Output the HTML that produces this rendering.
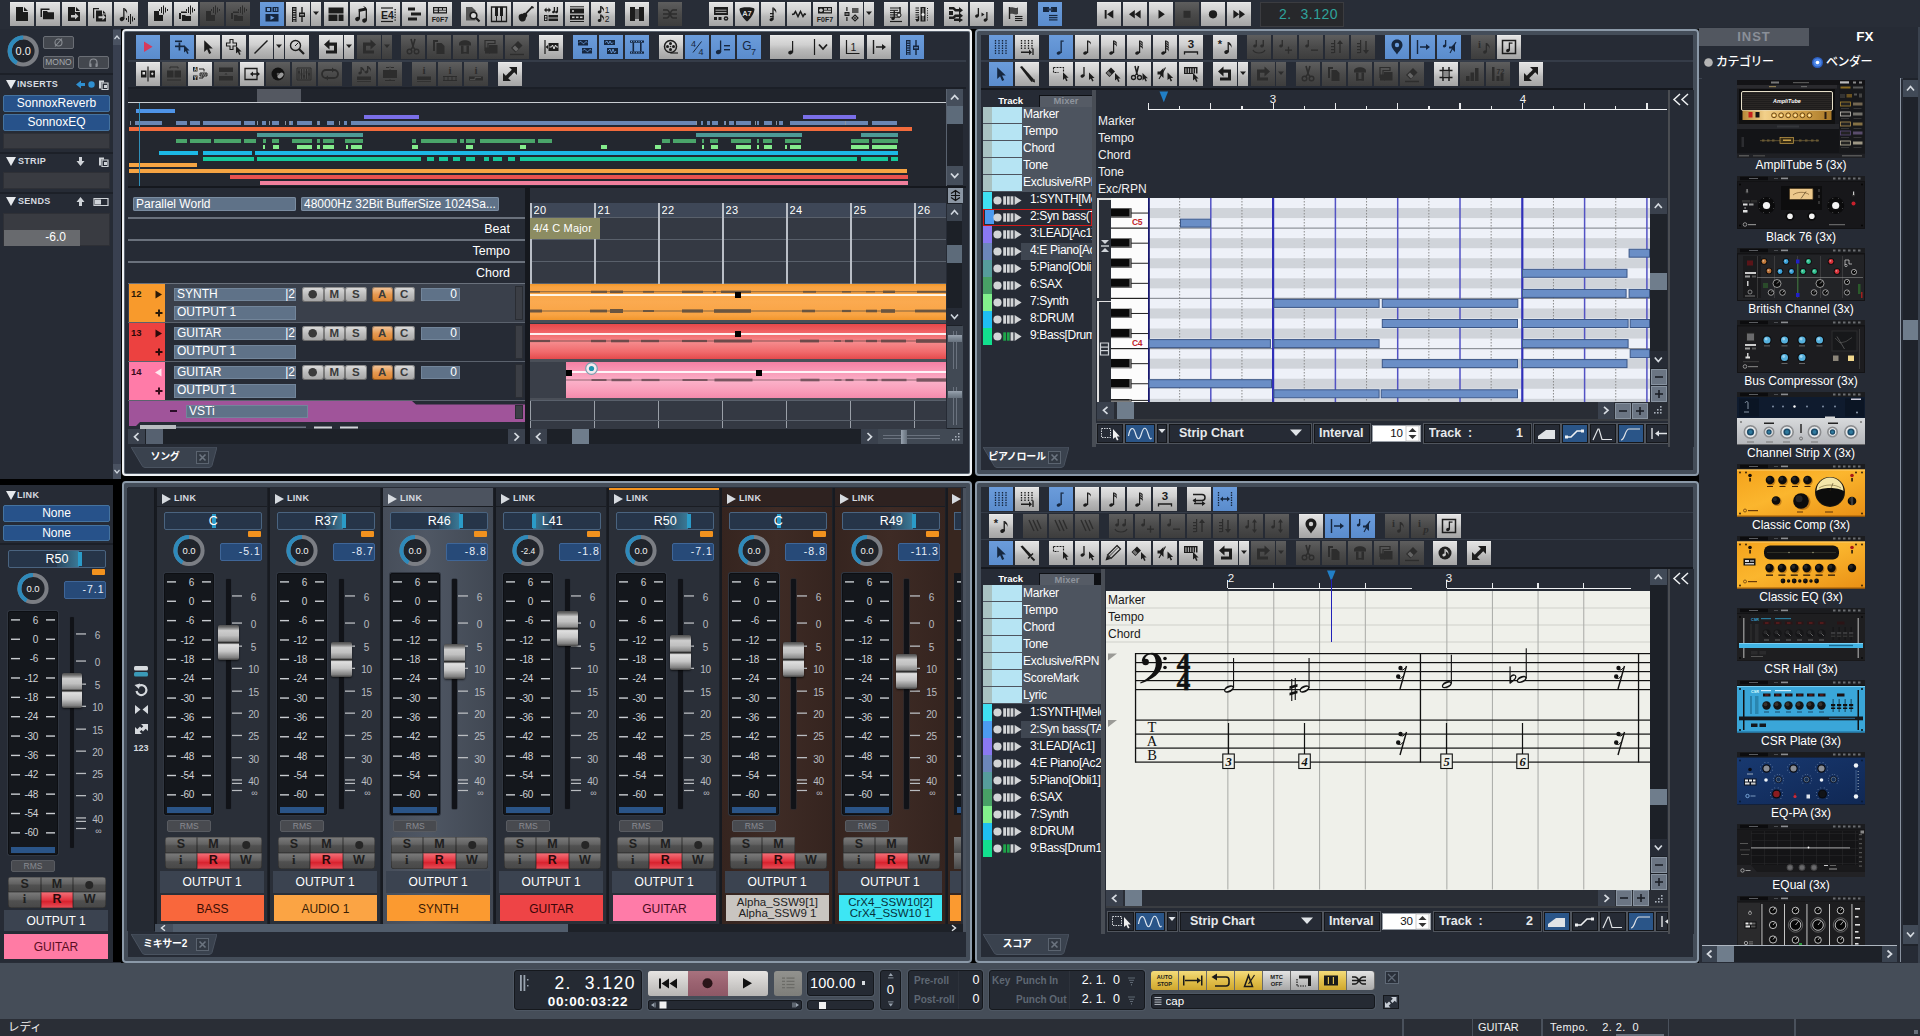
<!DOCTYPE html>
<html lang="ja"><head><meta charset="utf-8"><title>DAW</title><style>
html,body{margin:0;padding:0;background:#282d37;}
body{width:1920px;height:1036px;overflow:hidden;position:relative;font-family:"Liberation Sans","Noto Sans CJK JP",sans-serif;}
#r{position:absolute;left:0;top:0;width:1920px;height:1036px;overflow:hidden;background:#282d37;}
#r div,#r svg{position:absolute;box-sizing:border-box;}
#r svg svg{position:static}
.tb svg{left:0;top:0;}
.tb{overflow:hidden}
.bl{background:linear-gradient(#e4e4e4,#d0d0d0 40%,#bababa 60%,#a4a4a4);color:#1c1c1c;box-shadow:inset 0 1px 0 rgba(255,255,255,.25);}
.bb{background:linear-gradient(#6b9cdb,#5a8ccd);color:#16273f;}
.bd{background:linear-gradient(#5e5e5e,#4a4a4a 50%,#3d3d3d);color:#2d2d2d;}
text{font-family:"Liberation Sans","Noto Sans CJK JP",sans-serif;}
.jp{font-family:"Liberation Sans","Noto Sans CJK JP",sans-serif;}
</style></head><body><div id="r">
<div style="left:0px;top:0px;width:1920px;height:29px;background:#282d37;"></div>
<div class="tb bl" style="left:10px;top:2px;width:24px;height:24px"><svg width="24" height="24" viewBox="0 0 24 24"><path d="M6 5h7v5h5v9h-12z" fill="currentColor" stroke="none" stroke-width="1" /><path d="M14 5l4 4h-4z" fill="currentColor" stroke="none" stroke-width="1" /></svg></div>
<div class="tb bl" style="left:36px;top:2px;width:24px;height:24px"><svg width="24" height="24" viewBox="0 0 24 24"><path d="M4.5 6.5h9v1.5h-7.5v7h-1.5z" fill="currentColor" stroke="none" stroke-width="1" /><path d="M7 9h4l1 1.2h6v7h-11z" fill="currentColor" stroke="none" stroke-width="1" /></svg></div>
<div class="tb bl" style="left:62px;top:2px;width:24px;height:24px"><svg width="24" height="24" viewBox="0 0 24 24"><path d="M6 5h7v5h5v9h-12z" fill="currentColor" stroke="none" stroke-width="1" /><path d="M14 5l4 4h-4z" fill="currentColor" stroke="none" stroke-width="1" /><path d="M9 13h4v-2l3.5 3.2-3.5 3.2v-2h-4z" fill="#c8c8c8" stroke="none" stroke-width="1" /></svg></div>
<div class="tb bl" style="left:88px;top:2px;width:24px;height:24px"><svg width="24" height="24" viewBox="0 0 24 24"><path d="M5 6h6v1.2h-4.8v9h-1.2z" fill="currentColor" stroke="none" stroke-width="1" /><path d="M8 8.5h6v4h4v7h-10z" fill="currentColor" stroke="none" stroke-width="1" /><path d="M15 8.5l3 3h-3z" fill="currentColor" stroke="none" stroke-width="1" /><path d="M10.5 14.2h4v-2l3.2 3-3.2 3v-2h-4z" fill="#c8c8c8" stroke="none" stroke-width="1" /></svg></div>
<div class="tb bl" style="left:114px;top:2px;width:24px;height:24px"><svg width="24" height="24" viewBox="0 0 24 24"><ellipse cx="8" cy="17" rx="2.4" ry="2" fill="currentColor" transform="rotate(-20 8 17)"/><rect x="9.2" y="6" width="1.3" height="11" fill="currentColor" /><path d="M10.4 6.0 c2 1.5 3.5 3 2.5 6 c0 -2 -1 -3 -2.5 -3.5z" fill="currentColor" stroke="none" stroke-width="1" /><rect x="12" y="16" width="1" height="2" fill="currentColor" /><rect x="14" y="14" width="1" height="6" fill="currentColor" /><rect x="16" y="12" width="1" height="10" fill="currentColor" /><rect x="18" y="14.5" width="1" height="5" fill="currentColor" /><rect x="20" y="16" width="1" height="2" fill="currentColor" /></svg></div>
<div class="tb bl" style="left:148px;top:2px;width:24px;height:24px"><svg width="24" height="24" viewBox="0 0 24 24"><path d="M6 9h5v4h4v6h-9z" fill="currentColor" stroke="none" stroke-width="1" /><rect x="11" y="7" width="1" height="2" fill="currentColor" /><rect x="13" y="5" width="1" height="6" fill="currentColor" /><rect x="15" y="3.5" width="1" height="9" fill="currentColor" /><rect x="17" y="5.5" width="1" height="5" fill="currentColor" /><rect x="19" y="7" width="1" height="2" fill="currentColor" /></svg></div>
<div class="tb bl" style="left:174px;top:2px;width:24px;height:24px"><svg width="24" height="24" viewBox="0 0 24 24"><path d="M5 11h2v-1.5h6v1.5h-6v6h-2z" fill="currentColor" stroke="none" stroke-width="1" /><path d="M8 13h3l1 1h5v5h-9z" fill="currentColor" stroke="none" stroke-width="1" /><rect x="12" y="7" width="1" height="2" fill="currentColor" /><rect x="14" y="5" width="1" height="6" fill="currentColor" /><rect x="16" y="3.5" width="1" height="9" fill="currentColor" /><rect x="18" y="5.5" width="1" height="5" fill="currentColor" /><rect x="20" y="7" width="1" height="2" fill="currentColor" /></svg></div>
<div class="tb bd" style="left:200px;top:2px;width:24px;height:24px"><svg width="24" height="24" viewBox="0 0 24 24"><path d="M6 9h5v4h4v6h-9z" fill="currentColor" stroke="none" stroke-width="1" /><rect x="11" y="7" width="1" height="2" fill="currentColor" /><rect x="13" y="5" width="1" height="6" fill="currentColor" /><rect x="15" y="3.5" width="1" height="9" fill="currentColor" /><rect x="17" y="5.5" width="1" height="5" fill="currentColor" /><rect x="19" y="7" width="1" height="2" fill="currentColor" /></svg></div>
<div class="tb bd" style="left:226px;top:2px;width:24px;height:24px"><svg width="24" height="24" viewBox="0 0 24 24"><path d="M5 11h2v-1.5h6v1.5h-6v6h-2z" fill="currentColor" stroke="none" stroke-width="1" /><path d="M8 13h3l1 1h5v5h-9z" fill="currentColor" stroke="none" stroke-width="1" /><rect x="12" y="7" width="1" height="2" fill="currentColor" /><rect x="14" y="5" width="1" height="6" fill="currentColor" /><rect x="16" y="3.5" width="1" height="9" fill="currentColor" /><rect x="18" y="5.5" width="1" height="5" fill="currentColor" /><rect x="20" y="7" width="1" height="2" fill="currentColor" /></svg></div>
<div class="tb bb" style="left:260px;top:2px;width:24px;height:24px"><svg width="24" height="24" viewBox="0 0 24 24"><rect x="5.5" y="5" width="6" height="5" fill="currentColor" /><rect x="12.5" y="5" width="6" height="5" fill="currentColor" /><rect x="5.5" y="12" width="13" height="7.5" fill="currentColor" /><path d="M10.5 13.5l4 2.2-4 2.2z" fill="#6b9cdb" stroke="none" stroke-width="1" /><rect x="14.2" y="6" width="1" height="3" fill="#6b9cdb" /><rect x="16.2" y="6" width="1" height="3" fill="#6b9cdb" /><rect x="7" y="6" width="3" height="3" fill="#6b9cdb" /></svg></div>
<div class="tb bl" style="left:286px;top:2px;width:24px;height:24px"><svg width="24" height="24" viewBox="0 0 24 24"><rect x="6" y="5" width="4.5" height="15" fill="currentColor" /><rect x="7" y="6.5" width="2.5" height="1" fill="#c6c6c6" /><rect x="7" y="8.9" width="2.5" height="1" fill="#c6c6c6" /><rect x="7" y="11.3" width="2.5" height="1" fill="#c6c6c6" /><rect x="7" y="13.7" width="2.5" height="1" fill="#c6c6c6" /><rect x="7" y="16.1" width="2.5" height="1" fill="#c6c6c6" /><rect x="7" y="18.5" width="2.5" height="1" fill="#c6c6c6" /><rect x="15.3" y="5" width="1.4" height="15" fill="currentColor" /><rect x="13" y="10.5" width="6" height="4.5" fill="currentColor" /><rect x="14" y="12.3" width="4" height="1" fill="#c6c6c6" /></svg></div>
<div class="tb bl" style="left:324px;top:2px;width:24px;height:24px"><svg width="24" height="24" viewBox="0 0 24 24"><rect x="4.5" y="5.5" width="15" height="6" fill="currentColor" /><rect x="4.5" y="12.5" width="9" height="6.5" fill="currentColor" /><rect x="14.5" y="12.5" width="5" height="6.5" fill="currentColor" /></svg></div>
<div class="tb bl" style="left:350px;top:2px;width:24px;height:24px"><svg width="24" height="24" viewBox="0 0 24 24"><ellipse cx="7.5" cy="17" rx="2.4" ry="2" fill="currentColor" transform="rotate(-20 7.5 17)"/><rect x="8.7" y="7" width="1.3" height="10" fill="currentColor" /><ellipse cx="14.5" cy="18.5" rx="2.4" ry="2" fill="currentColor" transform="rotate(-20 14.5 18.5)"/><rect x="15.7" y="7" width="1.3" height="11.5" fill="currentColor" /><path d="M8.8 7l7.2-1.5v3l-7.2 1.5z" fill="currentColor" stroke="none" stroke-width="1" /><path d="M8.8 3.5l7.2 1.5v0.0z" fill="currentColor" stroke="none" stroke-width="1" /><path d="M13 4c3 0.5 4 2.5 4 4.5" fill="currentColor" stroke="none" stroke-width="1" /></svg></div>
<div class="tb bl" style="left:376px;top:2px;width:24px;height:24px"><svg width="24" height="24" viewBox="0 0 24 24"><text x="5" y="17" font-size="10.5" fill="currentColor" text-anchor="start" font-weight="bold" >E4</text><line x1="5" y1="6" x2="17" y2="6" stroke="currentColor" stroke-width="1.2" /><line x1="5" y1="19.5" x2="17" y2="19.5" stroke="currentColor" stroke-width="1.2" /><rect x="18.5" y="7" width="1.3" height="1.3" fill="currentColor" /><rect x="18.5" y="9.6" width="1.3" height="1.3" fill="currentColor" /><rect x="18.5" y="12.2" width="1.3" height="1.3" fill="currentColor" /><rect x="18.5" y="14.8" width="1.3" height="1.3" fill="currentColor" /><rect x="18.5" y="17.4" width="1.3" height="1.3" fill="currentColor" /></svg></div>
<div class="tb bl" style="left:402px;top:2px;width:24px;height:24px"><svg width="24" height="24" viewBox="0 0 24 24"><rect x="6" y="5.5" width="7" height="3" fill="currentColor" /><rect x="9" y="10.5" width="10" height="3" fill="currentColor" /><rect x="6" y="15.5" width="9" height="3" fill="currentColor" /></svg></div>
<div class="tb bl" style="left:428px;top:2px;width:24px;height:24px"><svg width="24" height="24" viewBox="0 0 24 24"><rect x="5" y="5" width="14" height="6.5" fill="currentColor" /><rect x="6.2" y="6.2" width="3.6" height="1.6" fill="#c6c6c6" /><rect x="6.2" y="8.6" width="3.6" height="1.6" fill="#c6c6c6" /><rect x="11" y="6.2" width="3" height="1.6" fill="#c6c6c6" /><rect x="15" y="6.2" width="3" height="1.6" fill="#c6c6c6" /><rect x="11" y="8.6" width="7" height="1.6" fill="#c6c6c6" /><text x="12" y="19.5" font-size="7" fill="currentColor" text-anchor="middle" font-weight="bold" >F0F7</text></svg></div>
<div class="tb bl" style="left:461px;top:2px;width:24px;height:24px"><svg width="24" height="24" viewBox="0 0 24 24"><path d="M5 5h6l3.5 3.5v10h-9.5z" fill="#555" stroke="none" stroke-width="1" /><circle cx="12.5" cy="13.5" r="3.3" fill="#d8d8d8" stroke="currentColor" stroke-width="1.6" /><line x1="15" y1="16" x2="18.5" y2="19.5" stroke="currentColor" stroke-width="2.2" /></svg></div>
<div class="tb bl" style="left:487px;top:2px;width:24px;height:24px"><svg width="24" height="24" viewBox="0 0 24 24"><path d="M4.5 5h15v14.5h-15z" fill="none" stroke="currentColor" stroke-width="1.3" /><line x1="9.5" y1="5" x2="9.5" y2="19.5" stroke="currentColor" stroke-width="1" /><line x1="14.5" y1="5" x2="14.5" y2="19.5" stroke="currentColor" stroke-width="1" /><rect x="8" y="5" width="3" height="9" fill="currentColor" /><rect x="13" y="5" width="3" height="9" fill="currentColor" /></svg></div>
<div class="tb bl" style="left:513px;top:2px;width:24px;height:24px"><svg width="24" height="24" viewBox="0 0 24 24"><path d="M19.5 4.5l-7.5 8" fill="none" stroke="currentColor" stroke-width="1.8" /><path d="M18 4l3 1-1 2z" fill="currentColor" stroke="none" stroke-width="1" /><path d="M6 13c1.5-1.5 3-0.5 4-1.5s2.5-1 3.5 0 1 2.5 0 3.5-0.5 2.5-1.5 3.5-3 1.5-4.5 0.5-2.5-4-1.5-6z" fill="currentColor" stroke="none" stroke-width="1" /></svg></div>
<div class="tb bl" style="left:539px;top:2px;width:24px;height:24px"><svg width="24" height="24" viewBox="0 0 24 24"><path d="M5 8l2.5-2.5v1.7h2v-1.7l2.500 2.5-2.5 2.5v-1.700h-2v1.700z" fill="currentColor" stroke="none" stroke-width="1" /><ellipse cx="14.5" cy="10" rx="1.44" ry="1.2" fill="currentColor" transform="rotate(-20 14.5 10)"/><rect x="14.74" y="5" width="1.3" height="5" fill="currentColor" /><ellipse cx="17.5" cy="10" rx="1.44" ry="1.2" fill="currentColor" transform="rotate(-20 17.5 10)"/><rect x="17.74" y="5" width="1.3" height="5" fill="currentColor" /><rect x="5" y="13" width="3.5" height="6" fill="currentColor" /><rect x="9.5" y="13" width="9.5" height="2.5" fill="currentColor" /><rect x="9.5" y="16.5" width="9.5" height="2.5" fill="currentColor" /><rect x="6" y="14" width="1.5" height="1.5" fill="#c6c6c6" /><rect x="6" y="16.5" width="1.5" height="1.5" fill="#c6c6c6" /></svg></div>
<div class="tb bl" style="left:565px;top:2px;width:24px;height:24px"><svg width="24" height="24" viewBox="0 0 24 24"><line x1="5" y1="4.8" x2="19" y2="4.8" stroke="currentColor" stroke-width="1" /><rect x="5" y="6.5" width="14" height="5" fill="currentColor" /><rect x="5" y="12.8" width="14" height="5" fill="currentColor" /><line x1="5" y1="19.5" x2="19" y2="19.5" stroke="currentColor" stroke-width="1" /><rect x="7" y="8.2" width="2" height="1.6" fill="#c6c6c6" /><rect x="7" y="14.5" width="2.5" height="1.6" fill="#c6c6c6" /><rect x="11" y="14.5" width="2.5" height="1.6" fill="#c6c6c6" /><rect x="15" y="14.5" width="2.5" height="1.6" fill="#c6c6c6" /></svg></div>
<div class="tb bl" style="left:591px;top:2px;width:24px;height:24px"><svg width="24" height="24" viewBox="0 0 24 24"><ellipse cx="8.5" cy="10" rx="1.8" ry="1.5" fill="currentColor" transform="rotate(-20 8.5 10)"/><rect x="9.1" y="4" width="1.3" height="6" fill="currentColor" /><path d="M10.3 4.0 c2 1.5 3.5 3 2.5 6 c0 -2 -1 -3 -2.5 -3.5z" fill="currentColor" stroke="none" stroke-width="1" /><ellipse cx="8.5" cy="18.5" rx="1.8" ry="1.5" fill="currentColor" transform="rotate(-20 8.5 18.5)"/><rect x="9.1" y="12.5" width="1.3" height="6" fill="currentColor" /><path d="M10.3 12.5 c2 1.5 3.5 3 2.5 6 c0 -2 -1 -3 -2.5 -3.5z" fill="currentColor" stroke="none" stroke-width="1" /><text x="16" y="11" font-size="8.5" fill="currentColor" text-anchor="middle" font-weight="normal" >1</text><text x="16" y="19.5" font-size="8.5" fill="currentColor" text-anchor="middle" font-weight="normal" >2</text></svg></div>
<div class="tb bl" style="left:625px;top:2px;width:24px;height:24px"><svg width="24" height="24" viewBox="0 0 24 24"><rect x="5" y="5" width="5" height="14" fill="currentColor" /><rect x="14" y="5" width="5" height="14" fill="currentColor" /><rect x="10" y="7" width="4" height="10" fill="#555" /></svg></div>
<div class="tb bd" style="left:658px;top:2px;width:24px;height:24px"><svg width="24" height="24" viewBox="0 0 24 24"><path d="M5 8h4c3 0 3 8 6 8h4M5 12h14M5 16h4c3 0 3-8 6-8h4" fill="none" stroke="currentColor" stroke-width="1.6" /></svg></div>
<div class="tb bl" style="left:709px;top:2px;width:24px;height:24px"><svg width="24" height="24" viewBox="0 0 24 24"><rect x="5" y="5" width="14" height="8" fill="currentColor" /><line x1="6.5" y1="8.2" x2="17.5" y2="8.2" stroke="#c6c6c6" stroke-width="0.8" /><line x1="6.5" y1="10.5" x2="17.5" y2="10.5" stroke="#c6c6c6" stroke-width="0.8" /><rect x="5" y="15" width="3" height="3" fill="currentColor" /><rect x="9.5" y="15" width="3" height="3" fill="currentColor" /><circle cx="17" cy="16.5" r="2.3" fill="currentColor" stroke="none" stroke-width="1" /><circle cx="17" cy="16.5" r="0.8" fill="#c6c6c6" stroke="none" stroke-width="1" /></svg></div>
<div class="tb bl" style="left:735px;top:2px;width:24px;height:24px"><svg width="24" height="24" viewBox="0 0 24 24"><path d="M4.5 7c0-2.500 15-2.500 15 0 0 4-4 10-7.5 12.500-3.500-2.500-7.500-8.500-7.500-12.500z" fill="currentColor" stroke="none" stroke-width="1" /><text x="12" y="13.5" font-size="7.5" fill="#d8d8d8" text-anchor="middle" font-weight="bold" >A7</text></svg></div>
<div class="tb bl" style="left:761px;top:2px;width:24px;height:24px"><svg width="24" height="24" viewBox="0 0 24 24"><ellipse cx="10.5" cy="17.5" rx="2.04" ry="1.7" fill="currentColor" transform="rotate(-20 10.5 17.5)"/><rect x="11.34" y="5.5" width="1.3" height="12" fill="currentColor" /><path d="M12.5 5.5 c2 1.5 3.5 3 2.5 6 c0 -2 -1 -3 -2.5 -3.5z" fill="currentColor" stroke="none" stroke-width="1" /><rect x="9" y="11" width="3.5" height="1.2" fill="currentColor" /><rect x="9" y="14" width="3.5" height="1.2" fill="currentColor" /></svg></div>
<div class="tb bl" style="left:787px;top:2px;width:24px;height:24px"><svg width="24" height="24" viewBox="0 0 24 24"><path d="M5 12.500l2-0.500 1.500-2.500 2.500 5 2.500-5 2.500 5 1.500-2.500 1.500 0.500" fill="none" stroke="currentColor" stroke-width="1.5" /></svg></div>
<div class="tb bl" style="left:813px;top:2px;width:24px;height:24px"><svg width="24" height="24" viewBox="0 0 24 24"><rect x="5" y="5" width="14" height="6.5" fill="currentColor" /><circle cx="8" cy="8.2" r="1.8" fill="#c6c6c6" stroke="none" stroke-width="1" /><rect x="11" y="6.2" width="3" height="1.6" fill="#c6c6c6" /><rect x="15" y="6.2" width="3" height="1.6" fill="#c6c6c6" /><rect x="11" y="8.6" width="7" height="1.6" fill="#c6c6c6" /><text x="12" y="19.5" font-size="7" fill="currentColor" text-anchor="middle" font-weight="bold" >F0F7</text></svg></div>
<div class="tb bl" style="left:839px;top:2px;width:24px;height:24px"><svg width="24" height="24" viewBox="0 0 24 24"><rect x="7.3" y="5" width="1.2" height="4" fill="currentColor" /><rect x="5.5" y="10" width="5" height="4" fill="currentColor" /><rect x="6.5" y="11.5" width="3" height="1" fill="#c6c6c6" /><rect x="7.3" y="15" width="1.2" height="4" fill="currentColor" /><rect x="13" y="6" width="6.5" height="5" fill="#555" /><path d="M16 13l3 3-3 3-3-3z" fill="none" stroke="currentColor" stroke-width="1.2" /><circle cx="16" cy="16" r="0.9" fill="currentColor" stroke="none" stroke-width="1" /></svg></div>
<div class="tb bl" style="left:884px;top:2px;width:24px;height:24px"><svg width="24" height="24" viewBox="0 0 24 24"><line x1="6" y1="6" x2="16" y2="6" stroke="currentColor" stroke-width="1" /><line x1="6" y1="8.3" x2="14" y2="8.3" stroke="currentColor" stroke-width="1" /><line x1="6" y1="10.6" x2="16" y2="10.6" stroke="currentColor" stroke-width="1" /><line x1="6" y1="12.9" x2="14" y2="12.9" stroke="currentColor" stroke-width="1" /><line x1="6" y1="15.2" x2="16" y2="15.2" stroke="currentColor" stroke-width="1" /><line x1="6" y1="19.5" x2="18" y2="19.5" stroke="currentColor" stroke-width="1.2" /><ellipse cx="9" cy="16.5" rx="1.8" ry="1.5" fill="currentColor" transform="rotate(-20 9 16.5)"/><rect x="9.6" y="8.5" width="1.3" height="8" fill="currentColor" /><path d="M16 5v10" fill="none" stroke="currentColor" stroke-width="1.5" /><circle cx="15" cy="13" r="2" fill="#ddd" stroke="currentColor" stroke-width="1" /></svg></div>
<div class="tb bl" style="left:910px;top:2px;width:24px;height:24px"><svg width="24" height="24" viewBox="0 0 24 24"><rect x="5.5" y="5.5" width="3.5" height="1" fill="currentColor" /><rect x="5.5" y="7.8" width="3.5" height="1" fill="currentColor" /><rect x="5.5" y="10.1" width="3.5" height="1" fill="currentColor" /><rect x="5.5" y="12.4" width="3.5" height="1" fill="currentColor" /><rect x="5.5" y="14.7" width="3.5" height="1" fill="currentColor" /><rect x="5.5" y="17" width="3.5" height="1" fill="currentColor" /><rect x="10.5" y="5" width="5" height="14.5" fill="currentColor" /><rect x="12.5" y="6" width="1" height="12.5" fill="#c6c6c6" /><circle cx="13" cy="12.5" r="1.5" fill="#eee" stroke="none" stroke-width="1" /><rect x="17" y="6" width="1" height="1" fill="currentColor" /><rect x="17" y="8.3" width="1" height="1" fill="currentColor" /><rect x="17" y="10.6" width="1" height="1" fill="currentColor" /><rect x="17" y="12.9" width="1" height="1" fill="currentColor" /><rect x="17" y="15.2" width="1" height="1" fill="currentColor" /><rect x="17" y="17.5" width="1" height="1" fill="currentColor" /><ellipse cx="7.5" cy="18.2" rx="1.56" ry="1.3" fill="currentColor" transform="rotate(-20 7.5 18.2)"/><rect x="7.86" y="14.2" width="1.3" height="4" fill="currentColor" /></svg></div>
<div class="tb bl" style="left:944px;top:2px;width:24px;height:24px"><svg width="24" height="24" viewBox="0 0 24 24"><path d="M5 5h5l2 2h3v-2l4 3.200-4 3.200v-2h-4l-2-2h-4z" fill="currentColor" stroke="none" stroke-width="1" /><path d="M5 14.500h4l2-2h4v-2l4 3.200-4 3.200v-2h-3l-2 2h-5z" fill="currentColor" stroke="none" stroke-width="1" /><rect x="5" y="9" width="4" height="4" fill="currentColor" /><path d="M10 16.500h5v-1l4 2.500-4 2.500v-1.500h-5z" fill="currentColor" stroke="none" stroke-width="1" /></svg></div>
<div class="tb bl" style="left:970px;top:2px;width:24px;height:24px"><svg width="24" height="24" viewBox="0 0 24 24"><ellipse cx="7" cy="14" rx="1.92" ry="1.6" fill="currentColor" transform="rotate(-20 7 14)"/><rect x="7.72" y="6" width="1.3" height="8" fill="currentColor" /><path d="M11.500 10.500l3 2-3 2z" fill="currentColor" stroke="none" stroke-width="1" /><ellipse cx="15.5" cy="18" rx="1.92" ry="1.6" fill="currentColor" transform="rotate(-20 15.5 18)"/><rect x="16.22" y="10" width="1.3" height="8" fill="currentColor" /></svg></div>
<div class="tb bl" style="left:1003px;top:2px;width:24px;height:24px"><svg width="24" height="24" viewBox="0 0 24 24"><line x1="6.5" y1="5" x2="6.5" y2="17" stroke="currentColor" stroke-width="1.4" /><path d="M7 5.500c3-1 4 1.500 8 0v6.500c-4 1.500-5-1-8 0z" fill="#444" stroke="none" stroke-width="1" /><line x1="12" y1="14.5" x2="19.5" y2="14.5" stroke="currentColor" stroke-width="1.1" /><line x1="12" y1="16.5" x2="19.5" y2="16.5" stroke="currentColor" stroke-width="1.1" /><line x1="12" y1="18.5" x2="19.5" y2="18.5" stroke="currentColor" stroke-width="1.1" /></svg></div>
<div class="tb bb" style="left:1038px;top:2px;width:24px;height:24px"><svg width="24" height="24" viewBox="0 0 24 24"><rect x="5" y="5" width="6" height="5" fill="currentColor" /><rect x="13" y="5" width="6" height="5" fill="currentColor" /><rect x="9.5" y="6.5" width="5" height="2" fill="#2c3f5c" /><line x1="11" y1="13.5" x2="19.5" y2="13.5" stroke="currentColor" stroke-width="1.2" /><line x1="11" y1="15.7" x2="19.5" y2="15.7" stroke="currentColor" stroke-width="1.2" /><line x1="11" y1="17.9" x2="19.5" y2="17.9" stroke="currentColor" stroke-width="1.2" /></svg></div>
<div class="tb bl" style="left:1097px;top:2px;width:24px;height:24px"><svg width="24" height="24" viewBox="0 0 24 24"><rect x="7.7" y="8" width="1.9" height="8.6" fill="currentColor" /><path d="M16.300 8v8.600l-6.300-4.300z" fill="currentColor" stroke="none" stroke-width="1" /></svg></div>
<div class="tb bl" style="left:1123px;top:2px;width:24px;height:24px"><svg width="24" height="24" viewBox="0 0 24 24"><path d="M11.800 8v8.600l-5.800-4.300z" fill="currentColor" stroke="none" stroke-width="1" /><path d="M17.600 8v8.600l-5.800-4.300z" fill="currentColor" stroke="none" stroke-width="1" /></svg></div>
<div class="tb bl" style="left:1149px;top:2px;width:24px;height:24px"><svg width="24" height="24" viewBox="0 0 24 24"><path d="M9.500 7.800l6.300 4.500-6.300 4.500z" fill="currentColor" stroke="none" stroke-width="1" /></svg></div>
<div class="tb bd" style="left:1175px;top:2px;width:24px;height:24px"><svg width="24" height="24" viewBox="0 0 24 24"><rect x="8.5" y="8.8" width="7" height="7" fill="currentColor" /></svg></div>
<div class="tb bl" style="left:1201px;top:2px;width:24px;height:24px"><svg width="24" height="24" viewBox="0 0 24 24"><circle cx="12" cy="12.3" r="4.1" fill="currentColor" stroke="none" stroke-width="1" /></svg></div>
<div class="tb bl" style="left:1227px;top:2px;width:24px;height:24px"><svg width="24" height="24" viewBox="0 0 24 24"><path d="M6.400 8v8.600l5.800-4.300z" fill="currentColor" stroke="none" stroke-width="1" /><path d="M12.200 8v8.600l5.800-4.300z" fill="currentColor" stroke="none" stroke-width="1" /></svg></div>
<div class="tb bl" style="left:311px;top:2px;width:10px;height:24px"><svg width="10" height="24" viewBox="0 0 10 24"><path d="M2 9.500h6l-3 3.500z" fill="currentColor" stroke="none" stroke-width="1" /></svg></div>
<div class="tb bl" style="left:864px;top:2px;width:10px;height:24px"><svg width="10" height="24" viewBox="0 0 10 24"><path d="M2 9.500h6l-3 3.500z" fill="currentColor" stroke="none" stroke-width="1" /></svg></div>
<div style="left:1260px;top:2px;width:84px;height:25px;background:#27282b;border:1px solid #3b3c40;"></div>
<div style="left:1262px;top:2px;width:76px;height:25px;line-height:25px;font-size:14px;color:#2fa39b;text-align:right;white-space:nowrap;overflow:hidden;letter-spacing:0.5px;">2.&nbsp; 3.120</div>
<div style="left:121px;top:29px;width:1580px;height:934px;background:#000;"></div>
<div style="left:0px;top:29px;width:113px;height:450px;background:#262b35;"></div>
<div style="left:0px;top:479px;width:113px;height:6px;background:#000;"></div>
<div style="left:0px;top:485px;width:113px;height:477px;background:#262b35;"></div>
<div style="left:113px;top:29px;width:8px;height:450px;background:#394050;"></div>
<div style="left:113px;top:30px;width:8px;height:15px;background:#4a5261;"></div>
<svg style="left:113px;top:30px;" width="8" height="15" viewBox="0 0 8 15"><path d="M1.500 9l2.500-3 2.500 3" fill="none" stroke="#cfd6de" stroke-width="1.2" /></svg>
<div style="left:113px;top:464px;width:8px;height:15px;background:#4a5261;"></div>
<svg style="left:113px;top:464px;" width="8" height="15" viewBox="0 0 8 15"><path d="M1.500 6l2.500 3 2.500-3" fill="none" stroke="#cfd6de" stroke-width="1.2" /></svg>
<div style="left:121px;top:29px;width:2px;height:933px;background:#000;"></div>
<div style="left:113px;top:479px;width:10px;height:483px;background:#000;"></div>
<svg style="left:2px;top:30px;" width="42" height="42" viewBox="0 0 42 42"><circle cx="21.2" cy="21" r="11.7" fill="#20242b" stroke="none" stroke-width="1" /><circle cx="21.2" cy="21" r="13.5" fill="none" stroke="#7b7e84" stroke-width="4.2" /><path d="M14.86 32.92 A13.5 13.5 0 0 1 21.20 7.50" fill="none" stroke="#2e8abb" stroke-width="4.2"/><text x="21.2" y="24.96" font-size="11" fill="#f2f2f2" text-anchor="middle" font-weight="normal" >0.0</text></svg>
<div style="left:43px;top:36px;width:31px;height:13px;background:#43474e;border:1px solid #6a6e75;border-radius:2px;"></div>
<svg style="left:43px;top:36px;" width="31" height="13" viewBox="0 0 31 13"><circle cx="15.5" cy="6.5" r="3.5" fill="none" stroke="#8a8e94" stroke-width="1.1" /><line x1="12" y1="10.5" x2="19" y2="2.5" stroke="#8a8e94" stroke-width="1.1" /></svg>
<div style="left:43px;top:56px;width:31px;height:13px;background:#43474e;border:1px solid #6a6e75;border-radius:2px;"></div>
<div style="left:43px;top:56px;width:31px;height:13px;line-height:13px;font-size:8.5px;color:#a3a7ad;text-align:center;white-space:nowrap;overflow:hidden;">MONO</div>
<div style="left:78px;top:56px;width:31px;height:13px;background:#43474e;border:1px solid #6a6e75;border-radius:2px;"></div>
<svg style="left:78px;top:56px;" width="31" height="13" viewBox="0 0 31 13"><path d="M12 10v-3.500a3.500 3.500 0 0 1 7 0v3.500" fill="none" stroke="#8a8e94" stroke-width="1.2" /><rect x="11.5" y="7.5" width="2" height="3.5" fill="#8a8e94" /><rect x="17.5" y="7.5" width="2" height="3.5" fill="#8a8e94" /></svg>
<div style="left:0px;top:73px;width:113px;height:2px;background:#1c2028;"></div>
<svg style="left:6px;top:80px;" width="10" height="9" viewBox="0 0 10 9"><path d="M0 0h10l-5 9z" fill="#e6e9ec" stroke="none" stroke-width="1" /></svg>
<div style="left:17px;top:78px;width:60px;height:13px;line-height:13px;font-size:9px;color:#d7dbe0;text-align:left;white-space:nowrap;overflow:hidden;font-weight:bold;letter-spacing:0.3px;">INSERTS</div>
<svg style="left:74px;top:78px;" width="40" height="13" viewBox="0 0 40 13"><path d="M2 6.500l5-4v2.500h4v3h-4v2.500z" fill="#2f8fd0" stroke="none" stroke-width="1" /><circle cx="17.5" cy="6.5" r="3.2" fill="#2f8fd0" stroke="none" stroke-width="1" /><path d="M25 2.500h5v2h-3v6h-2z" fill="#cfd3d8" stroke="none" stroke-width="1" /><path d="M28 5h6v6.500h-6z" fill="none" stroke="#cfd3d8" stroke-width="1.2" /><rect x="30" y="7" width="3" height="3" fill="#cfd3d8" /></svg>
<div style="left:3px;top:95px;width:107px;height:16.5px;background:#27528a;border:1px solid #45739f;border-radius:2px;"></div>
<div style="left:3px;top:95px;width:107px;height:16.5px;line-height:16.5px;font-size:12px;color:#fff;text-align:center;white-space:nowrap;overflow:hidden;">SonnoxReverb</div>
<div style="left:3px;top:114px;width:107px;height:16.5px;background:#27528a;border:1px solid #45739f;border-radius:2px;"></div>
<div style="left:3px;top:114px;width:107px;height:16.5px;line-height:16.5px;font-size:12px;color:#fff;text-align:center;white-space:nowrap;overflow:hidden;">SonnoxEQ</div>
<div style="left:3px;top:133px;width:107px;height:16px;background:#393b41;border:1px solid #2e3036;"></div>
<div style="left:0px;top:152px;width:113px;height:2px;background:#1c2028;"></div>
<svg style="left:6px;top:157px;" width="10" height="9" viewBox="0 0 10 9"><path d="M0 0h10l-5 9z" fill="#e6e9ec" stroke="none" stroke-width="1" /></svg>
<div style="left:18px;top:155px;width:60px;height:13px;line-height:13px;font-size:9px;color:#d7dbe0;text-align:left;white-space:nowrap;overflow:hidden;font-weight:bold;letter-spacing:0.3px;">STRIP</div>
<svg style="left:74px;top:155px;" width="40" height="13" viewBox="0 0 40 13"><path d="M6.500 11l-4-5h2.500v-4h3v4h2.500z" fill="#cfd3d8" stroke="none" stroke-width="1" /><path d="M25 2.500h5v2h-3v6h-2z" fill="#cfd3d8" stroke="none" stroke-width="1" /><path d="M28 5h6v6.500h-6z" fill="none" stroke="#cfd3d8" stroke-width="1.2" /><rect x="30" y="7" width="3" height="3" fill="#cfd3d8" /></svg>
<div style="left:3px;top:172px;width:107px;height:17px;background:#393b41;border:1px solid #2e3036;"></div>
<div style="left:0px;top:192px;width:113px;height:2px;background:#1c2028;"></div>
<svg style="left:6px;top:197px;" width="10" height="9" viewBox="0 0 10 9"><path d="M0 0h10l-5 9z" fill="#e6e9ec" stroke="none" stroke-width="1" /></svg>
<div style="left:18px;top:195px;width:60px;height:13px;line-height:13px;font-size:9px;color:#d7dbe0;text-align:left;white-space:nowrap;overflow:hidden;font-weight:bold;letter-spacing:0.3px;">SENDS</div>
<svg style="left:74px;top:195px;" width="40" height="13" viewBox="0 0 40 13"><path d="M6.500 2l4 5h-2.500v4h-3v-4h-2.500z" fill="#cfd3d8" stroke="none" stroke-width="1" /><path d="M20 3.500h14v7h-14z" fill="none" stroke="#cfd3d8" stroke-width="1.2" /><rect x="21" y="4.5" width="6" height="5" fill="#cfd3d8" /></svg>
<div style="left:3px;top:213px;width:107px;height:33px;background:#393b41;border:1px solid #2e3036;"></div>
<div style="left:4px;top:230px;width:76px;height:15.5px;background:#686a6e;"></div>
<div style="left:4px;top:230px;width:62px;height:15.5px;line-height:15.5px;font-size:12px;color:#fff;text-align:right;white-space:nowrap;overflow:hidden;">-6.0</div>
<svg style="left:6px;top:491px;" width="10" height="9" viewBox="0 0 10 9"><path d="M0 0h10l-5 9z" fill="#e6e9ec" stroke="none" stroke-width="1" /></svg>
<div style="left:17px;top:488.5px;width:60px;height:13px;line-height:13px;font-size:9px;color:#d7dbe0;text-align:left;white-space:nowrap;overflow:hidden;font-weight:bold;letter-spacing:0.3px;">LINK</div>
<div style="left:3px;top:505px;width:107px;height:16.5px;background:#27528a;border:1px solid #45739f;border-radius:2px;"></div>
<div style="left:3px;top:505px;width:107px;height:16.5px;line-height:16.5px;font-size:12px;color:#fff;text-align:center;white-space:nowrap;overflow:hidden;">None</div>
<div style="left:3px;top:524.5px;width:107px;height:16.5px;background:#27528a;border:1px solid #45739f;border-radius:2px;"></div>
<div style="left:3px;top:524.5px;width:107px;height:16.5px;line-height:16.5px;font-size:12px;color:#fff;text-align:center;white-space:nowrap;overflow:hidden;">None</div>
<div style="left:0px;top:543px;width:113px;height:1.5px;background:#1c2028;"></div>
<div style="left:8px;top:550px;width:98px;height:18px;background:#263549;border:1px solid #4a6480;border-radius:2px;"></div>
<div style="left:57px;top:551px;width:22px;height:16px;background:linear-gradient(90deg,#2a465e,#3a7a98);"></div>
<div style="left:77.5px;top:552px;width:4px;height:14px;background:#2b9bc8;"></div>
<div style="left:8px;top:550px;width:98px;height:18px;line-height:18px;font-size:12.5px;color:#fff;text-align:center;white-space:nowrap;overflow:hidden;">R50</div>
<div style="left:91.5px;top:568.8px;width:13px;height:6px;background:#f2921e;border-radius:1px;"></div>
<svg style="left:13px;top:570px;" width="40" height="40" viewBox="0 0 40 40"><circle cx="20" cy="18.5" r="11.9" fill="#20242b" stroke="none" stroke-width="1" /><circle cx="20" cy="18.5" r="13.6" fill="none" stroke="#7b7e84" stroke-width="4" /><path d="M13.62 30.51 A13.6 13.6 0 0 1 20.00 4.90" fill="none" stroke="#2e8abb" stroke-width="4"/><text x="20" y="21.92" font-size="9.5" fill="#f2f2f2" text-anchor="middle" font-weight="normal" >0.0</text></svg>
<div style="left:64px;top:581px;width:42px;height:17.5px;background:#274a78;border:1px solid #3f6698;border-radius:2px;"></div>
<div style="left:64px;top:581px;width:40.5px;height:17.5px;line-height:17.5px;font-size:10.5px;color:#e8eef8;text-align:right;white-space:nowrap;overflow:hidden;letter-spacing:1px;">-7.1</div>
<div style="left:8px;top:610.5px;width:50px;height:244px;background:#14171c;border:1px solid #0d0f13;border-radius:2px;box-shadow:0 0 0 1px #303640;"></div>
<svg style="left:8px;top:610.5px;" width="50" height="244" viewBox="0 0 50 244"><rect x="3" y="8.2" width="9" height="1.4" fill="#c9ccd0" /><rect x="38" y="8.2" width="9" height="1.4" fill="#c9ccd0" /><text x="30" y="12.5" font-size="10" fill="#cfd2d6" text-anchor="end" font-weight="normal" letter-spacing="-0.3">6</text><rect x="3" y="27.56" width="9" height="1.4" fill="#c9ccd0" /><rect x="38" y="27.56" width="9" height="1.4" fill="#c9ccd0" /><text x="30" y="31.86" font-size="10" fill="#cfd2d6" text-anchor="end" font-weight="normal" letter-spacing="-0.3">0</text><rect x="3" y="46.92" width="9" height="1.4" fill="#c9ccd0" /><rect x="38" y="46.92" width="9" height="1.4" fill="#c9ccd0" /><text x="30" y="51.22" font-size="10" fill="#cfd2d6" text-anchor="end" font-weight="normal" letter-spacing="-0.3">-6</text><rect x="3" y="66.28" width="9" height="1.4" fill="#c9ccd0" /><rect x="38" y="66.28" width="9" height="1.4" fill="#c9ccd0" /><text x="30" y="70.58" font-size="10" fill="#cfd2d6" text-anchor="end" font-weight="normal" letter-spacing="-0.3">-12</text><rect x="3" y="85.64" width="9" height="1.4" fill="#c9ccd0" /><rect x="38" y="85.64" width="9" height="1.4" fill="#c9ccd0" /><text x="30" y="89.94" font-size="10" fill="#cfd2d6" text-anchor="end" font-weight="normal" letter-spacing="-0.3">-18</text><rect x="3" y="105" width="9" height="1.4" fill="#c9ccd0" /><rect x="38" y="105" width="9" height="1.4" fill="#c9ccd0" /><text x="30" y="109.3" font-size="10" fill="#cfd2d6" text-anchor="end" font-weight="normal" letter-spacing="-0.3">-24</text><rect x="3" y="124.36" width="9" height="1.4" fill="#c9ccd0" /><rect x="38" y="124.36" width="9" height="1.4" fill="#c9ccd0" /><text x="30" y="128.66" font-size="10" fill="#cfd2d6" text-anchor="end" font-weight="normal" letter-spacing="-0.3">-30</text><rect x="3" y="143.72" width="9" height="1.4" fill="#c9ccd0" /><rect x="38" y="143.72" width="9" height="1.4" fill="#c9ccd0" /><text x="30" y="148.02" font-size="10" fill="#cfd2d6" text-anchor="end" font-weight="normal" letter-spacing="-0.3">-36</text><rect x="3" y="163.08" width="9" height="1.4" fill="#c9ccd0" /><rect x="38" y="163.08" width="9" height="1.4" fill="#c9ccd0" /><text x="30" y="167.38" font-size="10" fill="#cfd2d6" text-anchor="end" font-weight="normal" letter-spacing="-0.3">-42</text><rect x="3" y="182.44" width="9" height="1.4" fill="#c9ccd0" /><rect x="38" y="182.44" width="9" height="1.4" fill="#c9ccd0" /><text x="30" y="186.74" font-size="10" fill="#cfd2d6" text-anchor="end" font-weight="normal" letter-spacing="-0.3">-48</text><rect x="3" y="201.8" width="9" height="1.4" fill="#c9ccd0" /><rect x="38" y="201.8" width="9" height="1.4" fill="#c9ccd0" /><text x="30" y="206.1" font-size="10" fill="#cfd2d6" text-anchor="end" font-weight="normal" letter-spacing="-0.3">-54</text><rect x="3" y="221.16" width="9" height="1.4" fill="#c9ccd0" /><rect x="38" y="221.16" width="9" height="1.4" fill="#c9ccd0" /><text x="30" y="225.46" font-size="10" fill="#cfd2d6" text-anchor="end" font-weight="normal" letter-spacing="-0.3">-60</text></svg>
<div style="left:11px;top:846.5px;width:44px;height:6px;background:#2a5487;"></div>
<div style="left:69.7px;top:616.5px;width:4.6px;height:231.5px;background:#111318;border-radius:1px;box-shadow:0 0 0 0.500px #252a32;"></div>
<svg style="left:76px;top:610.5px;" width="36" height="232" viewBox="0 0 36 232"><rect x="0" y="22.3" width="10" height="1.3" fill="#b9bcc0" /><text x="21.5" y="27.8" font-size="10" fill="#b9bcc0" text-anchor="middle" font-weight="normal" letter-spacing="-0.3">6</text><rect x="0" y="49.4" width="10" height="1.3" fill="#b9bcc0" /><text x="21.5" y="54.9" font-size="10" fill="#b9bcc0" text-anchor="middle" font-weight="normal" letter-spacing="-0.3">0</text><rect x="0" y="72.5" width="10" height="1.3" fill="#b9bcc0" /><text x="21.5" y="78" font-size="10" fill="#b9bcc0" text-anchor="middle" font-weight="normal" letter-spacing="-0.3">5</text><rect x="0" y="94.7" width="10" height="1.3" fill="#b9bcc0" /><text x="21.5" y="100.2" font-size="10" fill="#b9bcc0" text-anchor="middle" font-weight="normal" letter-spacing="-0.3">10</text><rect x="0" y="117.5" width="10" height="1.3" fill="#b9bcc0" /><text x="21.5" y="123" font-size="10" fill="#b9bcc0" text-anchor="middle" font-weight="normal" letter-spacing="-0.3">15</text><rect x="0" y="139.5" width="10" height="1.3" fill="#b9bcc0" /><text x="21.5" y="145" font-size="10" fill="#b9bcc0" text-anchor="middle" font-weight="normal" letter-spacing="-0.3">20</text><rect x="0" y="161.8" width="10" height="1.3" fill="#b9bcc0" /><text x="21.5" y="167.3" font-size="10" fill="#b9bcc0" text-anchor="middle" font-weight="normal" letter-spacing="-0.3">25</text><rect x="0" y="184" width="10" height="1.3" fill="#b9bcc0" /><text x="21.5" y="189.5" font-size="10" fill="#b9bcc0" text-anchor="middle" font-weight="normal" letter-spacing="-0.3">30</text><rect x="0" y="206.3" width="10" height="1.3" fill="#b9bcc0" /><text x="21.5" y="211.8" font-size="10" fill="#b9bcc0" text-anchor="middle" font-weight="normal" letter-spacing="-0.3">40</text><rect x="0" y="209.8" width="10" height="1.2" fill="#b9bcc0" /><rect x="0" y="216.9" width="10" height="1.2" fill="#b9bcc0" /><text x="22.5" y="222.5" font-size="9" fill="#b9bcc0" text-anchor="middle" font-weight="normal" >∞</text></svg>
<div style="left:61.8px;top:673px;width:20.5px;height:35px;background:linear-gradient(#4e4e4e 0%,#6e6e6e 6%,#cdcdcd 16%,#c0c0c0 30%,#8a8a8a 46%,#2e2e2e 49%,#2e2e2e 51%,#e0e0e0 56%,#c6c6c6 75%,#808080 93%,#454545 100%);border-radius:2px;box-shadow:0 1px 2px rgba(0,0,0,.6);"></div>
<div style="left:11px;top:859.5px;width:44px;height:12px;background:#484a4f;border:1px solid #585b61;border-radius:2px;"></div>
<div style="left:11px;top:859.5px;width:44px;height:12px;line-height:12px;font-size:8.5px;color:#888b91;text-align:center;white-space:nowrap;overflow:hidden;">RMS</div>
<div style="left:8.3px;top:876.5px;width:32.5px;height:15.9px;background:linear-gradient(#7c7c7c,#626262 45%,#505050 55%,#474747);border-radius:3px 0 0 0;box-shadow:inset 0 0 0 0.600px rgba(20,20,20,.55);"></div>
<div style="left:8.3px;top:876.5px;width:32.5px;height:15.9px;line-height:15.9px;font-size:12.5px;color:#202020;text-align:center;white-space:nowrap;overflow:hidden;font-weight:bold;">S</div>
<div style="left:40.8px;top:876.5px;width:32.5px;height:15.9px;background:linear-gradient(#7c7c7c,#626262 45%,#505050 55%,#474747);border-radius:0;box-shadow:inset 0 0 0 0.600px rgba(20,20,20,.55);"></div>
<div style="left:40.8px;top:876.5px;width:32.5px;height:15.9px;line-height:15.9px;font-size:12.5px;color:#202020;text-align:center;white-space:nowrap;overflow:hidden;font-weight:bold;">M</div>
<div style="left:73.3px;top:876.5px;width:32.5px;height:15.9px;background:linear-gradient(#7c7c7c,#626262 45%,#505050 55%,#474747);border-radius:0 3px 0 0;box-shadow:inset 0 0 0 0.600px rgba(20,20,20,.55);"></div>
<svg style="left:73.3px;top:876.5px;" width="32.5" height="15.9" viewBox="0 0 32.5 15.9"><circle cx="16.25" cy="8" r="4" fill="#262626" stroke="none" stroke-width="1" /></svg>
<div style="left:8.3px;top:892.4px;width:32.5px;height:15.9px;background:linear-gradient(#7c7c7c,#626262 45%,#505050 55%,#474747);border-radius:0 0 0 3px;box-shadow:inset 0 0 0 0.600px rgba(20,20,20,.55);"></div>
<div style="left:8.3px;top:892.4px;width:32.5px;height:15.9px;line-height:15.9px;font-size:12.5px;color:#202020;text-align:center;white-space:nowrap;overflow:hidden;font-weight:bold;font-family:'Liberation Serif',serif;">i</div>
<div style="left:40.8px;top:892.4px;width:32.5px;height:15.9px;background:linear-gradient(#f4727a,#e23440 50%,#d8222e 60%,#e8505a);border-radius:0;box-shadow:inset 0 0 0 0.600px rgba(20,20,20,.55);"></div>
<div style="left:40.8px;top:892.4px;width:32.5px;height:15.9px;line-height:15.9px;font-size:12.5px;color:#2a0a0c;text-align:center;white-space:nowrap;overflow:hidden;font-weight:bold;">R</div>
<div style="left:73.3px;top:892.4px;width:32.5px;height:15.9px;background:linear-gradient(#7c7c7c,#626262 45%,#505050 55%,#474747);border-radius:0 0 3px 0;box-shadow:inset 0 0 0 0.600px rgba(20,20,20,.55);"></div>
<div style="left:73.3px;top:892.4px;width:32.5px;height:15.9px;line-height:15.9px;font-size:12.5px;color:#202020;text-align:center;white-space:nowrap;overflow:hidden;font-weight:bold;">W</div>
<div style="left:4px;top:910px;width:104px;height:21px;background:#3b4350;"></div>
<div style="left:4px;top:911.3px;width:104px;height:21px;line-height:21px;font-size:12px;color:#fff;text-align:center;white-space:nowrap;overflow:hidden;">OUTPUT 1</div>
<div style="left:4px;top:934px;width:104px;height:25px;background:#ff7ba4;"></div>
<div style="left:4px;top:935px;width:104px;height:25px;line-height:25px;font-size:12px;color:#5a0d22;text-align:center;white-space:nowrap;overflow:hidden;">GUITAR</div>
<div style="left:122px;top:29px;width:849.5px;height:447px;background:#262b35;border:2px solid #eef1f4;border-radius:4px;box-shadow:inset 0 0 0 1px #59626e;"></div>
<div style="left:128px;top:35px;width:838px;height:52px;background:#262b35;"></div>
<div style="left:128px;top:60px;width:838px;height:1.5px;background:#353c48;"></div>
<div style="left:128px;top:87px;width:838px;height:1.5px;background:#1b1f27;"></div>
<div class="tb bb" style="left:136px;top:35px;width:24px;height:24px"><svg width="24" height="24" viewBox="0 0 24 24"><path d="M8 6.500l8.500 5.300-8.500 5.300z" fill="#d83a5a" stroke="none" stroke-width="1" /></svg></div>
<div class="tb bb" style="left:170px;top:35px;width:24px;height:24px"><svg width="24" height="24" viewBox="0 0 24 24"><rect x="5" y="5.5" width="7" height="1.6" fill="currentColor" /><rect x="5" y="10.5" width="9" height="1.7" fill="currentColor" /><rect x="8.6" y="7.5" width="1.7" height="8" fill="currentColor" /><path d="M14.0 10.0 L14.0 17.6 L15.9 15.9 L17.2 18.9 L18.6 18.3 L17.2 15.4 L19.6 15.4Z" fill="currentColor" stroke="none" stroke-width="1" /></svg></div>
<div class="tb bl" style="left:196px;top:35px;width:24px;height:24px"><svg width="24" height="24" viewBox="0 0 24 24"><path d="M8.2 5.2 L8.2 16.9 L11.1 14.3 L13.1 18.9 L15.2 17.9 L13.1 13.5 L16.8 13.5Z" fill="currentColor" stroke="none" stroke-width="1" /></svg></div>
<div class="tb bl" style="left:222px;top:35px;width:24px;height:24px"><svg width="24" height="24" viewBox="0 0 24 24"><path d="M8 4.500h3v3.500h3.500v3h-3.500v3.500h-3v-3.500h-3.500v-3h3.500z" fill="none" stroke="currentColor" stroke-width="1.1" /><path d="M14.0 11.0 L14.0 18.6 L15.9 16.9 L17.2 19.9 L18.6 19.3 L17.2 16.4 L19.6 16.4Z" fill="currentColor" stroke="none" stroke-width="1" /></svg></div>
<div class="tb bl" style="left:249px;top:35px;width:24px;height:24px"><svg width="24" height="24" viewBox="0 0 24 24"><line x1="5.5" y1="18.5" x2="18.5" y2="5.5" stroke="currentColor" stroke-width="1.5" /></svg></div>
<div class="tb bl" style="left:285px;top:35px;width:24px;height:24px"><svg width="24" height="24" viewBox="0 0 24 24"><circle cx="10.5" cy="10.5" r="5" fill="none" stroke="currentColor" stroke-width="1.4" /><line x1="14" y1="14" x2="19" y2="19" stroke="currentColor" stroke-width="2.2" /><line x1="10" y1="11" x2="13" y2="8" stroke="currentColor" stroke-width="1" /></svg></div>
<div class="tb bl" style="left:319px;top:35px;width:24px;height:24px"><svg width="24" height="24" viewBox="0 0 24 24"><path d="M5 9.500L10.500 4.500V7.500H18V18.500H7V15.500H15V10.800H10.500V14.500Z" fill="currentColor" stroke="none" stroke-width="1" /></svg></div>
<div class="tb bd" style="left:357px;top:35px;width:24px;height:24px"><svg width="24" height="24" viewBox="0 0 24 24"><path d="M19 9.500L13.500 4.500V7.500H6V18.500H17V15.500H9V10.800H13.500V14.500Z" fill="currentColor" stroke="none" stroke-width="1" /></svg></div>
<div class="tb bd" style="left:401px;top:35px;width:24px;height:24px"><svg width="24" height="24" viewBox="0 0 24 24"><path d="M10 4l2.500 9M14 4l-2.500 9" fill="none" stroke="currentColor" stroke-width="1.6" /><circle cx="8.5" cy="16.5" r="2.3" fill="none" stroke="currentColor" stroke-width="1.4" /><circle cx="15.5" cy="16.5" r="2.3" fill="none" stroke="currentColor" stroke-width="1.4" /><path d="M12 12l-2.500 3M12 12l2.500 3" fill="none" stroke="currentColor" stroke-width="1.4" /></svg></div>
<div class="tb bd" style="left:427px;top:35px;width:24px;height:24px"><svg width="24" height="24" viewBox="0 0 24 24"><path d="M6 5h5v2h-3v9h-2z" fill="currentColor" stroke="none" stroke-width="1" /><path d="M9.500 8h5l3 3v8h-8z" fill="currentColor" stroke="none" stroke-width="1" /></svg></div>
<div class="tb bd" style="left:453px;top:35px;width:24px;height:24px"><svg width="24" height="24" viewBox="0 0 24 24"><path d="M6 9c0-5 12-5 12 0v1.500h-12z" fill="currentColor" stroke="none" stroke-width="1" /><rect x="8" y="10.5" width="2.5" height="8" fill="currentColor" /><rect x="13.5" y="10.5" width="2.5" height="8" fill="currentColor" /><rect x="8" y="17" width="8" height="1.5" fill="currentColor" /></svg></div>
<div class="tb bd" style="left:479px;top:35px;width:24px;height:24px"><svg width="24" height="24" viewBox="0 0 24 24"><path d="M6 5.500h10v3h-7v7h-3z" fill="none" stroke="currentColor" stroke-width="1.2" /><rect x="10" y="10" width="8.5" height="8.5" fill="currentColor" /><rect x="6" y="12.5" width="5" height="6" fill="currentColor" /></svg></div>
<div class="tb bd" style="left:505px;top:35px;width:24px;height:24px"><svg width="24" height="24" viewBox="0 0 24 24"><path d="M6 13l7-7 4.500 4.500-7 7z" fill="currentColor" stroke="none" stroke-width="1" /><path d="M7.500 13l2.500-2.500 3.500 3.500-2.500 2.500z" fill="#666" stroke="none" stroke-width="1" /><line x1="5" y1="19.5" x2="19" y2="19.5" stroke="currentColor" stroke-width="1.4" /></svg></div>
<div class="tb bl" style="left:539px;top:35px;width:24px;height:24px"><svg width="24" height="24" viewBox="0 0 24 24"><line x1="6" y1="5" x2="6" y2="19" stroke="currentColor" stroke-width="1.2" /><path d="M6.500 12l2.500-2v4z" fill="currentColor" stroke="none" stroke-width="1" /><rect x="9.5" y="8" width="10" height="8" fill="currentColor" /><path d="M10.500 12l2 0 1-2 1.500 4 1.500-4 1 2h1.500" fill="none" stroke="#ddd" stroke-width="1" /></svg></div>
<div class="tb bb" style="left:573px;top:35px;width:24px;height:24px"><svg width="24" height="24" viewBox="0 0 24 24"><rect x="5" y="5" width="10" height="5.5" fill="currentColor" /><rect x="9" y="13" width="10" height="5.5" fill="currentColor" /><path d="M6 7.500c1-1.500 2-1.500 3 0s2 1.500 3 0 1.500-1.500 2 0" fill="none" stroke="#6b9cdb" stroke-width="0.9" /><path d="M10 15.500c1-1.500 2-1.500 3 0s2 1.500 3 0 1.500-1.500 2 0" fill="none" stroke="#6b9cdb" stroke-width="0.9" /></svg></div>
<div class="tb bb" style="left:599px;top:35px;width:24px;height:24px"><svg width="24" height="24" viewBox="0 0 24 24"><rect x="5" y="5" width="11" height="5" fill="currentColor" /><rect x="8" y="13" width="11" height="6" fill="currentColor" /><path d="M6 7.500l2-1.500 1.500 3 1.500-3 1.500 3 1.500-1.500" fill="none" stroke="#6b9cdb" stroke-width="0.9" /><path d="M9 16l2-2 1.500 4 1.500-4 1.500 4 1.500-2" fill="none" stroke="#6b9cdb" stroke-width="0.9" /></svg></div>
<div class="tb bb" style="left:625px;top:35px;width:24px;height:24px"><svg width="24" height="24" viewBox="0 0 24 24"><rect x="5" y="5.5" width="14" height="2.2" fill="currentColor" /><rect x="5" y="16.5" width="14" height="2.2" fill="currentColor" /><rect x="7.5" y="7.5" width="1.6" height="9" fill="currentColor" /><rect x="15" y="7.5" width="1.6" height="9" fill="currentColor" /><rect x="6" y="6" width="1" height="1" fill="#6b9cdb" /><rect x="6" y="17.2" width="1" height="1" fill="#6b9cdb" /><rect x="8.5" y="6" width="1" height="1" fill="#6b9cdb" /><rect x="8.5" y="17.2" width="1" height="1" fill="#6b9cdb" /><rect x="11" y="6" width="1" height="1" fill="#6b9cdb" /><rect x="11" y="17.2" width="1" height="1" fill="#6b9cdb" /><rect x="13.5" y="6" width="1" height="1" fill="#6b9cdb" /><rect x="13.5" y="17.2" width="1" height="1" fill="#6b9cdb" /><rect x="16" y="6" width="1" height="1" fill="#6b9cdb" /><rect x="16" y="17.2" width="1" height="1" fill="#6b9cdb" /></svg></div>
<div class="tb bl" style="left:659px;top:35px;width:24px;height:24px"><svg width="24" height="24" viewBox="0 0 24 24"><circle cx="11.5" cy="11.5" r="6" fill="none" stroke="currentColor" stroke-width="1.5" /><circle cx="11.5" cy="8.5" r="1.5" fill="currentColor" stroke="none" stroke-width="1" /><circle cx="8.5" cy="11.5" r="1.5" fill="currentColor" stroke="none" stroke-width="1" /><circle cx="14.5" cy="11.5" r="1.5" fill="currentColor" stroke="none" stroke-width="1" /><circle cx="11.5" cy="14.5" r="1.5" fill="currentColor" stroke="none" stroke-width="1" /><circle cx="11.5" cy="11.5" r="0.8" fill="currentColor" stroke="none" stroke-width="1" /><line x1="11.5" y1="18" x2="19" y2="18" stroke="currentColor" stroke-width="1.2" /></svg></div>
<div class="tb bb" style="left:685px;top:35px;width:24px;height:24px"><svg width="24" height="24" viewBox="0 0 24 24"><text x="8.5" y="11.5" font-size="9" fill="currentColor" text-anchor="middle" font-weight="normal" >4</text><line x1="8" y1="17.5" x2="16.5" y2="6.5" stroke="currentColor" stroke-width="1" /><text x="16" y="19.5" font-size="9" fill="currentColor" text-anchor="middle" font-weight="normal" >4</text></svg></div>
<div class="tb bb" style="left:711px;top:35px;width:24px;height:24px"><svg width="24" height="24" viewBox="0 0 24 24"><ellipse cx="7.5" cy="17" rx="2.64" ry="2.2" fill="currentColor" transform="rotate(-20 7.5 17)"/><rect x="8.94" y="5.5" width="1.3" height="11.5" fill="currentColor" /><rect x="13" y="10" width="6" height="1.4" fill="currentColor" /><rect x="13" y="14" width="6" height="1.4" fill="currentColor" /></svg></div>
<div class="tb bb" style="left:737px;top:35px;width:24px;height:24px"><svg width="24" height="24" viewBox="0 0 24 24"><text x="10" y="14.5" font-size="12" fill="currentColor" text-anchor="middle" font-weight="normal" >G</text><text x="16.5" y="19.5" font-size="9" fill="currentColor" text-anchor="middle" font-weight="normal" >7</text></svg></div>
<div class="tb bl" style="left:840px;top:35px;width:24px;height:24px"><svg width="24" height="24" viewBox="0 0 24 24"><path d="M6.500 5v13.500h13" fill="none" stroke="currentColor" stroke-width="1.2" /><text x="13.5" y="16" font-size="10.5" fill="currentColor" text-anchor="middle" font-weight="normal" >1</text></svg></div>
<div class="tb bl" style="left:867px;top:35px;width:24px;height:24px"><svg width="24" height="24" viewBox="0 0 24 24"><line x1="6.5" y1="5" x2="6.5" y2="19" stroke="currentColor" stroke-width="1.4" /><path d="M9 11.300h6v-2.300l4 3-4 3v-2.300h-6z" fill="currentColor" stroke="none" stroke-width="1" /></svg></div>
<div class="tb bb" style="left:900px;top:35px;width:24px;height:24px"><svg width="24" height="24" viewBox="0 0 24 24"><rect x="6" y="5" width="4.5" height="15" fill="currentColor" /><rect x="7" y="6.5" width="2.5" height="1" fill="#6b9cdb" /><rect x="7" y="8.9" width="2.5" height="1" fill="#6b9cdb" /><rect x="7" y="11.3" width="2.5" height="1" fill="#6b9cdb" /><rect x="7" y="13.7" width="2.5" height="1" fill="#6b9cdb" /><rect x="7" y="16.1" width="2.5" height="1" fill="#6b9cdb" /><rect x="7" y="18.5" width="2.5" height="1" fill="#6b9cdb" /><rect x="15.3" y="5" width="1.4" height="15" fill="currentColor" /><rect x="13" y="10.5" width="6" height="4.5" fill="currentColor" /><rect x="14" y="12.3" width="4" height="1" fill="#6b9cdb" /></svg></div>
<div class="tb bl" style="left:274px;top:35px;width:10px;height:24px"><svg width="10" height="24" viewBox="0 0 10 24"><path d="M2 9.500h6l-3 3.500z" fill="currentColor" stroke="none" stroke-width="1" /></svg></div>
<div class="tb bl" style="left:344px;top:35px;width:10px;height:24px"><svg width="10" height="24" viewBox="0 0 10 24"><path d="M2 9.500h6l-3 3.500z" fill="currentColor" stroke="none" stroke-width="1" /></svg></div>
<div class="tb bd" style="left:382px;top:35px;width:10px;height:24px"><svg width="10" height="24" viewBox="0 0 10 24"><path d="M2 9.500h6l-3 3.500z" fill="currentColor" stroke="none" stroke-width="1" /></svg></div>
<div class="tb bl" style="left:770px;top:35px;width:62px;height:24px"><svg width="62" height="24" viewBox="0 0 62 24"><ellipse cx="20.5" cy="17.5" rx="2.4" ry="1.8" fill="currentColor" transform="rotate(-20 20.5 17.5)"/><rect x="22" y="6" width="1.2" height="11.5" fill="currentColor" /><line x1="44.5" y1="4" x2="44.5" y2="20" stroke="currentColor" stroke-width="1.2" /><path d="M49 9.500l4 4.500 4-4.500" fill="none" stroke="currentColor" stroke-width="1.8" /></svg></div>
<div class="tb bl" style="left:136px;top:62px;width:24px;height:24px"><svg width="24" height="24" viewBox="0 0 24 24"><line x1="12" y1="4.5" x2="12" y2="19.5" stroke="currentColor" stroke-width="1.2" /><rect x="5" y="8.5" width="5.5" height="7" fill="currentColor" /><rect x="13.5" y="8.5" width="5.5" height="7" fill="currentColor" /><rect x="6.5" y="10" width="2.5" height="2.5" fill="#ddd" /><rect x="15" y="11.3" width="2.5" height="1" fill="#ddd" /><rect x="15.8" y="10.5" width="1" height="2.6" fill="#ddd" /></svg></div>
<div class="tb bd" style="left:162px;top:62px;width:24px;height:24px"><svg width="24" height="24" viewBox="0 0 24 24"><path d="M8 6.500v-1.500h8v1.500" fill="none" stroke="currentColor" stroke-width="1" /><rect x="5" y="8.5" width="6.5" height="7" fill="currentColor" /><rect x="12.5" y="8.5" width="6.5" height="7" fill="currentColor" /><line x1="5" y1="18" x2="19" y2="18" stroke="currentColor" stroke-width="1" /></svg></div>
<div class="tb bl" style="left:188px;top:62px;width:24px;height:24px"><svg width="24" height="24" viewBox="0 0 24 24"><rect x="5" y="5" width="4.5" height="4.5" fill="currentColor" /><rect x="5" y="13.5" width="4.5" height="4.5" fill="currentColor" /><text x="7.25" y="9" font-size="4.5" fill="#ddd" text-anchor="middle" font-weight="bold" >A</text><text x="7.25" y="17.5" font-size="4.5" fill="#ddd" text-anchor="middle" font-weight="bold" >Y</text><path d="M11 7h5v2.500M11 16h4v-2" fill="none" stroke="currentColor" stroke-width="1" /><path d="M12 11h7v3h-7z" fill="none" stroke="currentColor" stroke-width="0.9" /><path d="M12.500 13.500l1-2 1 2 1-2 1 2 1-2 1 2" fill="none" stroke="currentColor" stroke-width="0.7" /></svg></div>
<div class="tb bd" style="left:214px;top:62px;width:24px;height:24px"><svg width="24" height="24" viewBox="0 0 24 24"><rect x="5" y="5.5" width="14" height="4.5" fill="currentColor" /><rect x="5" y="14" width="14" height="4.5" fill="currentColor" /><path d="M12 11l1.500 1.500h-3z" fill="currentColor" stroke="none" stroke-width="1" /></svg></div>
<div class="tb bl" style="left:240px;top:62px;width:24px;height:24px"><svg width="24" height="24" viewBox="0 0 24 24"><path d="M5 6.500h12v11h-12z" fill="none" stroke="currentColor" stroke-width="1.3" /><path d="M10 12l3-2.500v1.800h4v-1.800l3 2.500-3 2.500v-1.800h-4v1.800z" fill="currentColor" stroke="none" stroke-width="1" /></svg></div>
<div class="tb bd" style="left:266px;top:62px;width:24px;height:24px"><svg width="24" height="24" viewBox="0 0 24 24"><circle cx="12" cy="12" r="6.5" fill="#111" stroke="none" stroke-width="1" /><ellipse cx="14.5" cy="13.5" rx="3.5" ry="2.2" fill="#999" transform="rotate(-40 14.5 13.5)"/><circle cx="12" cy="12" r="1.3" fill="#555" stroke="none" stroke-width="1" /></svg></div>
<div class="tb bd" style="left:292px;top:62px;width:24px;height:24px"><svg width="24" height="24" viewBox="0 0 24 24"><path d="M5 6h14v12h-14z" fill="none" stroke="currentColor" stroke-width="1" /><line x1="7" y1="7" x2="7" y2="17" stroke="currentColor" stroke-width="1" /><rect x="6.2" y="9" width="1.6" height="2.5" fill="currentColor" /><line x1="9.5" y1="7" x2="9.5" y2="17" stroke="currentColor" stroke-width="1" /><rect x="8.7" y="11" width="1.6" height="2.5" fill="currentColor" /><line x1="12" y1="7" x2="12" y2="17" stroke="currentColor" stroke-width="1" /><rect x="11.2" y="13" width="1.6" height="2.5" fill="currentColor" /><line x1="14.5" y1="7" x2="14.5" y2="17" stroke="currentColor" stroke-width="1" /><rect x="13.7" y="9" width="1.6" height="2.5" fill="currentColor" /><line x1="17" y1="7" x2="17" y2="17" stroke="currentColor" stroke-width="1" /><rect x="16.2" y="11" width="1.6" height="2.5" fill="currentColor" /></svg></div>
<div class="tb bd" style="left:318px;top:62px;width:24px;height:24px"><svg width="24" height="24" viewBox="0 0 24 24"><path d="M8 8h8a3.500 3.500 0 0 1 0 8h-1M16 16h-8a3.500 3.500 0 0 1 0-8h1" fill="none" stroke="currentColor" stroke-width="1.8" /><path d="M14 5.500l3 2.500-3 2.500zM10 13.500l-3 2.500 3 2.500z" fill="currentColor" stroke="none" stroke-width="1" /></svg></div>
<div class="tb bd" style="left:352px;top:62px;width:24px;height:24px"><svg width="24" height="24" viewBox="0 0 24 24"><ellipse cx="8" cy="11" rx="1.68" ry="1.4" fill="currentColor" transform="rotate(-20 8 11)"/><rect x="8.48" y="5" width="1.3" height="6" fill="currentColor" /><path d="M9.7 5.0 c2 1.5 3.5 3 2.5 6 c0 -2 -1 -3 -2.5 -3.5z" fill="currentColor" stroke="none" stroke-width="1" /><ellipse cx="14.5" cy="10" rx="1.68" ry="1.4" fill="currentColor" transform="rotate(-20 14.5 10)"/><rect x="14.98" y="4" width="1.3" height="6" fill="currentColor" /><path d="M16.2 4.0 c2 1.5 3.5 3 2.5 6 c0 -2 -1 -3 -2.5 -3.5z" fill="currentColor" stroke="none" stroke-width="1" /><rect x="5" y="14.5" width="14" height="3.5" fill="currentColor" /><line x1="5" y1="19.5" x2="19" y2="19.5" stroke="currentColor" stroke-width="0.8" /></svg></div>
<div class="tb bd" style="left:378px;top:62px;width:24px;height:24px"><svg width="24" height="24" viewBox="0 0 24 24"><rect x="5" y="8" width="14" height="8" fill="currentColor" /><line x1="12" y1="4.5" x2="12" y2="19.5" stroke="currentColor" stroke-width="0.8" stroke-dasharray="1.5 1"/><path d="M8 5.500h3M13 5.500h3" fill="none" stroke="currentColor" stroke-width="1.2" /><rect x="7" y="18" width="10" height="1" fill="currentColor" /></svg></div>
<div class="tb bd" style="left:412px;top:62px;width:24px;height:24px"><svg width="24" height="24" viewBox="0 0 24 24"><text x="12" y="12" font-size="11" fill="currentColor" text-anchor="middle" font-weight="bold" style="font-family:'Liberation Serif',serif">i</text><rect x="5" y="14.5" width="14" height="3.5" fill="currentColor" /><line x1="5" y1="19.5" x2="19" y2="19.5" stroke="currentColor" stroke-width="0.8" /></svg></div>
<div class="tb bd" style="left:438px;top:62px;width:24px;height:24px"><svg width="24" height="24" viewBox="0 0 24 24"><text x="12" y="12" font-size="11" fill="currentColor" text-anchor="middle" font-weight="bold" style="font-family:'Liberation Serif',serif">i</text><line x1="5" y1="14.5" x2="19" y2="14.5" stroke="currentColor" stroke-width="1" /><line x1="5" y1="18.5" x2="19" y2="18.5" stroke="currentColor" stroke-width="1" /><line x1="6" y1="14.5" x2="6" y2="18.5" stroke="currentColor" stroke-width="1" /><line x1="10" y1="14.5" x2="10" y2="18.5" stroke="currentColor" stroke-width="1" /><line x1="14" y1="14.5" x2="14" y2="18.5" stroke="currentColor" stroke-width="1" /><line x1="18" y1="14.5" x2="18" y2="18.5" stroke="currentColor" stroke-width="1" /></svg></div>
<div class="tb bd" style="left:464px;top:62px;width:24px;height:24px"><svg width="24" height="24" viewBox="0 0 24 24"><text x="12" y="12" font-size="11" fill="currentColor" text-anchor="middle" font-weight="bold" style="font-family:'Liberation Serif',serif">i</text><rect x="5" y="14.5" width="14" height="4" fill="currentColor" /><path d="M6 17.500h5v-2h6" fill="none" stroke="#555" stroke-width="0.8" /></svg></div>
<div class="tb bl" style="left:498px;top:62px;width:24px;height:24px"><svg width="24" height="24" viewBox="0 0 24 24"><path d="M11 5h8v8l-2.800-2.800-3.200 3.200-2.400-2.400 3.200-3.200z" fill="currentColor" stroke="none" stroke-width="1" /><path d="M13 19h-8v-8l2.800 2.800 3.200-3.200 2.400 2.400-3.200 3.200z" fill="currentColor" stroke="none" stroke-width="1" /></svg></div>
<div style="left:128px;top:89px;width:820px;height:13px;background:#20242c;"></div>
<div style="left:257px;top:89px;width:44px;height:12.5px;background:#545861;"></div>
<div style="left:128px;top:101.5px;width:818px;height:1.6px;background:#c9cdd2;"></div>
<div style="left:128px;top:103px;width:818px;height:83px;background:#23272f;"></div>
<div style="left:946px;top:89px;width:1.2px;height:97px;background:#59626f;"></div>
<div style="left:947px;top:89px;width:15.5px;height:97px;background:#20242c;"></div>
<div style="left:947px;top:89px;width:15.5px;height:17px;background:#454e5b;"></div>
<svg style="left:947px;top:89px;" width="15.5" height="17" viewBox="0 0 15.5 17"><path d="M4 10.500l3.700-4 3.700 4" fill="none" stroke="#d5dbe2" stroke-width="1.8" /></svg>
<div style="left:947px;top:106px;width:15.5px;height:17.5px;background:#5d6b7a;"></div>
<div style="left:947px;top:166px;width:15.5px;height:19px;background:#454e5b;"></div>
<svg style="left:947px;top:166px;" width="15.5" height="19" viewBox="0 0 15.5 19"><path d="M4 7.500l3.700 4 3.700-4" fill="none" stroke="#d5dbe2" stroke-width="1.8" /></svg>
<div style="left:135.5px;top:109.3px;width:39.5px;height:4px;background:#4f94e8;"></div>
<div style="left:364px;top:115.3px;width:54.5px;height:4px;background:#7a6fe8;"></div>
<div style="left:803px;top:115.3px;width:53px;height:4px;background:#7a6fe8;"></div>
<div style="left:135px;top:121.3px;width:27px;height:4px;background:#6a86b3;"></div>
<div style="left:176px;top:121.3px;width:11px;height:4px;background:#6a86b3;"></div>
<div style="left:190px;top:121.3px;width:10px;height:4px;background:#6a86b3;"></div>
<div style="left:203px;top:121.3px;width:38px;height:4px;background:#6a86b3;"></div>
<div style="left:244px;top:121.3px;width:11px;height:4px;background:#6a86b3;"></div>
<div style="left:262px;top:121.3px;width:4px;height:4px;background:#6a86b3;"></div>
<div style="left:272px;top:121.3px;width:7px;height:4px;background:#6a86b3;"></div>
<div style="left:289px;top:121.3px;width:4px;height:4px;background:#6a86b3;"></div>
<div style="left:297px;top:121.3px;width:15px;height:4px;background:#6a86b3;"></div>
<div style="left:317px;top:121.3px;width:3px;height:4px;background:#6a86b3;"></div>
<div style="left:327px;top:121.3px;width:7px;height:4px;background:#6a86b3;"></div>
<div style="left:344px;top:121.3px;width:3px;height:4px;background:#6a86b3;"></div>
<div style="left:351px;top:121.3px;width:345px;height:4px;background:#6a86b3;"></div>
<div style="left:701px;top:121.3px;width:2px;height:4px;background:#6a86b3;"></div>
<div style="left:707px;top:121.3px;width:3px;height:4px;background:#6a86b3;"></div>
<div style="left:712px;top:121.3px;width:6px;height:4px;background:#6a86b3;"></div>
<div style="left:724px;top:121.3px;width:2px;height:4px;background:#6a86b3;"></div>
<div style="left:729px;top:121.3px;width:5px;height:4px;background:#6a86b3;"></div>
<div style="left:736px;top:121.3px;width:15px;height:4px;background:#6a86b3;"></div>
<div style="left:757px;top:121.3px;width:2px;height:4px;background:#6a86b3;"></div>
<div style="left:764px;top:121.3px;width:8px;height:4px;background:#6a86b3;"></div>
<div style="left:779px;top:121.3px;width:4px;height:4px;background:#6a86b3;"></div>
<div style="left:790px;top:121.3px;width:78px;height:4px;background:#6a86b3;"></div>
<div style="left:872px;top:121.3px;width:25px;height:4px;background:#6a86b3;"></div>
<div style="left:129px;top:127.3px;width:783px;height:4px;background:#f26b3c;"></div>
<div style="left:257px;top:133.3px;width:106px;height:4px;background:#4d9a96;"></div>
<div style="left:696px;top:133.3px;width:106px;height:4px;background:#4d9a96;"></div>
<div style="left:861px;top:133.3px;width:37px;height:4px;background:#4d9a96;"></div>
<div style="left:176px;top:139.3px;width:11px;height:4px;background:#4aa56a;"></div>
<div style="left:190px;top:139.3px;width:21px;height:4px;background:#4aa56a;"></div>
<div style="left:214px;top:139.3px;width:27px;height:4px;background:#4aa56a;"></div>
<div style="left:244px;top:139.3px;width:12px;height:4px;background:#4aa56a;"></div>
<div style="left:263px;top:139.3px;width:3px;height:4px;background:#4aa56a;"></div>
<div style="left:272px;top:139.3px;width:7px;height:4px;background:#4aa56a;"></div>
<div style="left:292px;top:139.3px;width:20px;height:4px;background:#4aa56a;"></div>
<div style="left:317px;top:139.3px;width:3px;height:4px;background:#4aa56a;"></div>
<div style="left:323px;top:139.3px;width:11px;height:4px;background:#4aa56a;"></div>
<div style="left:345px;top:139.3px;width:18px;height:4px;background:#4aa56a;"></div>
<div style="left:412px;top:139.3px;width:4px;height:4px;background:#4aa56a;"></div>
<div style="left:421px;top:139.3px;width:36px;height:4px;background:#4aa56a;"></div>
<div style="left:460px;top:139.3px;width:4px;height:4px;background:#4aa56a;"></div>
<div style="left:466px;top:139.3px;width:9px;height:4px;background:#4aa56a;"></div>
<div style="left:480px;top:139.3px;width:55px;height:4px;background:#4aa56a;"></div>
<div style="left:538px;top:139.3px;width:14px;height:4px;background:#4aa56a;"></div>
<div style="left:662px;top:139.3px;width:8px;height:4px;background:#4aa56a;"></div>
<div style="left:673px;top:139.3px;width:23px;height:4px;background:#4aa56a;"></div>
<div style="left:702px;top:139.3px;width:2px;height:4px;background:#4aa56a;"></div>
<div style="left:710px;top:139.3px;width:8px;height:4px;background:#4aa56a;"></div>
<div style="left:731px;top:139.3px;width:20px;height:4px;background:#4aa56a;"></div>
<div style="left:757px;top:139.3px;width:2px;height:4px;background:#4aa56a;"></div>
<div style="left:763px;top:139.3px;width:9px;height:4px;background:#4aa56a;"></div>
<div style="left:785px;top:139.3px;width:16px;height:4px;background:#4aa56a;"></div>
<div style="left:851px;top:139.3px;width:18px;height:4px;background:#4aa56a;"></div>
<div style="left:872px;top:139.3px;width:26px;height:4px;background:#4aa56a;"></div>
<div style="left:263px;top:145.3px;width:2px;height:4px;background:#84ec8c;"></div>
<div style="left:273px;top:145.3px;width:6px;height:4px;background:#84ec8c;"></div>
<div style="left:297px;top:145.3px;width:15px;height:4px;background:#84ec8c;"></div>
<div style="left:317px;top:145.3px;width:3px;height:4px;background:#84ec8c;"></div>
<div style="left:323px;top:145.3px;width:11px;height:4px;background:#84ec8c;"></div>
<div style="left:346px;top:145.3px;width:2px;height:4px;background:#84ec8c;"></div>
<div style="left:351px;top:145.3px;width:11px;height:4px;background:#84ec8c;"></div>
<div style="left:412px;top:145.3px;width:6px;height:4px;background:#84ec8c;"></div>
<div style="left:466px;top:145.3px;width:7px;height:4px;background:#84ec8c;"></div>
<div style="left:520px;top:145.3px;width:6px;height:4px;background:#84ec8c;"></div>
<div style="left:601px;top:145.3px;width:6px;height:4px;background:#84ec8c;"></div>
<div style="left:655px;top:145.3px;width:6px;height:4px;background:#84ec8c;"></div>
<div style="left:702px;top:145.3px;width:2px;height:4px;background:#84ec8c;"></div>
<div style="left:711px;top:145.3px;width:7px;height:4px;background:#84ec8c;"></div>
<div style="left:736px;top:145.3px;width:15px;height:4px;background:#84ec8c;"></div>
<div style="left:757px;top:145.3px;width:2px;height:4px;background:#84ec8c;"></div>
<div style="left:764px;top:145.3px;width:8px;height:4px;background:#84ec8c;"></div>
<div style="left:785px;top:145.3px;width:2px;height:4px;background:#84ec8c;"></div>
<div style="left:790px;top:145.3px;width:11px;height:4px;background:#84ec8c;"></div>
<div style="left:851px;top:145.3px;width:18px;height:4px;background:#84ec8c;"></div>
<div style="left:872px;top:145.3px;width:25px;height:4px;background:#84ec8c;"></div>
<div style="left:159px;top:151.3px;width:39px;height:4px;background:#1cb8e6;"></div>
<div style="left:203px;top:151.3px;width:49px;height:4px;background:#1cb8e6;"></div>
<div style="left:255px;top:151.3px;width:643px;height:4px;background:#1cb8e6;"></div>
<div style="left:203px;top:157.3px;width:51px;height:4px;background:#16c89a;"></div>
<div style="left:257px;top:157.3px;width:164px;height:4px;background:#16c89a;"></div>
<div style="left:427px;top:157.3px;width:7px;height:4px;background:#16c89a;"></div>
<div style="left:439px;top:157.3px;width:9px;height:4px;background:#16c89a;"></div>
<div style="left:453px;top:157.3px;width:7px;height:4px;background:#16c89a;"></div>
<div style="left:466px;top:157.3px;width:9px;height:4px;background:#16c89a;"></div>
<div style="left:484px;top:157.3px;width:5px;height:4px;background:#16c89a;"></div>
<div style="left:493px;top:157.3px;width:9px;height:4px;background:#16c89a;"></div>
<div style="left:508px;top:157.3px;width:7px;height:4px;background:#16c89a;"></div>
<div style="left:520px;top:157.3px;width:337px;height:4px;background:#16c89a;"></div>
<div style="left:861px;top:157.3px;width:27px;height:4px;background:#16c89a;"></div>
<div style="left:891px;top:157.3px;width:7px;height:4px;background:#16c89a;"></div>
<div style="left:129px;top:163.3px;width:68px;height:4px;background:#f6a443;"></div>
<div style="left:129px;top:169.3px;width:778px;height:4px;background:#f6a443;"></div>
<div style="left:230px;top:175.3px;width:678px;height:4px;background:#e8524f;"></div>
<div style="left:260px;top:181.3px;width:648px;height:4px;background:#f07f9c;"></div>
<div style="left:129.5px;top:121px;width:0.8px;height:4px;background:#8a93a0;"></div>
<div style="left:257px;top:121px;width:0.8px;height:4px;background:#8a93a0;"></div>
<div style="left:269px;top:121px;width:0.8px;height:4px;background:#8a93a0;"></div>
<div style="left:285px;top:121px;width:0.8px;height:4px;background:#8a93a0;"></div>
<div style="left:290px;top:121px;width:0.8px;height:4px;background:#8a93a0;"></div>
<div style="left:318px;top:121px;width:0.8px;height:4px;background:#8a93a0;"></div>
<div style="left:339px;top:121px;width:0.8px;height:4px;background:#8a93a0;"></div>
<div style="left:696px;top:121px;width:0.8px;height:4px;background:#8a93a0;"></div>
<div style="left:725px;top:121px;width:0.8px;height:4px;background:#8a93a0;"></div>
<div style="left:755px;top:121px;width:0.8px;height:4px;background:#8a93a0;"></div>
<div style="left:776px;top:121px;width:0.8px;height:4px;background:#8a93a0;"></div>
<div style="left:845px;top:121px;width:0.8px;height:4px;background:#8a93a0;"></div>
<div style="left:139px;top:103px;width:1px;height:83px;background:#2f8fb8;"></div>
<div style="left:128px;top:186px;width:838px;height:2px;background:#15181e;"></div>
<div style="left:128px;top:188px;width:397px;height:240px;background:#262b35;"></div>
<div style="left:133px;top:196.5px;width:163px;height:14px;background:#5f7288;border-radius:2px;box-shadow:inset 0 0 0 1px #7a8ca0;"></div>
<div style="left:136px;top:196.5px;width:158px;height:14px;line-height:14px;font-size:12px;color:#fff;text-align:left;white-space:nowrap;overflow:hidden;">Parallel World</div>
<div style="left:301px;top:196.5px;width:198px;height:14px;background:#5f7288;border-radius:2px;box-shadow:inset 0 0 0 1px #7a8ca0;"></div>
<div style="left:304px;top:196.5px;width:194px;height:14px;line-height:14px;font-size:12px;color:#fff;text-align:left;white-space:nowrap;overflow:hidden;">48000Hz 32Bit BufferSize 1024Sa...</div>
<div style="left:128px;top:217px;width:397px;height:1.5px;background:#6a717c;"></div>
<div style="left:400px;top:219px;width:110px;height:20px;line-height:20px;font-size:12.5px;color:#fff;text-align:right;white-space:nowrap;overflow:hidden;">Beat</div>
<div style="left:128px;top:239px;width:397px;height:1.5px;background:#6a717c;"></div>
<div style="left:400px;top:241px;width:110px;height:20px;line-height:20px;font-size:12.5px;color:#fff;text-align:right;white-space:nowrap;overflow:hidden;">Tempo</div>
<div style="left:128px;top:261px;width:397px;height:1.5px;background:#6a717c;"></div>
<div style="left:400px;top:263px;width:110px;height:20px;line-height:20px;font-size:12.5px;color:#fff;text-align:right;white-space:nowrap;overflow:hidden;">Chord</div>
<div style="left:128px;top:283px;width:397px;height:1.5px;background:#6a717c;"></div>
<div style="left:128px;top:283.5px;width:397px;height:38.5px;background:#3a404b;"></div>
<div style="left:128px;top:321.5px;width:397px;height:1.2px;background:#5b626d;"></div>
<div style="left:129px;top:283.5px;width:36px;height:38px;background:#f89a2c;"></div>
<div style="left:131px;top:286.5px;width:18px;height:14px;line-height:14px;font-size:9.5px;color:#2b1a08;text-align:left;white-space:nowrap;overflow:hidden;font-weight:bold;">12</div>
<svg style="left:155px;top:289.5px;" width="8" height="9" viewBox="0 0 8 9"><path d="M0.500 0.500v8l6.500-4z" fill="#2b1a08" stroke="none" stroke-width="1" /></svg>
<svg style="left:155px;top:308.5px;" width="8" height="8" viewBox="0 0 8 8"><path d="M3 0.500h2v2.500h2.500v2h-2.500v2.500h-2v-2.500h-2.500v-2h2.500z" fill="#2b1a08" stroke="none" stroke-width="1" /></svg>
<div style="left:174px;top:287.5px;width:122px;height:13.5px;background:#5f7288;box-shadow:inset 0 0 0 1px #72859a;"></div>
<div style="left:177px;top:287.5px;width:90px;height:13.5px;line-height:13.5px;font-size:12px;color:#fff;text-align:left;white-space:nowrap;overflow:hidden;">SYNTH</div>
<div style="left:270px;top:287.5px;width:25px;height:13.5px;line-height:13.5px;font-size:12px;color:#fff;text-align:right;white-space:nowrap;overflow:hidden;">|2</div>
<div style="left:174px;top:306px;width:122px;height:13.5px;background:#5f7288;box-shadow:inset 0 0 0 1px #72859a;"></div>
<div style="left:177px;top:306px;width:110px;height:13.5px;line-height:13.5px;font-size:12px;color:#fff;text-align:left;white-space:nowrap;overflow:hidden;">OUTPUT 1</div>
<div style="left:302px;top:287px;width:21.5px;height:14.5px;background:linear-gradient(#dedede,#bdbdbd 50%,#a3a3a3);border-radius:3px;box-shadow:inset 0 0 0 1px rgba(0,0,0,.35);"></div>
<svg style="left:302px;top:287px;" width="21.5" height="14.5" viewBox="0 0 21.5 14.5"><circle cx="10.7" cy="7.2" r="4.3" fill="#3a3a3a" stroke="none" stroke-width="1" /></svg>
<div style="left:323.5px;top:287px;width:21.5px;height:14.5px;background:linear-gradient(#dedede,#bdbdbd 50%,#a3a3a3);border-radius:3px;box-shadow:inset 0 0 0 1px rgba(0,0,0,.35);"></div>
<div style="left:323.5px;top:287px;width:21.5px;height:14.5px;line-height:14.5px;font-size:11.5px;color:#3a3a3a;text-align:center;white-space:nowrap;overflow:hidden;font-weight:bold;">M</div>
<div style="left:345px;top:287px;width:21.5px;height:14.5px;background:linear-gradient(#dedede,#bdbdbd 50%,#a3a3a3);border-radius:3px;box-shadow:inset 0 0 0 1px rgba(0,0,0,.35);"></div>
<div style="left:345px;top:287px;width:21.5px;height:14.5px;line-height:14.5px;font-size:11.5px;color:#3a3a3a;text-align:center;white-space:nowrap;overflow:hidden;font-weight:bold;">S</div>
<div style="left:371.5px;top:287px;width:21.5px;height:14.5px;background:linear-gradient(#f3c9a2,#e79a52 50%,#d8812f);border-radius:3px;box-shadow:inset 0 0 0 1px rgba(0,0,0,.35);"></div>
<div style="left:371.5px;top:287px;width:21.5px;height:14.5px;line-height:14.5px;font-size:11.5px;color:#3a3a3a;text-align:center;white-space:nowrap;overflow:hidden;font-weight:bold;">A</div>
<div style="left:393.5px;top:287px;width:21.5px;height:14.5px;background:linear-gradient(#dedede,#bdbdbd 50%,#a3a3a3);border-radius:3px;box-shadow:inset 0 0 0 1px rgba(0,0,0,.35);"></div>
<div style="left:393.5px;top:287px;width:21.5px;height:14.5px;line-height:14.5px;font-size:11.5px;color:#3a3a3a;text-align:center;white-space:nowrap;overflow:hidden;font-weight:bold;">C</div>
<div style="left:421px;top:287.5px;width:39px;height:13.5px;background:#5f7288;box-shadow:inset 0 0 0 1px #72859a;"></div>
<div style="left:421px;top:287.5px;width:36px;height:13.5px;line-height:13.5px;font-size:12px;color:#fff;text-align:right;white-space:nowrap;overflow:hidden;">0</div>
<div style="left:514.5px;top:285.5px;width:8.5px;height:34px;background:#3b3e45;border:1px solid #2a2d33;"></div>
<div style="left:128px;top:322.5px;width:397px;height:38.5px;background:#262b35;"></div>
<div style="left:128px;top:360.5px;width:397px;height:1.2px;background:#5b626d;"></div>
<div style="left:129px;top:322.5px;width:36px;height:38px;background:#ec4140;"></div>
<div style="left:131px;top:325.5px;width:18px;height:14px;line-height:14px;font-size:9.5px;color:#2c0909;text-align:left;white-space:nowrap;overflow:hidden;font-weight:bold;">13</div>
<svg style="left:155px;top:328.5px;" width="8" height="9" viewBox="0 0 8 9"><path d="M0.500 0.500v8l6.500-4z" fill="#2c0909" stroke="none" stroke-width="1" /></svg>
<svg style="left:155px;top:347.5px;" width="8" height="8" viewBox="0 0 8 8"><path d="M3 0.500h2v2.500h2.500v2h-2.500v2.500h-2v-2.500h-2.500v-2h2.500z" fill="#2c0909" stroke="none" stroke-width="1" /></svg>
<div style="left:174px;top:326.5px;width:122px;height:13.5px;background:#5f7288;box-shadow:inset 0 0 0 1px #72859a;"></div>
<div style="left:177px;top:326.5px;width:90px;height:13.5px;line-height:13.5px;font-size:12px;color:#fff;text-align:left;white-space:nowrap;overflow:hidden;">GUITAR</div>
<div style="left:270px;top:326.5px;width:25px;height:13.5px;line-height:13.5px;font-size:12px;color:#fff;text-align:right;white-space:nowrap;overflow:hidden;">|2</div>
<div style="left:174px;top:345px;width:122px;height:13.5px;background:#5f7288;box-shadow:inset 0 0 0 1px #72859a;"></div>
<div style="left:177px;top:345px;width:110px;height:13.5px;line-height:13.5px;font-size:12px;color:#fff;text-align:left;white-space:nowrap;overflow:hidden;">OUTPUT 1</div>
<div style="left:302px;top:326px;width:21.5px;height:14.5px;background:linear-gradient(#dedede,#bdbdbd 50%,#a3a3a3);border-radius:3px;box-shadow:inset 0 0 0 1px rgba(0,0,0,.35);"></div>
<svg style="left:302px;top:326px;" width="21.5" height="14.5" viewBox="0 0 21.5 14.5"><circle cx="10.7" cy="7.2" r="4.3" fill="#3a3a3a" stroke="none" stroke-width="1" /></svg>
<div style="left:323.5px;top:326px;width:21.5px;height:14.5px;background:linear-gradient(#dedede,#bdbdbd 50%,#a3a3a3);border-radius:3px;box-shadow:inset 0 0 0 1px rgba(0,0,0,.35);"></div>
<div style="left:323.5px;top:326px;width:21.5px;height:14.5px;line-height:14.5px;font-size:11.5px;color:#3a3a3a;text-align:center;white-space:nowrap;overflow:hidden;font-weight:bold;">M</div>
<div style="left:345px;top:326px;width:21.5px;height:14.5px;background:linear-gradient(#dedede,#bdbdbd 50%,#a3a3a3);border-radius:3px;box-shadow:inset 0 0 0 1px rgba(0,0,0,.35);"></div>
<div style="left:345px;top:326px;width:21.5px;height:14.5px;line-height:14.5px;font-size:11.5px;color:#3a3a3a;text-align:center;white-space:nowrap;overflow:hidden;font-weight:bold;">S</div>
<div style="left:371.5px;top:326px;width:21.5px;height:14.5px;background:linear-gradient(#f3c9a2,#e79a52 50%,#d8812f);border-radius:3px;box-shadow:inset 0 0 0 1px rgba(0,0,0,.35);"></div>
<div style="left:371.5px;top:326px;width:21.5px;height:14.5px;line-height:14.5px;font-size:11.5px;color:#3a3a3a;text-align:center;white-space:nowrap;overflow:hidden;font-weight:bold;">A</div>
<div style="left:393.5px;top:326px;width:21.5px;height:14.5px;background:linear-gradient(#dedede,#bdbdbd 50%,#a3a3a3);border-radius:3px;box-shadow:inset 0 0 0 1px rgba(0,0,0,.35);"></div>
<div style="left:393.5px;top:326px;width:21.5px;height:14.5px;line-height:14.5px;font-size:11.5px;color:#3a3a3a;text-align:center;white-space:nowrap;overflow:hidden;font-weight:bold;">C</div>
<div style="left:421px;top:326.5px;width:39px;height:13.5px;background:#5f7288;box-shadow:inset 0 0 0 1px #72859a;"></div>
<div style="left:421px;top:326.5px;width:36px;height:13.5px;line-height:13.5px;font-size:12px;color:#fff;text-align:right;white-space:nowrap;overflow:hidden;">0</div>
<div style="left:514.5px;top:324.5px;width:8.5px;height:34px;background:#3b3e45;border:1px solid #2a2d33;"></div>
<div style="left:128px;top:361.5px;width:397px;height:38.5px;background:#262b35;"></div>
<div style="left:128px;top:399.5px;width:397px;height:1.2px;background:#5b626d;"></div>
<div style="left:129px;top:361.5px;width:36px;height:38px;background:#ff7ba8;"></div>
<div style="left:131px;top:364.5px;width:18px;height:14px;line-height:14px;font-size:9.5px;color:#3a0c1c;text-align:left;white-space:nowrap;overflow:hidden;font-weight:bold;">14</div>
<svg style="left:154px;top:367.5px;" width="8" height="9" viewBox="0 0 8 9"><path d="M7.500 0.500v8l-6.500-4z" fill="#ffe6ee" stroke="none" stroke-width="1" /></svg>
<svg style="left:155px;top:386.5px;" width="8" height="8" viewBox="0 0 8 8"><path d="M3 0.500h2v2.500h2.500v2h-2.500v2.500h-2v-2.500h-2.500v-2h2.500z" fill="#3a0c1c" stroke="none" stroke-width="1" /></svg>
<div style="left:174px;top:365.5px;width:122px;height:13.5px;background:#5f7288;box-shadow:inset 0 0 0 1px #72859a;"></div>
<div style="left:177px;top:365.5px;width:90px;height:13.5px;line-height:13.5px;font-size:12px;color:#fff;text-align:left;white-space:nowrap;overflow:hidden;">GUITAR</div>
<div style="left:270px;top:365.5px;width:25px;height:13.5px;line-height:13.5px;font-size:12px;color:#fff;text-align:right;white-space:nowrap;overflow:hidden;">|2</div>
<div style="left:174px;top:384px;width:122px;height:13.5px;background:#5f7288;box-shadow:inset 0 0 0 1px #72859a;"></div>
<div style="left:177px;top:384px;width:110px;height:13.5px;line-height:13.5px;font-size:12px;color:#fff;text-align:left;white-space:nowrap;overflow:hidden;">OUTPUT 1</div>
<div style="left:302px;top:365px;width:21.5px;height:14.5px;background:linear-gradient(#dedede,#bdbdbd 50%,#a3a3a3);border-radius:3px;box-shadow:inset 0 0 0 1px rgba(0,0,0,.35);"></div>
<svg style="left:302px;top:365px;" width="21.5" height="14.5" viewBox="0 0 21.5 14.5"><circle cx="10.7" cy="7.2" r="4.3" fill="#3a3a3a" stroke="none" stroke-width="1" /></svg>
<div style="left:323.5px;top:365px;width:21.5px;height:14.5px;background:linear-gradient(#dedede,#bdbdbd 50%,#a3a3a3);border-radius:3px;box-shadow:inset 0 0 0 1px rgba(0,0,0,.35);"></div>
<div style="left:323.5px;top:365px;width:21.5px;height:14.5px;line-height:14.5px;font-size:11.5px;color:#3a3a3a;text-align:center;white-space:nowrap;overflow:hidden;font-weight:bold;">M</div>
<div style="left:345px;top:365px;width:21.5px;height:14.5px;background:linear-gradient(#dedede,#bdbdbd 50%,#a3a3a3);border-radius:3px;box-shadow:inset 0 0 0 1px rgba(0,0,0,.35);"></div>
<div style="left:345px;top:365px;width:21.5px;height:14.5px;line-height:14.5px;font-size:11.5px;color:#3a3a3a;text-align:center;white-space:nowrap;overflow:hidden;font-weight:bold;">S</div>
<div style="left:371.5px;top:365px;width:21.5px;height:14.5px;background:linear-gradient(#f3c9a2,#e79a52 50%,#d8812f);border-radius:3px;box-shadow:inset 0 0 0 1px rgba(0,0,0,.35);"></div>
<div style="left:371.5px;top:365px;width:21.5px;height:14.5px;line-height:14.5px;font-size:11.5px;color:#3a3a3a;text-align:center;white-space:nowrap;overflow:hidden;font-weight:bold;">A</div>
<div style="left:393.5px;top:365px;width:21.5px;height:14.5px;background:linear-gradient(#dedede,#bdbdbd 50%,#a3a3a3);border-radius:3px;box-shadow:inset 0 0 0 1px rgba(0,0,0,.35);"></div>
<div style="left:393.5px;top:365px;width:21.5px;height:14.5px;line-height:14.5px;font-size:11.5px;color:#3a3a3a;text-align:center;white-space:nowrap;overflow:hidden;font-weight:bold;">C</div>
<div style="left:421px;top:365.5px;width:39px;height:13.5px;background:#5f7288;box-shadow:inset 0 0 0 1px #72859a;"></div>
<div style="left:421px;top:365.5px;width:36px;height:13.5px;line-height:13.5px;font-size:12px;color:#fff;text-align:right;white-space:nowrap;overflow:hidden;">0</div>
<div style="left:514.5px;top:363.5px;width:8.5px;height:34px;background:#3b3e45;border:1px solid #2a2d33;"></div>
<div style="left:128px;top:400.5px;width:397px;height:20px;background:#262b35;"></div>
<svg style="left:128px;top:400.5px;" width="397" height="28" viewBox="0 0 397 28"><path d="M1 0h283l4 3.500h109v17.500h-385l-4 4h-7z" fill="#a0549a" stroke="none" stroke-width="1" /><path d="M12 21h385v3h-385z" fill="#262b35" stroke="none" stroke-width="1" /><rect x="12" y="24" width="36" height="4" fill="#b8bcc0" /><rect x="48" y="25.5" width="130" height="1.5" fill="#6a7280" /><rect x="186" y="25.5" width="18" height="2" fill="#d0d4d8" /><rect x="212" y="25.5" width="18" height="2" fill="#d0d4d8" /></svg>
<div style="left:170px;top:409.5px;width:7px;height:2px;background:#2a0d28;"></div>
<div style="left:186px;top:404.5px;width:122px;height:13.5px;background:#5f7288;box-shadow:inset 0 0 0 1px #72859a;"></div>
<div style="left:189px;top:404.5px;width:110px;height:13.5px;line-height:13.5px;font-size:12px;color:#fff;text-align:left;white-space:nowrap;overflow:hidden;">VSTi</div>
<div style="left:514.5px;top:405px;width:8.5px;height:14px;background:#3b3e45;border:1px solid #2a2d33;"></div>
<div style="left:128px;top:428.5px;width:397px;height:15.5px;background:#1d2128;"></div>
<div style="left:128px;top:428.5px;width:17px;height:15.5px;background:#3a414d;"></div>
<svg style="left:128px;top:428.5px;" width="17" height="15.5" viewBox="0 0 17 15.5"><path d="M10.500 4l-4 3.800 4 3.800" fill="none" stroke="#d5dae0" stroke-width="1.7" /></svg>
<div style="left:146px;top:428.5px;width:17px;height:15.5px;background:#566170;"></div>
<div style="left:508px;top:428.5px;width:17px;height:15.5px;background:#3a414d;"></div>
<svg style="left:508px;top:428.5px;" width="17" height="15.5" viewBox="0 0 17 15.5"><path d="M6.500 4l4 3.800-4 3.800" fill="none" stroke="#d5dae0" stroke-width="1.7" /></svg>
<div style="left:525px;top:188px;width:5px;height:256px;background:#15181e;"></div>
<div style="left:530px;top:188px;width:416px;height:15px;background:#2a2f39;"></div>
<div style="left:530px;top:203px;width:416px;height:14px;background:#3e4757;"></div>
<div style="left:530px;top:217px;width:416px;height:211.5px;background:#343943;"></div>
<div style="left:530px;top:217px;width:416px;height:1px;background:#59606b;"></div>
<div style="left:530px;top:239px;width:416px;height:1px;background:#59606b;"></div>
<div style="left:530px;top:261px;width:416px;height:1px;background:#59606b;"></div>
<div style="left:530px;top:283px;width:416px;height:1px;background:#59606b;"></div>
<div style="left:530px;top:203px;width:1.5px;height:81px;background:#b9bec6;"></div>
<div style="left:530px;top:400px;width:1.2px;height:28px;background:#9aa0a8;"></div>
<div style="left:533.5px;top:203px;width:30px;height:14px;line-height:14px;font-size:11px;color:#fff;text-align:left;white-space:nowrap;overflow:hidden;letter-spacing:0.5px;">20</div>
<div style="left:594px;top:203px;width:1.5px;height:81px;background:#b9bec6;"></div>
<div style="left:594px;top:400px;width:1.2px;height:28px;background:#9aa0a8;"></div>
<div style="left:597.5px;top:203px;width:30px;height:14px;line-height:14px;font-size:11px;color:#fff;text-align:left;white-space:nowrap;overflow:hidden;letter-spacing:0.5px;">21</div>
<div style="left:658px;top:203px;width:1.5px;height:81px;background:#b9bec6;"></div>
<div style="left:658px;top:400px;width:1.2px;height:28px;background:#9aa0a8;"></div>
<div style="left:661.5px;top:203px;width:30px;height:14px;line-height:14px;font-size:11px;color:#fff;text-align:left;white-space:nowrap;overflow:hidden;letter-spacing:0.5px;">22</div>
<div style="left:722px;top:203px;width:1.5px;height:81px;background:#b9bec6;"></div>
<div style="left:722px;top:400px;width:1.2px;height:28px;background:#9aa0a8;"></div>
<div style="left:725.5px;top:203px;width:30px;height:14px;line-height:14px;font-size:11px;color:#fff;text-align:left;white-space:nowrap;overflow:hidden;letter-spacing:0.5px;">23</div>
<div style="left:786px;top:203px;width:1.5px;height:81px;background:#b9bec6;"></div>
<div style="left:786px;top:400px;width:1.2px;height:28px;background:#9aa0a8;"></div>
<div style="left:789.5px;top:203px;width:30px;height:14px;line-height:14px;font-size:11px;color:#fff;text-align:left;white-space:nowrap;overflow:hidden;letter-spacing:0.5px;">24</div>
<div style="left:850px;top:203px;width:1.5px;height:81px;background:#b9bec6;"></div>
<div style="left:850px;top:400px;width:1.2px;height:28px;background:#9aa0a8;"></div>
<div style="left:853.5px;top:203px;width:30px;height:14px;line-height:14px;font-size:11px;color:#fff;text-align:left;white-space:nowrap;overflow:hidden;letter-spacing:0.5px;">25</div>
<div style="left:914px;top:203px;width:1.5px;height:81px;background:#b9bec6;"></div>
<div style="left:914px;top:400px;width:1.2px;height:28px;background:#9aa0a8;"></div>
<div style="left:917.5px;top:203px;width:30px;height:14px;line-height:14px;font-size:11px;color:#fff;text-align:left;white-space:nowrap;overflow:hidden;letter-spacing:0.5px;">26</div>
<div style="left:530px;top:400px;width:416px;height:1px;background:#59606b;"></div>
<div style="left:530px;top:419.5px;width:416px;height:1px;background:#59606b;"></div>
<div style="left:530px;top:218px;width:70px;height:21px;background:#8c8c62;"></div>
<div style="left:533px;top:218px;width:68px;height:20px;line-height:20px;font-size:11px;color:#fff;text-align:left;white-space:nowrap;overflow:hidden;letter-spacing:0.2px;">4/4 C Major</div>
<div style="left:530px;top:284px;width:416px;height:36.2px;background:linear-gradient(#f0962a 0%,#f8a240 8%,#fbaa50 50%,#f9a444 85%,#f1962c 100%);"></div>
<div style="left:530px;top:293.5px;width:416px;height:2.2px;background:#fff4e4;"></div>
<svg style="left:530px;top:284px;" width="416" height="37" viewBox="0 0 416 37"><rect x="0" y="7.4" width="416" height="0.8" fill="#6a5540" /><rect x="0" y="7" width="10" height="1.6" fill="#6a5540" /><rect x="61" y="6.7" width="16" height="2.2" fill="#6a5540" /><rect x="80" y="6.5" width="13" height="2.6" fill="#6a5540" /><rect x="113" y="6.9" width="11" height="1.8" fill="#6a5540" /><rect x="152" y="6.7" width="21" height="2.2" fill="#6a5540" /><rect x="183" y="7.05" width="3" height="1.5" fill="#6a5540" /><rect x="191" y="6.6" width="30" height="2.4" fill="#6a5540" /><rect x="273" y="6.9" width="13" height="1.8" fill="#6a5540" /><rect x="312" y="7" width="9" height="1.6" fill="#6a5540" /><rect x="336" y="7.2" width="9" height="1.2" fill="#6a5540" /><rect x="353" y="6.6" width="12" height="2.4" fill="#6a5540" /><rect x="387" y="6.8" width="29" height="2" fill="#6a5540" /><rect x="0" y="26.6" width="416" height="0.8" fill="#6a5540" /><rect x="0" y="25.5" width="12" height="3" fill="#6a5540" /><rect x="60" y="25.6" width="17" height="2.8" fill="#6a5540" /><rect x="80" y="25" width="13" height="4" fill="#6a5540" /><rect x="113" y="26" width="11" height="2" fill="#6a5540" /><rect x="152" y="25.4" width="21" height="3.2" fill="#6a5540" /><rect x="184" y="25.2" width="37" height="3.6" fill="#6a5540" /><rect x="272" y="25.7" width="13" height="2.6" fill="#6a5540" /><rect x="312" y="25.9" width="9" height="2.2" fill="#6a5540" /><rect x="336" y="25.7" width="11" height="2.6" fill="#6a5540" /><rect x="351" y="25.2" width="14" height="3.6" fill="#6a5540" /><rect x="385" y="25.6" width="31" height="2.8" fill="#6a5540" /></svg>
<div style="left:734.5px;top:291.5px;width:6px;height:6px;background:#000;"></div>
<div style="left:530px;top:320.2px;width:416px;height:3.3px;background:#4a4f58;"></div>
<div style="left:530px;top:323.5px;width:416px;height:35px;background:linear-gradient(#e9484a 0%,#f05f62 20%,#f68a8c 52%,#f06a6c 80%,#e44a4c 100%);"></div>
<div style="left:530px;top:332.5px;width:416px;height:2.2px;background:#fff0f0;"></div>
<svg style="left:530px;top:323px;" width="416" height="37" viewBox="0 0 416 37"><rect x="0" y="17.6" width="416" height="0.8" fill="#6d4a4a" /><rect x="0" y="16.9" width="20" height="2.2" fill="#6d4a4a" /><rect x="61" y="16.8" width="15" height="2.4" fill="#6d4a4a" /><rect x="81" y="16.7" width="18" height="2.6" fill="#6d4a4a" /><rect x="111" y="16.8" width="18" height="2.4" fill="#6d4a4a" /><rect x="152" y="16.9" width="25" height="2.2" fill="#6d4a4a" /><rect x="184" y="16.5" width="38" height="3" fill="#6d4a4a" /><rect x="270" y="16.6" width="19" height="2.8" fill="#6d4a4a" /><rect x="304" y="17.25" width="7" height="1.5" fill="#6d4a4a" /><rect x="315" y="16.8" width="8" height="2.4" fill="#6d4a4a" /><rect x="336" y="16.8" width="11" height="2.4" fill="#6d4a4a" /><rect x="351" y="16.6" width="25" height="2.8" fill="#6d4a4a" /><rect x="386" y="16.2" width="30" height="3.6" fill="#6d4a4a" /></svg>
<div style="left:734.5px;top:330.5px;width:6px;height:6px;background:#000;"></div>
<div style="left:530px;top:358.5px;width:416px;height:3.5px;background:#4a4f58;"></div>
<div style="left:530px;top:362px;width:36px;height:38px;background:#3a3f49;"></div>
<div style="left:565.5px;top:362px;width:380.5px;height:36.5px;background:linear-gradient(#f57fa4 0%,#f891b1 18%,#fbb0c8 52%,#f99bb8 80%,#f488aa 100%);"></div>
<div style="left:565.5px;top:371px;width:380.5px;height:2.2px;background:#fff4f8;"></div>
<svg style="left:565.5px;top:362px;" width="380.5" height="37" viewBox="0 0 380.5 37"><rect x="0" y="17.6" width="380.5" height="0.8" fill="#7a5560" /><rect x="25.5" y="17" width="15" height="2" fill="#7a5560" /><rect x="45.5" y="16.8" width="20" height="2.4" fill="#7a5560" /><rect x="75.5" y="16.9" width="18" height="2.2" fill="#7a5560" /><rect x="116.5" y="17" width="25" height="2" fill="#7a5560" /><rect x="148.5" y="16.6" width="38" height="2.8" fill="#7a5560" /><rect x="234.5" y="16.7" width="19" height="2.6" fill="#7a5560" /><rect x="268.5" y="17.25" width="7" height="1.5" fill="#7a5560" /><rect x="279.5" y="16.9" width="8" height="2.2" fill="#7a5560" /><rect x="300.5" y="16.9" width="11" height="2.2" fill="#7a5560" /><rect x="315.5" y="16.8" width="25" height="2.4" fill="#7a5560" /><rect x="350.5" y="16.3" width="30" height="3.4" fill="#7a5560" /></svg>
<div style="left:565.5px;top:369.5px;width:6px;height:6px;background:#000;"></div>
<div style="left:755.5px;top:369.5px;width:6px;height:6px;background:#000;"></div>
<svg style="left:584px;top:361px;" width="16" height="16" viewBox="0 0 16 16"><circle cx="7.5" cy="7.5" r="5.8" fill="#f6e8ee" stroke="#7aa0b0" stroke-width="1.2" /><circle cx="7.5" cy="7.5" r="2.6" fill="#1f93ad" stroke="none" stroke-width="1" /></svg>
<div style="left:530px;top:398.2px;width:416px;height:2.3px;background:#4a4f58;"></div>
<div style="left:947px;top:188px;width:15px;height:256px;background:#1c2027;"></div>
<div style="left:948px;top:188px;width:15px;height:15px;background:#8b96a3;"></div>
<svg style="left:948px;top:188px;" width="15" height="15" viewBox="0 0 15 15"><path d="M7.500 2v11M3 5.500l4.500-3 4.500 3M3 9.500l4.500 3 4.500-3M3 7.500h9" fill="none" stroke="#111" stroke-width="1.2" /></svg>
<div style="left:947px;top:204px;width:15px;height:17px;background:#3a424e;"></div>
<svg style="left:947px;top:204px;" width="15" height="17" viewBox="0 0 15 17"><path d="M4 10.500l3.500-4 3.500 4" fill="none" stroke="#cfd6de" stroke-width="1.6" /></svg>
<div style="left:947px;top:245px;width:15px;height:18px;background:#5d6b7a;"></div>
<div style="left:947px;top:308px;width:15px;height:17px;background:#262b35;"></div>
<svg style="left:947px;top:308px;" width="15" height="17" viewBox="0 0 15 17"><path d="M4 6.500l3.500 4 3.500-4" fill="none" stroke="#cfd6de" stroke-width="1.6" /></svg>
<div style="left:947px;top:326px;width:15.5px;height:102px;background:#414954;"></div>
<div style="left:953px;top:331px;width:1px;height:38px;background:#6a727e;"></div>
<div style="left:956px;top:331px;width:1px;height:38px;background:#6a727e;"></div>
<div style="left:947.5px;top:335px;width:14.5px;height:6.5px;background:linear-gradient(#9aa4b0,#7d8894 50%,#68727e);"></div>
<div style="left:953px;top:387px;width:1px;height:38px;background:#6a727e;"></div>
<div style="left:956px;top:387px;width:1px;height:38px;background:#6a727e;"></div>
<div style="left:947.5px;top:391px;width:14.5px;height:6.5px;background:linear-gradient(#9aa4b0,#7d8894 50%,#68727e);"></div>
<div style="left:530px;top:428.5px;width:416px;height:15.5px;background:#1d2128;"></div>
<div style="left:530px;top:428.5px;width:17px;height:15.5px;background:#3a414d;"></div>
<svg style="left:530px;top:428.5px;" width="17" height="15.5" viewBox="0 0 17 15.5"><path d="M10.500 4l-4 3.800 4 3.800" fill="none" stroke="#d5dae0" stroke-width="1.7" /></svg>
<div style="left:572px;top:428.5px;width:17px;height:15.5px;background:#6f7d8c;"></div>
<div style="left:861px;top:428.5px;width:17px;height:15.5px;background:#3a414d;"></div>
<svg style="left:861px;top:428.5px;" width="17" height="15.5" viewBox="0 0 17 15.5"><path d="M6.500 4l4 3.800-4 3.800" fill="none" stroke="#d5dae0" stroke-width="1.7" /></svg>
<div style="left:878px;top:428.5px;width:84.5px;height:15.5px;background:#414954;"></div>
<div style="left:883px;top:434.5px;width:57px;height:1px;background:#6a727e;"></div>
<div style="left:883px;top:437.5px;width:57px;height:1px;background:#6a727e;"></div>
<div style="left:900.5px;top:429.5px;width:6.5px;height:14px;background:linear-gradient(90deg,#9aa4b0,#7d8894 50%,#68727e);"></div>
<svg style="left:951px;top:432px;" width="10" height="10" viewBox="0 0 10 10"><rect x="7" y="1" width="1.5" height="1.5" fill="#aab2bc" /><rect x="4" y="4" width="1.5" height="1.5" fill="#aab2bc" /><rect x="7" y="4" width="1.5" height="1.5" fill="#aab2bc" /><rect x="1" y="7" width="1.5" height="1.5" fill="#aab2bc" /><rect x="4" y="7" width="1.5" height="1.5" fill="#aab2bc" /><rect x="7" y="7" width="1.5" height="1.5" fill="#aab2bc" /></svg>
<div style="left:131px;top:447px;width:86px;height:21.5px;"><svg width="86" height="21.5" viewBox="0 0 86 21.5" style="left:0;top:0"><path d="M0 0h86 l-5 18.5 q-1 2 -3 2 h-64 q-2 0 -3 -2z" fill="#3a424e" stroke="#4a5360" stroke-width="1"/></svg></div>
<div class="jp" style="left:134px;top:447.5px;width:62px;height:18.5px;line-height:18.5px;font-size:10px;color:#fff;text-align:center;white-space:nowrap;overflow:hidden;font-weight:bold;letter-spacing:-0.3px;overflow:visible;">ソング</div>
<div style="left:196px;top:451px;width:13px;height:13px;background:#323943;border:1px solid #5b6470;"></div>
<svg style="left:196px;top:451px;" width="13" height="13" viewBox="0 0 13 13"><path d="M3.500 3.500l6 6M9.500 3.500l-6 6" fill="none" stroke="#6c7580" stroke-width="1.6" /></svg>
<div style="left:975px;top:29px;width:724px;height:447px;background:#262b35;border:2px solid #8b99a8;border-radius:4px;box-shadow:inset 0 0 0 4px #444d59;"></div>
<div style="left:981px;top:60px;width:712px;height:1.5px;background:#353c48;"></div>
<div class="tb bb" style="left:989px;top:35px;width:24px;height:24px"><svg width="24" height="24" viewBox="0 0 24 24"><line x1="6.5" y1="5" x2="6.5" y2="19" stroke="currentColor" stroke-width="1.3" stroke-dasharray="1.5 1"/><line x1="10" y1="5" x2="10" y2="19" stroke="currentColor" stroke-width="1.3" stroke-dasharray="1.5 1"/><line x1="13.5" y1="5" x2="13.5" y2="19" stroke="currentColor" stroke-width="1.3" stroke-dasharray="1.5 1"/><line x1="17" y1="5" x2="17" y2="19" stroke="currentColor" stroke-width="1.3" stroke-dasharray="1.5 1"/></svg></div>
<div class="tb bl" style="left:1015px;top:35px;width:24px;height:24px"><svg width="24" height="24" viewBox="0 0 24 24"><line x1="6.5" y1="5" x2="6.5" y2="14" stroke="currentColor" stroke-width="1.3" stroke-dasharray="1.5 1"/><line x1="10" y1="5" x2="10" y2="14" stroke="currentColor" stroke-width="1.3" stroke-dasharray="1.5 1"/><line x1="13.5" y1="5" x2="13.5" y2="14" stroke="currentColor" stroke-width="1.3" stroke-dasharray="1.5 1"/><line x1="17" y1="5" x2="17" y2="14" stroke="currentColor" stroke-width="1.3" stroke-dasharray="1.5 1"/><path d="M6 16.500h8v-2l3 2.800-3 2.800v-2h-8z" fill="currentColor" stroke="none" stroke-width="1" /><line x1="18" y1="13.5" x2="18" y2="20" stroke="currentColor" stroke-width="1.3" /></svg></div>
<div class="tb bb" style="left:1049px;top:35px;width:24px;height:24px"><svg width="24" height="24" viewBox="0 0 24 24"><rect x="11.5" y="5.5" width="1.3" height="12.5" fill="currentColor" /><ellipse cx="9.8" cy="18" rx="2.2" ry="1.6" fill="currentColor" transform="rotate(-20 9.8 18)"/><rect x="12.5" y="5.5" width="2.2" height="1.2" fill="currentColor" /></svg></div>
<div class="tb bl" style="left:1075px;top:35px;width:24px;height:24px"><svg width="24" height="24" viewBox="0 0 24 24"><rect x="12" y="5.5" width="1.2" height="12.5" fill="currentColor" /><ellipse cx="10.3" cy="18" rx="2.2" ry="1.6" fill="currentColor" transform="rotate(-20 10.3 18)"/><path d="M13.200 5.5c2.200 0.800 3.200 2 2.400 4.300 0-1.500-1-2.200-2.400-2.500z" fill="currentColor" stroke="none" stroke-width="1" /></svg></div>
<div class="tb bl" style="left:1101px;top:35px;width:24px;height:24px"><svg width="24" height="24" viewBox="0 0 24 24"><rect x="12" y="5.5" width="1.2" height="12.5" fill="currentColor" /><ellipse cx="10.3" cy="18" rx="2.2" ry="1.6" fill="currentColor" transform="rotate(-20 10.3 18)"/><path d="M13.200 5.5c2.200 0.800 3.200 2 2.400 4.300 0-1.500-1-2.200-2.400-2.500z" fill="currentColor" stroke="none" stroke-width="1" /><path d="M13.200 7.8c2.200 0.800 3.200 2 2.400 4.300 0-1.500-1-2.200-2.400-2.500z" fill="currentColor" stroke="none" stroke-width="1" /></svg></div>
<div class="tb bl" style="left:1127px;top:35px;width:24px;height:24px"><svg width="24" height="24" viewBox="0 0 24 24"><rect x="12" y="5.5" width="1.2" height="12.5" fill="currentColor" /><ellipse cx="10.3" cy="18" rx="2.2" ry="1.6" fill="currentColor" transform="rotate(-20 10.3 18)"/><path d="M13.200 5.5c2.200 0.800 3.200 2 2.400 4.300 0-1.500-1-2.200-2.400-2.500z" fill="currentColor" stroke="none" stroke-width="1" /><path d="M13.200 7.8c2.200 0.800 3.200 2 2.400 4.300 0-1.500-1-2.200-2.400-2.500z" fill="currentColor" stroke="none" stroke-width="1" /><path d="M13.200 10.1c2.200 0.800 3.200 2 2.400 4.300 0-1.500-1-2.200-2.400-2.500z" fill="currentColor" stroke="none" stroke-width="1" /></svg></div>
<div class="tb bl" style="left:1153px;top:35px;width:24px;height:24px"><svg width="24" height="24" viewBox="0 0 24 24"><rect x="12" y="5.5" width="1.2" height="12.5" fill="currentColor" /><ellipse cx="10.3" cy="18" rx="2.2" ry="1.6" fill="currentColor" transform="rotate(-20 10.3 18)"/><path d="M13.200 5.5c2.200 0.800 3.200 2 2.400 4.300 0-1.500-1-2.200-2.400-2.500z" fill="currentColor" stroke="none" stroke-width="1" /><path d="M13.200 7.8c2.200 0.800 3.200 2 2.400 4.300 0-1.500-1-2.200-2.400-2.500z" fill="currentColor" stroke="none" stroke-width="1" /><path d="M13.200 10.1c2.200 0.800 3.200 2 2.400 4.300 0-1.500-1-2.200-2.400-2.500z" fill="currentColor" stroke="none" stroke-width="1" /><path d="M13.200 12.4c2.200 0.800 3.200 2 2.400 4.300 0-1.500-1-2.200-2.400-2.500z" fill="currentColor" stroke="none" stroke-width="1" /></svg></div>
<div class="tb bl" style="left:1179px;top:35px;width:24px;height:24px"><svg width="24" height="24" viewBox="0 0 24 24"><text x="12" y="13" font-size="11.5" fill="currentColor" text-anchor="middle" font-weight="bold" >3</text><path d="M5.500 19.500v-2.500h13v2.500" fill="none" stroke="currentColor" stroke-width="1.3" /></svg></div>
<div class="tb bl" style="left:1213px;top:35px;width:24px;height:24px"><svg width="24" height="24" viewBox="0 0 24 24"><text x="7" y="13" font-size="11" fill="currentColor" text-anchor="middle" font-weight="bold" >*</text><ellipse cx="13.5" cy="17" rx="2.28" ry="1.9" fill="currentColor" transform="rotate(-20 13.5 17)"/><rect x="14.58" y="7" width="1.3" height="10" fill="currentColor" /><path d="M15.8 7.0 c2 1.5 3.5 3 2.5 6 c0 -2 -1 -3 -2.5 -3.5z" fill="currentColor" stroke="none" stroke-width="1" /></svg></div>
<div class="tb bd" style="left:1247px;top:35px;width:24px;height:24px"><svg width="24" height="24" viewBox="0 0 24 24"><ellipse cx="8" cy="11" rx="1.8" ry="1.5" fill="currentColor" transform="rotate(-20 8 11)"/><rect x="8.6" y="5" width="1.3" height="6" fill="currentColor" /><ellipse cx="15" cy="11" rx="1.8" ry="1.5" fill="currentColor" transform="rotate(-20 15 11)"/><rect x="15.6" y="5" width="1.3" height="6" fill="currentColor" /><path d="M6 15c2 4 10 4 12 0" fill="none" stroke="currentColor" stroke-width="1.2" /></svg></div>
<div class="tb bd" style="left:1273px;top:35px;width:24px;height:24px"><svg width="24" height="24" viewBox="0 0 24 24"><ellipse cx="8" cy="11" rx="1.8" ry="1.5" fill="currentColor" transform="rotate(-20 8 11)"/><rect x="8.6" y="5" width="1.3" height="6" fill="currentColor" /><rect x="12" y="14.5" width="7" height="1.3" fill="currentColor" /><rect x="14.85" y="11.7" width="1.3" height="7" fill="currentColor" /></svg></div>
<div class="tb bd" style="left:1299px;top:35px;width:24px;height:24px"><svg width="24" height="24" viewBox="0 0 24 24"><ellipse cx="8" cy="11" rx="1.8" ry="1.5" fill="currentColor" transform="rotate(-20 8 11)"/><rect x="8.6" y="5" width="1.3" height="6" fill="currentColor" /><rect x="12" y="14.5" width="7" height="1.3" fill="currentColor" /></svg></div>
<div class="tb bd" style="left:1325px;top:35px;width:24px;height:24px"><svg width="24" height="24" viewBox="0 0 24 24"><rect x="6" y="8" width="3" height="1.2" fill="currentColor" /><rect x="6" y="11" width="3" height="1.2" fill="currentColor" /><rect x="6" y="14" width="3" height="1.2" fill="currentColor" /><rect x="6" y="17" width="3" height="1.2" fill="currentColor" /><rect x="9" y="5" width="1.2" height="13" fill="currentColor" /><path d="M15 5l3 4h-2.300v9h-1.400v-9h-2.300z" fill="currentColor" stroke="none" stroke-width="1" /></svg></div>
<div class="tb bd" style="left:1351px;top:35px;width:24px;height:24px"><svg width="24" height="24" viewBox="0 0 24 24"><rect x="6" y="8" width="3" height="1.2" fill="currentColor" /><rect x="6" y="11" width="3" height="1.2" fill="currentColor" /><rect x="6" y="14" width="3" height="1.2" fill="currentColor" /><rect x="6" y="17" width="3" height="1.2" fill="currentColor" /><rect x="9" y="5" width="1.2" height="13" fill="currentColor" /><path d="M15 19l3-4h-2.300v-9h-1.400v9h-2.300z" fill="currentColor" stroke="none" stroke-width="1" /></svg></div>
<div class="tb bb" style="left:1385px;top:35px;width:24px;height:24px"><svg width="24" height="24" viewBox="0 0 24 24"><path d="M12 4.500c-3.500 0-5.500 2.500-5.500 5.500 0 3.500 3.500 6 5.500 9.500 2-3.500 5.500-6 5.500-9.500 0-3-2-5.500-5.500-5.500z" fill="currentColor" stroke="none" stroke-width="1" /><circle cx="12" cy="10" r="2.2" fill="#6b9cdb" stroke="none" stroke-width="1" /></svg></div>
<div class="tb bb" style="left:1411px;top:35px;width:24px;height:24px"><svg width="24" height="24" viewBox="0 0 24 24"><line x1="6.5" y1="5" x2="6.5" y2="19" stroke="currentColor" stroke-width="1.4" /><path d="M9 11.300h6v-2.300l4 3-4 3v-2.300h-6z" fill="currentColor" stroke="none" stroke-width="1" /></svg></div>
<div class="tb bb" style="left:1437px;top:35px;width:24px;height:24px"><svg width="24" height="24" viewBox="0 0 24 24"><ellipse cx="7.5" cy="11" rx="1.68" ry="1.4" fill="currentColor" transform="rotate(-20 7.5 11)"/><rect x="7.98" y="5" width="1.3" height="6" fill="currentColor" /><path d="M12 11.500h2.500l3.500-3.500v9l-3.500-3.500h-2.500z" fill="currentColor" stroke="none" stroke-width="1" /><line x1="19" y1="7" x2="13" y2="18" stroke="currentColor" stroke-width="1.1" /></svg></div>
<div class="tb bd" style="left:1471px;top:35px;width:24px;height:24px"><svg width="24" height="24" viewBox="0 0 24 24"><text x="8.5" y="13" font-size="10.5" fill="currentColor" text-anchor="middle" font-weight="bold" style="font-family:'Liberation Serif',serif">i</text><ellipse cx="14" cy="17" rx="1.92" ry="1.6" fill="currentColor" transform="rotate(-20 14 17)"/><rect x="14.72" y="8" width="1.3" height="9" fill="currentColor" /><path d="M15.9 8.0 c2 1.5 3.5 3 2.5 6 c0 -2 -1 -3 -2.5 -3.5z" fill="currentColor" stroke="none" stroke-width="1" /></svg></div>
<div class="tb bl" style="left:1497px;top:35px;width:24px;height:24px"><svg width="24" height="24" viewBox="0 0 24 24"><path d="M5.500 5.500h13v13h-13z" fill="none" stroke="currentColor" stroke-width="1.5" /><ellipse cx="11" cy="15.5" rx="1.92" ry="1.6" fill="currentColor" transform="rotate(-20 11 15.5)"/><rect x="11.72" y="7.5" width="1.3" height="8" fill="currentColor" /><rect x="12.5" y="7.5" width="3" height="1.2" fill="currentColor" /></svg></div>
<div class="tb bb" style="left:989px;top:62px;width:24px;height:24px"><svg width="24" height="24" viewBox="0 0 24 24"><path d="M8.2 5.2 L8.2 16.9 L11.1 14.3 L13.1 18.9 L15.2 17.9 L13.1 13.5 L16.8 13.5Z" fill="currentColor" stroke="none" stroke-width="1" /></svg></div>
<div class="tb bl" style="left:1015px;top:62px;width:24px;height:24px"><svg width="24" height="24" viewBox="0 0 24 24"><path d="M5 5l2-1 12 13.500-2.500 2.500z" fill="currentColor" stroke="none" stroke-width="1" /><path d="M17 19.500l2.500-2.500 0.500 3.500z" fill="currentColor" stroke="none" stroke-width="1" /></svg></div>
<div class="tb bl" style="left:1049px;top:62px;width:24px;height:24px"><svg width="24" height="24" viewBox="0 0 24 24"><path d="M4.500 5.500h10v4" fill="none" stroke="currentColor" stroke-width="1.1" stroke-dasharray="2 1"/><path d="M4.500 5.500v5h5" fill="none" stroke="currentColor" stroke-width="1.1" stroke-dasharray="2 1"/><path d="M14.0 10.3 L14.0 17.9 L15.9 16.2 L17.2 19.2 L18.6 18.6 L17.2 15.7 L19.6 15.7Z" fill="currentColor" stroke="none" stroke-width="1" /></svg></div>
<div class="tb bl" style="left:1075px;top:62px;width:24px;height:24px"><svg width="24" height="24" viewBox="0 0 24 24"><ellipse cx="7.5" cy="14" rx="2.04" ry="1.7" fill="currentColor" transform="rotate(-20 7.5 14)"/><rect x="8.34" y="5" width="1.3" height="9" fill="currentColor" /><path d="M14.0 10.5 L14.0 18.1 L15.9 16.4 L17.2 19.4 L18.6 18.8 L17.2 15.9 L19.6 15.9Z" fill="currentColor" stroke="none" stroke-width="1" /></svg></div>
<div class="tb bl" style="left:1101px;top:62px;width:24px;height:24px"><svg width="24" height="24" viewBox="0 0 24 24"><path d="M4.500 11l5.500-5.500 4 4-5.500 5.500z" fill="currentColor" stroke="none" stroke-width="1" /><path d="M5.500 11l2-2 3 3-2 2z" fill="#777" stroke="none" stroke-width="1" /><path d="M14.0 11.0 L14.0 18.6 L15.9 16.9 L17.2 19.9 L18.6 19.3 L17.2 16.4 L19.6 16.4Z" fill="currentColor" stroke="none" stroke-width="1" /></svg></div>
<div class="tb bl" style="left:1127px;top:62px;width:24px;height:24px"><svg width="24" height="24" viewBox="0 0 24 24"><path d="M8 4l2 8M11.500 4l-2 8" fill="none" stroke="currentColor" stroke-width="1.5" /><circle cx="6.5" cy="15.5" r="2" fill="none" stroke="currentColor" stroke-width="1.3" /><circle cx="12.5" cy="15.5" r="2" fill="none" stroke="currentColor" stroke-width="1.3" /><path d="M9.700 11.500l-2 2.500M9.700 11.500l2 2.500" fill="none" stroke="currentColor" stroke-width="1.2" /><path d="M15.5 11.0 L15.5 18.4 L17.3 16.7 L18.6 19.6 L19.9 19.0 L18.6 16.2 L20.9 16.2Z" fill="currentColor" stroke="none" stroke-width="1" /></svg></div>
<div class="tb bl" style="left:1153px;top:62px;width:24px;height:24px"><svg width="24" height="24" viewBox="0 0 24 24"><path d="M4.500 9.500h2.500l3.500-3.500v10l-3.500-3.500h-2.500z" fill="currentColor" stroke="none" stroke-width="1" /><line x1="12.5" y1="5.5" x2="6" y2="17" stroke="currentColor" stroke-width="1.1" /><path d="M14.5 10.5 L14.5 18.1 L16.4 16.4 L17.7 19.4 L19.1 18.8 L17.7 15.9 L20.1 15.9Z" fill="currentColor" stroke="none" stroke-width="1" /></svg></div>
<div class="tb bl" style="left:1179px;top:62px;width:24px;height:24px"><svg width="24" height="24" viewBox="0 0 24 24"><rect x="5" y="5" width="12" height="1.3" fill="currentColor" /><rect x="5" y="5" width="1.5" height="6.5" fill="currentColor" /><rect x="7.4" y="5" width="1.5" height="6.5" fill="currentColor" /><rect x="9.8" y="5" width="1.5" height="6.5" fill="currentColor" /><rect x="12.2" y="5" width="1.5" height="6.5" fill="currentColor" /><rect x="14.6" y="5" width="1.5" height="6.5" fill="currentColor" /><rect x="17" y="5" width="1.5" height="6.5" fill="currentColor" /><path d="M5 11.500h9" fill="none" stroke="currentColor" stroke-width="1" /><path d="M14.0 11.0 L14.0 18.6 L15.9 16.9 L17.2 19.9 L18.6 19.3 L17.2 16.4 L19.6 16.4Z" fill="currentColor" stroke="none" stroke-width="1" /></svg></div>
<div class="tb bl" style="left:1213px;top:62px;width:24px;height:24px"><svg width="24" height="24" viewBox="0 0 24 24"><path d="M5 9.500L10.500 4.500V7.500H18V18.500H7V15.500H15V10.800H10.500V14.500Z" fill="currentColor" stroke="none" stroke-width="1" /></svg></div>
<div class="tb bd" style="left:1251px;top:62px;width:24px;height:24px"><svg width="24" height="24" viewBox="0 0 24 24"><path d="M19 9.500L13.500 4.500V7.500H6V18.500H17V15.500H9V10.800H13.500V14.500Z" fill="currentColor" stroke="none" stroke-width="1" /></svg></div>
<div class="tb bd" style="left:1296px;top:62px;width:24px;height:24px"><svg width="24" height="24" viewBox="0 0 24 24"><path d="M10 4l2.500 9M14 4l-2.500 9" fill="none" stroke="currentColor" stroke-width="1.6" /><circle cx="8.5" cy="16.5" r="2.3" fill="none" stroke="currentColor" stroke-width="1.4" /><circle cx="15.5" cy="16.5" r="2.3" fill="none" stroke="currentColor" stroke-width="1.4" /><path d="M12 12l-2.500 3M12 12l2.500 3" fill="none" stroke="currentColor" stroke-width="1.4" /></svg></div>
<div class="tb bd" style="left:1322px;top:62px;width:24px;height:24px"><svg width="24" height="24" viewBox="0 0 24 24"><path d="M6 5h5v2h-3v9h-2z" fill="currentColor" stroke="none" stroke-width="1" /><path d="M9.500 8h5l3 3v8h-8z" fill="currentColor" stroke="none" stroke-width="1" /></svg></div>
<div class="tb bd" style="left:1348px;top:62px;width:24px;height:24px"><svg width="24" height="24" viewBox="0 0 24 24"><path d="M6 9c0-5 12-5 12 0v1.500h-12z" fill="currentColor" stroke="none" stroke-width="1" /><rect x="8" y="10.5" width="2.5" height="8" fill="currentColor" /><rect x="13.5" y="10.5" width="2.5" height="8" fill="currentColor" /><rect x="8" y="17" width="8" height="1.5" fill="currentColor" /></svg></div>
<div class="tb bd" style="left:1374px;top:62px;width:24px;height:24px"><svg width="24" height="24" viewBox="0 0 24 24"><path d="M6 5.500h10v3h-7v7h-3z" fill="none" stroke="currentColor" stroke-width="1.2" /><rect x="10" y="10" width="8.5" height="8.5" fill="currentColor" /><rect x="6" y="12.5" width="5" height="6" fill="currentColor" /></svg></div>
<div class="tb bd" style="left:1400px;top:62px;width:24px;height:24px"><svg width="24" height="24" viewBox="0 0 24 24"><path d="M6 13l7-7 4.500 4.500-7 7z" fill="currentColor" stroke="none" stroke-width="1" /><path d="M7.500 13l2.500-2.500 3.500 3.500-2.500 2.500z" fill="#666" stroke="none" stroke-width="1" /><line x1="5" y1="19.5" x2="19" y2="19.5" stroke="currentColor" stroke-width="1.4" /></svg></div>
<div class="tb bl" style="left:1434px;top:62px;width:24px;height:24px"><svg width="24" height="24" viewBox="0 0 24 24"><path d="M9 5v14M15 5v14M5.500 8.500h13M5.500 15.500h13" fill="none" stroke="currentColor" stroke-width="1.5" /><rect x="9.5" y="9" width="5" height="6" fill="#888" /></svg></div>
<div class="tb bd" style="left:1460px;top:62px;width:24px;height:24px"><svg width="24" height="24" viewBox="0 0 24 24"><rect x="6" y="14" width="3.5" height="5" fill="currentColor" /><rect x="10.5" y="10.5" width="3.5" height="8.5" fill="currentColor" /><rect x="15" y="6" width="3.5" height="13" fill="currentColor" /></svg></div>
<div class="tb bd" style="left:1486px;top:62px;width:24px;height:24px"><svg width="24" height="24" viewBox="0 0 24 24"><rect x="6" y="5" width="2.5" height="14" fill="currentColor" /><text x="14.5" y="12" font-size="7" fill="currentColor" text-anchor="middle" font-weight="bold" >72</text><rect x="10.5" y="14" width="3" height="5" fill="currentColor" /><rect x="14.5" y="12" width="3" height="7" fill="currentColor" /></svg></div>
<div class="tb bl" style="left:1519px;top:62px;width:24px;height:24px"><svg width="24" height="24" viewBox="0 0 24 24"><path d="M11 5h8v8l-2.800-2.800-3.200 3.200-2.400-2.400 3.200-3.200z" fill="currentColor" stroke="none" stroke-width="1" /><path d="M13 19h-8v-8l2.800 2.800 3.200-3.200 2.400 2.400-3.200 3.200z" fill="currentColor" stroke="none" stroke-width="1" /></svg></div>
<div class="tb bl" style="left:1238px;top:62px;width:10px;height:24px"><svg width="10" height="24" viewBox="0 0 10 24"><path d="M2 9.500h6l-3 3.500z" fill="currentColor" stroke="none" stroke-width="1" /></svg></div>
<div class="tb bd" style="left:1276px;top:62px;width:10px;height:24px"><svg width="10" height="24" viewBox="0 0 10 24"><path d="M2 9.500h6l-3 3.500z" fill="currentColor" stroke="none" stroke-width="1" /></svg></div>
<div style="left:981px;top:88px;width:712px;height:2px;background:#15181e;"></div>
<div style="left:983px;top:94.5px;width:109px;height:352.5px;background:#262b35;"></div>
<div style="left:983px;top:94.5px;width:109px;height:12px;background:#0e1014;"></div>
<div style="left:983px;top:94.5px;width:55.5px;height:12px;background:#262b35;"></div>
<div style="left:983px;top:94.5px;width:55.5px;height:12px;line-height:12px;font-size:9.5px;color:#fff;text-align:center;white-space:nowrap;overflow:hidden;font-weight:bold;">Track</div>
<div style="left:1040px;top:95.5px;width:52px;height:11px;background:#555b65;"></div>
<div style="left:1040px;top:95px;width:52px;height:12px;line-height:12px;font-size:9.5px;color:#8d939c;text-align:center;white-space:nowrap;overflow:hidden;font-weight:bold;">Mixer</div>
<div style="left:983px;top:106.5px;width:109px;height:17px;background:#4d545f;"></div>
<div style="left:983px;top:106.5px;width:9px;height:16.3px;background:#a9c2c2;"></div>
<div style="left:992px;top:106.5px;width:30px;height:16.3px;background:#b6e4f3;"></div>
<div style="left:1023px;top:106px;width:69px;height:17px;line-height:17px;font-size:12px;color:#fff;text-align:left;white-space:nowrap;overflow:hidden;letter-spacing:-0.250px;">Marker</div>
<div style="left:983px;top:123.5px;width:109px;height:17px;background:#4d545f;"></div>
<div style="left:983px;top:123.5px;width:9px;height:16.3px;background:#a9c2c2;"></div>
<div style="left:992px;top:123.5px;width:30px;height:16.3px;background:#b6e4f3;"></div>
<div style="left:1023px;top:123px;width:69px;height:17px;line-height:17px;font-size:12px;color:#fff;text-align:left;white-space:nowrap;overflow:hidden;letter-spacing:-0.250px;">Tempo</div>
<div style="left:983px;top:140.5px;width:109px;height:17px;background:#4d545f;"></div>
<div style="left:983px;top:140.5px;width:9px;height:16.3px;background:#a9c2c2;"></div>
<div style="left:992px;top:140.5px;width:30px;height:16.3px;background:#b6e4f3;"></div>
<div style="left:1023px;top:140px;width:69px;height:17px;line-height:17px;font-size:12px;color:#fff;text-align:left;white-space:nowrap;overflow:hidden;letter-spacing:-0.250px;">Chord</div>
<div style="left:983px;top:157.5px;width:109px;height:17px;background:#4d545f;"></div>
<div style="left:983px;top:157.5px;width:9px;height:16.3px;background:#a9c2c2;"></div>
<div style="left:992px;top:157.5px;width:30px;height:16.3px;background:#b6e4f3;"></div>
<div style="left:1023px;top:157px;width:69px;height:17px;line-height:17px;font-size:12px;color:#fff;text-align:left;white-space:nowrap;overflow:hidden;letter-spacing:-0.250px;">Tone</div>
<div style="left:983px;top:174.5px;width:109px;height:17px;background:#4d545f;"></div>
<div style="left:983px;top:174.5px;width:9px;height:16.3px;background:#a9c2c2;"></div>
<div style="left:992px;top:174.5px;width:30px;height:16.3px;background:#b6e4f3;"></div>
<div style="left:1023px;top:174px;width:69px;height:17px;line-height:17px;font-size:12px;color:#fff;text-align:left;white-space:nowrap;overflow:hidden;letter-spacing:-0.250px;">Exclusive/RPN</div>
<div style="left:983px;top:191.5px;width:9px;height:17px;background:#3fe0f2;"></div>
<svg style="left:983px;top:191.5px;" width="42" height="17" viewBox="0 0 42 17"><circle cx="14.5" cy="8.5" r="4.1" fill="#d2d4d6" stroke="none" stroke-width="1" /><rect x="20.2" y="4.3" width="2.8" height="8.4" fill="#d2d4d6" /><rect x="23.9" y="4.3" width="2.8" height="8.4" fill="#d2d4d6" /><rect x="27.6" y="4.3" width="2.8" height="8.4" fill="#d2d4d6" /><path d="M31.600 4v9l7-4.500z" fill="#d2d4d6" stroke="none" stroke-width="1" /></svg>
<div style="left:1030px;top:191px;width:62px;height:17px;line-height:17px;font-size:12px;color:#fff;text-align:left;white-space:nowrap;overflow:hidden;letter-spacing:-0.350px;">1:SYNTH[Melo</div>
<div style="left:983px;top:208.5px;width:109px;height:17px;background:#262b35;border:1.500px solid #d01818;"></div>
<div style="left:984.5px;top:210px;width:9px;height:14px;background:#4c9af0;"></div>
<svg style="left:983px;top:208.5px;" width="42" height="17" viewBox="0 0 42 17"><circle cx="14.5" cy="8.5" r="4.1" fill="#d2d4d6" stroke="none" stroke-width="1" /><rect x="20.2" y="4.3" width="2.8" height="8.4" fill="#d2d4d6" /><rect x="23.9" y="4.3" width="2.8" height="8.4" fill="#d2d4d6" /><rect x="27.6" y="4.3" width="2.8" height="8.4" fill="#d2d4d6" /><path d="M31.600 4v9l7-4.500z" fill="#d2d4d6" stroke="none" stroke-width="1" /></svg>
<div style="left:1030px;top:208px;width:62px;height:17px;line-height:17px;font-size:12px;color:#fff;text-align:left;white-space:nowrap;overflow:hidden;letter-spacing:-0.350px;">2:Syn bass(TAB</div>
<div style="left:983px;top:225.5px;width:9px;height:17px;background:#8a78f2;"></div>
<svg style="left:983px;top:225.5px;" width="42" height="17" viewBox="0 0 42 17"><circle cx="14.5" cy="8.5" r="4.1" fill="#d2d4d6" stroke="none" stroke-width="1" /><rect x="20.2" y="4.3" width="2.8" height="8.4" fill="#d2d4d6" /><rect x="23.9" y="4.3" width="2.8" height="8.4" fill="#d2d4d6" /><rect x="27.6" y="4.3" width="2.8" height="8.4" fill="#d2d4d6" /><path d="M31.600 4v9l7-4.500z" fill="#d2d4d6" stroke="none" stroke-width="1" /></svg>
<div style="left:1030px;top:225px;width:62px;height:17px;line-height:17px;font-size:12px;color:#fff;text-align:left;white-space:nowrap;overflow:hidden;letter-spacing:-0.350px;">3:LEAD[Ac1]</div>
<div style="left:1021px;top:242.5px;width:71px;height:17px;background:#3f4651;"></div>
<div style="left:983px;top:242.5px;width:9px;height:17px;background:#6c86ba;"></div>
<svg style="left:983px;top:242.5px;" width="42" height="17" viewBox="0 0 42 17"><circle cx="14.5" cy="8.5" r="4.1" fill="#d2d4d6" stroke="none" stroke-width="1" /><rect x="20.2" y="4.3" width="2.8" height="8.4" fill="#d2d4d6" /><rect x="23.9" y="4.3" width="2.8" height="8.4" fill="#d2d4d6" /><rect x="27.6" y="4.3" width="2.8" height="8.4" fill="#d2d4d6" /><path d="M31.600 4v9l7-4.500z" fill="#d2d4d6" stroke="none" stroke-width="1" /></svg>
<div style="left:1030px;top:242px;width:62px;height:17px;line-height:17px;font-size:12px;color:#fff;text-align:left;white-space:nowrap;overflow:hidden;letter-spacing:-0.350px;">4:E Piano[Ac2]</div>
<div style="left:983px;top:259.5px;width:9px;height:17px;background:#569c9c;"></div>
<svg style="left:983px;top:259.5px;" width="42" height="17" viewBox="0 0 42 17"><circle cx="14.5" cy="8.5" r="4.1" fill="#d2d4d6" stroke="none" stroke-width="1" /><rect x="20.2" y="4.3" width="2.8" height="8.4" fill="#d2d4d6" /><rect x="23.9" y="4.3" width="2.8" height="8.4" fill="#d2d4d6" /><rect x="27.6" y="4.3" width="2.8" height="8.4" fill="#d2d4d6" /><path d="M31.600 4v9l7-4.500z" fill="#d2d4d6" stroke="none" stroke-width="1" /></svg>
<div style="left:1030px;top:259px;width:62px;height:17px;line-height:17px;font-size:12px;color:#fff;text-align:left;white-space:nowrap;overflow:hidden;letter-spacing:-0.350px;">5:Piano[Obli1]</div>
<div style="left:983px;top:276.5px;width:9px;height:17px;background:#48a066;"></div>
<svg style="left:983px;top:276.5px;" width="42" height="17" viewBox="0 0 42 17"><circle cx="14.5" cy="8.5" r="4.1" fill="#d2d4d6" stroke="none" stroke-width="1" /><rect x="20.2" y="4.3" width="2.8" height="8.4" fill="#d2d4d6" /><rect x="23.9" y="4.3" width="2.8" height="8.4" fill="#d2d4d6" /><rect x="27.6" y="4.3" width="2.8" height="8.4" fill="#d2d4d6" /><path d="M31.600 4v9l7-4.500z" fill="#d2d4d6" stroke="none" stroke-width="1" /></svg>
<div style="left:1030px;top:276px;width:62px;height:17px;line-height:17px;font-size:12px;color:#fff;text-align:left;white-space:nowrap;overflow:hidden;letter-spacing:-0.350px;">6:SAX</div>
<div style="left:983px;top:293.5px;width:9px;height:17px;background:#82f08c;"></div>
<svg style="left:983px;top:293.5px;" width="42" height="17" viewBox="0 0 42 17"><circle cx="14.5" cy="8.5" r="4.1" fill="#d2d4d6" stroke="none" stroke-width="1" /><rect x="20.2" y="4.3" width="2.8" height="8.4" fill="#d2d4d6" /><rect x="23.9" y="4.3" width="2.8" height="8.4" fill="#d2d4d6" /><rect x="27.6" y="4.3" width="2.8" height="8.4" fill="#d2d4d6" /><path d="M31.600 4v9l7-4.500z" fill="#d2d4d6" stroke="none" stroke-width="1" /></svg>
<div style="left:1030px;top:293px;width:62px;height:17px;line-height:17px;font-size:12px;color:#fff;text-align:left;white-space:nowrap;overflow:hidden;letter-spacing:-0.350px;">7:Synth</div>
<div style="left:983px;top:310.5px;width:9px;height:17px;background:#1ebef2;"></div>
<svg style="left:983px;top:310.5px;" width="42" height="17" viewBox="0 0 42 17"><circle cx="14.5" cy="8.5" r="4.1" fill="#d2d4d6" stroke="none" stroke-width="1" /><rect x="20.2" y="4.3" width="2.8" height="8.4" fill="#d2d4d6" /><rect x="23.9" y="4.3" width="2.8" height="8.4" fill="#d2d4d6" /><rect x="27.6" y="4.3" width="2.8" height="8.4" fill="#d2d4d6" /><path d="M31.600 4v9l7-4.500z" fill="#d2d4d6" stroke="none" stroke-width="1" /></svg>
<div style="left:1030px;top:310px;width:62px;height:17px;line-height:17px;font-size:12px;color:#fff;text-align:left;white-space:nowrap;overflow:hidden;letter-spacing:-0.350px;">8:DRUM</div>
<div style="left:983px;top:327.5px;width:9px;height:17px;background:#12e08e;"></div>
<svg style="left:983px;top:327.5px;" width="42" height="17" viewBox="0 0 42 17"><circle cx="14.5" cy="8.5" r="4.1" fill="#d2d4d6" stroke="none" stroke-width="1" /><rect x="20.2" y="4.3" width="2.8" height="8.4" fill="#1fa44a" /><rect x="23.9" y="4.3" width="2.8" height="8.4" fill="#1fa44a" /><rect x="27.6" y="4.3" width="2.8" height="8.4" fill="#d2d4d6" /><path d="M31.600 4v9l7-4.500z" fill="#d2d4d6" stroke="none" stroke-width="1" /></svg>
<div style="left:1030px;top:327px;width:62px;height:17px;line-height:17px;font-size:12px;color:#fff;text-align:left;white-space:nowrap;overflow:hidden;letter-spacing:-0.350px;">9:Bass[Drum1]</div>
<div style="left:1092px;top:90px;width:4px;height:357px;background:#484d55;"></div>
<div style="left:1097px;top:90px;width:571px;height:108px;background:#262b35;"></div>
<div style="left:1148px;top:108.5px;width:519px;height:1.6px;background:#f0f2f4;"></div>
<div style="left:1147.9px;top:103px;width:1.3px;height:6px;background:#e8eaec;"></div>
<div style="left:1179.05px;top:105.5px;width:1.3px;height:3.5px;background:#e8eaec;"></div>
<div style="left:1210.2px;top:103px;width:1.3px;height:6px;background:#e8eaec;"></div>
<div style="left:1241.35px;top:105.5px;width:1.3px;height:3.5px;background:#e8eaec;"></div>
<div style="left:1272.5px;top:103px;width:1.3px;height:6px;background:#e8eaec;"></div>
<div style="left:1303.65px;top:105.5px;width:1.3px;height:3.5px;background:#e8eaec;"></div>
<div style="left:1334.8px;top:103px;width:1.3px;height:6px;background:#e8eaec;"></div>
<div style="left:1365.95px;top:105.5px;width:1.3px;height:3.5px;background:#e8eaec;"></div>
<div style="left:1397.1px;top:103px;width:1.3px;height:6px;background:#e8eaec;"></div>
<div style="left:1428.25px;top:105.5px;width:1.3px;height:3.5px;background:#e8eaec;"></div>
<div style="left:1459.4px;top:103px;width:1.3px;height:6px;background:#e8eaec;"></div>
<div style="left:1490.55px;top:105.5px;width:1.3px;height:3.5px;background:#e8eaec;"></div>
<div style="left:1521.7px;top:103px;width:1.3px;height:6px;background:#e8eaec;"></div>
<div style="left:1552.85px;top:105.5px;width:1.3px;height:3.5px;background:#e8eaec;"></div>
<div style="left:1584px;top:103px;width:1.3px;height:6px;background:#e8eaec;"></div>
<div style="left:1615.15px;top:105.5px;width:1.3px;height:3.5px;background:#e8eaec;"></div>
<div style="left:1646.3px;top:103px;width:1.3px;height:6px;background:#e8eaec;"></div>
<div style="left:1264px;top:92px;width:18px;height:14px;line-height:14px;font-size:11.5px;color:#f2f2f2;text-align:center;white-space:nowrap;overflow:hidden;">3</div>
<div style="left:1514px;top:92px;width:18px;height:14px;line-height:14px;font-size:11.5px;color:#f2f2f2;text-align:center;white-space:nowrap;overflow:hidden;">4</div>
<svg style="left:1158px;top:90.5px;" width="12" height="12" viewBox="0 0 12 12"><path d="M1.500 0.500h8.600l-4.300 10.800z" fill="#217fc6" stroke="none" stroke-width="1" /></svg>
<div style="left:1098px;top:113px;width:80px;height:17px;line-height:17px;font-size:12px;color:#f0f0f0;text-align:left;white-space:nowrap;overflow:hidden;">Marker</div>
<div style="left:1098px;top:130px;width:80px;height:17px;line-height:17px;font-size:12px;color:#f0f0f0;text-align:left;white-space:nowrap;overflow:hidden;">Tempo</div>
<div style="left:1098px;top:147px;width:80px;height:17px;line-height:17px;font-size:12px;color:#f0f0f0;text-align:left;white-space:nowrap;overflow:hidden;">Chord</div>
<div style="left:1098px;top:164px;width:80px;height:17px;line-height:17px;font-size:12px;color:#f0f0f0;text-align:left;white-space:nowrap;overflow:hidden;">Tone</div>
<div style="left:1098px;top:181px;width:80px;height:17px;line-height:17px;font-size:12px;color:#f0f0f0;text-align:left;white-space:nowrap;overflow:hidden;">Exc/RPN</div>
<div style="left:1097px;top:198px;width:14px;height:204px;background:#2a2f38;"></div>
<div style="left:1097px;top:198px;width:1.5px;height:100px;background:#e0e0e0;"></div>
<div style="left:1097px;top:198px;width:14px;height:1.5px;background:#e0e0e0;"></div>
<div style="left:1097px;top:300.5px;width:1.5px;height:101px;background:#e0e0e0;"></div>
<div style="left:1097px;top:300.5px;width:14px;height:1.5px;background:#e0e0e0;"></div>
<div style="left:1111px;top:198px;width:37px;height:204px;background:#fcfcfc;"></div>
<svg style="left:1099px;top:238px;" width="12" height="16" viewBox="0 0 12 16"><path d="M2 2h8l-4 4zM2 14h8l-4-4z" fill="#cfd3d8" stroke="none" stroke-width="1" /><rect x="2" y="7.3" width="8" height="1.4" fill="#cfd3d8" /></svg>
<svg style="left:1099px;top:342px;" width="12" height="14" viewBox="0 0 12 14"><path d="M1.500 1h8v12h-8z" fill="none" stroke="#cfd3d8" stroke-width="1.2" /><rect x="2" y="4.5" width="7" height="1.2" fill="#cfd3d8" /><rect x="2" y="8" width="7" height="1.2" fill="#cfd3d8" /></svg>
<div style="left:1148px;top:198px;width:502px;height:204px;background:#eef1f8;"></div>
<svg style="left:1111px;top:198px;" width="37" height="204" viewBox="0 0 37 204"><rect x="0" y="10.34" width="20.5" height="9.24" fill="#0a0a0a" /><rect x="18.3" y="10.34" width="2.2" height="9.24" fill="#6a6a6a" /><rect x="0" y="18.38" width="20.5" height="1.2" fill="#777" /><rect x="20" y="14.56" width="17" height="1" fill="#222" /><rect x="0" y="29.52" width="37" height="1.2" fill="#222" /><rect x="0" y="40.46" width="20.5" height="9.24" fill="#0a0a0a" /><rect x="18.3" y="40.46" width="2.2" height="9.24" fill="#6a6a6a" /><rect x="0" y="48.5" width="20.5" height="1.2" fill="#777" /><rect x="20" y="44.68" width="17" height="1" fill="#222" /><rect x="0" y="60.54" width="20.5" height="9.24" fill="#0a0a0a" /><rect x="18.3" y="60.54" width="2.2" height="9.24" fill="#6a6a6a" /><rect x="0" y="68.58" width="20.5" height="1.2" fill="#777" /><rect x="20" y="64.76" width="17" height="1" fill="#222" /><rect x="0" y="80.62" width="20.5" height="9.24" fill="#0a0a0a" /><rect x="18.3" y="80.62" width="2.2" height="9.24" fill="#6a6a6a" /><rect x="0" y="88.66" width="20.5" height="1.2" fill="#777" /><rect x="20" y="84.84" width="17" height="1" fill="#222" /><rect x="0" y="99.8" width="37" height="1.2" fill="#222" /><rect x="0" y="110.74" width="20.5" height="9.24" fill="#0a0a0a" /><rect x="18.3" y="110.74" width="2.2" height="9.24" fill="#6a6a6a" /><rect x="0" y="118.78" width="20.5" height="1.2" fill="#777" /><rect x="20" y="114.96" width="17" height="1" fill="#222" /><rect x="0" y="130.82" width="20.5" height="9.24" fill="#0a0a0a" /><rect x="18.3" y="130.82" width="2.2" height="9.24" fill="#6a6a6a" /><rect x="0" y="138.86" width="20.5" height="1.2" fill="#777" /><rect x="20" y="135.04" width="17" height="1" fill="#222" /><rect x="0" y="150" width="37" height="1.2" fill="#222" /><rect x="0" y="160.94" width="20.5" height="9.24" fill="#0a0a0a" /><rect x="18.3" y="160.94" width="2.2" height="9.24" fill="#6a6a6a" /><rect x="0" y="168.98" width="20.5" height="1.2" fill="#777" /><rect x="20" y="165.16" width="17" height="1" fill="#222" /><rect x="0" y="181.02" width="20.5" height="9.24" fill="#0a0a0a" /><rect x="18.3" y="181.02" width="2.2" height="9.24" fill="#6a6a6a" /><rect x="0" y="189.06" width="20.5" height="1.2" fill="#777" /><rect x="20" y="185.24" width="17" height="1" fill="#222" /><rect x="0" y="201.1" width="20.5" height="2.4" fill="#0a0a0a" /><rect x="18.3" y="201.1" width="2.2" height="2.4" fill="#6a6a6a" /><rect x="0" y="202.3" width="20.5" height="1.2" fill="#777" /><rect x="20" y="201.9" width="17" height="1" fill="#222" /></svg>
<svg style="left:1148px;top:198px;" width="502" height="204" viewBox="0 0 502 204"><rect x="0" y="10.04" width="502" height="10.04" fill="#d0d4da" /><rect x="0" y="29.52" width="502" height="1.2" fill="#8e9299" /><rect x="0" y="40.16" width="502" height="10.04" fill="#d0d4da" /><rect x="0" y="60.24" width="502" height="10.04" fill="#d0d4da" /><rect x="0" y="80.32" width="502" height="10.04" fill="#d0d4da" /><rect x="0" y="99.8" width="502" height="1.2" fill="#8e9299" /><rect x="0" y="110.44" width="502" height="10.04" fill="#d0d4da" /><rect x="0" y="130.52" width="502" height="10.04" fill="#d0d4da" /><rect x="0" y="150" width="502" height="1.2" fill="#8e9299" /><rect x="0" y="160.64" width="502" height="10.04" fill="#d0d4da" /><rect x="0" y="180.72" width="502" height="10.04" fill="#d0d4da" /><rect x="0" y="200.8" width="502" height="3.2" fill="#d0d4da" /><rect x="-0.8" y="0" width="2.6" height="204" fill="#18186e" /><line x1="31.65" y1="0" x2="31.65" y2="204" stroke="#8a8a8a" stroke-width="1" stroke-dasharray="1.500 1.500"/><rect x="62.05" y="0" width="1.5" height="204" fill="#5252c4" /><line x1="93.95" y1="0" x2="93.95" y2="204" stroke="#8a8a8a" stroke-width="1" stroke-dasharray="1.500 1.500"/><rect x="124" y="0" width="2.2" height="204" fill="#3030b8" /><line x1="156.25" y1="0" x2="156.25" y2="204" stroke="#8a8a8a" stroke-width="1" stroke-dasharray="1.500 1.500"/><rect x="186.65" y="0" width="1.5" height="204" fill="#5252c4" /><line x1="218.55" y1="0" x2="218.55" y2="204" stroke="#8a8a8a" stroke-width="1" stroke-dasharray="1.500 1.500"/><rect x="248.95" y="0" width="1.5" height="204" fill="#5252c4" /><line x1="280.85" y1="0" x2="280.85" y2="204" stroke="#8a8a8a" stroke-width="1" stroke-dasharray="1.500 1.500"/><rect x="311.25" y="0" width="1.5" height="204" fill="#5252c4" /><line x1="343.15" y1="0" x2="343.15" y2="204" stroke="#8a8a8a" stroke-width="1" stroke-dasharray="1.500 1.500"/><rect x="373.2" y="0" width="2.2" height="204" fill="#3030b8" /><line x1="405.45" y1="0" x2="405.45" y2="204" stroke="#8a8a8a" stroke-width="1" stroke-dasharray="1.500 1.500"/><rect x="435.85" y="0" width="1.5" height="204" fill="#5252c4" /><line x1="467.75" y1="0" x2="467.75" y2="204" stroke="#8a8a8a" stroke-width="1" stroke-dasharray="1.500 1.500"/><rect x="498.15" y="0" width="1.5" height="204" fill="#5252c4" /><rect x="32.5" y="21.1" width="30.0" height="8.0" fill="#6a8ec6" stroke="#3b5686" stroke-width="1"/><rect x="481.1" y="51.2" width="20.4" height="8.0" fill="#6a8ec6" stroke="#3b5686" stroke-width="1"/><rect x="374.5" y="71.3" width="104.5" height="8.0" fill="#6a8ec6" stroke="#3b5686" stroke-width="1"/><rect x="374.5" y="91.4" width="103.6" height="8.0" fill="#6a8ec6" stroke="#3b5686" stroke-width="1"/><rect x="481.1" y="91.4" width="20.4" height="8.0" fill="#6a8ec6" stroke="#3b5686" stroke-width="1"/><rect x="125.9" y="101.4" width="105.2" height="8.0" fill="#6a8ec6" stroke="#3b5686" stroke-width="1"/><rect x="234.3" y="101.4" width="135.5" height="8.0" fill="#6a8ec6" stroke="#3b5686" stroke-width="1"/><rect x="234.3" y="121.5" width="135.2" height="8.0" fill="#6a8ec6" stroke="#3b5686" stroke-width="1"/><rect x="374.5" y="121.5" width="105.6" height="8.0" fill="#6a8ec6" stroke="#3b5686" stroke-width="1"/><rect x="482.2" y="121.5" width="19.3" height="8.0" fill="#6a8ec6" stroke="#3b5686" stroke-width="1"/><rect x="1.0" y="141.6" width="121.4" height="8.0" fill="#6a8ec6" stroke="#3b5686" stroke-width="1"/><rect x="125.9" y="141.6" width="105.2" height="8.0" fill="#6a8ec6" stroke="#3b5686" stroke-width="1"/><rect x="374.5" y="141.6" width="105.6" height="8.0" fill="#6a8ec6" stroke="#3b5686" stroke-width="1"/><rect x="482.2" y="151.6" width="19.3" height="8.0" fill="#6a8ec6" stroke="#3b5686" stroke-width="1"/><rect x="234.3" y="161.6" width="135.2" height="8.0" fill="#6a8ec6" stroke="#3b5686" stroke-width="1"/><rect x="374.5" y="161.6" width="104.5" height="8.0" fill="#6a8ec6" stroke="#3b5686" stroke-width="1"/><rect x="1.0" y="181.7" width="122.5" height="8.0" fill="#6a8ec6" stroke="#3b5686" stroke-width="1"/><rect x="125.9" y="191.8" width="105.2" height="8.0" fill="#6a8ec6" stroke="#3b5686" stroke-width="1"/><rect x="233.2" y="191.8" width="136.3" height="8.0" fill="#6a8ec6" stroke="#3b5686" stroke-width="1"/></svg>
<div style="left:1132px;top:217px;width:16px;height:11px;line-height:11px;font-size:8.5px;color:#c0242c;text-align:left;white-space:nowrap;overflow:hidden;font-weight:bold;letter-spacing:-0.3px;">C5</div>
<div style="left:1132px;top:337.5px;width:16px;height:11px;line-height:11px;font-size:8.5px;color:#c0242c;text-align:left;white-space:nowrap;overflow:hidden;font-weight:bold;letter-spacing:-0.3px;">C4</div>
<div style="left:1650px;top:198px;width:16.5px;height:171px;background:#1f232a;"></div>
<div style="left:1650px;top:198px;width:16.5px;height:16px;background:#3a414d;"></div>
<svg style="left:1650px;top:198px;" width="16.5" height="16" viewBox="0 0 16.5 16"><path d="M4.8 10.0l3.500-4 3.500 4" fill="none" stroke="#d5dae0" stroke-width="1.7" /></svg>
<div style="left:1650px;top:272.5px;width:16.5px;height:17px;background:#6f7d8c;"></div>
<div style="left:1650px;top:351px;width:16.5px;height:17px;background:#262b35;"></div>
<svg style="left:1650px;top:351px;" width="16.5" height="17" viewBox="0 0 16.5 17"><path d="M4.8 6.5l3.500 4 3.500-4" fill="none" stroke="#d5dae0" stroke-width="1.7" /></svg>
<div style="left:1650.5px;top:369px;width:16px;height:16px;background:#6b7583;border:1px solid #8893a0;"></div>
<svg style="left:1650.5px;top:369px;" width="16" height="16" viewBox="0 0 16 16"><rect x="4" y="7.2" width="8" height="1.6" fill="#1c2027" /></svg>
<div style="left:1650.5px;top:386px;width:16px;height:16px;background:#6b7583;border:1px solid #8893a0;"></div>
<svg style="left:1650.5px;top:386px;" width="16" height="16" viewBox="0 0 16 16"><rect x="4" y="7.2" width="8" height="1.6" fill="#1c2027" /><rect x="7.2" y="4" width="1.6" height="8" fill="#1c2027" /></svg>
<div style="left:1097px;top:402px;width:571px;height:16.5px;background:#292d35;"></div>
<div style="left:1097px;top:402px;width:17px;height:16.5px;background:#3a414d;"></div>
<svg style="left:1097px;top:402px;" width="17" height="16.5" viewBox="0 0 17 16.5"><path d="M10.5 4.8l-4 3.500 4 3.500" fill="none" stroke="#d5dae0" stroke-width="1.7" /></svg>
<div style="left:1117px;top:402px;width:17px;height:16.5px;background:#6f7d8c;"></div>
<div style="left:1598px;top:402px;width:16px;height:16.5px;background:#3a414d;"></div>
<svg style="left:1598px;top:402px;" width="16" height="16.5" viewBox="0 0 16 16.5"><path d="M6.0 4.8l4 3.500-4 3.500" fill="none" stroke="#d5dae0" stroke-width="1.7" /></svg>
<div style="left:1615px;top:402.5px;width:16px;height:16px;background:#6b7583;border:1px solid #8893a0;"></div>
<svg style="left:1615px;top:402.5px;" width="16" height="16" viewBox="0 0 16 16"><rect x="4" y="7.2" width="8" height="1.6" fill="#1c2027" /></svg>
<div style="left:1632px;top:402.5px;width:16px;height:16px;background:#6b7583;border:1px solid #8893a0;"></div>
<svg style="left:1632px;top:402.5px;" width="16" height="16" viewBox="0 0 16 16"><rect x="4" y="7.2" width="8" height="1.6" fill="#1c2027" /><rect x="7.2" y="4" width="1.6" height="8" fill="#1c2027" /></svg>
<svg style="left:1652px;top:404px;" width="12" height="12" viewBox="0 0 12 12"><rect x="8" y="2" width="1.6" height="1.6" fill="#aab2bc" /><rect x="5" y="5" width="1.6" height="1.6" fill="#aab2bc" /><rect x="8" y="5" width="1.6" height="1.6" fill="#aab2bc" /><rect x="2" y="8" width="1.6" height="1.6" fill="#aab2bc" /><rect x="5" y="8" width="1.6" height="1.6" fill="#aab2bc" /><rect x="8" y="8" width="1.6" height="1.6" fill="#aab2bc" /></svg>
<div style="left:1097px;top:418.5px;width:571px;height:2px;background:#3a3d42;"></div>
<div style="left:1097px;top:423.8px;width:26px;height:19px;background:#262b35;border:1px solid #15171b;box-shadow:0 0 0 1px #50555d;"></div>
<svg style="left:1097px;top:423.8px;" width="26" height="19" viewBox="0 0 26 19"><path d="M4.500 4.500h9v9h-9z" fill="none" stroke="#d0d4d8" stroke-width="1" stroke-dasharray="1.500 1"/><path d="M16 5v10l2.300-2 1.700 3.500 1.500-0.700-1.700-3.300h3z" fill="#f0f0f0" stroke="none" stroke-width="1" /></svg>
<div style="left:1125px;top:423.8px;width:30px;height:19px;background:#2a5588;border:1px solid #15171b;box-shadow:0 0 0 1px #50555d;"></div>
<svg style="left:1125px;top:423.8px;" width="30" height="19" viewBox="0 0 30 19"><path d="M3.500 12C5 2.500 8.500 2.500 10.500 9.500S14.500 16.500 16.500 9.500S21 2.500 23 9.500S25.500 15 26.500 14" fill="none" stroke="#dfe7f0" stroke-width="1.2" /></svg>
<div style="left:1157px;top:423.8px;width:10px;height:19px;background:#262b35;border:1px solid #15171b;box-shadow:0 0 0 1px #50555d;"></div>
<svg style="left:1157px;top:423.8px;" width="10" height="19" viewBox="0 0 10 19"><path d="M1.500 5h7l-3.500 4z" fill="#e0e4e8" stroke="none" stroke-width="1" /></svg>
<div style="left:1169px;top:423.8px;width:142px;height:19px;background:#262b35;border:1px solid #15171b;box-shadow:0 0 0 1px #50555d;"></div>
<div style="left:1179px;top:423.8px;width:112px;height:19px;line-height:19px;font-size:12.5px;color:#e6e9ec;text-align:left;white-space:nowrap;overflow:hidden;font-weight:bold;">Strip Chart</div>
<svg style="left:1287px;top:423.8px;" width="20" height="19" viewBox="0 0 20 19"><path d="M3 5.500h12l-6 6.500z" fill="#e0e4e8" stroke="none" stroke-width="1" /></svg>
<div style="left:1314px;top:423.8px;width:56px;height:19px;background:#262b35;border:1px solid #15171b;box-shadow:0 0 0 1px #50555d;"></div>
<div style="left:1319px;top:423.8px;width:60px;height:19px;line-height:19px;font-size:12.5px;color:#e6e9ec;text-align:left;white-space:nowrap;overflow:hidden;font-weight:bold;">Interval</div>
<div style="left:1372px;top:424.8px;width:49px;height:17px;background:#fff;border:1px solid #9aa0a8;"></div>
<div style="left:1372px;top:424.8px;width:31px;height:17px;line-height:17px;font-size:11.5px;color:#111;text-align:right;white-space:nowrap;overflow:hidden;">10</div>
<svg style="left:1405px;top:424.8px;" width="15" height="17" viewBox="0 0 15 17"><path d="M3.500 7l4-4 4 4zM3.500 10l4 4 4-4z" fill="#333" stroke="none" stroke-width="1" /><path d="M1 1h13v15h-13z" fill="none" stroke="#bbb" stroke-width="0.8" /></svg>
<div style="left:1423.5px;top:423.8px;width:107.5px;height:19px;background:#262b35;border:1px solid #15171b;box-shadow:0 0 0 1px #50555d;"></div>
<div style="left:1428.5px;top:423.8px;width:60px;height:19px;line-height:19px;font-size:12.5px;color:#e6e9ec;text-align:left;white-space:nowrap;overflow:hidden;font-weight:bold;">Track&nbsp; :</div>
<div style="left:1423.5px;top:423.8px;width:99.5px;height:19px;line-height:19px;font-size:12.5px;color:#e6e9ec;text-align:right;white-space:nowrap;overflow:hidden;font-weight:bold;">1</div>
<div style="left:1533.5px;top:423.8px;width:26px;height:19px;background:#262b35;border:1px solid #15171b;box-shadow:0 0 0 1px #50555d;"></div>
<svg style="left:1533.5px;top:423.8px;" width="26" height="19" viewBox="0 0 26 19"><path d="M4 15v-3l8-6h9v9z" fill="#e0e3e6" stroke="none" stroke-width="1" /></svg>
<div style="left:1561.5px;top:423.8px;width:26px;height:19px;background:#2a5588;border:1px solid #15171b;box-shadow:0 0 0 1px #50555d;"></div>
<svg style="left:1561.5px;top:423.8px;" width="26" height="19" viewBox="0 0 26 19"><path d="M4 13h5l6-6h6" fill="none" stroke="#f0f2f4" stroke-width="1.6" /><rect x="3" y="11.5" width="3" height="3" fill="#f0f2f4" /><rect x="19" y="5.5" width="3" height="3" fill="#f0f2f4" /></svg>
<div style="left:1589.5px;top:423.8px;width:26px;height:19px;background:#262b35;border:1px solid #15171b;box-shadow:0 0 0 1px #50555d;"></div>
<svg style="left:1589.5px;top:423.8px;" width="26" height="19" viewBox="0 0 26 19"><path d="M3 16l5-11h1l3 10.500h10" fill="none" stroke="#e0e3e6" stroke-width="1.2" /></svg>
<div style="left:1617.5px;top:423.8px;width:26px;height:19px;background:#2a5588;border:1px solid #15171b;box-shadow:0 0 0 1px #50555d;"></div>
<svg style="left:1617.5px;top:423.8px;" width="26" height="19" viewBox="0 0 26 19"><path d="M3 16c4 0 4-11 8-11h11" fill="none" stroke="#e0e3e6" stroke-width="1.2" /></svg>
<div style="left:1645.5px;top:423.8px;width:22.5px;height:19px;background:#262b35;border:1px solid #15171b;box-shadow:0 0 0 1px #50555d;"></div>
<svg style="left:1645.5px;top:423.8px;" width="22.5" height="19" viewBox="0 0 22.5 19"><path d="M6 4v11" fill="none" stroke="#e0e3e6" stroke-width="1.4" /><path d="M9 9.500l4-3v2.200h8v1.600h-8v2.200z" fill="#e0e3e6" stroke="none" stroke-width="1" /></svg>
<div style="left:1668px;top:90px;width:2px;height:357px;background:#4a4d52;"></div>
<div style="left:1670px;top:90px;width:24px;height:357px;background:#262b35;"></div>
<svg style="left:1672px;top:92px;" width="20" height="16" viewBox="0 0 20 16"><path d="M8 2l-6 5.500 6 5.500M16 2l-6 5.500 6 5.500" fill="none" stroke="#eef0f2" stroke-width="1.5" /></svg>
<div style="left:983px;top:447px;width:86px;height:21.5px;"><svg width="86" height="21.5" viewBox="0 0 86 21.5" style="left:0;top:0"><path d="M0 0h86 l-5 18.5 q-1 2 -3 2 h-64 q-2 0 -3 -2z" fill="#3a424e" stroke="#4a5360" stroke-width="1"/></svg></div>
<div class="jp" style="left:986px;top:447.5px;width:62px;height:18.5px;line-height:18.5px;font-size:10px;color:#fff;text-align:center;white-space:nowrap;overflow:hidden;font-weight:bold;letter-spacing:-0.3px;overflow:visible;">ピアノロール</div>
<div style="left:1048px;top:451px;width:13px;height:13px;background:#323943;border:1px solid #5b6470;"></div>
<svg style="left:1048px;top:451px;" width="13" height="13" viewBox="0 0 13 13"><path d="M3.500 3.500l6 6M9.500 3.500l-6 6" fill="none" stroke="#6c7580" stroke-width="1.6" /></svg>
<div style="left:1699px;top:27px;width:221px;height:936px;background:#262b35;"></div>
<div style="left:1699px;top:28px;width:110px;height:18px;background:#525760;"></div>
<div style="left:1699px;top:28px;width:110px;height:18px;line-height:18px;font-size:13px;color:#8a8f98;text-align:center;white-space:nowrap;overflow:hidden;font-weight:bold;letter-spacing:1px;">INST</div>
<div style="left:1845px;top:27px;width:40px;height:20px;line-height:20px;font-size:13.5px;color:#fff;text-align:center;white-space:nowrap;overflow:hidden;font-weight:bold;">FX</div>
<svg style="left:1702px;top:56px;" width="14" height="14" viewBox="0 0 14 14"><circle cx="6.5" cy="6.5" r="4.3" fill="#b5b5b5" stroke="none" stroke-width="1" /></svg>
<div class="jp" style="left:1716px;top:54px;width:80px;height:17px;line-height:17px;font-size:12px;color:#fff;text-align:left;white-space:nowrap;overflow:hidden;font-weight:500;letter-spacing:-0.5px;">カテゴリー</div>
<svg style="left:1810px;top:55px;" width="16" height="16" viewBox="0 0 16 16"><circle cx="7.5" cy="7.5" r="5.5" fill="#2d5fc0" stroke="none" stroke-width="1" /><circle cx="7.5" cy="7.5" r="4" fill="#4c86e6" stroke="none" stroke-width="1" /><circle cx="7.5" cy="7.5" r="1.8" fill="#fff" stroke="none" stroke-width="1" /></svg>
<div class="jp" style="left:1826px;top:54px;width:70px;height:17px;line-height:17px;font-size:12px;color:#fff;text-align:left;white-space:nowrap;overflow:hidden;font-weight:500;letter-spacing:-0.5px;">ベンダー</div>
<div style="left:1699px;top:77.5px;width:221px;height:1.5px;background:#3b424e;"></div>
<div style="left:1702px;top:78px;width:197.5px;height:868px;background:#262b35;"></div>
<div style="left:1899.5px;top:78px;width:1.5px;height:884px;background:#8a93a0;"></div>
<svg width="0" height="0" style="left:0;top:0"><defs><linearGradient id="gold" x1="0" x2="1" y1="0" y2="0"><stop offset="0" stop-color="#b88838"/><stop offset="0.250" stop-color="#f2d08a"/><stop offset="0.600" stop-color="#d8a850"/><stop offset="1" stop-color="#a87828"/></linearGradient><linearGradient id="silver" x1="0" x2="0" y1="0" y2="1"><stop offset="0" stop-color="#d8dadc"/><stop offset="0.500" stop-color="#c6c8cb"/><stop offset="1" stop-color="#b4b6ba"/></linearGradient><linearGradient id="orange" x1="0" x2="1" y1="0" y2="1"><stop offset="0" stop-color="#f4a31c"/><stop offset="0.450" stop-color="#fbb62e"/><stop offset="1" stop-color="#e98f14"/></linearGradient><linearGradient id="navy" x1="0" x2="1" y1="0" y2="1"><stop offset="0" stop-color="#183970"/><stop offset="0.500" stop-color="#143062"/><stop offset="1" stop-color="#102854"/></linearGradient></defs></svg>
<svg style="left:1737px;top:80px;" width="128" height="78" viewBox="0 0 128 78"><rect x="0" y="0" width="128" height="78" fill="#1a1b1f" /><rect x="0" y="0" width="128" height="5" fill="#131316" /><rect x="34" y="1.5" width="8" height="2" fill="#777" /><rect x="56" y="2" width="16" height="1.2" fill="#555" /><rect x="103" y="1.3" width="9" height="2.2" fill="#bbb" /><rect x="116" y="1.5" width="3" height="2" fill="#888" /><rect x="122" y="1.5" width="3" height="2" fill="#888" /><rect x="0" y="5" width="100" height="3.5" fill="#2a2a2e" /><rect x="32" y="6" width="7" height="1.2" fill="#8a7a50" /><rect x="64" y="6" width="6" height="1.2" fill="#666" /><rect x="2" y="9" width="96" height="35" fill="#0c0c0d" /><rect x="4.500" y="11.500" width="91" height="19" fill="#2a2725" stroke="#e6dfc8" stroke-width="1" rx="1.500"/><rect x="5.5" y="13" width="89" height="0.7" fill="#1c1a19" /><rect x="5.5" y="15" width="89" height="0.7" fill="#1c1a19" /><rect x="5.5" y="17" width="89" height="0.7" fill="#1c1a19" /><rect x="5.5" y="19" width="89" height="0.7" fill="#1c1a19" /><rect x="5.5" y="21" width="89" height="0.7" fill="#1c1a19" /><rect x="5.5" y="23" width="89" height="0.7" fill="#1c1a19" /><rect x="5.5" y="25" width="89" height="0.7" fill="#1c1a19" /><rect x="5.5" y="27" width="89" height="0.7" fill="#1c1a19" /><rect x="5.5" y="29" width="89" height="0.7" fill="#1c1a19" /><text x="50" y="23" font-size="5.4" fill="#ffffff" text-anchor="middle" font-weight="bold" font-style="italic">AmpliTube</text><rect x="5.500" y="30.500" width="89" height="9.500" fill="url(#gold)"/><rect x="11.5" y="32" width="4" height="5.5" fill="#c8201c" /><rect x="18.5" y="32" width="4" height="5.5" fill="#141414" /><circle cx="37" cy="35.3" r="2.4" fill="#f2c060" stroke="#5a3a10" stroke-width="0.9" /><circle cx="37" cy="35.3" r="0.9" fill="#fff0c0" stroke="none" stroke-width="1" /><circle cx="44.1" cy="35.3" r="2.4" fill="#f2c060" stroke="#5a3a10" stroke-width="0.9" /><circle cx="44.1" cy="35.3" r="0.9" fill="#fff0c0" stroke="none" stroke-width="1" /><circle cx="51.2" cy="35.3" r="2.4" fill="#f2c060" stroke="#5a3a10" stroke-width="0.9" /><circle cx="51.2" cy="35.3" r="0.9" fill="#fff0c0" stroke="none" stroke-width="1" /><circle cx="58.3" cy="35.3" r="2.4" fill="#f2c060" stroke="#5a3a10" stroke-width="0.9" /><circle cx="58.3" cy="35.3" r="0.9" fill="#fff0c0" stroke="none" stroke-width="1" /><circle cx="65.4" cy="35.3" r="2.4" fill="#f2c060" stroke="#5a3a10" stroke-width="0.9" /><circle cx="65.4" cy="35.3" r="0.9" fill="#fff0c0" stroke="none" stroke-width="1" /><circle cx="72.5" cy="35.3" r="2.4" fill="#f2c060" stroke="#5a3a10" stroke-width="0.9" /><circle cx="72.5" cy="35.3" r="0.9" fill="#fff0c0" stroke="none" stroke-width="1" /><rect x="87.5" y="32" width="2" height="7" fill="#2a1c10" /><rect x="2" y="40" width="96" height="4" fill="#111" /><rect x="0" y="44" width="102" height="5" fill="#25262a" /><rect x="40" y="45.5" width="22" height="2" fill="#35363a" /><rect x="0" y="49" width="102" height="24.5" fill="#131417" /><rect x="4.5" y="57" width="2.5" height="10" fill="#2c2d31" /><rect x="23" y="60.5" width="59" height="0.6" fill="#8a7440" /><rect x="43" y="57.500" width="13.500" height="6" fill="#3a2e14" stroke="#c9a24c" stroke-width="0.700"/><rect x="46" y="59.5" width="8" height="1.5" fill="#c9a24c" /><rect x="25" y="59.5" width="2.5" height="2" fill="#6a5a34" /><rect x="30" y="59.5" width="2.5" height="2" fill="#6a5a34" /><rect x="35" y="59.5" width="2.5" height="2" fill="#6a5a34" /><rect x="62" y="59.5" width="2.5" height="2" fill="#6a5a34" /><rect x="68" y="59.5" width="2.5" height="2" fill="#6a5a34" /><rect x="74" y="59.5" width="2.5" height="2" fill="#6a5a34" /><rect x="79" y="59.5" width="2.5" height="2" fill="#6a5a34" /><rect x="0" y="73.5" width="128" height="4.5" fill="#1f2024" /><rect x="2" y="75" width="10" height="1.5" fill="#555" /><rect x="16" y="75" width="12" height="1.5" fill="#444" /><rect x="105" y="75" width="20" height="1.5" fill="#555" /><rect x="102" y="5" width="26" height="68.5" fill="#17181b" /><rect x="103.5" y="6.5" width="10" height="2" fill="#8a6a20" /><rect x="116" y="6.5" width="10" height="2" fill="#555" /><rect x="103" y="14" width="5" height="4" fill="#333" /><rect x="109.5" y="14" width="5.5" height="3.5" fill="#6a5220" /><rect x="117" y="13.5" width="3" height="2" fill="#555" /><rect x="122" y="13.5" width="3" height="4" fill="#444" /><rect x="103.500" y="22" width="10" height="4" fill="#222" stroke="#a88430" stroke-width="0.800"/><rect x="116" y="22.5" width="9.500" height="3" fill="#8a7a60" opacity="0.800"/><rect x="104" y="28" width="8" height="0.7" fill="#444" /><rect x="116.5" y="28" width="8" height="0.7" fill="#444" /><rect x="103.500" y="32" width="10" height="4" fill="#222" stroke="#c8c4bc" stroke-width="0.800"/><rect x="116" y="32.5" width="9.500" height="3" fill="#8a8880" opacity="0.800"/><rect x="104" y="38" width="8" height="0.7" fill="#444" /><rect x="116.5" y="38" width="8" height="0.7" fill="#444" /><rect x="103.500" y="42" width="10" height="4" fill="#222" stroke="#b09050" stroke-width="0.800"/><rect x="116" y="42.5" width="9.500" height="3" fill="#a08850" opacity="0.800"/><rect x="104" y="48" width="8" height="0.7" fill="#444" /><rect x="116.5" y="48" width="8" height="0.7" fill="#444" /><rect x="103.500" y="51" width="10" height="4" fill="#222" stroke="#5a4a78" stroke-width="0.800"/><rect x="116" y="51.5" width="9.500" height="3" fill="#6a5a80" opacity="0.800"/><rect x="104" y="57" width="8" height="0.7" fill="#444" /><rect x="116.5" y="57" width="8" height="0.7" fill="#444" /><rect x="103.500" y="61" width="10" height="4" fill="#222" stroke="#c0b8a0" stroke-width="0.800"/><rect x="116" y="61.5" width="9.500" height="3" fill="#c0b8a0" opacity="0.800"/><rect x="104" y="67" width="8" height="0.7" fill="#444" /><rect x="116.5" y="67" width="8" height="0.7" fill="#444" /></svg>
<div style="left:1702px;top:157px;width:198px;height:17px;line-height:17px;font-size:12px;color:#fff;text-align:center;white-space:nowrap;overflow:hidden;letter-spacing:0px;">AmpliTube 5 (3x)</div>
<svg style="left:1737px;top:176px;" width="128" height="53" viewBox="0 0 128 53"><rect x="0" y="0" width="128" height="53" fill="#121214" /><rect x="0" y="0" width="128" height="5" fill="#1b1c1f" /><rect x="3" y="0.8" width="28" height="3.4" fill="#0c0c0e" /><rect x="12" y="2" width="9" height="1" fill="#5a5c60" /><rect x="37" y="2" width="4" height="1" fill="#4a4c50" /><rect x="44" y="1.6" width="7" height="1.6" fill="#8a8c90" /><rect x="96" y="1.5" width="2.5" height="2" fill="#6a6c70" /><rect x="101" y="1.5" width="2.5" height="2" fill="#6a6c70" /><rect x="106" y="1.5" width="2.5" height="2" fill="#6a6c70" /><rect x="111" y="1.5" width="2.5" height="2" fill="#6a6c70" /><rect x="116" y="1.5" width="2.5" height="2" fill="#6a6c70" /><rect x="121" y="1.5" width="2.5" height="2" fill="#6a6c70" /><rect x="1" y="6" width="126" height="46" fill="#17171a" /><circle cx="3" cy="8.5" r="1" fill="#050505" stroke="none" stroke-width="1" /><circle cx="125" cy="8.5" r="1" fill="#050505" stroke="none" stroke-width="1" /><circle cx="3" cy="49.5" r="1" fill="#050505" stroke="none" stroke-width="1" /><circle cx="125" cy="49.5" r="1" fill="#050505" stroke="none" stroke-width="1" /><circle cx="29.5" cy="29.5" r="8.5" fill="#0b0b0c" stroke="none" stroke-width="1" /><circle cx="29.5" cy="29.5" r="3.6" fill="#f4f4f4" stroke="none" stroke-width="1" /><circle cx="36.41" cy="32.42" r="0.45" fill="#8a8a8a" stroke="none" stroke-width="1" /><circle cx="32.32" cy="36.45" r="0.45" fill="#8a8a8a" stroke="none" stroke-width="1" /><circle cx="26.58" cy="36.41" r="0.45" fill="#8a8a8a" stroke="none" stroke-width="1" /><circle cx="22.55" cy="32.33" r="0.45" fill="#8a8a8a" stroke="none" stroke-width="1" /><circle cx="22.59" cy="26.59" r="0.45" fill="#8a8a8a" stroke="none" stroke-width="1" /><circle cx="26.67" cy="22.56" r="0.45" fill="#8a8a8a" stroke="none" stroke-width="1" /><circle cx="32.4" cy="22.59" r="0.45" fill="#8a8a8a" stroke="none" stroke-width="1" /><circle cx="36.44" cy="26.66" r="0.45" fill="#8a8a8a" stroke="none" stroke-width="1" /><circle cx="98.7" cy="29.5" r="8.5" fill="#0b0b0c" stroke="none" stroke-width="1" /><circle cx="98.7" cy="29.5" r="3.6" fill="#f4f4f4" stroke="none" stroke-width="1" /><circle cx="105.61" cy="32.42" r="0.45" fill="#8a8a8a" stroke="none" stroke-width="1" /><circle cx="101.52" cy="36.45" r="0.45" fill="#8a8a8a" stroke="none" stroke-width="1" /><circle cx="95.78" cy="36.41" r="0.45" fill="#8a8a8a" stroke="none" stroke-width="1" /><circle cx="91.75" cy="32.33" r="0.45" fill="#8a8a8a" stroke="none" stroke-width="1" /><circle cx="91.79" cy="26.59" r="0.45" fill="#8a8a8a" stroke="none" stroke-width="1" /><circle cx="95.87" cy="22.56" r="0.45" fill="#8a8a8a" stroke="none" stroke-width="1" /><circle cx="101.6" cy="22.59" r="0.45" fill="#8a8a8a" stroke="none" stroke-width="1" /><circle cx="105.64" cy="26.66" r="0.45" fill="#8a8a8a" stroke="none" stroke-width="1" /><circle cx="53" cy="40.3" r="4.5" fill="#0b0b0c" stroke="none" stroke-width="1" /><circle cx="53" cy="40.3" r="2.8" fill="#f4f4f4" stroke="none" stroke-width="1" /><circle cx="74.8" cy="40.3" r="4.5" fill="#0b0b0c" stroke="none" stroke-width="1" /><circle cx="74.8" cy="40.3" r="2.8" fill="#f4f4f4" stroke="none" stroke-width="1" /><rect x="44" y="10" width="41" height="24" fill="#0d0d0e" /><rect x="52.500" y="12.500" width="23.500" height="11" fill="#ecc88c" stroke="#4a3a20" stroke-width="0.800" rx="1"/><path d="M56 19c4-3.500 12-3.500 16-0.500" fill="none" stroke="#6a4a20" stroke-width="0.6" /><line x1="64" y1="22.5" x2="69" y2="15.5" stroke="#3a2a10" stroke-width="0.6" /><rect x="81" y="13" width="2" height="3" fill="#333" /><rect x="81" y="19" width="2" height="3" fill="#333" /><rect x="81" y="25" width="2" height="3" fill="#333" /><circle cx="10" cy="16" r="1.8" fill="#2a2a2c" stroke="none" stroke-width="1" /><rect x="9.5" y="13" width="1.2" height="3.5" fill="#999" /><rect x="5" y="24" width="8" height="2.5" fill="#333" /><rect x="14" y="24" width="6" height="2.5" fill="#2a2a2a" /><rect x="6" y="27.5" width="4.5" height="2" fill="#ddd" /><rect x="12" y="27.5" width="4.5" height="2" fill="#999" /><rect x="6" y="34" width="4.5" height="2.5" fill="#ddd" /><rect x="7.5" y="31" width="1.2" height="2" fill="#888" /><circle cx="116.5" cy="27.6" r="2" fill="#c8202c" stroke="none" stroke-width="1" /><circle cx="116.5" cy="19" r="1.5" fill="#333" stroke="none" stroke-width="1" /><rect x="116" y="15.5" width="1.2" height="3.5" fill="#ccc" /><circle cx="8" cy="48.5" r="1.8" fill="none" stroke="#bbb" stroke-width="0.7" /><rect x="11" y="48" width="8" height="1.2" fill="#888" /><rect x="92" y="48.2" width="16" height="1" fill="#777" /></svg>
<div style="left:1702px;top:228.5px;width:198px;height:17px;line-height:17px;font-size:12px;color:#fff;text-align:center;white-space:nowrap;overflow:hidden;letter-spacing:0px;">Black 76 (3x)</div>
<svg style="left:1737px;top:248px;" width="128" height="53" viewBox="0 0 128 53"><rect x="0" y="0" width="128" height="53" fill="#131315" /><rect x="0" y="0" width="128" height="5" fill="#1b1c1f" /><rect x="3" y="0.8" width="28" height="3.4" fill="#0c0c0e" /><rect x="12" y="2" width="9" height="1" fill="#5a5c60" /><rect x="37" y="2" width="4" height="1" fill="#4a4c50" /><rect x="44" y="1.6" width="7" height="1.6" fill="#8a8c90" /><rect x="96" y="1.5" width="2.5" height="2" fill="#6a6c70" /><rect x="101" y="1.5" width="2.5" height="2" fill="#6a6c70" /><rect x="106" y="1.5" width="2.5" height="2" fill="#6a6c70" /><rect x="111" y="1.5" width="2.5" height="2" fill="#6a6c70" /><rect x="116" y="1.5" width="2.5" height="2" fill="#6a6c70" /><rect x="121" y="1.5" width="2.5" height="2" fill="#6a6c70" /><rect x="1" y="6.5" width="126" height="45.5" fill="#222326" /><rect x="6" y="8" width="18" height="42" fill="#1a1a1c" /><rect x="10" y="12.5" width="6" height="5" fill="#5a1418" /><rect x="8" y="24" width="11" height="2" fill="#ccc" /><rect x="8" y="27.5" width="5" height="2" fill="#999" /><rect x="15" y="27.5" width="4" height="2" fill="#555" /><rect x="10" y="33" width="1.5" height="5" fill="#ccc" /><circle cx="13" cy="44" r="2" fill="none" stroke="#aaa" stroke-width="0.7" /><rect x="8" y="47.5" width="10" height="1" fill="#777" /><rect x="20.5" y="8" width="0.5" height="42" fill="#555" /><rect x="37" y="8" width="0.5" height="42" fill="#555" /><rect x="60" y="8" width="0.5" height="42" fill="#555" /><rect x="83" y="8" width="0.5" height="42" fill="#555" /><rect x="105" y="8" width="0.5" height="42" fill="#555" /><rect x="20" y="29" width="106" height="0.6" fill="#8a8a8a" /><circle cx="27" cy="13.5" r="3.3" fill="#0c0c0c" stroke="none" stroke-width="1" /><circle cx="27" cy="13.5" r="2.4" fill="#c07838" stroke="none" stroke-width="1" /><circle cx="26.4" cy="12.8" r="0.9" fill="#fff" stroke="none" stroke-width="1" opacity="0.450"/><circle cx="32" cy="23" r="3.3" fill="#0c0c0c" stroke="none" stroke-width="1" /><circle cx="32" cy="23" r="2.4" fill="#b87038" stroke="none" stroke-width="1" /><circle cx="31.4" cy="22.3" r="0.9" fill="#fff" stroke="none" stroke-width="1" opacity="0.450"/><circle cx="49" cy="13.5" r="3.3" fill="#0c0c0c" stroke="none" stroke-width="1" /><circle cx="49" cy="13.5" r="2.4" fill="#3aa0d8" stroke="none" stroke-width="1" /><circle cx="48.4" cy="12.8" r="0.9" fill="#fff" stroke="none" stroke-width="1" opacity="0.450"/><circle cx="43" cy="23.5" r="3.3" fill="#0c0c0c" stroke="none" stroke-width="1" /><circle cx="43" cy="23.5" r="2.4" fill="#3aa0d8" stroke="none" stroke-width="1" /><circle cx="42.4" cy="22.8" r="0.9" fill="#fff" stroke="none" stroke-width="1" opacity="0.450"/><circle cx="54.5" cy="23.5" r="3.3" fill="#0c0c0c" stroke="none" stroke-width="1" /><circle cx="54.5" cy="23.5" r="2.4" fill="#3aa0d8" stroke="none" stroke-width="1" /><circle cx="53.9" cy="22.8" r="0.9" fill="#fff" stroke="none" stroke-width="1" opacity="0.450"/><circle cx="71.5" cy="13.5" r="3.3" fill="#0c0c0c" stroke="none" stroke-width="1" /><circle cx="71.5" cy="13.5" r="2.4" fill="#2fc090" stroke="none" stroke-width="1" /><circle cx="70.9" cy="12.8" r="0.9" fill="#fff" stroke="none" stroke-width="1" opacity="0.450"/><circle cx="66" cy="23.5" r="3.3" fill="#0c0c0c" stroke="none" stroke-width="1" /><circle cx="66" cy="23.5" r="2.4" fill="#2fc090" stroke="none" stroke-width="1" /><circle cx="65.4" cy="22.8" r="0.9" fill="#fff" stroke="none" stroke-width="1" opacity="0.450"/><circle cx="77.5" cy="23.5" r="3.3" fill="#0c0c0c" stroke="none" stroke-width="1" /><circle cx="77.5" cy="23.5" r="2.4" fill="#2fc090" stroke="none" stroke-width="1" /><circle cx="76.9" cy="22.8" r="0.9" fill="#fff" stroke="none" stroke-width="1" opacity="0.450"/><circle cx="94" cy="13.5" r="3.3" fill="#0c0c0c" stroke="none" stroke-width="1" /><circle cx="94" cy="13.5" r="2.4" fill="#d83038" stroke="none" stroke-width="1" /><circle cx="93.4" cy="12.8" r="0.9" fill="#fff" stroke="none" stroke-width="1" opacity="0.450"/><circle cx="100" cy="23.5" r="3.3" fill="#0c0c0c" stroke="none" stroke-width="1" /><circle cx="100" cy="23.5" r="2.4" fill="#d83038" stroke="none" stroke-width="1" /><circle cx="99.4" cy="22.8" r="0.9" fill="#fff" stroke="none" stroke-width="1" opacity="0.450"/><rect x="59" y="11.5" width="3.5" height="4" fill="#2020c8" /><rect x="59" y="45" width="3.5" height="4" fill="#2020c8" /><rect x="60.5" y="16" width="0.8" height="29" fill="#3a8a3a" /><circle cx="40" cy="35.5" r="4" fill="#0a0a0a" stroke="#cfcfcf" stroke-width="0.7" /><line x1="40" y1="35.5" x2="42.4" y2="33.1" stroke="#eee" stroke-width="0.6" /><circle cx="83" cy="35.5" r="4" fill="#0a0a0a" stroke="#cfcfcf" stroke-width="0.7" /><line x1="83" y1="35.5" x2="85.4" y2="33.1" stroke="#eee" stroke-width="0.6" /><circle cx="34" cy="44.5" r="2.8" fill="#0a0a0a" stroke="#cfcfcf" stroke-width="0.7" /><line x1="34" y1="44.5" x2="35.68" y2="42.82" stroke="#eee" stroke-width="0.6" /><circle cx="45.5" cy="44.5" r="2.8" fill="#0a0a0a" stroke="#cfcfcf" stroke-width="0.7" /><line x1="45.5" y1="44.5" x2="47.18" y2="42.82" stroke="#eee" stroke-width="0.6" /><circle cx="77" cy="44.5" r="2.8" fill="#0a0a0a" stroke="#cfcfcf" stroke-width="0.7" /><line x1="77" y1="44.5" x2="78.68" y2="42.82" stroke="#eee" stroke-width="0.6" /><circle cx="88.5" cy="44.5" r="2.8" fill="#0a0a0a" stroke="#cfcfcf" stroke-width="0.7" /><line x1="88.5" y1="44.5" x2="90.18" y2="42.82" stroke="#eee" stroke-width="0.6" /><circle cx="110" cy="34" r="2.6" fill="#0a0a0a" stroke="#cfcfcf" stroke-width="0.7" /><line x1="110" y1="34" x2="111.56" y2="32.44" stroke="#eee" stroke-width="0.6" /><circle cx="110" cy="44.5" r="2.6" fill="#0a0a0a" stroke="#cfcfcf" stroke-width="0.7" /><line x1="110" y1="44.5" x2="111.56" y2="42.94" stroke="#eee" stroke-width="0.6" /><circle cx="117" cy="24" r="2.6" fill="#0a0a0a" stroke="#cfcfcf" stroke-width="0.7" /><line x1="117" y1="24" x2="118.56" y2="22.44" stroke="#eee" stroke-width="0.6" /><rect x="26" y="35" width="5" height="5" fill="#2a4a2a" /><rect x="121" y="36" width="2.5" height="10" fill="#2a5a2a" /><rect x="124" y="44" width="1.5" height="6" fill="#a02020" /><path d="M108 17v-5h4v4h3" fill="none" stroke="#ddd" stroke-width="0.7" /><circle cx="109" cy="17.5" r="1.2" fill="none" stroke="#ddd" stroke-width="0.6" /></svg>
<div style="left:1702px;top:300.5px;width:198px;height:17px;line-height:17px;font-size:12px;color:#fff;text-align:center;white-space:nowrap;overflow:hidden;letter-spacing:0px;">British Channel (3x)</div>
<svg style="left:1737px;top:320px;" width="128" height="53" viewBox="0 0 128 53"><rect x="0" y="0" width="128" height="53" fill="#131315" /><rect x="0" y="0" width="128" height="5" fill="#1b1c1f" /><rect x="3" y="0.8" width="28" height="3.4" fill="#0c0c0e" /><rect x="12" y="2" width="9" height="1" fill="#5a5c60" /><rect x="37" y="2" width="4" height="1" fill="#4a4c50" /><rect x="44" y="1.6" width="7" height="1.6" fill="#8a8c90" /><rect x="96" y="1.5" width="2.5" height="2" fill="#6a6c70" /><rect x="101" y="1.5" width="2.5" height="2" fill="#6a6c70" /><rect x="106" y="1.5" width="2.5" height="2" fill="#6a6c70" /><rect x="111" y="1.5" width="2.5" height="2" fill="#6a6c70" /><rect x="116" y="1.5" width="2.5" height="2" fill="#6a6c70" /><rect x="121" y="1.5" width="2.5" height="2" fill="#6a6c70" /><rect x="1" y="6.5" width="126" height="45.5" fill="#1c1c1f" /><rect x="9.500" y="13" width="8" height="8" fill="#6a6a6c" stroke="#222" stroke-width="1"/><rect x="8" y="24" width="11" height="2" fill="#ccc" /><rect x="8" y="27.5" width="5" height="2" fill="#999" /><rect x="15" y="27.5" width="4" height="2" fill="#555" /><rect x="10" y="33" width="1.5" height="4" fill="#ccc" /><rect x="8.5" y="36.5" width="4.5" height="2" fill="#ddd" /><circle cx="30" cy="20" r="4.6" fill="#0a0a0b" stroke="none" stroke-width="1" /><circle cx="30" cy="20" r="3.5" fill="#56b0dc" stroke="none" stroke-width="1" /><circle cx="29.2" cy="19" r="1.4" fill="#c8ecff" stroke="none" stroke-width="1" opacity="0.600"/><rect x="27" y="25.5" width="6" height="0.8" fill="#777" /><circle cx="47.5" cy="20" r="4.6" fill="#0a0a0b" stroke="none" stroke-width="1" /><circle cx="47.5" cy="20" r="3.5" fill="#56b0dc" stroke="none" stroke-width="1" /><circle cx="46.7" cy="19" r="1.4" fill="#c8ecff" stroke="none" stroke-width="1" opacity="0.600"/><rect x="44.5" y="25.5" width="6" height="0.8" fill="#777" /><circle cx="65" cy="20" r="4.6" fill="#0a0a0b" stroke="none" stroke-width="1" /><circle cx="65" cy="20" r="3.5" fill="#56b0dc" stroke="none" stroke-width="1" /><circle cx="64.2" cy="19" r="1.4" fill="#c8ecff" stroke="none" stroke-width="1" opacity="0.600"/><rect x="62" y="25.5" width="6" height="0.8" fill="#777" /><circle cx="82.5" cy="20" r="4.6" fill="#0a0a0b" stroke="none" stroke-width="1" /><circle cx="82.5" cy="20" r="3.5" fill="#56b0dc" stroke="none" stroke-width="1" /><circle cx="81.7" cy="19" r="1.4" fill="#c8ecff" stroke="none" stroke-width="1" opacity="0.600"/><rect x="79.5" y="25.5" width="6" height="0.8" fill="#777" /><circle cx="47.5" cy="37.5" r="4.6" fill="#0a0a0b" stroke="none" stroke-width="1" /><circle cx="47.5" cy="37.5" r="3.5" fill="#56b0dc" stroke="none" stroke-width="1" /><circle cx="46.7" cy="36.5" r="1.4" fill="#c8ecff" stroke="none" stroke-width="1" opacity="0.600"/><rect x="44.5" y="43" width="6" height="0.8" fill="#777" /><circle cx="65" cy="37.5" r="4.6" fill="#0a0a0b" stroke="none" stroke-width="1" /><circle cx="65" cy="37.5" r="3.5" fill="#56b0dc" stroke="none" stroke-width="1" /><circle cx="64.2" cy="36.5" r="1.4" fill="#c8ecff" stroke="none" stroke-width="1" opacity="0.600"/><rect x="62" y="43" width="6" height="0.8" fill="#777" /><rect x="95" y="11" width="25" height="20" fill="#17181a" stroke="#2c2c2e" stroke-width="1"/><path d="M98 18l5 5 6-1.500 6-4" fill="none" stroke="#555" stroke-width="0.7" /><line x1="107.5" y1="29" x2="100" y2="16.5" stroke="#777" stroke-width="0.6" /><rect x="96" y="35.5" width="5.5" height="5.5" fill="#8a8478" /><rect x="111" y="35.5" width="6" height="5.5" fill="#f2d88c" /><circle cx="8" cy="46.5" r="1.8" fill="none" stroke="#bbb" stroke-width="0.7" /><rect x="11" y="46" width="10" height="1.2" fill="#777" /><rect x="6" y="41.5" width="16" height="0.6" fill="#555" /><rect x="122" y="9" width="0.7" height="40" fill="#444" /></svg>
<div style="left:1702px;top:372.5px;width:198px;height:17px;line-height:17px;font-size:12px;color:#fff;text-align:center;white-space:nowrap;overflow:hidden;letter-spacing:0px;">Bus Compressor (3x)</div>
<svg style="left:1737px;top:392px;" width="128" height="53" viewBox="0 0 128 53"><rect x="0" y="0" width="128" height="53" fill="#131315" /><rect x="0" y="0" width="128" height="5" fill="#1b1c1f" /><rect x="3" y="0.8" width="28" height="3.4" fill="#0c0c0e" /><rect x="12" y="2" width="9" height="1" fill="#5a5c60" /><rect x="37" y="2" width="4" height="1" fill="#4a4c50" /><rect x="44" y="1.6" width="7" height="1.6" fill="#8a8c90" /><rect x="96" y="1.5" width="2.5" height="2" fill="#6a6c70" /><rect x="101" y="1.5" width="2.5" height="2" fill="#6a6c70" /><rect x="106" y="1.5" width="2.5" height="2" fill="#6a6c70" /><rect x="111" y="1.5" width="2.5" height="2" fill="#6a6c70" /><rect x="116" y="1.5" width="2.5" height="2" fill="#6a6c70" /><rect x="121" y="1.5" width="2.5" height="2" fill="#6a6c70" /><rect x="0" y="5" width="128" height="21" fill="#0f1b2e" /><rect x="2" y="6.5" width="20" height="18" fill="#0b1524" /><rect x="108" y="6.5" width="19" height="18" fill="#0b1524" /><path d="M8 11c1-2 3-2 3 0v6M7 20h5" fill="none" stroke="#a8b8c8" stroke-width="0.8" /><circle cx="36" cy="14.5" r="0.9" fill="#8a9ab0" stroke="none" stroke-width="1" /><circle cx="46" cy="14.5" r="0.9" fill="#8a9ab0" stroke="none" stroke-width="1" /><circle cx="57.5" cy="14.5" r="1.2" fill="#fff" stroke="none" stroke-width="1" /><circle cx="70" cy="14.5" r="0.9" fill="#8a9ab0" stroke="none" stroke-width="1" /><circle cx="86" cy="14.5" r="0.9" fill="#8a9ab0" stroke="none" stroke-width="1" /><circle cx="98" cy="14.5" r="0.9" fill="#8a9ab0" stroke="none" stroke-width="1" /><rect x="114" y="6.5" width="10" height="1.5" fill="#ccd" /><circle cx="120" cy="20.5" r="0.9" fill="#9ab" stroke="none" stroke-width="1" /><rect x="0" y="26" width="128" height="26.500" fill="url(#silver)"/><rect x="88" y="24.5" width="10" height="1.5" fill="#d8d8d8" /><circle cx="13.5" cy="40" r="7" fill="#8e9094" stroke="none" stroke-width="1" /><circle cx="13.5" cy="40" r="5.8" fill="#e6e8ea" stroke="#777" stroke-width="0.6" /><circle cx="13.5" cy="40" r="3.6" fill="#1b4a68" stroke="none" stroke-width="1" /><circle cx="13.5" cy="40" r="2.03" fill="#2f7a9e" stroke="none" stroke-width="1" /><circle cx="50" cy="40" r="7" fill="#8e9094" stroke="none" stroke-width="1" /><circle cx="50" cy="40" r="5.8" fill="#e6e8ea" stroke="#777" stroke-width="0.6" /><circle cx="50" cy="40" r="3.6" fill="#1b4a68" stroke="none" stroke-width="1" /><circle cx="50" cy="40" r="2.03" fill="#2f7a9e" stroke="none" stroke-width="1" /><circle cx="77.5" cy="40" r="7" fill="#8e9094" stroke="none" stroke-width="1" /><circle cx="77.5" cy="40" r="5.8" fill="#e6e8ea" stroke="#777" stroke-width="0.6" /><circle cx="77.5" cy="40" r="3.6" fill="#1b4a68" stroke="none" stroke-width="1" /><circle cx="77.5" cy="40" r="2.03" fill="#2f7a9e" stroke="none" stroke-width="1" /><circle cx="114" cy="40" r="7" fill="#8e9094" stroke="none" stroke-width="1" /><circle cx="114" cy="40" r="5.8" fill="#e6e8ea" stroke="#777" stroke-width="0.6" /><circle cx="114" cy="40" r="3.6" fill="#1b4a68" stroke="none" stroke-width="1" /><circle cx="114" cy="40" r="2.03" fill="#2f7a9e" stroke="none" stroke-width="1" /><circle cx="32" cy="40" r="5.5" fill="#8e9094" stroke="none" stroke-width="1" /><circle cx="32" cy="40" r="4.3" fill="#e6e8ea" stroke="#777" stroke-width="0.6" /><circle cx="32" cy="40" r="2.67" fill="#1b4a68" stroke="none" stroke-width="1" /><circle cx="32" cy="40" r="1.5" fill="#2f7a9e" stroke="none" stroke-width="1" /><circle cx="95.5" cy="40" r="5.5" fill="#8e9094" stroke="none" stroke-width="1" /><circle cx="95.5" cy="40" r="4.3" fill="#e6e8ea" stroke="#777" stroke-width="0.6" /><circle cx="95.5" cy="40" r="2.67" fill="#1b4a68" stroke="none" stroke-width="1" /><circle cx="95.5" cy="40" r="1.5" fill="#2f7a9e" stroke="none" stroke-width="1" /><rect x="27" y="30.5" width="10" height="1.5" fill="#222" /><rect x="91" y="30.5" width="10" height="1.5" fill="#222" /><rect x="63.3" y="32" width="1.4" height="9" fill="#1a1a1a" /><circle cx="64" cy="46.5" r="1.5" fill="none" stroke="#444" stroke-width="0.6" /><rect x="10" y="49.5" width="7" height="1" fill="#777" /><rect x="29" y="49.5" width="7" height="1" fill="#777" /><rect x="46" y="49.5" width="7" height="1" fill="#777" /><rect x="74" y="49.5" width="7" height="1" fill="#777" /><circle cx="4" cy="30" r="1" fill="#777" stroke="none" stroke-width="1" /><circle cx="124" cy="30" r="1" fill="#777" stroke="none" stroke-width="1" /></svg>
<div style="left:1702px;top:444.5px;width:198px;height:17px;line-height:17px;font-size:12px;color:#fff;text-align:center;white-space:nowrap;overflow:hidden;letter-spacing:0px;">Channel Strip X (3x)</div>
<svg style="left:1737px;top:464px;" width="128" height="53" viewBox="0 0 128 53"><rect x="0" y="0" width="128" height="53" fill="#131315" /><rect x="0" y="0" width="128" height="5" fill="#1b1c1f" /><rect x="3" y="0.8" width="28" height="3.4" fill="#0c0c0e" /><rect x="12" y="2" width="9" height="1" fill="#5a5c60" /><rect x="37" y="2" width="4" height="1" fill="#4a4c50" /><rect x="44" y="1.6" width="7" height="1.6" fill="#8a8c90" /><rect x="96" y="1.5" width="2.5" height="2" fill="#6a6c70" /><rect x="101" y="1.5" width="2.5" height="2" fill="#6a6c70" /><rect x="106" y="1.5" width="2.5" height="2" fill="#6a6c70" /><rect x="111" y="1.5" width="2.5" height="2" fill="#6a6c70" /><rect x="116" y="1.5" width="2.5" height="2" fill="#6a6c70" /><rect x="121" y="1.5" width="2.5" height="2" fill="#6a6c70" /><rect x="0" y="5.500" width="128" height="47" fill="url(#orange)"/><rect x="0" y="5.5" width="128" height="1" fill="#ffd070" /><rect x="0" y="51.5" width="128" height="1" fill="#a05a08" /><circle cx="3" cy="8.5" r="0.9" fill="#2a1a08" stroke="none" stroke-width="1" /><circle cx="125" cy="8.5" r="0.9" fill="#2a1a08" stroke="none" stroke-width="1" /><circle cx="3" cy="49.5" r="0.9" fill="#2a1a08" stroke="none" stroke-width="1" /><circle cx="125" cy="49.5" r="0.9" fill="#2a1a08" stroke="none" stroke-width="1" /><circle cx="9" cy="8.5" r="0.9" fill="#2a1a08" stroke="none" stroke-width="1" /><circle cx="119" cy="8.5" r="0.9" fill="#2a1a08" stroke="none" stroke-width="1" /><circle cx="13" cy="11.5" r="1.8" fill="#1a1008" stroke="none" stroke-width="1" /><rect x="12.3" y="14" width="1.5" height="3.5" fill="#1a1008" /><circle cx="115" cy="11.5" r="1.8" fill="#a81818" stroke="none" stroke-width="1" /><rect x="114.3" y="14" width="1.5" height="3.5" fill="#1a1008" /><circle cx="33.8" cy="17" r="4.6" fill="#8a4a08" stroke="none" stroke-width="1" opacity="0.500"/><circle cx="33" cy="16" r="4.3" fill="#0c0c0c" stroke="none" stroke-width="1" /><circle cx="31.93" cy="14.71" r="1.94" fill="#3a3a3a" stroke="none" stroke-width="1" opacity="0.55"/><rect x="30" y="22" width="6" height="1" fill="#3a2008" /><circle cx="46.3" cy="17" r="4.6" fill="#8a4a08" stroke="none" stroke-width="1" opacity="0.500"/><circle cx="45.5" cy="16" r="4.3" fill="#0c0c0c" stroke="none" stroke-width="1" /><circle cx="44.42" cy="14.71" r="1.94" fill="#3a3a3a" stroke="none" stroke-width="1" opacity="0.55"/><rect x="42.5" y="22" width="6" height="1" fill="#3a2008" /><circle cx="58.8" cy="17" r="4.6" fill="#8a4a08" stroke="none" stroke-width="1" opacity="0.500"/><circle cx="58" cy="16" r="4.3" fill="#0c0c0c" stroke="none" stroke-width="1" /><circle cx="56.92" cy="14.71" r="1.94" fill="#3a3a3a" stroke="none" stroke-width="1" opacity="0.55"/><rect x="55" y="22" width="6" height="1" fill="#3a2008" /><circle cx="71.3" cy="17" r="4.6" fill="#8a4a08" stroke="none" stroke-width="1" opacity="0.500"/><circle cx="70.5" cy="16" r="4.3" fill="#0c0c0c" stroke="none" stroke-width="1" /><circle cx="69.42" cy="14.71" r="1.94" fill="#3a3a3a" stroke="none" stroke-width="1" opacity="0.55"/><rect x="67.5" y="22" width="6" height="1" fill="#3a2008" /><circle cx="40" cy="37.5" r="4.6" fill="#8a4a08" stroke="none" stroke-width="1" opacity="0.500"/><circle cx="39" cy="36.5" r="4.3" fill="#0c0c0c" stroke="none" stroke-width="1" /><circle cx="37.92" cy="35.21" r="1.94" fill="#3a3a3a" stroke="none" stroke-width="1" opacity="0.55"/><circle cx="65.5" cy="38" r="8" fill="#8a4a08" stroke="none" stroke-width="1" opacity="0.500"/><circle cx="64" cy="37" r="7.8" fill="#0c0c0c" stroke="none" stroke-width="1" /><circle cx="62.05" cy="34.66" r="3.51" fill="#3a3a3a" stroke="none" stroke-width="1" opacity="0.55"/><circle cx="115" cy="37" r="4.3" fill="#0c0c0c" stroke="none" stroke-width="1" /><circle cx="113.92" cy="35.71" r="1.94" fill="#3a3a3a" stroke="none" stroke-width="1" opacity="0.55"/><rect x="113.8" y="33" width="2.4" height="8" fill="#3a3a3a" /><circle cx="93" cy="28" r="15" fill="#1a1610" stroke="none" stroke-width="1" /><circle cx="93" cy="28" r="13.8" fill="#0c0c0c" stroke="none" stroke-width="1" /><path d="M79.500 27a13.500 13.500 0 0 1 27 0c-5-4-22-4-27 0z" fill="#f4e6a8" stroke="none" stroke-width="1" /><path d="M82 24c6-4 16-4 22 0" fill="none" stroke="#5a4a20" stroke-width="0.5" /><line x1="93" y1="27" x2="96" y2="19" stroke="#3a2a10" stroke-width="0.5" /><circle cx="8" cy="46.5" r="1.5" fill="none" stroke="#5a3008" stroke-width="0.7" /><rect x="11" y="46" width="10" height="1.2" fill="#6a3a08" /><rect x="60" y="47.5" width="6" height="1" fill="#5a3008" /><rect x="88" y="47.5" width="8" height="1" fill="#5a3008" /></svg>
<div style="left:1702px;top:516.5px;width:198px;height:17px;line-height:17px;font-size:12px;color:#fff;text-align:center;white-space:nowrap;overflow:hidden;letter-spacing:0px;">Classic Comp (3x)</div>
<svg style="left:1737px;top:536px;" width="128" height="53" viewBox="0 0 128 53"><rect x="0" y="0" width="128" height="53" fill="#131315" /><rect x="0" y="0" width="128" height="5" fill="#1b1c1f" /><rect x="3" y="0.8" width="28" height="3.4" fill="#0c0c0e" /><rect x="12" y="2" width="9" height="1" fill="#5a5c60" /><rect x="37" y="2" width="4" height="1" fill="#4a4c50" /><rect x="44" y="1.6" width="7" height="1.6" fill="#8a8c90" /><rect x="96" y="1.5" width="2.5" height="2" fill="#6a6c70" /><rect x="101" y="1.5" width="2.5" height="2" fill="#6a6c70" /><rect x="106" y="1.5" width="2.5" height="2" fill="#6a6c70" /><rect x="111" y="1.5" width="2.5" height="2" fill="#6a6c70" /><rect x="116" y="1.5" width="2.5" height="2" fill="#6a6c70" /><rect x="121" y="1.5" width="2.5" height="2" fill="#6a6c70" /><rect x="0" y="5.500" width="128" height="47" fill="url(#orange)"/><rect x="0" y="5.5" width="128" height="1" fill="#ffd070" /><rect x="0" y="51.5" width="128" height="1" fill="#a05a08" /><circle cx="3" cy="8.5" r="0.9" fill="#2a1a08" stroke="none" stroke-width="1" /><circle cx="125" cy="8.5" r="0.9" fill="#2a1a08" stroke="none" stroke-width="1" /><circle cx="3" cy="49.5" r="0.9" fill="#2a1a08" stroke="none" stroke-width="1" /><circle cx="125" cy="49.5" r="0.9" fill="#2a1a08" stroke="none" stroke-width="1" /><circle cx="9" cy="8.5" r="0.9" fill="#2a1a08" stroke="none" stroke-width="1" /><circle cx="119" cy="8.5" r="0.9" fill="#2a1a08" stroke="none" stroke-width="1" /><circle cx="13" cy="11.5" r="1.8" fill="#1a1008" stroke="none" stroke-width="1" /><rect x="12.3" y="14" width="1.5" height="3.5" fill="#1a1008" /><circle cx="115" cy="11.5" r="1.8" fill="#a81818" stroke="none" stroke-width="1" /><rect x="114.3" y="14" width="1.5" height="3.5" fill="#1a1008" /><rect x="27" y="9.500" width="75" height="14" rx="6" fill="#121212"/><rect x="30" y="16.5" width="69" height="0.5" fill="#4a4a3a" /><circle cx="52" cy="16.5" r="0.7" fill="#aa8" stroke="none" stroke-width="1" /><circle cx="76" cy="16.5" r="0.7" fill="#aa8" stroke="none" stroke-width="1" /><rect x="6.5" y="22.5" width="12" height="7" fill="#141414" /><rect x="8" y="24" width="4" height="2" fill="#ddd" /><rect x="13" y="24" width="4" height="2" fill="#888" /><rect x="8" y="27" width="9" height="1.5" fill="#ccc" /><circle cx="33.3" cy="33" r="4.5" fill="#8a4a08" stroke="none" stroke-width="1" opacity="0.500"/><circle cx="32.5" cy="32" r="4.2" fill="#0c0c0c" stroke="none" stroke-width="1" /><circle cx="31.45" cy="30.74" r="1.89" fill="#3a3a3a" stroke="none" stroke-width="1" opacity="0.55"/><rect x="29" y="38.5" width="7" height="1.3" fill="#2a1808" /><circle cx="45.7" cy="33" r="4.5" fill="#8a4a08" stroke="none" stroke-width="1" opacity="0.500"/><circle cx="44.9" cy="32" r="4.2" fill="#0c0c0c" stroke="none" stroke-width="1" /><circle cx="43.85" cy="30.74" r="1.89" fill="#3a3a3a" stroke="none" stroke-width="1" opacity="0.55"/><rect x="41.4" y="38.5" width="7" height="1.3" fill="#2a1808" /><circle cx="58.1" cy="33" r="4.5" fill="#8a4a08" stroke="none" stroke-width="1" opacity="0.500"/><circle cx="57.3" cy="32" r="4.2" fill="#0c0c0c" stroke="none" stroke-width="1" /><circle cx="56.25" cy="30.74" r="1.89" fill="#3a3a3a" stroke="none" stroke-width="1" opacity="0.55"/><rect x="53.8" y="38.5" width="7" height="1.3" fill="#2a1808" /><circle cx="70.5" cy="33" r="4.5" fill="#8a4a08" stroke="none" stroke-width="1" opacity="0.500"/><circle cx="69.7" cy="32" r="4.2" fill="#0c0c0c" stroke="none" stroke-width="1" /><circle cx="68.65" cy="30.74" r="1.89" fill="#3a3a3a" stroke="none" stroke-width="1" opacity="0.55"/><rect x="66.2" y="38.5" width="7" height="1.3" fill="#2a1808" /><circle cx="82.9" cy="33" r="4.5" fill="#8a4a08" stroke="none" stroke-width="1" opacity="0.500"/><circle cx="82.1" cy="32" r="4.2" fill="#0c0c0c" stroke="none" stroke-width="1" /><circle cx="81.05" cy="30.74" r="1.89" fill="#3a3a3a" stroke="none" stroke-width="1" opacity="0.55"/><rect x="78.6" y="38.5" width="7" height="1.3" fill="#2a1808" /><circle cx="95.3" cy="33" r="4.5" fill="#8a4a08" stroke="none" stroke-width="1" opacity="0.500"/><circle cx="94.5" cy="32" r="4.2" fill="#0c0c0c" stroke="none" stroke-width="1" /><circle cx="93.45" cy="30.74" r="1.89" fill="#3a3a3a" stroke="none" stroke-width="1" opacity="0.55"/><rect x="91" y="38.5" width="7" height="1.3" fill="#2a1808" /><circle cx="115" cy="32" r="4.2" fill="#0c0c0c" stroke="none" stroke-width="1" /><circle cx="113.95" cy="30.74" r="1.89" fill="#3a3a3a" stroke="none" stroke-width="1" opacity="0.55"/><circle cx="46" cy="45" r="2.4" fill="#0c0c0c" stroke="none" stroke-width="1" /><circle cx="45.4" cy="44.28" r="1.08" fill="#3a3a3a" stroke="none" stroke-width="1" opacity="0.55"/><circle cx="51.6" cy="45" r="1.7" fill="#0c0c0c" stroke="none" stroke-width="1" /><circle cx="51.18" cy="44.49" r="0.77" fill="#3a3a3a" stroke="none" stroke-width="1" opacity="0.55"/><circle cx="57.2" cy="45" r="2.4" fill="#0c0c0c" stroke="none" stroke-width="1" /><circle cx="56.6" cy="44.28" r="1.08" fill="#3a3a3a" stroke="none" stroke-width="1" opacity="0.55"/><circle cx="62.8" cy="45" r="1.7" fill="#0c0c0c" stroke="none" stroke-width="1" /><circle cx="62.38" cy="44.49" r="0.77" fill="#3a3a3a" stroke="none" stroke-width="1" opacity="0.55"/><circle cx="68.4" cy="45" r="2.4" fill="#0c0c0c" stroke="none" stroke-width="1" /><circle cx="67.8" cy="44.28" r="1.08" fill="#3a3a3a" stroke="none" stroke-width="1" opacity="0.55"/><circle cx="74" cy="45" r="1.7" fill="#0c0c0c" stroke="none" stroke-width="1" /><circle cx="73.58" cy="44.49" r="0.77" fill="#3a3a3a" stroke="none" stroke-width="1" opacity="0.55"/><circle cx="79.6" cy="45" r="2.4" fill="#0c0c0c" stroke="none" stroke-width="1" /><circle cx="79" cy="44.28" r="1.08" fill="#3a3a3a" stroke="none" stroke-width="1" opacity="0.55"/><circle cx="8" cy="45.5" r="1.5" fill="none" stroke="#5a3008" stroke-width="0.7" /><rect x="11" y="45" width="9" height="1.2" fill="#6a3a08" /></svg>
<div style="left:1702px;top:588.5px;width:198px;height:17px;line-height:17px;font-size:12px;color:#fff;text-align:center;white-space:nowrap;overflow:hidden;letter-spacing:0px;">Classic EQ (3x)</div>
<svg style="left:1737px;top:608px;" width="128" height="53" viewBox="0 0 128 53"><rect x="0" y="0" width="128" height="53" fill="#131315" /><rect x="0" y="0" width="128" height="5" fill="#1b1c1f" /><rect x="3" y="0.8" width="28" height="3.4" fill="#0c0c0e" /><rect x="12" y="2" width="9" height="1" fill="#5a5c60" /><rect x="37" y="2" width="4" height="1" fill="#4a4c50" /><rect x="44" y="1.6" width="7" height="1.6" fill="#8a8c90" /><rect x="96" y="1.5" width="2.5" height="2" fill="#6a6c70" /><rect x="101" y="1.5" width="2.5" height="2" fill="#6a6c70" /><rect x="106" y="1.5" width="2.5" height="2" fill="#6a6c70" /><rect x="111" y="1.5" width="2.5" height="2" fill="#6a6c70" /><rect x="116" y="1.5" width="2.5" height="2" fill="#6a6c70" /><rect x="121" y="1.5" width="2.5" height="2" fill="#6a6c70" /><rect x="0" y="6" width="128" height="46.5" fill="#1e1e20" /><rect x="6" y="10" width="1.5" height="40" fill="#888" /><rect x="120.5" y="10" width="1.5" height="40" fill="#888" /><circle cx="3" cy="9" r="1" fill="#0a0a0a" stroke="none" stroke-width="1" /><circle cx="125" cy="9" r="1" fill="#0a0a0a" stroke="none" stroke-width="1" /><circle cx="3" cy="50" r="1" fill="#0a0a0a" stroke="none" stroke-width="1" /><circle cx="125" cy="50" r="1" fill="#0a0a0a" stroke="none" stroke-width="1" /><text x="14" y="12.5" font-size="3.8" fill="#3aa6d8" text-anchor="start" font-weight="bold" >CSR</text><rect x="24" y="10" width="10" height="1.2" fill="#2a7a9a" /><rect x="38" y="10" width="16" height="1.2" fill="#2a7a9a" /><rect x="26" y="13.5" width="7.5" height="3" fill="#2a1416" /><rect x="28" y="14.5" width="3.5" height="1" fill="#7a2020" /><rect x="37" y="13.5" width="7.5" height="3" fill="#2a1416" /><rect x="39" y="14.5" width="3.5" height="1" fill="#7a2020" /><rect x="48" y="13.5" width="7.5" height="3" fill="#2a1416" /><rect x="50" y="14.5" width="3.5" height="1" fill="#7a2020" /><rect x="59" y="13.5" width="7.5" height="3" fill="#2a1416" /><rect x="61" y="14.5" width="3.5" height="1" fill="#7a2020" /><rect x="70" y="13.5" width="7.5" height="3" fill="#2a1416" /><rect x="72" y="14.5" width="3.5" height="1" fill="#7a2020" /><rect x="81" y="13.5" width="7.5" height="3" fill="#2a1416" /><rect x="83" y="14.5" width="3.5" height="1" fill="#7a2020" /><rect x="100" y="13.5" width="7.5" height="3" fill="#2a1416" /><rect x="13.5" y="16" width="1" height="18" fill="#333" /><rect x="18" y="16" width="3.5" height="18" fill="#2a2a2c" /><circle cx="29.5" cy="25.5" r="4.2" fill="#161618" stroke="none" stroke-width="1" /><circle cx="28.45" cy="24.24" r="1.89" fill="#3a3a3c" stroke="none" stroke-width="1" opacity="0.55"/><line x1="29.5" y1="25.5" x2="32" y2="28" stroke="#999" stroke-width="0.6" /><rect x="27" y="31.5" width="5" height="1" fill="#666" /><circle cx="40.5" cy="25.5" r="4.2" fill="#161618" stroke="none" stroke-width="1" /><circle cx="39.45" cy="24.24" r="1.89" fill="#3a3a3c" stroke="none" stroke-width="1" opacity="0.55"/><line x1="40.5" y1="25.5" x2="43" y2="28" stroke="#999" stroke-width="0.6" /><rect x="38" y="31.5" width="5" height="1" fill="#666" /><circle cx="51.5" cy="25.5" r="4.2" fill="#161618" stroke="none" stroke-width="1" /><circle cx="50.45" cy="24.24" r="1.89" fill="#3a3a3c" stroke="none" stroke-width="1" opacity="0.55"/><line x1="51.5" y1="25.5" x2="54" y2="28" stroke="#999" stroke-width="0.6" /><rect x="49" y="31.5" width="5" height="1" fill="#666" /><circle cx="62.5" cy="25.5" r="4.2" fill="#161618" stroke="none" stroke-width="1" /><circle cx="61.45" cy="24.24" r="1.89" fill="#3a3a3c" stroke="none" stroke-width="1" opacity="0.55"/><line x1="62.5" y1="25.5" x2="65" y2="28" stroke="#999" stroke-width="0.6" /><rect x="60" y="31.5" width="5" height="1" fill="#666" /><circle cx="73.5" cy="25.5" r="4.2" fill="#161618" stroke="none" stroke-width="1" /><circle cx="72.45" cy="24.24" r="1.89" fill="#3a3a3c" stroke="none" stroke-width="1" opacity="0.55"/><line x1="73.5" y1="25.5" x2="76" y2="28" stroke="#999" stroke-width="0.6" /><rect x="71" y="31.5" width="5" height="1" fill="#666" /><circle cx="84.5" cy="25.5" r="4.2" fill="#161618" stroke="none" stroke-width="1" /><circle cx="83.45" cy="24.24" r="1.89" fill="#3a3a3c" stroke="none" stroke-width="1" opacity="0.55"/><line x1="84.5" y1="25.5" x2="87" y2="28" stroke="#999" stroke-width="0.6" /><rect x="82" y="31.5" width="5" height="1" fill="#666" /><rect x="95.7" y="19" width="0.8" height="13" fill="#111" /><rect x="94" y="24" width="4.2" height="2.2" fill="#3a3a3c" /><rect x="94" y="27.5" width="4.2" height="1.5" fill="#333" /><rect x="101.7" y="19" width="0.8" height="13" fill="#111" /><rect x="100" y="24" width="4.2" height="2.2" fill="#3a3a3c" /><rect x="100" y="27.5" width="4.2" height="1.5" fill="#333" /><rect x="107.7" y="19" width="0.8" height="13" fill="#111" /><rect x="106" y="24" width="4.2" height="2.2" fill="#3a3a3c" /><rect x="106" y="27.5" width="4.2" height="1.5" fill="#333" /><rect x="113.7" y="19" width="0.8" height="13" fill="#111" /><rect x="112" y="24" width="4.2" height="2.2" fill="#3a3a3c" /><rect x="112" y="27.5" width="4.2" height="1.5" fill="#333" /><rect x="2" y="35" width="124" height="5" fill="#42b4e4" /><rect x="2" y="35" width="124" height="0.8" fill="#8ad8f8" /><rect x="92" y="36.8" width="24" height="1.4" fill="#1a6a92" /><rect x="14" y="43" width="6.5" height="3.5" fill="#2a2a2c" /><rect x="22.5" y="43" width="6.5" height="3.5" fill="#2a2a2c" /><rect x="14" y="48" width="12" height="1" fill="#555" /></svg>
<div style="left:1702px;top:660.5px;width:198px;height:17px;line-height:17px;font-size:12px;color:#fff;text-align:center;white-space:nowrap;overflow:hidden;letter-spacing:0px;">CSR Hall (3x)</div>
<svg style="left:1737px;top:680px;" width="128" height="53" viewBox="0 0 128 53"><rect x="0" y="0" width="128" height="53" fill="#131315" /><rect x="0" y="0" width="128" height="5" fill="#1b1c1f" /><rect x="3" y="0.8" width="28" height="3.4" fill="#0c0c0e" /><rect x="12" y="2" width="9" height="1" fill="#5a5c60" /><rect x="37" y="2" width="4" height="1" fill="#4a4c50" /><rect x="44" y="1.6" width="7" height="1.6" fill="#8a8c90" /><rect x="96" y="1.5" width="2.5" height="2" fill="#6a6c70" /><rect x="101" y="1.5" width="2.5" height="2" fill="#6a6c70" /><rect x="106" y="1.5" width="2.5" height="2" fill="#6a6c70" /><rect x="111" y="1.5" width="2.5" height="2" fill="#6a6c70" /><rect x="116" y="1.5" width="2.5" height="2" fill="#6a6c70" /><rect x="121" y="1.5" width="2.5" height="2" fill="#6a6c70" /><rect x="0" y="6" width="128" height="46.5" fill="#3aa6d8" /><rect x="0" y="6" width="128" height="1" fill="#7acef0" /><rect x="0" y="51" width="128" height="1.5" fill="#2a86b8" /><rect x="6" y="10" width="1.5" height="40" fill="#111" /><rect x="120.5" y="10" width="1.5" height="40" fill="#111" /><circle cx="3" cy="9" r="1" fill="#0a0a0a" stroke="none" stroke-width="1" /><circle cx="125" cy="9" r="1" fill="#0a0a0a" stroke="none" stroke-width="1" /><circle cx="3" cy="50" r="1" fill="#0a0a0a" stroke="none" stroke-width="1" /><circle cx="125" cy="50" r="1" fill="#0a0a0a" stroke="none" stroke-width="1" /><text x="14" y="12.5" font-size="3.8" fill="#dff" text-anchor="start" font-weight="bold" >CSR</text><rect x="24" y="10" width="10" height="1.2" fill="#cef" /><rect x="38" y="10" width="16" height="1.2" fill="#cef" /><rect x="26" y="13.5" width="7.5" height="3" fill="#1a1012" /><rect x="28" y="14.5" width="3.5" height="1" fill="#7a2020" /><rect x="37" y="13.5" width="7.5" height="3" fill="#1a1012" /><rect x="39" y="14.5" width="3.5" height="1" fill="#7a2020" /><rect x="48" y="13.5" width="7.5" height="3" fill="#1a1012" /><rect x="50" y="14.5" width="3.5" height="1" fill="#7a2020" /><rect x="59" y="13.5" width="7.5" height="3" fill="#1a1012" /><rect x="61" y="14.5" width="3.5" height="1" fill="#7a2020" /><rect x="70" y="13.5" width="7.5" height="3" fill="#1a1012" /><rect x="72" y="14.5" width="3.5" height="1" fill="#7a2020" /><rect x="81" y="13.5" width="7.5" height="3" fill="#1a1012" /><rect x="83" y="14.5" width="3.5" height="1" fill="#7a2020" /><rect x="100" y="13.5" width="7.5" height="3" fill="#1a1012" /><rect x="13.5" y="16" width="1" height="18" fill="#1a5a7a" /><rect x="18" y="16" width="3.5" height="18" fill="#2a86b0" /><circle cx="29.5" cy="25.5" r="4.2" fill="#141414" stroke="none" stroke-width="1" /><circle cx="28.45" cy="24.24" r="1.89" fill="#5a4a40" stroke="none" stroke-width="1" opacity="0.55"/><rect x="27" y="31.5" width="5" height="1" fill="#1a4a6a" /><circle cx="40.5" cy="25.5" r="4.2" fill="#141414" stroke="none" stroke-width="1" /><circle cx="39.45" cy="24.24" r="1.89" fill="#5a4a40" stroke="none" stroke-width="1" opacity="0.55"/><rect x="38" y="31.5" width="5" height="1" fill="#1a4a6a" /><circle cx="51.5" cy="25.5" r="4.2" fill="#141414" stroke="none" stroke-width="1" /><circle cx="50.45" cy="24.24" r="1.89" fill="#5a4a40" stroke="none" stroke-width="1" opacity="0.55"/><rect x="49" y="31.5" width="5" height="1" fill="#1a4a6a" /><circle cx="62.5" cy="25.5" r="4.2" fill="#141414" stroke="none" stroke-width="1" /><circle cx="61.45" cy="24.24" r="1.89" fill="#5a4a40" stroke="none" stroke-width="1" opacity="0.55"/><rect x="60" y="31.5" width="5" height="1" fill="#1a4a6a" /><circle cx="73.5" cy="25.5" r="4.2" fill="#141414" stroke="none" stroke-width="1" /><circle cx="72.45" cy="24.24" r="1.89" fill="#5a4a40" stroke="none" stroke-width="1" opacity="0.55"/><rect x="71" y="31.5" width="5" height="1" fill="#1a4a6a" /><circle cx="84.5" cy="25.5" r="4.2" fill="#141414" stroke="none" stroke-width="1" /><circle cx="83.45" cy="24.24" r="1.89" fill="#5a4a40" stroke="none" stroke-width="1" opacity="0.55"/><rect x="82" y="31.5" width="5" height="1" fill="#1a4a6a" /><rect x="95.7" y="19" width="0.8" height="13" fill="#0a2a3a" /><rect x="94" y="24" width="4.2" height="2.2" fill="#111" /><rect x="94" y="27.5" width="4.2" height="1.5" fill="#111" /><rect x="101.7" y="19" width="0.8" height="13" fill="#0a2a3a" /><rect x="100" y="24" width="4.2" height="2.2" fill="#111" /><rect x="100" y="27.5" width="4.2" height="1.5" fill="#111" /><rect x="107.7" y="19" width="0.8" height="13" fill="#0a2a3a" /><rect x="106" y="24" width="4.2" height="2.2" fill="#111" /><rect x="106" y="27.5" width="4.2" height="1.5" fill="#111" /><rect x="113.7" y="19" width="0.8" height="13" fill="#0a2a3a" /><rect x="112" y="24" width="4.2" height="2.2" fill="#111" /><rect x="112" y="27.5" width="4.2" height="1.5" fill="#111" /><rect x="2" y="36.5" width="124" height="3.8" fill="#15181c" /><rect x="92" y="37.8" width="26" height="1.2" fill="#2a5a7a" /><rect x="14" y="43.5" width="6.5" height="3.5" fill="#15181c" /><rect x="22.5" y="43.5" width="6.5" height="3.5" fill="#15181c" /></svg>
<div style="left:1702px;top:732.5px;width:198px;height:17px;line-height:17px;font-size:12px;color:#fff;text-align:center;white-space:nowrap;overflow:hidden;letter-spacing:0px;">CSR Plate (3x)</div>
<svg style="left:1737px;top:752px;" width="128" height="53" viewBox="0 0 128 53"><rect x="0" y="0" width="128" height="53" fill="#131315" /><rect x="0" y="0" width="128" height="5" fill="#1b1c1f" /><rect x="3" y="0.8" width="28" height="3.4" fill="#0c0c0e" /><rect x="12" y="2" width="9" height="1" fill="#5a5c60" /><rect x="37" y="2" width="4" height="1" fill="#4a4c50" /><rect x="44" y="1.6" width="7" height="1.6" fill="#8a8c90" /><rect x="96" y="1.5" width="2.5" height="2" fill="#6a6c70" /><rect x="101" y="1.5" width="2.5" height="2" fill="#6a6c70" /><rect x="106" y="1.5" width="2.5" height="2" fill="#6a6c70" /><rect x="111" y="1.5" width="2.5" height="2" fill="#6a6c70" /><rect x="116" y="1.5" width="2.5" height="2" fill="#6a6c70" /><rect x="121" y="1.5" width="2.5" height="2" fill="#6a6c70" /><rect x="0" y="5.500" width="128" height="47" fill="url(#navy)"/><circle cx="3" cy="8.5" r="0.9" fill="#081830" stroke="none" stroke-width="1" /><circle cx="125" cy="8.5" r="0.9" fill="#081830" stroke="none" stroke-width="1" /><circle cx="3" cy="49.5" r="0.9" fill="#081830" stroke="none" stroke-width="1" /><circle cx="125" cy="49.5" r="0.9" fill="#081830" stroke="none" stroke-width="1" /><circle cx="13" cy="17.5" r="1.8" fill="#0a0a10" stroke="none" stroke-width="1" /><rect x="10" y="21.5" width="6" height="1" fill="#9ab" /><rect x="7" y="26.5" width="12.5" height="7" fill="#0c1424" /><rect x="8" y="27.5" width="3" height="2" fill="#eee" /><rect x="12" y="27.5" width="3" height="2" fill="#eee" /><rect x="16" y="27.5" width="2.5" height="2" fill="#eee" /><rect x="8" y="30.5" width="4.5" height="2" fill="#ddd" /><rect x="14" y="30.5" width="4.5" height="2" fill="#ccc" /><circle cx="25.26" cy="20.74" r="0.35" fill="#cfe0f0" stroke="none" stroke-width="1" /><circle cx="23.7" cy="18.05" r="0.35" fill="#cfe0f0" stroke="none" stroke-width="1" /><circle cx="23.7" cy="14.95" r="0.35" fill="#cfe0f0" stroke="none" stroke-width="1" /><circle cx="25.26" cy="12.26" r="0.35" fill="#cfe0f0" stroke="none" stroke-width="1" /><circle cx="27.95" cy="10.7" r="0.35" fill="#cfe0f0" stroke="none" stroke-width="1" /><circle cx="31.05" cy="10.7" r="0.35" fill="#cfe0f0" stroke="none" stroke-width="1" /><circle cx="33.74" cy="12.26" r="0.35" fill="#cfe0f0" stroke="none" stroke-width="1" /><circle cx="35.3" cy="14.95" r="0.35" fill="#cfe0f0" stroke="none" stroke-width="1" /><circle cx="35.3" cy="18.05" r="0.35" fill="#cfe0f0" stroke="none" stroke-width="1" /><circle cx="33.74" cy="20.74" r="0.35" fill="#cfe0f0" stroke="none" stroke-width="1" /><circle cx="29.5" cy="16.5" r="4.2" fill="#0a0c12" stroke="none" stroke-width="1" /><circle cx="29.5" cy="16.5" r="3.02" fill="#8a8e96" stroke="none" stroke-width="1" /><circle cx="52.26" cy="20.74" r="0.35" fill="#cfe0f0" stroke="none" stroke-width="1" /><circle cx="50.7" cy="18.05" r="0.35" fill="#cfe0f0" stroke="none" stroke-width="1" /><circle cx="50.7" cy="14.95" r="0.35" fill="#cfe0f0" stroke="none" stroke-width="1" /><circle cx="52.26" cy="12.26" r="0.35" fill="#cfe0f0" stroke="none" stroke-width="1" /><circle cx="54.95" cy="10.7" r="0.35" fill="#cfe0f0" stroke="none" stroke-width="1" /><circle cx="58.05" cy="10.7" r="0.35" fill="#cfe0f0" stroke="none" stroke-width="1" /><circle cx="60.74" cy="12.26" r="0.35" fill="#cfe0f0" stroke="none" stroke-width="1" /><circle cx="62.3" cy="14.95" r="0.35" fill="#cfe0f0" stroke="none" stroke-width="1" /><circle cx="62.3" cy="18.05" r="0.35" fill="#cfe0f0" stroke="none" stroke-width="1" /><circle cx="60.74" cy="20.74" r="0.35" fill="#cfe0f0" stroke="none" stroke-width="1" /><circle cx="56.5" cy="16.5" r="4.2" fill="#0a0c12" stroke="none" stroke-width="1" /><circle cx="56.5" cy="16.5" r="3.02" fill="#8a8e96" stroke="none" stroke-width="1" /><circle cx="80.26" cy="20.74" r="0.35" fill="#cfe0f0" stroke="none" stroke-width="1" /><circle cx="78.7" cy="18.05" r="0.35" fill="#cfe0f0" stroke="none" stroke-width="1" /><circle cx="78.7" cy="14.95" r="0.35" fill="#cfe0f0" stroke="none" stroke-width="1" /><circle cx="80.26" cy="12.26" r="0.35" fill="#cfe0f0" stroke="none" stroke-width="1" /><circle cx="82.95" cy="10.7" r="0.35" fill="#cfe0f0" stroke="none" stroke-width="1" /><circle cx="86.05" cy="10.7" r="0.35" fill="#cfe0f0" stroke="none" stroke-width="1" /><circle cx="88.74" cy="12.26" r="0.35" fill="#cfe0f0" stroke="none" stroke-width="1" /><circle cx="90.3" cy="14.95" r="0.35" fill="#cfe0f0" stroke="none" stroke-width="1" /><circle cx="90.3" cy="18.05" r="0.35" fill="#cfe0f0" stroke="none" stroke-width="1" /><circle cx="88.74" cy="20.74" r="0.35" fill="#cfe0f0" stroke="none" stroke-width="1" /><circle cx="84.5" cy="16.5" r="4.2" fill="#0a0c12" stroke="none" stroke-width="1" /><circle cx="84.5" cy="16.5" r="3.02" fill="#8a8e96" stroke="none" stroke-width="1" /><circle cx="37.89" cy="31.11" r="0.35" fill="#cfe0f0" stroke="none" stroke-width="1" /><circle cx="36.57" cy="28.82" r="0.35" fill="#cfe0f0" stroke="none" stroke-width="1" /><circle cx="36.57" cy="26.18" r="0.35" fill="#cfe0f0" stroke="none" stroke-width="1" /><circle cx="37.89" cy="23.89" r="0.35" fill="#cfe0f0" stroke="none" stroke-width="1" /><circle cx="40.18" cy="22.57" r="0.35" fill="#cfe0f0" stroke="none" stroke-width="1" /><circle cx="42.82" cy="22.57" r="0.35" fill="#cfe0f0" stroke="none" stroke-width="1" /><circle cx="45.11" cy="23.89" r="0.35" fill="#cfe0f0" stroke="none" stroke-width="1" /><circle cx="46.43" cy="26.18" r="0.35" fill="#cfe0f0" stroke="none" stroke-width="1" /><circle cx="46.43" cy="28.82" r="0.35" fill="#cfe0f0" stroke="none" stroke-width="1" /><circle cx="45.11" cy="31.11" r="0.35" fill="#cfe0f0" stroke="none" stroke-width="1" /><circle cx="41.5" cy="27.5" r="3.3" fill="#0a0c12" stroke="none" stroke-width="1" /><circle cx="41.5" cy="27.5" r="2.38" fill="#14305a" stroke="none" stroke-width="1" /><circle cx="41.5" cy="27.5" r="2.4" fill="none" stroke="#9ab" stroke-width="0.5" /><circle cx="65.89" cy="31.11" r="0.35" fill="#cfe0f0" stroke="none" stroke-width="1" /><circle cx="64.57" cy="28.82" r="0.35" fill="#cfe0f0" stroke="none" stroke-width="1" /><circle cx="64.57" cy="26.18" r="0.35" fill="#cfe0f0" stroke="none" stroke-width="1" /><circle cx="65.89" cy="23.89" r="0.35" fill="#cfe0f0" stroke="none" stroke-width="1" /><circle cx="68.18" cy="22.57" r="0.35" fill="#cfe0f0" stroke="none" stroke-width="1" /><circle cx="70.82" cy="22.57" r="0.35" fill="#cfe0f0" stroke="none" stroke-width="1" /><circle cx="73.11" cy="23.89" r="0.35" fill="#cfe0f0" stroke="none" stroke-width="1" /><circle cx="74.43" cy="26.18" r="0.35" fill="#cfe0f0" stroke="none" stroke-width="1" /><circle cx="74.43" cy="28.82" r="0.35" fill="#cfe0f0" stroke="none" stroke-width="1" /><circle cx="73.11" cy="31.11" r="0.35" fill="#cfe0f0" stroke="none" stroke-width="1" /><circle cx="69.5" cy="27.5" r="3.3" fill="#0a0c12" stroke="none" stroke-width="1" /><circle cx="69.5" cy="27.5" r="2.38" fill="#14305a" stroke="none" stroke-width="1" /><circle cx="69.5" cy="27.5" r="2.4" fill="none" stroke="#9ab" stroke-width="0.5" /><circle cx="92.89" cy="31.11" r="0.35" fill="#cfe0f0" stroke="none" stroke-width="1" /><circle cx="91.57" cy="28.82" r="0.35" fill="#cfe0f0" stroke="none" stroke-width="1" /><circle cx="91.57" cy="26.18" r="0.35" fill="#cfe0f0" stroke="none" stroke-width="1" /><circle cx="92.89" cy="23.89" r="0.35" fill="#cfe0f0" stroke="none" stroke-width="1" /><circle cx="95.18" cy="22.57" r="0.35" fill="#cfe0f0" stroke="none" stroke-width="1" /><circle cx="97.82" cy="22.57" r="0.35" fill="#cfe0f0" stroke="none" stroke-width="1" /><circle cx="100.11" cy="23.89" r="0.35" fill="#cfe0f0" stroke="none" stroke-width="1" /><circle cx="101.43" cy="26.18" r="0.35" fill="#cfe0f0" stroke="none" stroke-width="1" /><circle cx="101.43" cy="28.82" r="0.35" fill="#cfe0f0" stroke="none" stroke-width="1" /><circle cx="100.11" cy="31.11" r="0.35" fill="#cfe0f0" stroke="none" stroke-width="1" /><circle cx="96.5" cy="27.5" r="3.3" fill="#0a0c12" stroke="none" stroke-width="1" /><circle cx="96.5" cy="27.5" r="2.38" fill="#14305a" stroke="none" stroke-width="1" /><circle cx="96.5" cy="27.5" r="2.4" fill="none" stroke="#9ab" stroke-width="0.5" /><circle cx="35.05" cy="46.45" r="0.35" fill="#cfe0f0" stroke="none" stroke-width="1" /><circle cx="33.41" cy="43.63" r="0.35" fill="#cfe0f0" stroke="none" stroke-width="1" /><circle cx="33.41" cy="40.37" r="0.35" fill="#cfe0f0" stroke="none" stroke-width="1" /><circle cx="35.05" cy="37.55" r="0.35" fill="#cfe0f0" stroke="none" stroke-width="1" /><circle cx="37.87" cy="35.91" r="0.35" fill="#cfe0f0" stroke="none" stroke-width="1" /><circle cx="41.13" cy="35.91" r="0.35" fill="#cfe0f0" stroke="none" stroke-width="1" /><circle cx="43.95" cy="37.55" r="0.35" fill="#cfe0f0" stroke="none" stroke-width="1" /><circle cx="45.59" cy="40.37" r="0.35" fill="#cfe0f0" stroke="none" stroke-width="1" /><circle cx="45.59" cy="43.63" r="0.35" fill="#cfe0f0" stroke="none" stroke-width="1" /><circle cx="43.95" cy="46.45" r="0.35" fill="#cfe0f0" stroke="none" stroke-width="1" /><circle cx="39.5" cy="42" r="4.5" fill="#0a0c12" stroke="none" stroke-width="1" /><circle cx="39.5" cy="42" r="3.24" fill="#8a1c20" stroke="none" stroke-width="1" /><circle cx="81.05" cy="46.45" r="0.35" fill="#cfe0f0" stroke="none" stroke-width="1" /><circle cx="79.41" cy="43.63" r="0.35" fill="#cfe0f0" stroke="none" stroke-width="1" /><circle cx="79.41" cy="40.37" r="0.35" fill="#cfe0f0" stroke="none" stroke-width="1" /><circle cx="81.05" cy="37.55" r="0.35" fill="#cfe0f0" stroke="none" stroke-width="1" /><circle cx="83.87" cy="35.91" r="0.35" fill="#cfe0f0" stroke="none" stroke-width="1" /><circle cx="87.13" cy="35.91" r="0.35" fill="#cfe0f0" stroke="none" stroke-width="1" /><circle cx="89.95" cy="37.55" r="0.35" fill="#cfe0f0" stroke="none" stroke-width="1" /><circle cx="91.59" cy="40.37" r="0.35" fill="#cfe0f0" stroke="none" stroke-width="1" /><circle cx="91.59" cy="43.63" r="0.35" fill="#cfe0f0" stroke="none" stroke-width="1" /><circle cx="89.95" cy="46.45" r="0.35" fill="#cfe0f0" stroke="none" stroke-width="1" /><circle cx="85.5" cy="42" r="4.5" fill="#0a0c12" stroke="none" stroke-width="1" /><circle cx="85.5" cy="42" r="3.24" fill="#121418" stroke="none" stroke-width="1" /><circle cx="29" cy="28" r="1.8" fill="#f0f4f8" stroke="none" stroke-width="1" /><circle cx="84.5" cy="28" r="1.8" fill="#f0f4f8" stroke="none" stroke-width="1" /><circle cx="58" cy="44.5" r="1.6" fill="#d02a3a" stroke="none" stroke-width="1" /><rect x="57" y="41" width="2" height="2" fill="#5a1a2a" /><rect x="69.5" y="42.5" width="3.5" height="4" fill="#dfe6ee" /><circle cx="119" cy="13.5" r="2.2" fill="#f0f4f8" stroke="none" stroke-width="1" /><circle cx="119" cy="44.5" r="2.2" fill="#f0f4f8" stroke="none" stroke-width="1" /><rect x="118.6" y="18" width="0.8" height="22" fill="#4a6a9a" /><rect x="120.5" y="19" width="1.5" height="0.7" fill="#9ab" /><rect x="120.5" y="22" width="1.5" height="0.7" fill="#9ab" /><rect x="120.5" y="25" width="1.5" height="0.7" fill="#9ab" /><rect x="120.5" y="28" width="1.5" height="0.7" fill="#9ab" /><rect x="120.5" y="31" width="1.5" height="0.7" fill="#9ab" /><rect x="120.5" y="34" width="1.5" height="0.7" fill="#9ab" /><rect x="120.5" y="37" width="1.5" height="0.7" fill="#9ab" /><circle cx="10.5" cy="44" r="1.7" fill="none" stroke="#9cf" stroke-width="0.7" /><rect x="13.5" y="43.5" width="5" height="1" fill="#7a9ac0" /></svg>
<div style="left:1702px;top:804.5px;width:198px;height:17px;line-height:17px;font-size:12px;color:#fff;text-align:center;white-space:nowrap;overflow:hidden;letter-spacing:0px;">EQ-PA (3x)</div>
<svg style="left:1737px;top:824px;" width="128" height="53" viewBox="0 0 128 53"><rect x="0" y="0" width="128" height="53" fill="#131315" /><rect x="0" y="0" width="128" height="5" fill="#1b1c1f" /><rect x="3" y="0.8" width="28" height="3.4" fill="#0c0c0e" /><rect x="12" y="2" width="9" height="1" fill="#5a5c60" /><rect x="37" y="2" width="4" height="1" fill="#4a4c50" /><rect x="44" y="1.6" width="7" height="1.6" fill="#8a8c90" /><rect x="96" y="1.5" width="2.5" height="2" fill="#6a6c70" /><rect x="101" y="1.5" width="2.5" height="2" fill="#6a6c70" /><rect x="106" y="1.5" width="2.5" height="2" fill="#6a6c70" /><rect x="111" y="1.5" width="2.5" height="2" fill="#6a6c70" /><rect x="116" y="1.5" width="2.5" height="2" fill="#6a6c70" /><rect x="121" y="1.5" width="2.5" height="2" fill="#6a6c70" /><rect x="0" y="5.5" width="128" height="47" fill="#19191b" /><rect x="14" y="7" width="107" height="34" fill="#141416" /><rect x="14" y="7" width="0.5" height="34" fill="#2a2a2c" /><rect x="27" y="7" width="0.5" height="34" fill="#2a2a2c" /><rect x="40" y="7" width="0.5" height="34" fill="#2a2a2c" /><rect x="53" y="7" width="0.5" height="34" fill="#2a2a2c" /><rect x="66" y="7" width="0.5" height="34" fill="#2a2a2c" /><rect x="79" y="7" width="0.5" height="34" fill="#2a2a2c" /><rect x="92" y="7" width="0.5" height="34" fill="#2a2a2c" /><rect x="105" y="7" width="0.5" height="34" fill="#2a2a2c" /><rect x="118" y="7" width="0.5" height="34" fill="#2a2a2c" /><rect x="14" y="9" width="107" height="0.5" fill="#2a2a2c" /><rect x="14" y="16.5" width="107" height="0.5" fill="#2a2a2c" /><rect x="14" y="24" width="107" height="0.5" fill="#2a2a2c" /><rect x="14" y="31.5" width="107" height="0.5" fill="#2a2a2c" /><rect x="14" y="39" width="107" height="0.5" fill="#2a2a2c" /><rect x="14" y="23.5" width="99" height="0.8" fill="#c8c8c8" /><circle cx="71.5" cy="23.5" r="0.9" fill="#fff" stroke="none" stroke-width="1" /><rect x="3" y="19" width="8" height="0.8" fill="#666" /><rect x="3" y="25.5" width="10" height="0.8" fill="#555" /><rect x="4" y="30" width="8" height="0.8" fill="#555" /><path d="M0 41h14l6 7h108v5h-128z" fill="#222225" stroke="none" stroke-width="1" /><circle cx="53" cy="43.5" r="3.3" fill="#4a4a4c" stroke="none" stroke-width="1" /><circle cx="53" cy="43.5" r="2.2" fill="#6a6a6c" stroke="none" stroke-width="1" /><circle cx="65" cy="43.5" r="3.3" fill="#4a4a4c" stroke="none" stroke-width="1" /><circle cx="65" cy="43.5" r="2.2" fill="#6a6a6c" stroke="none" stroke-width="1" /><circle cx="77" cy="43.5" r="3.3" fill="#4a4a4c" stroke="none" stroke-width="1" /><circle cx="77" cy="43.5" r="2.2" fill="#6a6a6c" stroke="none" stroke-width="1" /><rect x="87" y="41" width="4" height="1" fill="#ccc" /><rect x="92" y="44.5" width="8" height="1" fill="#999" /><rect x="93" y="41" width="6" height="0.8" fill="#777" /><circle cx="5.5" cy="46.5" r="1.7" fill="none" stroke="#ccc" stroke-width="0.7" /><rect x="8.5" y="46" width="5" height="1" fill="#999" /><rect x="122" y="10" width="3" height="1.2" fill="#555" /><rect x="122" y="14.5" width="3" height="1.2" fill="#555" /><rect x="122" y="19" width="3" height="1.2" fill="#555" /><rect x="122" y="23.5" width="3" height="1.2" fill="#555" /><rect x="122" y="28" width="3" height="1.2" fill="#555" /><rect x="122" y="32.5" width="3" height="1.2" fill="#555" /><rect x="122" y="37" width="3" height="1.2" fill="#555" /><rect x="122" y="41.5" width="3" height="1.2" fill="#555" /><rect x="123.5" y="6.5" width="3.5" height="3" fill="#888" /></svg>
<div style="left:1702px;top:876.5px;width:198px;height:17px;line-height:17px;font-size:12px;color:#fff;text-align:center;white-space:nowrap;overflow:hidden;letter-spacing:0px;">EQual (3x)</div>
<svg style="left:1737px;top:896px;" width="128" height="50" viewBox="0 0 128 50"><rect x="0" y="0" width="128" height="50" fill="#131315" /><rect x="0" y="0" width="128" height="5" fill="#1b1c1f" /><rect x="3" y="0.8" width="28" height="3.4" fill="#0c0c0e" /><rect x="12" y="2" width="9" height="1" fill="#5a5c60" /><rect x="37" y="2" width="4" height="1" fill="#4a4c50" /><rect x="44" y="1.6" width="7" height="1.6" fill="#8a8c90" /><rect x="96" y="1.5" width="2.5" height="2" fill="#6a6c70" /><rect x="101" y="1.5" width="2.5" height="2" fill="#6a6c70" /><rect x="106" y="1.5" width="2.5" height="2" fill="#6a6c70" /><rect x="111" y="1.5" width="2.5" height="2" fill="#6a6c70" /><rect x="116" y="1.5" width="2.5" height="2" fill="#6a6c70" /><rect x="121" y="1.5" width="2.5" height="2" fill="#6a6c70" /><rect x="0" y="5.5" width="128" height="44.5" fill="#1d1d1f" /><rect x="1" y="7" width="22" height="43" fill="#2a2a2c" /><circle cx="13" cy="17" r="1.6" fill="none" stroke="#bbb" stroke-width="0.6" /><rect x="12.6" y="14.5" width="0.8" height="2" fill="#bbb" /><rect x="7.5" y="25.5" width="12" height="7" fill="#0c0c0e" /><rect x="8.5" y="26.5" width="3" height="2" fill="#eee" /><rect x="12.5" y="26.5" width="3" height="2" fill="#bbb" /><rect x="16" y="26.5" width="2.5" height="2" fill="#666" /><rect x="8.5" y="29.5" width="4.5" height="2" fill="#ddd" /><rect x="14" y="29.5" width="4.5" height="2" fill="#555" /><circle cx="9" cy="47" r="1.7" fill="none" stroke="#ccc" stroke-width="0.7" /><rect x="12" y="45.5" width="4" height="0.8" fill="#888" /><rect x="12" y="47.5" width="4" height="0.8" fill="#888" /><rect x="24.5" y="8" width="0.9" height="42" fill="#d8d8d8" /><rect x="47" y="8" width="0.9" height="42" fill="#d8d8d8" /><rect x="69.5" y="8" width="0.9" height="42" fill="#d8d8d8" /><rect x="92" y="8" width="0.9" height="42" fill="#d8d8d8" /><rect x="114.5" y="8" width="0.9" height="42" fill="#d8d8d8" /><circle cx="36" cy="14.5" r="3.6" fill="#070707" stroke="#e8e8e8" stroke-width="0.8" /><line x1="36" y1="14.5" x2="37.98" y2="11.98" stroke="#f0f0f0" stroke-width="0.7" /><circle cx="36" cy="29" r="3.6" fill="#070707" stroke="#e8e8e8" stroke-width="0.8" /><line x1="36" y1="29" x2="37.98" y2="26.48" stroke="#f0f0f0" stroke-width="0.7" /><circle cx="36" cy="43.5" r="3.6" fill="#070707" stroke="#e8e8e8" stroke-width="0.8" /><line x1="36" y1="43.5" x2="37.98" y2="40.98" stroke="#f0f0f0" stroke-width="0.7" /><circle cx="58.5" cy="14.5" r="3.3" fill="#070707" stroke="#e8e8e8" stroke-width="0.8" /><line x1="58.5" y1="14.5" x2="60.31" y2="12.19" stroke="#f0f0f0" stroke-width="0.7" /><circle cx="58.5" cy="44" r="3.3" fill="#070707" stroke="#e8e8e8" stroke-width="0.8" /><line x1="58.5" y1="44" x2="60.31" y2="41.69" stroke="#f0f0f0" stroke-width="0.7" /><circle cx="58.5" cy="29" r="7.2" fill="none" stroke="#8a8a8a" stroke-width="0.6" /><circle cx="58.5" cy="29" r="5.3" fill="#070707" stroke="#e8e8e8" stroke-width="0.8" /><line x1="58.5" y1="29" x2="61.41" y2="25.29" stroke="#f0f0f0" stroke-width="0.7" /><circle cx="81" cy="14.5" r="3.3" fill="#070707" stroke="#e8e8e8" stroke-width="0.8" /><line x1="81" y1="14.5" x2="82.81" y2="12.19" stroke="#f0f0f0" stroke-width="0.7" /><circle cx="81" cy="44" r="3.3" fill="#070707" stroke="#e8e8e8" stroke-width="0.8" /><line x1="81" y1="44" x2="82.81" y2="41.69" stroke="#f0f0f0" stroke-width="0.7" /><circle cx="81" cy="29" r="7.2" fill="none" stroke="#8a8a8a" stroke-width="0.6" /><circle cx="81" cy="29" r="5.3" fill="#070707" stroke="#e8e8e8" stroke-width="0.8" /><line x1="81" y1="29" x2="83.92" y2="25.29" stroke="#f0f0f0" stroke-width="0.7" /><circle cx="103.5" cy="14.5" r="3.3" fill="#070707" stroke="#e8e8e8" stroke-width="0.8" /><line x1="103.5" y1="14.5" x2="105.31" y2="12.19" stroke="#f0f0f0" stroke-width="0.7" /><circle cx="103.5" cy="44" r="3.3" fill="#070707" stroke="#e8e8e8" stroke-width="0.8" /><line x1="103.5" y1="44" x2="105.31" y2="41.69" stroke="#f0f0f0" stroke-width="0.7" /><circle cx="103.5" cy="29" r="7.2" fill="none" stroke="#8a8a8a" stroke-width="0.6" /><circle cx="103.5" cy="29" r="5.3" fill="#070707" stroke="#e8e8e8" stroke-width="0.8" /><line x1="103.5" y1="29" x2="106.42" y2="25.29" stroke="#f0f0f0" stroke-width="0.7" /><rect x="118" y="12" width="5" height="1.6" fill="#e0e0e0" /><rect x="118" y="20" width="3.5" height="1.6" fill="#e0e0e0" /><rect x="118" y="28" width="5" height="1.6" fill="#e0e0e0" /><rect x="118" y="35" width="3.5" height="1.6" fill="#e0e0e0" /><rect x="118" y="41" width="5" height="1.6" fill="#e0e0e0" /><rect x="118" y="47" width="3.5" height="1.6" fill="#e0e0e0" /><rect x="62" y="47" width="3" height="3" fill="#2a9a3a" /></svg>
<div style="left:1702px;top:945px;width:195px;height:1.2px;background:#aeb6c0;"></div>
<div style="left:1702px;top:946px;width:195px;height:16px;background:#1d2128;"></div>
<div style="left:1702px;top:946px;width:15px;height:16px;background:#3a4350;"></div>
<svg style="left:1702px;top:946px;" width="15" height="16" viewBox="0 0 15 16"><path d="M9.5 4.5l-4 3.500 4 3.500" fill="none" stroke="#d5dae0" stroke-width="1.7" /></svg>
<div style="left:1717px;top:946px;width:17px;height:16px;background:#6f7d8c;"></div>
<div style="left:1882px;top:946px;width:15px;height:16px;background:#3a4350;"></div>
<svg style="left:1882px;top:946px;" width="15" height="16" viewBox="0 0 15 16"><path d="M5.5 4.5l4 3.500-4 3.500" fill="none" stroke="#d5dae0" stroke-width="1.7" /></svg>
<div style="left:1903px;top:78px;width:17px;height:868px;background:#2c323c;"></div>
<div style="left:1903px;top:78px;width:15px;height:868px;background:#1f232b;"></div>
<div style="left:1903px;top:80px;width:15px;height:17px;background:#414a57;"></div>
<svg style="left:1903px;top:80px;" width="15" height="17" viewBox="0 0 15 17"><path d="M4.0 10.5l3.500-4 3.500 4" fill="none" stroke="#d5dae0" stroke-width="1.7" /></svg>
<div style="left:1903px;top:320px;width:15px;height:20px;background:#6f7d8c;"></div>
<div style="left:1903px;top:925px;width:15px;height:19px;background:#414a57;"></div>
<svg style="left:1903px;top:925px;" width="15" height="19" viewBox="0 0 15 19"><path d="M4.0 7.5l3.500 4 3.500-4" fill="none" stroke="#d5dae0" stroke-width="1.7" /></svg>
<div style="left:1918px;top:27px;width:2px;height:936px;background:#3a424e;"></div>
<div style="left:122px;top:480.5px;width:849.5px;height:482.5px;background:#262b35;border:2px solid #8b99a8;border-radius:4px;box-shadow:inset 0 0 0 4px #444d59;"></div>
<div style="left:127px;top:488px;width:28px;height:443px;background:#252a33;"></div>
<div style="left:153.5px;top:488px;width:1.5px;height:443px;background:#15181e;"></div>
<svg style="left:131px;top:664px;" width="20" height="90" viewBox="0 0 20 90"><rect x="3" y="2" width="14" height="4.5" fill="#d6dade" rx="1.500"/><rect x="3" y="8" width="14" height="4.5" fill="#3a9ab8" rx="1.500"/><path d="M5.500 27a5 5 0 1 0 2-5" fill="none" stroke="#d6dade" stroke-width="2.2" /><path d="M3.500 21l5.500-1.500-1 5.500z" fill="#d6dade" stroke="none" stroke-width="1" /><path d="M4 41l5.500 4.500-5.500 4.500zM17 41l-5.500 4.500 5.500 4.500z" fill="#d6dade" stroke="none" stroke-width="1" /><path d="M10 60h7v7l-2.300-2.300-2.700 2.700-2.400-2.400 2.700-2.700zM11 70h-7v-7l2.300 2.300 2.700-2.700 2.400 2.400-2.700 2.700z" fill="#d6dade" stroke="none" stroke-width="1" /></svg>
<div style="left:127px;top:742px;width:28px;height:12px;line-height:12px;font-size:9px;color:#d6dade;text-align:center;white-space:nowrap;overflow:hidden;font-weight:bold;">123</div>
<div style="left:155px;top:488px;width:113px;height:436px;background:#2a2f38;"></div>
<div style="left:155px;top:488px;width:1.5px;height:436px;background:#171a20;"></div>
<div style="left:267px;top:488px;width:1px;height:436px;background:#1c2027;"></div>
<div style="left:156.5px;top:488px;width:110.5px;height:18px;background:#272c35;"></div>
<div style="left:156.5px;top:505.5px;width:110.5px;height:1px;background:#1a1d23;"></div>
<svg style="left:162px;top:493.5px;" width="9" height="10" viewBox="0 0 9 10"><path d="M0 0v10l9-5z" fill="#d7dbe0" stroke="none" stroke-width="1" /></svg>
<div style="left:174px;top:492px;width:50px;height:13px;line-height:13px;font-size:9px;color:#d7dbe0;text-align:left;white-space:nowrap;overflow:hidden;font-weight:bold;letter-spacing:0.3px;">LINK</div>
<div style="left:164.3px;top:512px;width:98px;height:18px;background:#263549;border:1px solid #4a6480;border-radius:2px;"></div>
<div style="left:211.8px;top:514px;width:4px;height:14px;background:#2b9bc8;"></div>
<div style="left:164.3px;top:512px;width:98px;height:18px;line-height:18px;font-size:12.5px;color:#fff;text-align:center;white-space:nowrap;overflow:hidden;">C</div>
<div style="left:247.8px;top:530.8px;width:13px;height:6px;background:#f2921e;border-radius:1px;"></div>
<svg style="left:169.3px;top:532px;" width="40" height="40" viewBox="0 0 40 40"><circle cx="20" cy="18.5" r="11.9" fill="#20242b" stroke="none" stroke-width="1" /><circle cx="20" cy="18.5" r="13.6" fill="none" stroke="#7b7e84" stroke-width="4" /><path d="M13.62 30.51 A13.6 13.6 0 0 1 20.00 4.90" fill="none" stroke="#2e8abb" stroke-width="4"/><text x="20" y="21.92" font-size="9.5" fill="#f2f2f2" text-anchor="middle" font-weight="normal" >0.0</text></svg>
<div style="left:220.3px;top:543px;width:42px;height:17.5px;background:#274a78;border:1px solid #3f6698;border-radius:2px;"></div>
<div style="left:220.3px;top:543px;width:40.5px;height:17.5px;line-height:17.5px;font-size:10.5px;color:#e8eef8;text-align:right;white-space:nowrap;overflow:hidden;letter-spacing:1px;">-5.1</div>
<div style="left:164.3px;top:572.5px;width:50px;height:242.5px;background:#14171c;border:1px solid #0d0f13;border-radius:2px;box-shadow:0 0 0 1px #303640;"></div>
<svg style="left:164.3px;top:572.5px;" width="50" height="242.5" viewBox="0 0 50 242.5"><rect x="3" y="8.2" width="9" height="1.4" fill="#c9ccd0" /><rect x="38" y="8.2" width="9" height="1.4" fill="#c9ccd0" /><text x="30" y="12.5" font-size="10" fill="#cfd2d6" text-anchor="end" font-weight="normal" letter-spacing="-0.3">6</text><rect x="3" y="27.56" width="9" height="1.4" fill="#c9ccd0" /><rect x="38" y="27.56" width="9" height="1.4" fill="#c9ccd0" /><text x="30" y="31.86" font-size="10" fill="#cfd2d6" text-anchor="end" font-weight="normal" letter-spacing="-0.3">0</text><rect x="3" y="46.92" width="9" height="1.4" fill="#c9ccd0" /><rect x="38" y="46.92" width="9" height="1.4" fill="#c9ccd0" /><text x="30" y="51.22" font-size="10" fill="#cfd2d6" text-anchor="end" font-weight="normal" letter-spacing="-0.3">-6</text><rect x="3" y="66.28" width="9" height="1.4" fill="#c9ccd0" /><rect x="38" y="66.28" width="9" height="1.4" fill="#c9ccd0" /><text x="30" y="70.58" font-size="10" fill="#cfd2d6" text-anchor="end" font-weight="normal" letter-spacing="-0.3">-12</text><rect x="3" y="85.64" width="9" height="1.4" fill="#c9ccd0" /><rect x="38" y="85.64" width="9" height="1.4" fill="#c9ccd0" /><text x="30" y="89.94" font-size="10" fill="#cfd2d6" text-anchor="end" font-weight="normal" letter-spacing="-0.3">-18</text><rect x="3" y="105" width="9" height="1.4" fill="#c9ccd0" /><rect x="38" y="105" width="9" height="1.4" fill="#c9ccd0" /><text x="30" y="109.3" font-size="10" fill="#cfd2d6" text-anchor="end" font-weight="normal" letter-spacing="-0.3">-24</text><rect x="3" y="124.36" width="9" height="1.4" fill="#c9ccd0" /><rect x="38" y="124.36" width="9" height="1.4" fill="#c9ccd0" /><text x="30" y="128.66" font-size="10" fill="#cfd2d6" text-anchor="end" font-weight="normal" letter-spacing="-0.3">-30</text><rect x="3" y="143.72" width="9" height="1.4" fill="#c9ccd0" /><rect x="38" y="143.72" width="9" height="1.4" fill="#c9ccd0" /><text x="30" y="148.02" font-size="10" fill="#cfd2d6" text-anchor="end" font-weight="normal" letter-spacing="-0.3">-36</text><rect x="3" y="163.08" width="9" height="1.4" fill="#c9ccd0" /><rect x="38" y="163.08" width="9" height="1.4" fill="#c9ccd0" /><text x="30" y="167.38" font-size="10" fill="#cfd2d6" text-anchor="end" font-weight="normal" letter-spacing="-0.3">-42</text><rect x="3" y="182.44" width="9" height="1.4" fill="#c9ccd0" /><rect x="38" y="182.44" width="9" height="1.4" fill="#c9ccd0" /><text x="30" y="186.74" font-size="10" fill="#cfd2d6" text-anchor="end" font-weight="normal" letter-spacing="-0.3">-48</text><rect x="3" y="201.8" width="9" height="1.4" fill="#c9ccd0" /><rect x="38" y="201.8" width="9" height="1.4" fill="#c9ccd0" /><text x="30" y="206.1" font-size="10" fill="#cfd2d6" text-anchor="end" font-weight="normal" letter-spacing="-0.3">-54</text><rect x="3" y="221.16" width="9" height="1.4" fill="#c9ccd0" /><rect x="38" y="221.16" width="9" height="1.4" fill="#c9ccd0" /><text x="30" y="225.46" font-size="10" fill="#cfd2d6" text-anchor="end" font-weight="normal" letter-spacing="-0.3">-60</text></svg>
<div style="left:167.3px;top:807px;width:44px;height:6px;background:#2a5487;"></div>
<div style="left:226px;top:578.5px;width:4.6px;height:230px;background:#111318;border-radius:1px;box-shadow:0 0 0 0.500px #252a32;"></div>
<svg style="left:232.3px;top:572.5px;" width="36" height="232" viewBox="0 0 36 232"><rect x="0" y="22.3" width="10" height="1.3" fill="#b9bcc0" /><text x="21.5" y="27.8" font-size="10" fill="#b9bcc0" text-anchor="middle" font-weight="normal" letter-spacing="-0.3">6</text><rect x="0" y="49.4" width="10" height="1.3" fill="#b9bcc0" /><text x="21.5" y="54.9" font-size="10" fill="#b9bcc0" text-anchor="middle" font-weight="normal" letter-spacing="-0.3">0</text><rect x="0" y="72.5" width="10" height="1.3" fill="#b9bcc0" /><text x="21.5" y="78" font-size="10" fill="#b9bcc0" text-anchor="middle" font-weight="normal" letter-spacing="-0.3">5</text><rect x="0" y="94.7" width="10" height="1.3" fill="#b9bcc0" /><text x="21.5" y="100.2" font-size="10" fill="#b9bcc0" text-anchor="middle" font-weight="normal" letter-spacing="-0.3">10</text><rect x="0" y="117.5" width="10" height="1.3" fill="#b9bcc0" /><text x="21.5" y="123" font-size="10" fill="#b9bcc0" text-anchor="middle" font-weight="normal" letter-spacing="-0.3">15</text><rect x="0" y="139.5" width="10" height="1.3" fill="#b9bcc0" /><text x="21.5" y="145" font-size="10" fill="#b9bcc0" text-anchor="middle" font-weight="normal" letter-spacing="-0.3">20</text><rect x="0" y="161.8" width="10" height="1.3" fill="#b9bcc0" /><text x="21.5" y="167.3" font-size="10" fill="#b9bcc0" text-anchor="middle" font-weight="normal" letter-spacing="-0.3">25</text><rect x="0" y="184" width="10" height="1.3" fill="#b9bcc0" /><text x="21.5" y="189.5" font-size="10" fill="#b9bcc0" text-anchor="middle" font-weight="normal" letter-spacing="-0.3">30</text><rect x="0" y="206.3" width="10" height="1.3" fill="#b9bcc0" /><text x="21.5" y="211.8" font-size="10" fill="#b9bcc0" text-anchor="middle" font-weight="normal" letter-spacing="-0.3">40</text><rect x="0" y="209.8" width="10" height="1.2" fill="#b9bcc0" /><rect x="0" y="216.9" width="10" height="1.2" fill="#b9bcc0" /><text x="22.5" y="222.5" font-size="9" fill="#b9bcc0" text-anchor="middle" font-weight="normal" >∞</text></svg>
<div style="left:218.1px;top:625px;width:20.5px;height:35px;background:linear-gradient(#4e4e4e 0%,#6e6e6e 6%,#cdcdcd 16%,#c0c0c0 30%,#8a8a8a 46%,#2e2e2e 49%,#2e2e2e 51%,#e0e0e0 56%,#c6c6c6 75%,#808080 93%,#454545 100%);border-radius:2px;box-shadow:0 1px 2px rgba(0,0,0,.6);"></div>
<div style="left:167.3px;top:820px;width:44px;height:12px;background:#484a4f;border:1px solid #585b61;border-radius:2px;"></div>
<div style="left:167.3px;top:820px;width:44px;height:12px;line-height:12px;font-size:8.5px;color:#888b91;text-align:center;white-space:nowrap;overflow:hidden;">RMS</div>
<div style="left:164.6px;top:837px;width:32.5px;height:15.9px;background:linear-gradient(#7c7c7c,#626262 45%,#505050 55%,#474747);border-radius:3px 0 0 0;box-shadow:inset 0 0 0 0.600px rgba(20,20,20,.55);"></div>
<div style="left:164.6px;top:837px;width:32.5px;height:15.9px;line-height:15.9px;font-size:12.5px;color:#202020;text-align:center;white-space:nowrap;overflow:hidden;font-weight:bold;">S</div>
<div style="left:197.1px;top:837px;width:32.5px;height:15.9px;background:linear-gradient(#7c7c7c,#626262 45%,#505050 55%,#474747);border-radius:0;box-shadow:inset 0 0 0 0.600px rgba(20,20,20,.55);"></div>
<div style="left:197.1px;top:837px;width:32.5px;height:15.9px;line-height:15.9px;font-size:12.5px;color:#202020;text-align:center;white-space:nowrap;overflow:hidden;font-weight:bold;">M</div>
<div style="left:229.6px;top:837px;width:32.5px;height:15.9px;background:linear-gradient(#7c7c7c,#626262 45%,#505050 55%,#474747);border-radius:0 3px 0 0;box-shadow:inset 0 0 0 0.600px rgba(20,20,20,.55);"></div>
<svg style="left:229.6px;top:837px;" width="32.5" height="15.9" viewBox="0 0 32.5 15.9"><circle cx="16.25" cy="8" r="4" fill="#262626" stroke="none" stroke-width="1" /></svg>
<div style="left:164.6px;top:852.9px;width:32.5px;height:15.9px;background:linear-gradient(#7c7c7c,#626262 45%,#505050 55%,#474747);border-radius:0 0 0 3px;box-shadow:inset 0 0 0 0.600px rgba(20,20,20,.55);"></div>
<div style="left:164.6px;top:852.9px;width:32.5px;height:15.9px;line-height:15.9px;font-size:12.5px;color:#202020;text-align:center;white-space:nowrap;overflow:hidden;font-weight:bold;font-family:'Liberation Serif',serif;">i</div>
<div style="left:197.1px;top:852.9px;width:32.5px;height:15.9px;background:linear-gradient(#f4727a,#e23440 50%,#d8222e 60%,#e8505a);border-radius:0;box-shadow:inset 0 0 0 0.600px rgba(20,20,20,.55);"></div>
<div style="left:197.1px;top:852.9px;width:32.5px;height:15.9px;line-height:15.9px;font-size:12.5px;color:#2a0a0c;text-align:center;white-space:nowrap;overflow:hidden;font-weight:bold;">R</div>
<div style="left:229.6px;top:852.9px;width:32.5px;height:15.9px;background:linear-gradient(#7c7c7c,#626262 45%,#505050 55%,#474747);border-radius:0 0 3px 0;box-shadow:inset 0 0 0 0.600px rgba(20,20,20,.55);"></div>
<div style="left:229.6px;top:852.9px;width:32.5px;height:15.9px;line-height:15.9px;font-size:12.5px;color:#202020;text-align:center;white-space:nowrap;overflow:hidden;font-weight:bold;">W</div>
<div style="left:160.3px;top:871px;width:103.7px;height:21.5px;background:#3b4350;"></div>
<div style="left:160.3px;top:872.3px;width:103.7px;height:21.5px;line-height:21.5px;font-size:12px;color:#fff;text-align:center;white-space:nowrap;overflow:hidden;">OUTPUT 1</div>
<div style="left:160.8px;top:895px;width:103.2px;height:25.5px;background:#f9673c;"></div>
<div style="left:160.8px;top:896.8px;width:103.2px;height:25.5px;line-height:25.5px;font-size:12px;color:#3a0e04;text-align:center;white-space:nowrap;overflow:hidden;">BASS</div>
<div style="left:268px;top:488px;width:113px;height:436px;background:#2a2f38;"></div>
<div style="left:268px;top:488px;width:1.5px;height:436px;background:#171a20;"></div>
<div style="left:380px;top:488px;width:1px;height:436px;background:#1c2027;"></div>
<div style="left:269.5px;top:488px;width:110.5px;height:18px;background:#272c35;"></div>
<div style="left:269.5px;top:505.5px;width:110.5px;height:1px;background:#1a1d23;"></div>
<svg style="left:275px;top:493.5px;" width="9" height="10" viewBox="0 0 9 10"><path d="M0 0v10l9-5z" fill="#d7dbe0" stroke="none" stroke-width="1" /></svg>
<div style="left:287px;top:492px;width:50px;height:13px;line-height:13px;font-size:9px;color:#d7dbe0;text-align:left;white-space:nowrap;overflow:hidden;font-weight:bold;letter-spacing:0.3px;">LINK</div>
<div style="left:277.3px;top:512px;width:98px;height:18px;background:#263549;border:1px solid #4a6480;border-radius:2px;"></div>
<div style="left:326.3px;top:513px;width:17px;height:16px;background:linear-gradient(90deg,#2a465e,#3a7a98);"></div>
<div style="left:341.8px;top:514px;width:4px;height:14px;background:#2b9bc8;"></div>
<div style="left:277.3px;top:512px;width:98px;height:18px;line-height:18px;font-size:12.5px;color:#fff;text-align:center;white-space:nowrap;overflow:hidden;">R37</div>
<div style="left:360.8px;top:530.8px;width:13px;height:6px;background:#f2921e;border-radius:1px;"></div>
<svg style="left:282.3px;top:532px;" width="40" height="40" viewBox="0 0 40 40"><circle cx="20" cy="18.5" r="11.9" fill="#20242b" stroke="none" stroke-width="1" /><circle cx="20" cy="18.5" r="13.6" fill="none" stroke="#7b7e84" stroke-width="4" /><path d="M13.62 30.51 A13.6 13.6 0 0 1 20.00 4.90" fill="none" stroke="#2e8abb" stroke-width="4"/><text x="20" y="21.92" font-size="9.5" fill="#f2f2f2" text-anchor="middle" font-weight="normal" >0.0</text></svg>
<div style="left:333.3px;top:543px;width:42px;height:17.5px;background:#274a78;border:1px solid #3f6698;border-radius:2px;"></div>
<div style="left:333.3px;top:543px;width:40.5px;height:17.5px;line-height:17.5px;font-size:10.5px;color:#e8eef8;text-align:right;white-space:nowrap;overflow:hidden;letter-spacing:1px;">-8.7</div>
<div style="left:277.3px;top:572.5px;width:50px;height:242.5px;background:#14171c;border:1px solid #0d0f13;border-radius:2px;box-shadow:0 0 0 1px #303640;"></div>
<svg style="left:277.3px;top:572.5px;" width="50" height="242.5" viewBox="0 0 50 242.5"><rect x="3" y="8.2" width="9" height="1.4" fill="#c9ccd0" /><rect x="38" y="8.2" width="9" height="1.4" fill="#c9ccd0" /><text x="30" y="12.5" font-size="10" fill="#cfd2d6" text-anchor="end" font-weight="normal" letter-spacing="-0.3">6</text><rect x="3" y="27.56" width="9" height="1.4" fill="#c9ccd0" /><rect x="38" y="27.56" width="9" height="1.4" fill="#c9ccd0" /><text x="30" y="31.86" font-size="10" fill="#cfd2d6" text-anchor="end" font-weight="normal" letter-spacing="-0.3">0</text><rect x="3" y="46.92" width="9" height="1.4" fill="#c9ccd0" /><rect x="38" y="46.92" width="9" height="1.4" fill="#c9ccd0" /><text x="30" y="51.22" font-size="10" fill="#cfd2d6" text-anchor="end" font-weight="normal" letter-spacing="-0.3">-6</text><rect x="3" y="66.28" width="9" height="1.4" fill="#c9ccd0" /><rect x="38" y="66.28" width="9" height="1.4" fill="#c9ccd0" /><text x="30" y="70.58" font-size="10" fill="#cfd2d6" text-anchor="end" font-weight="normal" letter-spacing="-0.3">-12</text><rect x="3" y="85.64" width="9" height="1.4" fill="#c9ccd0" /><rect x="38" y="85.64" width="9" height="1.4" fill="#c9ccd0" /><text x="30" y="89.94" font-size="10" fill="#cfd2d6" text-anchor="end" font-weight="normal" letter-spacing="-0.3">-18</text><rect x="3" y="105" width="9" height="1.4" fill="#c9ccd0" /><rect x="38" y="105" width="9" height="1.4" fill="#c9ccd0" /><text x="30" y="109.3" font-size="10" fill="#cfd2d6" text-anchor="end" font-weight="normal" letter-spacing="-0.3">-24</text><rect x="3" y="124.36" width="9" height="1.4" fill="#c9ccd0" /><rect x="38" y="124.36" width="9" height="1.4" fill="#c9ccd0" /><text x="30" y="128.66" font-size="10" fill="#cfd2d6" text-anchor="end" font-weight="normal" letter-spacing="-0.3">-30</text><rect x="3" y="143.72" width="9" height="1.4" fill="#c9ccd0" /><rect x="38" y="143.72" width="9" height="1.4" fill="#c9ccd0" /><text x="30" y="148.02" font-size="10" fill="#cfd2d6" text-anchor="end" font-weight="normal" letter-spacing="-0.3">-36</text><rect x="3" y="163.08" width="9" height="1.4" fill="#c9ccd0" /><rect x="38" y="163.08" width="9" height="1.4" fill="#c9ccd0" /><text x="30" y="167.38" font-size="10" fill="#cfd2d6" text-anchor="end" font-weight="normal" letter-spacing="-0.3">-42</text><rect x="3" y="182.44" width="9" height="1.4" fill="#c9ccd0" /><rect x="38" y="182.44" width="9" height="1.4" fill="#c9ccd0" /><text x="30" y="186.74" font-size="10" fill="#cfd2d6" text-anchor="end" font-weight="normal" letter-spacing="-0.3">-48</text><rect x="3" y="201.8" width="9" height="1.4" fill="#c9ccd0" /><rect x="38" y="201.8" width="9" height="1.4" fill="#c9ccd0" /><text x="30" y="206.1" font-size="10" fill="#cfd2d6" text-anchor="end" font-weight="normal" letter-spacing="-0.3">-54</text><rect x="3" y="221.16" width="9" height="1.4" fill="#c9ccd0" /><rect x="38" y="221.16" width="9" height="1.4" fill="#c9ccd0" /><text x="30" y="225.46" font-size="10" fill="#cfd2d6" text-anchor="end" font-weight="normal" letter-spacing="-0.3">-60</text></svg>
<div style="left:280.3px;top:807px;width:44px;height:6px;background:#2a5487;"></div>
<div style="left:339px;top:578.5px;width:4.6px;height:230px;background:#111318;border-radius:1px;box-shadow:0 0 0 0.500px #252a32;"></div>
<svg style="left:345.3px;top:572.5px;" width="36" height="232" viewBox="0 0 36 232"><rect x="0" y="22.3" width="10" height="1.3" fill="#b9bcc0" /><text x="21.5" y="27.8" font-size="10" fill="#b9bcc0" text-anchor="middle" font-weight="normal" letter-spacing="-0.3">6</text><rect x="0" y="49.4" width="10" height="1.3" fill="#b9bcc0" /><text x="21.5" y="54.9" font-size="10" fill="#b9bcc0" text-anchor="middle" font-weight="normal" letter-spacing="-0.3">0</text><rect x="0" y="72.5" width="10" height="1.3" fill="#b9bcc0" /><text x="21.5" y="78" font-size="10" fill="#b9bcc0" text-anchor="middle" font-weight="normal" letter-spacing="-0.3">5</text><rect x="0" y="94.7" width="10" height="1.3" fill="#b9bcc0" /><text x="21.5" y="100.2" font-size="10" fill="#b9bcc0" text-anchor="middle" font-weight="normal" letter-spacing="-0.3">10</text><rect x="0" y="117.5" width="10" height="1.3" fill="#b9bcc0" /><text x="21.5" y="123" font-size="10" fill="#b9bcc0" text-anchor="middle" font-weight="normal" letter-spacing="-0.3">15</text><rect x="0" y="139.5" width="10" height="1.3" fill="#b9bcc0" /><text x="21.5" y="145" font-size="10" fill="#b9bcc0" text-anchor="middle" font-weight="normal" letter-spacing="-0.3">20</text><rect x="0" y="161.8" width="10" height="1.3" fill="#b9bcc0" /><text x="21.5" y="167.3" font-size="10" fill="#b9bcc0" text-anchor="middle" font-weight="normal" letter-spacing="-0.3">25</text><rect x="0" y="184" width="10" height="1.3" fill="#b9bcc0" /><text x="21.5" y="189.5" font-size="10" fill="#b9bcc0" text-anchor="middle" font-weight="normal" letter-spacing="-0.3">30</text><rect x="0" y="206.3" width="10" height="1.3" fill="#b9bcc0" /><text x="21.5" y="211.8" font-size="10" fill="#b9bcc0" text-anchor="middle" font-weight="normal" letter-spacing="-0.3">40</text><rect x="0" y="209.8" width="10" height="1.2" fill="#b9bcc0" /><rect x="0" y="216.9" width="10" height="1.2" fill="#b9bcc0" /><text x="22.5" y="222.5" font-size="9" fill="#b9bcc0" text-anchor="middle" font-weight="normal" >∞</text></svg>
<div style="left:331.1px;top:642px;width:20.5px;height:35px;background:linear-gradient(#4e4e4e 0%,#6e6e6e 6%,#cdcdcd 16%,#c0c0c0 30%,#8a8a8a 46%,#2e2e2e 49%,#2e2e2e 51%,#e0e0e0 56%,#c6c6c6 75%,#808080 93%,#454545 100%);border-radius:2px;box-shadow:0 1px 2px rgba(0,0,0,.6);"></div>
<div style="left:280.3px;top:820px;width:44px;height:12px;background:#484a4f;border:1px solid #585b61;border-radius:2px;"></div>
<div style="left:280.3px;top:820px;width:44px;height:12px;line-height:12px;font-size:8.5px;color:#888b91;text-align:center;white-space:nowrap;overflow:hidden;">RMS</div>
<div style="left:277.6px;top:837px;width:32.5px;height:15.9px;background:linear-gradient(#7c7c7c,#626262 45%,#505050 55%,#474747);border-radius:3px 0 0 0;box-shadow:inset 0 0 0 0.600px rgba(20,20,20,.55);"></div>
<div style="left:277.6px;top:837px;width:32.5px;height:15.9px;line-height:15.9px;font-size:12.5px;color:#202020;text-align:center;white-space:nowrap;overflow:hidden;font-weight:bold;">S</div>
<div style="left:310.1px;top:837px;width:32.5px;height:15.9px;background:linear-gradient(#7c7c7c,#626262 45%,#505050 55%,#474747);border-radius:0;box-shadow:inset 0 0 0 0.600px rgba(20,20,20,.55);"></div>
<div style="left:310.1px;top:837px;width:32.5px;height:15.9px;line-height:15.9px;font-size:12.5px;color:#202020;text-align:center;white-space:nowrap;overflow:hidden;font-weight:bold;">M</div>
<div style="left:342.6px;top:837px;width:32.5px;height:15.9px;background:linear-gradient(#7c7c7c,#626262 45%,#505050 55%,#474747);border-radius:0 3px 0 0;box-shadow:inset 0 0 0 0.600px rgba(20,20,20,.55);"></div>
<svg style="left:342.6px;top:837px;" width="32.5" height="15.9" viewBox="0 0 32.5 15.9"><circle cx="16.25" cy="8" r="4" fill="#262626" stroke="none" stroke-width="1" /></svg>
<div style="left:277.6px;top:852.9px;width:32.5px;height:15.9px;background:linear-gradient(#7c7c7c,#626262 45%,#505050 55%,#474747);border-radius:0 0 0 3px;box-shadow:inset 0 0 0 0.600px rgba(20,20,20,.55);"></div>
<div style="left:277.6px;top:852.9px;width:32.5px;height:15.9px;line-height:15.9px;font-size:12.5px;color:#202020;text-align:center;white-space:nowrap;overflow:hidden;font-weight:bold;font-family:'Liberation Serif',serif;">i</div>
<div style="left:310.1px;top:852.9px;width:32.5px;height:15.9px;background:linear-gradient(#f4727a,#e23440 50%,#d8222e 60%,#e8505a);border-radius:0;box-shadow:inset 0 0 0 0.600px rgba(20,20,20,.55);"></div>
<div style="left:310.1px;top:852.9px;width:32.5px;height:15.9px;line-height:15.9px;font-size:12.5px;color:#2a0a0c;text-align:center;white-space:nowrap;overflow:hidden;font-weight:bold;">R</div>
<div style="left:342.6px;top:852.9px;width:32.5px;height:15.9px;background:linear-gradient(#7c7c7c,#626262 45%,#505050 55%,#474747);border-radius:0 0 3px 0;box-shadow:inset 0 0 0 0.600px rgba(20,20,20,.55);"></div>
<div style="left:342.6px;top:852.9px;width:32.5px;height:15.9px;line-height:15.9px;font-size:12.5px;color:#202020;text-align:center;white-space:nowrap;overflow:hidden;font-weight:bold;">W</div>
<div style="left:273.3px;top:871px;width:103.7px;height:21.5px;background:#3b4350;"></div>
<div style="left:273.3px;top:872.3px;width:103.7px;height:21.5px;line-height:21.5px;font-size:12px;color:#fff;text-align:center;white-space:nowrap;overflow:hidden;">OUTPUT 1</div>
<div style="left:273.8px;top:895px;width:103.2px;height:25.5px;background:#fba444;"></div>
<div style="left:273.8px;top:896.8px;width:103.2px;height:25.5px;line-height:25.5px;font-size:12px;color:#3a1e04;text-align:center;white-space:nowrap;overflow:hidden;">AUDIO 1</div>
<div style="left:381px;top:488px;width:113px;height:436px;background:linear-gradient(90deg,#464d59,#4f5764 40%,#404752);"></div>
<div style="left:381px;top:488px;width:1.5px;height:436px;background:#171a20;"></div>
<div style="left:493px;top:488px;width:1px;height:436px;background:#1c2027;"></div>
<div style="left:382.5px;top:488px;width:110.5px;height:18px;background:#4c535f;"></div>
<div style="left:382.5px;top:505.5px;width:110.5px;height:1px;background:#1a1d23;"></div>
<svg style="left:388px;top:493.5px;" width="9" height="10" viewBox="0 0 9 10"><path d="M0 0v10l9-5z" fill="#d7dbe0" stroke="none" stroke-width="1" /></svg>
<div style="left:400px;top:492px;width:50px;height:13px;line-height:13px;font-size:9px;color:#d7dbe0;text-align:left;white-space:nowrap;overflow:hidden;font-weight:bold;letter-spacing:0.3px;">LINK</div>
<div style="left:390.3px;top:512px;width:98px;height:18px;background:#263549;border:1px solid #4a6480;border-radius:2px;"></div>
<div style="left:439.3px;top:513px;width:21px;height:16px;background:linear-gradient(90deg,#2a465e,#3a7a98);"></div>
<div style="left:458.8px;top:514px;width:4px;height:14px;background:#2b9bc8;"></div>
<div style="left:390.3px;top:512px;width:98px;height:18px;line-height:18px;font-size:12.5px;color:#fff;text-align:center;white-space:nowrap;overflow:hidden;">R46</div>
<div style="left:473.8px;top:530.8px;width:13px;height:6px;background:#f2921e;border-radius:1px;"></div>
<svg style="left:395.3px;top:532px;" width="40" height="40" viewBox="0 0 40 40"><circle cx="20" cy="18.5" r="11.9" fill="#20242b" stroke="none" stroke-width="1" /><circle cx="20" cy="18.5" r="13.6" fill="none" stroke="#7b7e84" stroke-width="4" /><path d="M13.62 30.51 A13.6 13.6 0 0 1 20.00 4.90" fill="none" stroke="#2e8abb" stroke-width="4"/><text x="20" y="21.92" font-size="9.5" fill="#f2f2f2" text-anchor="middle" font-weight="normal" >0.0</text></svg>
<div style="left:446.3px;top:543px;width:42px;height:17.5px;background:#274a78;border:1px solid #3f6698;border-radius:2px;"></div>
<div style="left:446.3px;top:543px;width:40.5px;height:17.5px;line-height:17.5px;font-size:10.5px;color:#e8eef8;text-align:right;white-space:nowrap;overflow:hidden;letter-spacing:1px;">-8.8</div>
<div style="left:390.3px;top:572.5px;width:50px;height:242.5px;background:#14171c;border:1px solid #0d0f13;border-radius:2px;box-shadow:0 0 0 1px #303640;"></div>
<svg style="left:390.3px;top:572.5px;" width="50" height="242.5" viewBox="0 0 50 242.5"><rect x="3" y="8.2" width="9" height="1.4" fill="#c9ccd0" /><rect x="38" y="8.2" width="9" height="1.4" fill="#c9ccd0" /><text x="30" y="12.5" font-size="10" fill="#cfd2d6" text-anchor="end" font-weight="normal" letter-spacing="-0.3">6</text><rect x="3" y="27.56" width="9" height="1.4" fill="#c9ccd0" /><rect x="38" y="27.56" width="9" height="1.4" fill="#c9ccd0" /><text x="30" y="31.86" font-size="10" fill="#cfd2d6" text-anchor="end" font-weight="normal" letter-spacing="-0.3">0</text><rect x="3" y="46.92" width="9" height="1.4" fill="#c9ccd0" /><rect x="38" y="46.92" width="9" height="1.4" fill="#c9ccd0" /><text x="30" y="51.22" font-size="10" fill="#cfd2d6" text-anchor="end" font-weight="normal" letter-spacing="-0.3">-6</text><rect x="3" y="66.28" width="9" height="1.4" fill="#c9ccd0" /><rect x="38" y="66.28" width="9" height="1.4" fill="#c9ccd0" /><text x="30" y="70.58" font-size="10" fill="#cfd2d6" text-anchor="end" font-weight="normal" letter-spacing="-0.3">-12</text><rect x="3" y="85.64" width="9" height="1.4" fill="#c9ccd0" /><rect x="38" y="85.64" width="9" height="1.4" fill="#c9ccd0" /><text x="30" y="89.94" font-size="10" fill="#cfd2d6" text-anchor="end" font-weight="normal" letter-spacing="-0.3">-18</text><rect x="3" y="105" width="9" height="1.4" fill="#c9ccd0" /><rect x="38" y="105" width="9" height="1.4" fill="#c9ccd0" /><text x="30" y="109.3" font-size="10" fill="#cfd2d6" text-anchor="end" font-weight="normal" letter-spacing="-0.3">-24</text><rect x="3" y="124.36" width="9" height="1.4" fill="#c9ccd0" /><rect x="38" y="124.36" width="9" height="1.4" fill="#c9ccd0" /><text x="30" y="128.66" font-size="10" fill="#cfd2d6" text-anchor="end" font-weight="normal" letter-spacing="-0.3">-30</text><rect x="3" y="143.72" width="9" height="1.4" fill="#c9ccd0" /><rect x="38" y="143.72" width="9" height="1.4" fill="#c9ccd0" /><text x="30" y="148.02" font-size="10" fill="#cfd2d6" text-anchor="end" font-weight="normal" letter-spacing="-0.3">-36</text><rect x="3" y="163.08" width="9" height="1.4" fill="#c9ccd0" /><rect x="38" y="163.08" width="9" height="1.4" fill="#c9ccd0" /><text x="30" y="167.38" font-size="10" fill="#cfd2d6" text-anchor="end" font-weight="normal" letter-spacing="-0.3">-42</text><rect x="3" y="182.44" width="9" height="1.4" fill="#c9ccd0" /><rect x="38" y="182.44" width="9" height="1.4" fill="#c9ccd0" /><text x="30" y="186.74" font-size="10" fill="#cfd2d6" text-anchor="end" font-weight="normal" letter-spacing="-0.3">-48</text><rect x="3" y="201.8" width="9" height="1.4" fill="#c9ccd0" /><rect x="38" y="201.8" width="9" height="1.4" fill="#c9ccd0" /><text x="30" y="206.1" font-size="10" fill="#cfd2d6" text-anchor="end" font-weight="normal" letter-spacing="-0.3">-54</text><rect x="3" y="221.16" width="9" height="1.4" fill="#c9ccd0" /><rect x="38" y="221.16" width="9" height="1.4" fill="#c9ccd0" /><text x="30" y="225.46" font-size="10" fill="#cfd2d6" text-anchor="end" font-weight="normal" letter-spacing="-0.3">-60</text></svg>
<div style="left:393.3px;top:807px;width:44px;height:6px;background:#2a5487;"></div>
<div style="left:452px;top:578.5px;width:4.6px;height:230px;background:#111318;border-radius:1px;box-shadow:0 0 0 0.500px #252a32;"></div>
<svg style="left:458.3px;top:572.5px;" width="36" height="232" viewBox="0 0 36 232"><rect x="0" y="22.3" width="10" height="1.3" fill="#b9bcc0" /><text x="21.5" y="27.8" font-size="10" fill="#b9bcc0" text-anchor="middle" font-weight="normal" letter-spacing="-0.3">6</text><rect x="0" y="49.4" width="10" height="1.3" fill="#b9bcc0" /><text x="21.5" y="54.9" font-size="10" fill="#b9bcc0" text-anchor="middle" font-weight="normal" letter-spacing="-0.3">0</text><rect x="0" y="72.5" width="10" height="1.3" fill="#b9bcc0" /><text x="21.5" y="78" font-size="10" fill="#b9bcc0" text-anchor="middle" font-weight="normal" letter-spacing="-0.3">5</text><rect x="0" y="94.7" width="10" height="1.3" fill="#b9bcc0" /><text x="21.5" y="100.2" font-size="10" fill="#b9bcc0" text-anchor="middle" font-weight="normal" letter-spacing="-0.3">10</text><rect x="0" y="117.5" width="10" height="1.3" fill="#b9bcc0" /><text x="21.5" y="123" font-size="10" fill="#b9bcc0" text-anchor="middle" font-weight="normal" letter-spacing="-0.3">15</text><rect x="0" y="139.5" width="10" height="1.3" fill="#b9bcc0" /><text x="21.5" y="145" font-size="10" fill="#b9bcc0" text-anchor="middle" font-weight="normal" letter-spacing="-0.3">20</text><rect x="0" y="161.8" width="10" height="1.3" fill="#b9bcc0" /><text x="21.5" y="167.3" font-size="10" fill="#b9bcc0" text-anchor="middle" font-weight="normal" letter-spacing="-0.3">25</text><rect x="0" y="184" width="10" height="1.3" fill="#b9bcc0" /><text x="21.5" y="189.5" font-size="10" fill="#b9bcc0" text-anchor="middle" font-weight="normal" letter-spacing="-0.3">30</text><rect x="0" y="206.3" width="10" height="1.3" fill="#b9bcc0" /><text x="21.5" y="211.8" font-size="10" fill="#b9bcc0" text-anchor="middle" font-weight="normal" letter-spacing="-0.3">40</text><rect x="0" y="209.8" width="10" height="1.2" fill="#b9bcc0" /><rect x="0" y="216.9" width="10" height="1.2" fill="#b9bcc0" /><text x="22.5" y="222.5" font-size="9" fill="#b9bcc0" text-anchor="middle" font-weight="normal" >∞</text></svg>
<div style="left:444.1px;top:644px;width:20.5px;height:35px;background:linear-gradient(#4e4e4e 0%,#6e6e6e 6%,#cdcdcd 16%,#c0c0c0 30%,#8a8a8a 46%,#2e2e2e 49%,#2e2e2e 51%,#e0e0e0 56%,#c6c6c6 75%,#808080 93%,#454545 100%);border-radius:2px;box-shadow:0 1px 2px rgba(0,0,0,.6);"></div>
<div style="left:393.3px;top:820px;width:44px;height:12px;background:#484a4f;border:1px solid #585b61;border-radius:2px;"></div>
<div style="left:393.3px;top:820px;width:44px;height:12px;line-height:12px;font-size:8.5px;color:#888b91;text-align:center;white-space:nowrap;overflow:hidden;">RMS</div>
<div style="left:390.6px;top:837px;width:32.5px;height:15.9px;background:linear-gradient(#7c7c7c,#626262 45%,#505050 55%,#474747);border-radius:3px 0 0 0;box-shadow:inset 0 0 0 0.600px rgba(20,20,20,.55);"></div>
<div style="left:390.6px;top:837px;width:32.5px;height:15.9px;line-height:15.9px;font-size:12.5px;color:#202020;text-align:center;white-space:nowrap;overflow:hidden;font-weight:bold;">S</div>
<div style="left:423.1px;top:837px;width:32.5px;height:15.9px;background:linear-gradient(#7c7c7c,#626262 45%,#505050 55%,#474747);border-radius:0;box-shadow:inset 0 0 0 0.600px rgba(20,20,20,.55);"></div>
<div style="left:423.1px;top:837px;width:32.5px;height:15.9px;line-height:15.9px;font-size:12.5px;color:#202020;text-align:center;white-space:nowrap;overflow:hidden;font-weight:bold;">M</div>
<div style="left:455.6px;top:837px;width:32.5px;height:15.9px;background:linear-gradient(#7c7c7c,#626262 45%,#505050 55%,#474747);border-radius:0 3px 0 0;box-shadow:inset 0 0 0 0.600px rgba(20,20,20,.55);"></div>
<svg style="left:455.6px;top:837px;" width="32.5" height="15.9" viewBox="0 0 32.5 15.9"><circle cx="16.25" cy="8" r="4" fill="#262626" stroke="none" stroke-width="1" /></svg>
<div style="left:390.6px;top:852.9px;width:32.5px;height:15.9px;background:linear-gradient(#7c7c7c,#626262 45%,#505050 55%,#474747);border-radius:0 0 0 3px;box-shadow:inset 0 0 0 0.600px rgba(20,20,20,.55);"></div>
<div style="left:390.6px;top:852.9px;width:32.5px;height:15.9px;line-height:15.9px;font-size:12.5px;color:#202020;text-align:center;white-space:nowrap;overflow:hidden;font-weight:bold;font-family:'Liberation Serif',serif;">i</div>
<div style="left:423.1px;top:852.9px;width:32.5px;height:15.9px;background:linear-gradient(#f4727a,#e23440 50%,#d8222e 60%,#e8505a);border-radius:0;box-shadow:inset 0 0 0 0.600px rgba(20,20,20,.55);"></div>
<div style="left:423.1px;top:852.9px;width:32.5px;height:15.9px;line-height:15.9px;font-size:12.5px;color:#2a0a0c;text-align:center;white-space:nowrap;overflow:hidden;font-weight:bold;">R</div>
<div style="left:455.6px;top:852.9px;width:32.5px;height:15.9px;background:linear-gradient(#7c7c7c,#626262 45%,#505050 55%,#474747);border-radius:0 0 3px 0;box-shadow:inset 0 0 0 0.600px rgba(20,20,20,.55);"></div>
<div style="left:455.6px;top:852.9px;width:32.5px;height:15.9px;line-height:15.9px;font-size:12.5px;color:#202020;text-align:center;white-space:nowrap;overflow:hidden;font-weight:bold;">W</div>
<div style="left:386.3px;top:871px;width:103.7px;height:21.5px;background:#3b4350;"></div>
<div style="left:386.3px;top:872.3px;width:103.7px;height:21.5px;line-height:21.5px;font-size:12px;color:#fff;text-align:center;white-space:nowrap;overflow:hidden;">OUTPUT 1</div>
<div style="left:386.8px;top:895px;width:103.2px;height:25.5px;background:#fb9a30;"></div>
<div style="left:386.8px;top:896.8px;width:103.2px;height:25.5px;line-height:25.5px;font-size:12px;color:#3a1a04;text-align:center;white-space:nowrap;overflow:hidden;">SYNTH</div>
<div style="left:494px;top:488px;width:113px;height:436px;background:#2a2f38;"></div>
<div style="left:494px;top:488px;width:1.5px;height:436px;background:#171a20;"></div>
<div style="left:606px;top:488px;width:1px;height:436px;background:#1c2027;"></div>
<div style="left:495.5px;top:488px;width:110.5px;height:18px;background:#272c35;"></div>
<div style="left:495.5px;top:505.5px;width:110.5px;height:1px;background:#1a1d23;"></div>
<svg style="left:501px;top:493.5px;" width="9" height="10" viewBox="0 0 9 10"><path d="M0 0v10l9-5z" fill="#d7dbe0" stroke="none" stroke-width="1" /></svg>
<div style="left:513px;top:492px;width:50px;height:13px;line-height:13px;font-size:9px;color:#d7dbe0;text-align:left;white-space:nowrap;overflow:hidden;font-weight:bold;letter-spacing:0.3px;">LINK</div>
<div style="left:503.3px;top:512px;width:98px;height:18px;background:#263549;border:1px solid #4a6480;border-radius:2px;"></div>
<div style="left:533.3px;top:513px;width:19px;height:16px;background:linear-gradient(270deg,#2a465e,#3a7a98);"></div>
<div style="left:531.8px;top:514px;width:4px;height:14px;background:#2b9bc8;"></div>
<div style="left:503.3px;top:512px;width:98px;height:18px;line-height:18px;font-size:12.5px;color:#fff;text-align:center;white-space:nowrap;overflow:hidden;">L41</div>
<div style="left:586.8px;top:530.8px;width:13px;height:6px;background:#f2921e;border-radius:1px;"></div>
<svg style="left:508.3px;top:532px;" width="40" height="40" viewBox="0 0 40 40"><circle cx="20" cy="18.5" r="11.9" fill="#20242b" stroke="none" stroke-width="1" /><circle cx="20" cy="18.5" r="13.6" fill="none" stroke="#7b7e84" stroke-width="4" /><path d="M13.62 30.51 A13.6 13.6 0 0 1 20.00 4.90" fill="none" stroke="#2e8abb" stroke-width="4"/><text x="20" y="21.56" font-size="8.5" fill="#f2f2f2" text-anchor="middle" font-weight="normal" >-2.4</text></svg>
<div style="left:559.3px;top:543px;width:42px;height:17.5px;background:#274a78;border:1px solid #3f6698;border-radius:2px;"></div>
<div style="left:559.3px;top:543px;width:40.5px;height:17.5px;line-height:17.5px;font-size:10.5px;color:#e8eef8;text-align:right;white-space:nowrap;overflow:hidden;letter-spacing:1px;">-1.8</div>
<div style="left:503.3px;top:572.5px;width:50px;height:242.5px;background:#14171c;border:1px solid #0d0f13;border-radius:2px;box-shadow:0 0 0 1px #303640;"></div>
<svg style="left:503.3px;top:572.5px;" width="50" height="242.5" viewBox="0 0 50 242.5"><rect x="3" y="8.2" width="9" height="1.4" fill="#c9ccd0" /><rect x="38" y="8.2" width="9" height="1.4" fill="#c9ccd0" /><text x="30" y="12.5" font-size="10" fill="#cfd2d6" text-anchor="end" font-weight="normal" letter-spacing="-0.3">6</text><rect x="3" y="27.56" width="9" height="1.4" fill="#c9ccd0" /><rect x="38" y="27.56" width="9" height="1.4" fill="#c9ccd0" /><text x="30" y="31.86" font-size="10" fill="#cfd2d6" text-anchor="end" font-weight="normal" letter-spacing="-0.3">0</text><rect x="3" y="46.92" width="9" height="1.4" fill="#c9ccd0" /><rect x="38" y="46.92" width="9" height="1.4" fill="#c9ccd0" /><text x="30" y="51.22" font-size="10" fill="#cfd2d6" text-anchor="end" font-weight="normal" letter-spacing="-0.3">-6</text><rect x="3" y="66.28" width="9" height="1.4" fill="#c9ccd0" /><rect x="38" y="66.28" width="9" height="1.4" fill="#c9ccd0" /><text x="30" y="70.58" font-size="10" fill="#cfd2d6" text-anchor="end" font-weight="normal" letter-spacing="-0.3">-12</text><rect x="3" y="85.64" width="9" height="1.4" fill="#c9ccd0" /><rect x="38" y="85.64" width="9" height="1.4" fill="#c9ccd0" /><text x="30" y="89.94" font-size="10" fill="#cfd2d6" text-anchor="end" font-weight="normal" letter-spacing="-0.3">-18</text><rect x="3" y="105" width="9" height="1.4" fill="#c9ccd0" /><rect x="38" y="105" width="9" height="1.4" fill="#c9ccd0" /><text x="30" y="109.3" font-size="10" fill="#cfd2d6" text-anchor="end" font-weight="normal" letter-spacing="-0.3">-24</text><rect x="3" y="124.36" width="9" height="1.4" fill="#c9ccd0" /><rect x="38" y="124.36" width="9" height="1.4" fill="#c9ccd0" /><text x="30" y="128.66" font-size="10" fill="#cfd2d6" text-anchor="end" font-weight="normal" letter-spacing="-0.3">-30</text><rect x="3" y="143.72" width="9" height="1.4" fill="#c9ccd0" /><rect x="38" y="143.72" width="9" height="1.4" fill="#c9ccd0" /><text x="30" y="148.02" font-size="10" fill="#cfd2d6" text-anchor="end" font-weight="normal" letter-spacing="-0.3">-36</text><rect x="3" y="163.08" width="9" height="1.4" fill="#c9ccd0" /><rect x="38" y="163.08" width="9" height="1.4" fill="#c9ccd0" /><text x="30" y="167.38" font-size="10" fill="#cfd2d6" text-anchor="end" font-weight="normal" letter-spacing="-0.3">-42</text><rect x="3" y="182.44" width="9" height="1.4" fill="#c9ccd0" /><rect x="38" y="182.44" width="9" height="1.4" fill="#c9ccd0" /><text x="30" y="186.74" font-size="10" fill="#cfd2d6" text-anchor="end" font-weight="normal" letter-spacing="-0.3">-48</text><rect x="3" y="201.8" width="9" height="1.4" fill="#c9ccd0" /><rect x="38" y="201.8" width="9" height="1.4" fill="#c9ccd0" /><text x="30" y="206.1" font-size="10" fill="#cfd2d6" text-anchor="end" font-weight="normal" letter-spacing="-0.3">-54</text><rect x="3" y="221.16" width="9" height="1.4" fill="#c9ccd0" /><rect x="38" y="221.16" width="9" height="1.4" fill="#c9ccd0" /><text x="30" y="225.46" font-size="10" fill="#cfd2d6" text-anchor="end" font-weight="normal" letter-spacing="-0.3">-60</text></svg>
<div style="left:506.3px;top:807px;width:44px;height:6px;background:#2a5487;"></div>
<div style="left:565px;top:578.5px;width:4.6px;height:230px;background:#111318;border-radius:1px;box-shadow:0 0 0 0.500px #252a32;"></div>
<svg style="left:571.3px;top:572.5px;" width="36" height="232" viewBox="0 0 36 232"><rect x="0" y="22.3" width="10" height="1.3" fill="#b9bcc0" /><text x="21.5" y="27.8" font-size="10" fill="#b9bcc0" text-anchor="middle" font-weight="normal" letter-spacing="-0.3">6</text><rect x="0" y="49.4" width="10" height="1.3" fill="#b9bcc0" /><text x="21.5" y="54.9" font-size="10" fill="#b9bcc0" text-anchor="middle" font-weight="normal" letter-spacing="-0.3">0</text><rect x="0" y="72.5" width="10" height="1.3" fill="#b9bcc0" /><text x="21.5" y="78" font-size="10" fill="#b9bcc0" text-anchor="middle" font-weight="normal" letter-spacing="-0.3">5</text><rect x="0" y="94.7" width="10" height="1.3" fill="#b9bcc0" /><text x="21.5" y="100.2" font-size="10" fill="#b9bcc0" text-anchor="middle" font-weight="normal" letter-spacing="-0.3">10</text><rect x="0" y="117.5" width="10" height="1.3" fill="#b9bcc0" /><text x="21.5" y="123" font-size="10" fill="#b9bcc0" text-anchor="middle" font-weight="normal" letter-spacing="-0.3">15</text><rect x="0" y="139.5" width="10" height="1.3" fill="#b9bcc0" /><text x="21.5" y="145" font-size="10" fill="#b9bcc0" text-anchor="middle" font-weight="normal" letter-spacing="-0.3">20</text><rect x="0" y="161.8" width="10" height="1.3" fill="#b9bcc0" /><text x="21.5" y="167.3" font-size="10" fill="#b9bcc0" text-anchor="middle" font-weight="normal" letter-spacing="-0.3">25</text><rect x="0" y="184" width="10" height="1.3" fill="#b9bcc0" /><text x="21.5" y="189.5" font-size="10" fill="#b9bcc0" text-anchor="middle" font-weight="normal" letter-spacing="-0.3">30</text><rect x="0" y="206.3" width="10" height="1.3" fill="#b9bcc0" /><text x="21.5" y="211.8" font-size="10" fill="#b9bcc0" text-anchor="middle" font-weight="normal" letter-spacing="-0.3">40</text><rect x="0" y="209.8" width="10" height="1.2" fill="#b9bcc0" /><rect x="0" y="216.9" width="10" height="1.2" fill="#b9bcc0" /><text x="22.5" y="222.5" font-size="9" fill="#b9bcc0" text-anchor="middle" font-weight="normal" >∞</text></svg>
<div style="left:557.1px;top:611px;width:20.5px;height:35px;background:linear-gradient(#4e4e4e 0%,#6e6e6e 6%,#cdcdcd 16%,#c0c0c0 30%,#8a8a8a 46%,#2e2e2e 49%,#2e2e2e 51%,#e0e0e0 56%,#c6c6c6 75%,#808080 93%,#454545 100%);border-radius:2px;box-shadow:0 1px 2px rgba(0,0,0,.6);"></div>
<div style="left:506.3px;top:820px;width:44px;height:12px;background:#484a4f;border:1px solid #585b61;border-radius:2px;"></div>
<div style="left:506.3px;top:820px;width:44px;height:12px;line-height:12px;font-size:8.5px;color:#888b91;text-align:center;white-space:nowrap;overflow:hidden;">RMS</div>
<div style="left:503.6px;top:837px;width:32.5px;height:15.9px;background:linear-gradient(#7c7c7c,#626262 45%,#505050 55%,#474747);border-radius:3px 0 0 0;box-shadow:inset 0 0 0 0.600px rgba(20,20,20,.55);"></div>
<div style="left:503.6px;top:837px;width:32.5px;height:15.9px;line-height:15.9px;font-size:12.5px;color:#202020;text-align:center;white-space:nowrap;overflow:hidden;font-weight:bold;">S</div>
<div style="left:536.1px;top:837px;width:32.5px;height:15.9px;background:linear-gradient(#7c7c7c,#626262 45%,#505050 55%,#474747);border-radius:0;box-shadow:inset 0 0 0 0.600px rgba(20,20,20,.55);"></div>
<div style="left:536.1px;top:837px;width:32.5px;height:15.9px;line-height:15.9px;font-size:12.5px;color:#202020;text-align:center;white-space:nowrap;overflow:hidden;font-weight:bold;">M</div>
<div style="left:568.6px;top:837px;width:32.5px;height:15.9px;background:linear-gradient(#7c7c7c,#626262 45%,#505050 55%,#474747);border-radius:0 3px 0 0;box-shadow:inset 0 0 0 0.600px rgba(20,20,20,.55);"></div>
<svg style="left:568.6px;top:837px;" width="32.5" height="15.9" viewBox="0 0 32.5 15.9"><circle cx="16.25" cy="8" r="4" fill="#262626" stroke="none" stroke-width="1" /></svg>
<div style="left:503.6px;top:852.9px;width:32.5px;height:15.9px;background:linear-gradient(#7c7c7c,#626262 45%,#505050 55%,#474747);border-radius:0 0 0 3px;box-shadow:inset 0 0 0 0.600px rgba(20,20,20,.55);"></div>
<div style="left:503.6px;top:852.9px;width:32.5px;height:15.9px;line-height:15.9px;font-size:12.5px;color:#202020;text-align:center;white-space:nowrap;overflow:hidden;font-weight:bold;font-family:'Liberation Serif',serif;">i</div>
<div style="left:536.1px;top:852.9px;width:32.5px;height:15.9px;background:linear-gradient(#f4727a,#e23440 50%,#d8222e 60%,#e8505a);border-radius:0;box-shadow:inset 0 0 0 0.600px rgba(20,20,20,.55);"></div>
<div style="left:536.1px;top:852.9px;width:32.5px;height:15.9px;line-height:15.9px;font-size:12.5px;color:#2a0a0c;text-align:center;white-space:nowrap;overflow:hidden;font-weight:bold;">R</div>
<div style="left:568.6px;top:852.9px;width:32.5px;height:15.9px;background:linear-gradient(#7c7c7c,#626262 45%,#505050 55%,#474747);border-radius:0 0 3px 0;box-shadow:inset 0 0 0 0.600px rgba(20,20,20,.55);"></div>
<div style="left:568.6px;top:852.9px;width:32.5px;height:15.9px;line-height:15.9px;font-size:12.5px;color:#202020;text-align:center;white-space:nowrap;overflow:hidden;font-weight:bold;">W</div>
<div style="left:499.3px;top:871px;width:103.7px;height:21.5px;background:#3b4350;"></div>
<div style="left:499.3px;top:872.3px;width:103.7px;height:21.5px;line-height:21.5px;font-size:12px;color:#fff;text-align:center;white-space:nowrap;overflow:hidden;">OUTPUT 1</div>
<div style="left:499.8px;top:895px;width:103.2px;height:25.5px;background:#ee4446;"></div>
<div style="left:499.8px;top:896.8px;width:103.2px;height:25.5px;line-height:25.5px;font-size:12px;color:#3a0608;text-align:center;white-space:nowrap;overflow:hidden;">GUITAR</div>
<div style="left:607px;top:488px;width:113px;height:436px;background:#2a2f38;"></div>
<div style="left:607px;top:488px;width:1.5px;height:436px;background:#171a20;"></div>
<div style="left:719px;top:488px;width:1px;height:436px;background:#1c2027;"></div>
<div style="left:608.5px;top:488px;width:110.5px;height:18px;background:#272c35;"></div>
<div style="left:608.5px;top:487.8px;width:110.5px;height:2px;background:#f2921e;"></div>
<div style="left:608.5px;top:505.5px;width:110.5px;height:1px;background:#1a1d23;"></div>
<svg style="left:614px;top:493.5px;" width="9" height="10" viewBox="0 0 9 10"><path d="M0 0v10l9-5z" fill="#d7dbe0" stroke="none" stroke-width="1" /></svg>
<div style="left:626px;top:492px;width:50px;height:13px;line-height:13px;font-size:9px;color:#d7dbe0;text-align:left;white-space:nowrap;overflow:hidden;font-weight:bold;letter-spacing:0.3px;">LINK</div>
<div style="left:616.3px;top:512px;width:98px;height:18px;background:#263549;border:1px solid #4a6480;border-radius:2px;"></div>
<div style="left:665.3px;top:513px;width:23px;height:16px;background:linear-gradient(90deg,#2a465e,#3a7a98);"></div>
<div style="left:686.8px;top:514px;width:4px;height:14px;background:#2b9bc8;"></div>
<div style="left:616.3px;top:512px;width:98px;height:18px;line-height:18px;font-size:12.5px;color:#fff;text-align:center;white-space:nowrap;overflow:hidden;">R50</div>
<div style="left:699.8px;top:530.8px;width:13px;height:6px;background:#f2921e;border-radius:1px;"></div>
<svg style="left:621.3px;top:532px;" width="40" height="40" viewBox="0 0 40 40"><circle cx="20" cy="18.5" r="11.9" fill="#20242b" stroke="none" stroke-width="1" /><circle cx="20" cy="18.5" r="13.6" fill="none" stroke="#7b7e84" stroke-width="4" /><path d="M13.62 30.51 A13.6 13.6 0 0 1 20.00 4.90" fill="none" stroke="#2e8abb" stroke-width="4"/><text x="20" y="21.92" font-size="9.5" fill="#f2f2f2" text-anchor="middle" font-weight="normal" >0.0</text></svg>
<div style="left:672.3px;top:543px;width:42px;height:17.5px;background:#274a78;border:1px solid #3f6698;border-radius:2px;"></div>
<div style="left:672.3px;top:543px;width:40.5px;height:17.5px;line-height:17.5px;font-size:10.5px;color:#e8eef8;text-align:right;white-space:nowrap;overflow:hidden;letter-spacing:1px;">-7.1</div>
<div style="left:616.3px;top:572.5px;width:50px;height:242.5px;background:#14171c;border:1px solid #0d0f13;border-radius:2px;box-shadow:0 0 0 1px #303640;"></div>
<svg style="left:616.3px;top:572.5px;" width="50" height="242.5" viewBox="0 0 50 242.5"><rect x="3" y="8.2" width="9" height="1.4" fill="#c9ccd0" /><rect x="38" y="8.2" width="9" height="1.4" fill="#c9ccd0" /><text x="30" y="12.5" font-size="10" fill="#cfd2d6" text-anchor="end" font-weight="normal" letter-spacing="-0.3">6</text><rect x="3" y="27.56" width="9" height="1.4" fill="#c9ccd0" /><rect x="38" y="27.56" width="9" height="1.4" fill="#c9ccd0" /><text x="30" y="31.86" font-size="10" fill="#cfd2d6" text-anchor="end" font-weight="normal" letter-spacing="-0.3">0</text><rect x="3" y="46.92" width="9" height="1.4" fill="#c9ccd0" /><rect x="38" y="46.92" width="9" height="1.4" fill="#c9ccd0" /><text x="30" y="51.22" font-size="10" fill="#cfd2d6" text-anchor="end" font-weight="normal" letter-spacing="-0.3">-6</text><rect x="3" y="66.28" width="9" height="1.4" fill="#c9ccd0" /><rect x="38" y="66.28" width="9" height="1.4" fill="#c9ccd0" /><text x="30" y="70.58" font-size="10" fill="#cfd2d6" text-anchor="end" font-weight="normal" letter-spacing="-0.3">-12</text><rect x="3" y="85.64" width="9" height="1.4" fill="#c9ccd0" /><rect x="38" y="85.64" width="9" height="1.4" fill="#c9ccd0" /><text x="30" y="89.94" font-size="10" fill="#cfd2d6" text-anchor="end" font-weight="normal" letter-spacing="-0.3">-18</text><rect x="3" y="105" width="9" height="1.4" fill="#c9ccd0" /><rect x="38" y="105" width="9" height="1.4" fill="#c9ccd0" /><text x="30" y="109.3" font-size="10" fill="#cfd2d6" text-anchor="end" font-weight="normal" letter-spacing="-0.3">-24</text><rect x="3" y="124.36" width="9" height="1.4" fill="#c9ccd0" /><rect x="38" y="124.36" width="9" height="1.4" fill="#c9ccd0" /><text x="30" y="128.66" font-size="10" fill="#cfd2d6" text-anchor="end" font-weight="normal" letter-spacing="-0.3">-30</text><rect x="3" y="143.72" width="9" height="1.4" fill="#c9ccd0" /><rect x="38" y="143.72" width="9" height="1.4" fill="#c9ccd0" /><text x="30" y="148.02" font-size="10" fill="#cfd2d6" text-anchor="end" font-weight="normal" letter-spacing="-0.3">-36</text><rect x="3" y="163.08" width="9" height="1.4" fill="#c9ccd0" /><rect x="38" y="163.08" width="9" height="1.4" fill="#c9ccd0" /><text x="30" y="167.38" font-size="10" fill="#cfd2d6" text-anchor="end" font-weight="normal" letter-spacing="-0.3">-42</text><rect x="3" y="182.44" width="9" height="1.4" fill="#c9ccd0" /><rect x="38" y="182.44" width="9" height="1.4" fill="#c9ccd0" /><text x="30" y="186.74" font-size="10" fill="#cfd2d6" text-anchor="end" font-weight="normal" letter-spacing="-0.3">-48</text><rect x="3" y="201.8" width="9" height="1.4" fill="#c9ccd0" /><rect x="38" y="201.8" width="9" height="1.4" fill="#c9ccd0" /><text x="30" y="206.1" font-size="10" fill="#cfd2d6" text-anchor="end" font-weight="normal" letter-spacing="-0.3">-54</text><rect x="3" y="221.16" width="9" height="1.4" fill="#c9ccd0" /><rect x="38" y="221.16" width="9" height="1.4" fill="#c9ccd0" /><text x="30" y="225.46" font-size="10" fill="#cfd2d6" text-anchor="end" font-weight="normal" letter-spacing="-0.3">-60</text></svg>
<div style="left:619.3px;top:807px;width:44px;height:6px;background:#2a5487;"></div>
<div style="left:678px;top:578.5px;width:4.6px;height:230px;background:#111318;border-radius:1px;box-shadow:0 0 0 0.500px #252a32;"></div>
<svg style="left:684.3px;top:572.5px;" width="36" height="232" viewBox="0 0 36 232"><rect x="0" y="22.3" width="10" height="1.3" fill="#b9bcc0" /><text x="21.5" y="27.8" font-size="10" fill="#b9bcc0" text-anchor="middle" font-weight="normal" letter-spacing="-0.3">6</text><rect x="0" y="49.4" width="10" height="1.3" fill="#b9bcc0" /><text x="21.5" y="54.9" font-size="10" fill="#b9bcc0" text-anchor="middle" font-weight="normal" letter-spacing="-0.3">0</text><rect x="0" y="72.5" width="10" height="1.3" fill="#b9bcc0" /><text x="21.5" y="78" font-size="10" fill="#b9bcc0" text-anchor="middle" font-weight="normal" letter-spacing="-0.3">5</text><rect x="0" y="94.7" width="10" height="1.3" fill="#b9bcc0" /><text x="21.5" y="100.2" font-size="10" fill="#b9bcc0" text-anchor="middle" font-weight="normal" letter-spacing="-0.3">10</text><rect x="0" y="117.5" width="10" height="1.3" fill="#b9bcc0" /><text x="21.5" y="123" font-size="10" fill="#b9bcc0" text-anchor="middle" font-weight="normal" letter-spacing="-0.3">15</text><rect x="0" y="139.5" width="10" height="1.3" fill="#b9bcc0" /><text x="21.5" y="145" font-size="10" fill="#b9bcc0" text-anchor="middle" font-weight="normal" letter-spacing="-0.3">20</text><rect x="0" y="161.8" width="10" height="1.3" fill="#b9bcc0" /><text x="21.5" y="167.3" font-size="10" fill="#b9bcc0" text-anchor="middle" font-weight="normal" letter-spacing="-0.3">25</text><rect x="0" y="184" width="10" height="1.3" fill="#b9bcc0" /><text x="21.5" y="189.5" font-size="10" fill="#b9bcc0" text-anchor="middle" font-weight="normal" letter-spacing="-0.3">30</text><rect x="0" y="206.3" width="10" height="1.3" fill="#b9bcc0" /><text x="21.5" y="211.8" font-size="10" fill="#b9bcc0" text-anchor="middle" font-weight="normal" letter-spacing="-0.3">40</text><rect x="0" y="209.8" width="10" height="1.2" fill="#b9bcc0" /><rect x="0" y="216.9" width="10" height="1.2" fill="#b9bcc0" /><text x="22.5" y="222.5" font-size="9" fill="#b9bcc0" text-anchor="middle" font-weight="normal" >∞</text></svg>
<div style="left:670.1px;top:635px;width:20.5px;height:35px;background:linear-gradient(#4e4e4e 0%,#6e6e6e 6%,#cdcdcd 16%,#c0c0c0 30%,#8a8a8a 46%,#2e2e2e 49%,#2e2e2e 51%,#e0e0e0 56%,#c6c6c6 75%,#808080 93%,#454545 100%);border-radius:2px;box-shadow:0 1px 2px rgba(0,0,0,.6);"></div>
<div style="left:619.3px;top:820px;width:44px;height:12px;background:#484a4f;border:1px solid #585b61;border-radius:2px;"></div>
<div style="left:619.3px;top:820px;width:44px;height:12px;line-height:12px;font-size:8.5px;color:#888b91;text-align:center;white-space:nowrap;overflow:hidden;">RMS</div>
<div style="left:616.6px;top:837px;width:32.5px;height:15.9px;background:linear-gradient(#7c7c7c,#626262 45%,#505050 55%,#474747);border-radius:3px 0 0 0;box-shadow:inset 0 0 0 0.600px rgba(20,20,20,.55);"></div>
<div style="left:616.6px;top:837px;width:32.5px;height:15.9px;line-height:15.9px;font-size:12.5px;color:#202020;text-align:center;white-space:nowrap;overflow:hidden;font-weight:bold;">S</div>
<div style="left:649.1px;top:837px;width:32.5px;height:15.9px;background:linear-gradient(#7c7c7c,#626262 45%,#505050 55%,#474747);border-radius:0;box-shadow:inset 0 0 0 0.600px rgba(20,20,20,.55);"></div>
<div style="left:649.1px;top:837px;width:32.5px;height:15.9px;line-height:15.9px;font-size:12.5px;color:#202020;text-align:center;white-space:nowrap;overflow:hidden;font-weight:bold;">M</div>
<div style="left:681.6px;top:837px;width:32.5px;height:15.9px;background:linear-gradient(#7c7c7c,#626262 45%,#505050 55%,#474747);border-radius:0 3px 0 0;box-shadow:inset 0 0 0 0.600px rgba(20,20,20,.55);"></div>
<svg style="left:681.6px;top:837px;" width="32.5" height="15.9" viewBox="0 0 32.5 15.9"><circle cx="16.25" cy="8" r="4" fill="#262626" stroke="none" stroke-width="1" /></svg>
<div style="left:616.6px;top:852.9px;width:32.5px;height:15.9px;background:linear-gradient(#7c7c7c,#626262 45%,#505050 55%,#474747);border-radius:0 0 0 3px;box-shadow:inset 0 0 0 0.600px rgba(20,20,20,.55);"></div>
<div style="left:616.6px;top:852.9px;width:32.5px;height:15.9px;line-height:15.9px;font-size:12.5px;color:#202020;text-align:center;white-space:nowrap;overflow:hidden;font-weight:bold;font-family:'Liberation Serif',serif;">i</div>
<div style="left:649.1px;top:852.9px;width:32.5px;height:15.9px;background:linear-gradient(#f4727a,#e23440 50%,#d8222e 60%,#e8505a);border-radius:0;box-shadow:inset 0 0 0 0.600px rgba(20,20,20,.55);"></div>
<div style="left:649.1px;top:852.9px;width:32.5px;height:15.9px;line-height:15.9px;font-size:12.5px;color:#2a0a0c;text-align:center;white-space:nowrap;overflow:hidden;font-weight:bold;">R</div>
<div style="left:681.6px;top:852.9px;width:32.5px;height:15.9px;background:linear-gradient(#7c7c7c,#626262 45%,#505050 55%,#474747);border-radius:0 0 3px 0;box-shadow:inset 0 0 0 0.600px rgba(20,20,20,.55);"></div>
<div style="left:681.6px;top:852.9px;width:32.5px;height:15.9px;line-height:15.9px;font-size:12.5px;color:#202020;text-align:center;white-space:nowrap;overflow:hidden;font-weight:bold;">W</div>
<div style="left:612.3px;top:871px;width:103.7px;height:21.5px;background:#3b4350;"></div>
<div style="left:612.3px;top:872.3px;width:103.7px;height:21.5px;line-height:21.5px;font-size:12px;color:#fff;text-align:center;white-space:nowrap;overflow:hidden;">OUTPUT 1</div>
<div style="left:612.8px;top:895px;width:103.2px;height:25.5px;background:#ff7ba8;"></div>
<div style="left:612.8px;top:896.8px;width:103.2px;height:25.5px;line-height:25.5px;font-size:12px;color:#4a0a20;text-align:center;white-space:nowrap;overflow:hidden;">GUITAR</div>
<div style="left:720px;top:488px;width:113px;height:436px;background:linear-gradient(90deg,#35241f,#3e2b25 50%,#35241f);"></div>
<div style="left:720px;top:488px;width:1.5px;height:436px;background:#171a20;"></div>
<div style="left:832px;top:488px;width:1px;height:436px;background:#1c2027;"></div>
<div style="left:721.5px;top:488px;width:110.5px;height:18px;background:#2e2220;"></div>
<div style="left:721.5px;top:505.5px;width:110.5px;height:1px;background:#1a1d23;"></div>
<svg style="left:727px;top:493.5px;" width="9" height="10" viewBox="0 0 9 10"><path d="M0 0v10l9-5z" fill="#d7dbe0" stroke="none" stroke-width="1" /></svg>
<div style="left:739px;top:492px;width:50px;height:13px;line-height:13px;font-size:9px;color:#d7dbe0;text-align:left;white-space:nowrap;overflow:hidden;font-weight:bold;letter-spacing:0.3px;">LINK</div>
<div style="left:729.3px;top:512px;width:98px;height:18px;background:#263549;border:1px solid #4a6480;border-radius:2px;"></div>
<div style="left:776.8px;top:514px;width:4px;height:14px;background:#2b9bc8;"></div>
<div style="left:729.3px;top:512px;width:98px;height:18px;line-height:18px;font-size:12.5px;color:#fff;text-align:center;white-space:nowrap;overflow:hidden;">C</div>
<div style="left:812.8px;top:530.8px;width:13px;height:6px;background:#f2921e;border-radius:1px;"></div>
<svg style="left:734.3px;top:532px;" width="40" height="40" viewBox="0 0 40 40"><circle cx="20" cy="18.5" r="11.9" fill="#20242b" stroke="none" stroke-width="1" /><circle cx="20" cy="18.5" r="13.6" fill="none" stroke="#7b7e84" stroke-width="4" /><path d="M13.62 30.51 A13.6 13.6 0 0 1 20.00 4.90" fill="none" stroke="#2e8abb" stroke-width="4"/><text x="20" y="21.92" font-size="9.5" fill="#f2f2f2" text-anchor="middle" font-weight="normal" >0.0</text></svg>
<div style="left:785.3px;top:543px;width:42px;height:17.5px;background:#274a78;border:1px solid #3f6698;border-radius:2px;"></div>
<div style="left:785.3px;top:543px;width:40.5px;height:17.5px;line-height:17.5px;font-size:10.5px;color:#e8eef8;text-align:right;white-space:nowrap;overflow:hidden;letter-spacing:1px;">-8.8</div>
<div style="left:729.3px;top:572.5px;width:50px;height:242.5px;background:#14171c;border:1px solid #0d0f13;border-radius:2px;box-shadow:0 0 0 1px #303640;"></div>
<svg style="left:729.3px;top:572.5px;" width="50" height="242.5" viewBox="0 0 50 242.5"><rect x="3" y="8.2" width="9" height="1.4" fill="#c9ccd0" /><rect x="38" y="8.2" width="9" height="1.4" fill="#c9ccd0" /><text x="30" y="12.5" font-size="10" fill="#cfd2d6" text-anchor="end" font-weight="normal" letter-spacing="-0.3">6</text><rect x="3" y="27.56" width="9" height="1.4" fill="#c9ccd0" /><rect x="38" y="27.56" width="9" height="1.4" fill="#c9ccd0" /><text x="30" y="31.86" font-size="10" fill="#cfd2d6" text-anchor="end" font-weight="normal" letter-spacing="-0.3">0</text><rect x="3" y="46.92" width="9" height="1.4" fill="#c9ccd0" /><rect x="38" y="46.92" width="9" height="1.4" fill="#c9ccd0" /><text x="30" y="51.22" font-size="10" fill="#cfd2d6" text-anchor="end" font-weight="normal" letter-spacing="-0.3">-6</text><rect x="3" y="66.28" width="9" height="1.4" fill="#c9ccd0" /><rect x="38" y="66.28" width="9" height="1.4" fill="#c9ccd0" /><text x="30" y="70.58" font-size="10" fill="#cfd2d6" text-anchor="end" font-weight="normal" letter-spacing="-0.3">-12</text><rect x="3" y="85.64" width="9" height="1.4" fill="#c9ccd0" /><rect x="38" y="85.64" width="9" height="1.4" fill="#c9ccd0" /><text x="30" y="89.94" font-size="10" fill="#cfd2d6" text-anchor="end" font-weight="normal" letter-spacing="-0.3">-18</text><rect x="3" y="105" width="9" height="1.4" fill="#c9ccd0" /><rect x="38" y="105" width="9" height="1.4" fill="#c9ccd0" /><text x="30" y="109.3" font-size="10" fill="#cfd2d6" text-anchor="end" font-weight="normal" letter-spacing="-0.3">-24</text><rect x="3" y="124.36" width="9" height="1.4" fill="#c9ccd0" /><rect x="38" y="124.36" width="9" height="1.4" fill="#c9ccd0" /><text x="30" y="128.66" font-size="10" fill="#cfd2d6" text-anchor="end" font-weight="normal" letter-spacing="-0.3">-30</text><rect x="3" y="143.72" width="9" height="1.4" fill="#c9ccd0" /><rect x="38" y="143.72" width="9" height="1.4" fill="#c9ccd0" /><text x="30" y="148.02" font-size="10" fill="#cfd2d6" text-anchor="end" font-weight="normal" letter-spacing="-0.3">-36</text><rect x="3" y="163.08" width="9" height="1.4" fill="#c9ccd0" /><rect x="38" y="163.08" width="9" height="1.4" fill="#c9ccd0" /><text x="30" y="167.38" font-size="10" fill="#cfd2d6" text-anchor="end" font-weight="normal" letter-spacing="-0.3">-42</text><rect x="3" y="182.44" width="9" height="1.4" fill="#c9ccd0" /><rect x="38" y="182.44" width="9" height="1.4" fill="#c9ccd0" /><text x="30" y="186.74" font-size="10" fill="#cfd2d6" text-anchor="end" font-weight="normal" letter-spacing="-0.3">-48</text><rect x="3" y="201.8" width="9" height="1.4" fill="#c9ccd0" /><rect x="38" y="201.8" width="9" height="1.4" fill="#c9ccd0" /><text x="30" y="206.1" font-size="10" fill="#cfd2d6" text-anchor="end" font-weight="normal" letter-spacing="-0.3">-54</text><rect x="3" y="221.16" width="9" height="1.4" fill="#c9ccd0" /><rect x="38" y="221.16" width="9" height="1.4" fill="#c9ccd0" /><text x="30" y="225.46" font-size="10" fill="#cfd2d6" text-anchor="end" font-weight="normal" letter-spacing="-0.3">-60</text></svg>
<div style="left:732.3px;top:807px;width:44px;height:6px;background:#2a5487;"></div>
<div style="left:791px;top:578.5px;width:4.6px;height:230px;background:#111318;border-radius:1px;box-shadow:0 0 0 0.500px #252a32;"></div>
<svg style="left:797.3px;top:572.5px;" width="36" height="232" viewBox="0 0 36 232"><rect x="0" y="22.3" width="10" height="1.3" fill="#b9bcc0" /><text x="21.5" y="27.8" font-size="10" fill="#b9bcc0" text-anchor="middle" font-weight="normal" letter-spacing="-0.3">6</text><rect x="0" y="49.4" width="10" height="1.3" fill="#b9bcc0" /><text x="21.5" y="54.9" font-size="10" fill="#b9bcc0" text-anchor="middle" font-weight="normal" letter-spacing="-0.3">0</text><rect x="0" y="72.5" width="10" height="1.3" fill="#b9bcc0" /><text x="21.5" y="78" font-size="10" fill="#b9bcc0" text-anchor="middle" font-weight="normal" letter-spacing="-0.3">5</text><rect x="0" y="94.7" width="10" height="1.3" fill="#b9bcc0" /><text x="21.5" y="100.2" font-size="10" fill="#b9bcc0" text-anchor="middle" font-weight="normal" letter-spacing="-0.3">10</text><rect x="0" y="117.5" width="10" height="1.3" fill="#b9bcc0" /><text x="21.5" y="123" font-size="10" fill="#b9bcc0" text-anchor="middle" font-weight="normal" letter-spacing="-0.3">15</text><rect x="0" y="139.5" width="10" height="1.3" fill="#b9bcc0" /><text x="21.5" y="145" font-size="10" fill="#b9bcc0" text-anchor="middle" font-weight="normal" letter-spacing="-0.3">20</text><rect x="0" y="161.8" width="10" height="1.3" fill="#b9bcc0" /><text x="21.5" y="167.3" font-size="10" fill="#b9bcc0" text-anchor="middle" font-weight="normal" letter-spacing="-0.3">25</text><rect x="0" y="184" width="10" height="1.3" fill="#b9bcc0" /><text x="21.5" y="189.5" font-size="10" fill="#b9bcc0" text-anchor="middle" font-weight="normal" letter-spacing="-0.3">30</text><rect x="0" y="206.3" width="10" height="1.3" fill="#b9bcc0" /><text x="21.5" y="211.8" font-size="10" fill="#b9bcc0" text-anchor="middle" font-weight="normal" letter-spacing="-0.3">40</text><rect x="0" y="209.8" width="10" height="1.2" fill="#b9bcc0" /><rect x="0" y="216.9" width="10" height="1.2" fill="#b9bcc0" /><text x="22.5" y="222.5" font-size="9" fill="#b9bcc0" text-anchor="middle" font-weight="normal" >∞</text></svg>
<div style="left:783.1px;top:642px;width:20.5px;height:35px;background:linear-gradient(#4e4e4e 0%,#6e6e6e 6%,#cdcdcd 16%,#c0c0c0 30%,#8a8a8a 46%,#2e2e2e 49%,#2e2e2e 51%,#e0e0e0 56%,#c6c6c6 75%,#808080 93%,#454545 100%);border-radius:2px;box-shadow:0 1px 2px rgba(0,0,0,.6);"></div>
<div style="left:732.3px;top:820px;width:44px;height:12px;background:#484a4f;border:1px solid #585b61;border-radius:2px;"></div>
<div style="left:732.3px;top:820px;width:44px;height:12px;line-height:12px;font-size:8.5px;color:#888b91;text-align:center;white-space:nowrap;overflow:hidden;">RMS</div>
<div style="left:729.6px;top:837px;width:32.5px;height:15.9px;background:linear-gradient(#7c7c7c,#626262 45%,#505050 55%,#474747);border-radius:3px 0 0 0;box-shadow:inset 0 0 0 0.600px rgba(20,20,20,.55);"></div>
<div style="left:729.6px;top:837px;width:32.5px;height:15.9px;line-height:15.9px;font-size:12.5px;color:#202020;text-align:center;white-space:nowrap;overflow:hidden;font-weight:bold;">S</div>
<div style="left:762.1px;top:837px;width:32.5px;height:15.9px;background:linear-gradient(#7c7c7c,#626262 45%,#505050 55%,#474747);border-radius:0;box-shadow:inset 0 0 0 0.600px rgba(20,20,20,.55);"></div>
<div style="left:762.1px;top:837px;width:32.5px;height:15.9px;line-height:15.9px;font-size:12.5px;color:#202020;text-align:center;white-space:nowrap;overflow:hidden;font-weight:bold;">M</div>
<div style="left:729.6px;top:852.9px;width:32.5px;height:15.9px;background:linear-gradient(#7c7c7c,#626262 45%,#505050 55%,#474747);border-radius:0 0 0 3px;box-shadow:inset 0 0 0 0.600px rgba(20,20,20,.55);"></div>
<div style="left:729.6px;top:852.9px;width:32.5px;height:15.9px;line-height:15.9px;font-size:12.5px;color:#202020;text-align:center;white-space:nowrap;overflow:hidden;font-weight:bold;font-family:'Liberation Serif',serif;">i</div>
<div style="left:762.1px;top:852.9px;width:32.5px;height:15.9px;background:linear-gradient(#f4727a,#e23440 50%,#d8222e 60%,#e8505a);border-radius:0;box-shadow:inset 0 0 0 0.600px rgba(20,20,20,.55);"></div>
<div style="left:762.1px;top:852.9px;width:32.5px;height:15.9px;line-height:15.9px;font-size:12.5px;color:#2a0a0c;text-align:center;white-space:nowrap;overflow:hidden;font-weight:bold;">R</div>
<div style="left:794.6px;top:852.9px;width:32.5px;height:15.9px;background:linear-gradient(#7c7c7c,#626262 45%,#505050 55%,#474747);border-radius:0 0 3px 0;box-shadow:inset 0 0 0 0.600px rgba(20,20,20,.55);"></div>
<div style="left:794.6px;top:852.9px;width:32.5px;height:15.9px;line-height:15.9px;font-size:12.5px;color:#202020;text-align:center;white-space:nowrap;overflow:hidden;font-weight:bold;">W</div>
<div style="left:725.3px;top:871px;width:103.7px;height:21.5px;background:#3b4350;"></div>
<div style="left:725.3px;top:872.3px;width:103.7px;height:21.5px;line-height:21.5px;font-size:12px;color:#fff;text-align:center;white-space:nowrap;overflow:hidden;">OUTPUT 1</div>
<div style="left:725.8px;top:895px;width:103.2px;height:25.5px;background:#c9c5c0;"></div>
<div style="left:725.8px;top:896.500px;width:103.2px;height:25px;font-size:11.500px;line-height:11.500px;color:#222;text-align:center;white-space:nowrap;overflow:hidden">Alpha_SSW9[1]<br>Alpha_SSW9 1</div>
<div style="left:833px;top:488px;width:113px;height:436px;background:linear-gradient(90deg,#35241f,#3e2b25 50%,#35241f);"></div>
<div style="left:833px;top:488px;width:1.5px;height:436px;background:#171a20;"></div>
<div style="left:945px;top:488px;width:1px;height:436px;background:#1c2027;"></div>
<div style="left:834.5px;top:488px;width:110.5px;height:18px;background:#2e2220;"></div>
<div style="left:834.5px;top:505.5px;width:110.5px;height:1px;background:#1a1d23;"></div>
<svg style="left:840px;top:493.5px;" width="9" height="10" viewBox="0 0 9 10"><path d="M0 0v10l9-5z" fill="#d7dbe0" stroke="none" stroke-width="1" /></svg>
<div style="left:852px;top:492px;width:50px;height:13px;line-height:13px;font-size:9px;color:#d7dbe0;text-align:left;white-space:nowrap;overflow:hidden;font-weight:bold;letter-spacing:0.3px;">LINK</div>
<div style="left:842.3px;top:512px;width:98px;height:18px;background:#263549;border:1px solid #4a6480;border-radius:2px;"></div>
<div style="left:891.3px;top:513px;width:22px;height:16px;background:linear-gradient(90deg,#2a465e,#3a7a98);"></div>
<div style="left:911.8px;top:514px;width:4px;height:14px;background:#2b9bc8;"></div>
<div style="left:842.3px;top:512px;width:98px;height:18px;line-height:18px;font-size:12.5px;color:#fff;text-align:center;white-space:nowrap;overflow:hidden;">R49</div>
<div style="left:925.8px;top:530.8px;width:13px;height:6px;background:#f2921e;border-radius:1px;"></div>
<svg style="left:847.3px;top:532px;" width="40" height="40" viewBox="0 0 40 40"><circle cx="20" cy="18.5" r="11.9" fill="#20242b" stroke="none" stroke-width="1" /><circle cx="20" cy="18.5" r="13.6" fill="none" stroke="#7b7e84" stroke-width="4" /><path d="M13.62 30.51 A13.6 13.6 0 0 1 20.00 4.90" fill="none" stroke="#2e8abb" stroke-width="4"/><text x="20" y="21.92" font-size="9.5" fill="#f2f2f2" text-anchor="middle" font-weight="normal" >0.0</text></svg>
<div style="left:898.3px;top:543px;width:42px;height:17.5px;background:#274a78;border:1px solid #3f6698;border-radius:2px;"></div>
<div style="left:898.3px;top:543px;width:40.5px;height:17.5px;line-height:17.5px;font-size:10.5px;color:#e8eef8;text-align:right;white-space:nowrap;overflow:hidden;letter-spacing:1px;">-11.3</div>
<div style="left:842.3px;top:572.5px;width:50px;height:242.5px;background:#14171c;border:1px solid #0d0f13;border-radius:2px;box-shadow:0 0 0 1px #303640;"></div>
<svg style="left:842.3px;top:572.5px;" width="50" height="242.5" viewBox="0 0 50 242.5"><rect x="3" y="8.2" width="9" height="1.4" fill="#c9ccd0" /><rect x="38" y="8.2" width="9" height="1.4" fill="#c9ccd0" /><text x="30" y="12.5" font-size="10" fill="#cfd2d6" text-anchor="end" font-weight="normal" letter-spacing="-0.3">6</text><rect x="3" y="27.56" width="9" height="1.4" fill="#c9ccd0" /><rect x="38" y="27.56" width="9" height="1.4" fill="#c9ccd0" /><text x="30" y="31.86" font-size="10" fill="#cfd2d6" text-anchor="end" font-weight="normal" letter-spacing="-0.3">0</text><rect x="3" y="46.92" width="9" height="1.4" fill="#c9ccd0" /><rect x="38" y="46.92" width="9" height="1.4" fill="#c9ccd0" /><text x="30" y="51.22" font-size="10" fill="#cfd2d6" text-anchor="end" font-weight="normal" letter-spacing="-0.3">-6</text><rect x="3" y="66.28" width="9" height="1.4" fill="#c9ccd0" /><rect x="38" y="66.28" width="9" height="1.4" fill="#c9ccd0" /><text x="30" y="70.58" font-size="10" fill="#cfd2d6" text-anchor="end" font-weight="normal" letter-spacing="-0.3">-12</text><rect x="3" y="85.64" width="9" height="1.4" fill="#c9ccd0" /><rect x="38" y="85.64" width="9" height="1.4" fill="#c9ccd0" /><text x="30" y="89.94" font-size="10" fill="#cfd2d6" text-anchor="end" font-weight="normal" letter-spacing="-0.3">-18</text><rect x="3" y="105" width="9" height="1.4" fill="#c9ccd0" /><rect x="38" y="105" width="9" height="1.4" fill="#c9ccd0" /><text x="30" y="109.3" font-size="10" fill="#cfd2d6" text-anchor="end" font-weight="normal" letter-spacing="-0.3">-24</text><rect x="3" y="124.36" width="9" height="1.4" fill="#c9ccd0" /><rect x="38" y="124.36" width="9" height="1.4" fill="#c9ccd0" /><text x="30" y="128.66" font-size="10" fill="#cfd2d6" text-anchor="end" font-weight="normal" letter-spacing="-0.3">-30</text><rect x="3" y="143.72" width="9" height="1.4" fill="#c9ccd0" /><rect x="38" y="143.72" width="9" height="1.4" fill="#c9ccd0" /><text x="30" y="148.02" font-size="10" fill="#cfd2d6" text-anchor="end" font-weight="normal" letter-spacing="-0.3">-36</text><rect x="3" y="163.08" width="9" height="1.4" fill="#c9ccd0" /><rect x="38" y="163.08" width="9" height="1.4" fill="#c9ccd0" /><text x="30" y="167.38" font-size="10" fill="#cfd2d6" text-anchor="end" font-weight="normal" letter-spacing="-0.3">-42</text><rect x="3" y="182.44" width="9" height="1.4" fill="#c9ccd0" /><rect x="38" y="182.44" width="9" height="1.4" fill="#c9ccd0" /><text x="30" y="186.74" font-size="10" fill="#cfd2d6" text-anchor="end" font-weight="normal" letter-spacing="-0.3">-48</text><rect x="3" y="201.8" width="9" height="1.4" fill="#c9ccd0" /><rect x="38" y="201.8" width="9" height="1.4" fill="#c9ccd0" /><text x="30" y="206.1" font-size="10" fill="#cfd2d6" text-anchor="end" font-weight="normal" letter-spacing="-0.3">-54</text><rect x="3" y="221.16" width="9" height="1.4" fill="#c9ccd0" /><rect x="38" y="221.16" width="9" height="1.4" fill="#c9ccd0" /><text x="30" y="225.46" font-size="10" fill="#cfd2d6" text-anchor="end" font-weight="normal" letter-spacing="-0.3">-60</text></svg>
<div style="left:845.3px;top:807px;width:44px;height:6px;background:#2a5487;"></div>
<div style="left:904px;top:578.5px;width:4.6px;height:230px;background:#111318;border-radius:1px;box-shadow:0 0 0 0.500px #252a32;"></div>
<svg style="left:910.3px;top:572.5px;" width="36" height="232" viewBox="0 0 36 232"><rect x="0" y="22.3" width="10" height="1.3" fill="#b9bcc0" /><text x="21.5" y="27.8" font-size="10" fill="#b9bcc0" text-anchor="middle" font-weight="normal" letter-spacing="-0.3">6</text><rect x="0" y="49.4" width="10" height="1.3" fill="#b9bcc0" /><text x="21.5" y="54.9" font-size="10" fill="#b9bcc0" text-anchor="middle" font-weight="normal" letter-spacing="-0.3">0</text><rect x="0" y="72.5" width="10" height="1.3" fill="#b9bcc0" /><text x="21.5" y="78" font-size="10" fill="#b9bcc0" text-anchor="middle" font-weight="normal" letter-spacing="-0.3">5</text><rect x="0" y="94.7" width="10" height="1.3" fill="#b9bcc0" /><text x="21.5" y="100.2" font-size="10" fill="#b9bcc0" text-anchor="middle" font-weight="normal" letter-spacing="-0.3">10</text><rect x="0" y="117.5" width="10" height="1.3" fill="#b9bcc0" /><text x="21.5" y="123" font-size="10" fill="#b9bcc0" text-anchor="middle" font-weight="normal" letter-spacing="-0.3">15</text><rect x="0" y="139.5" width="10" height="1.3" fill="#b9bcc0" /><text x="21.5" y="145" font-size="10" fill="#b9bcc0" text-anchor="middle" font-weight="normal" letter-spacing="-0.3">20</text><rect x="0" y="161.8" width="10" height="1.3" fill="#b9bcc0" /><text x="21.5" y="167.3" font-size="10" fill="#b9bcc0" text-anchor="middle" font-weight="normal" letter-spacing="-0.3">25</text><rect x="0" y="184" width="10" height="1.3" fill="#b9bcc0" /><text x="21.5" y="189.5" font-size="10" fill="#b9bcc0" text-anchor="middle" font-weight="normal" letter-spacing="-0.3">30</text><rect x="0" y="206.3" width="10" height="1.3" fill="#b9bcc0" /><text x="21.5" y="211.8" font-size="10" fill="#b9bcc0" text-anchor="middle" font-weight="normal" letter-spacing="-0.3">40</text><rect x="0" y="209.8" width="10" height="1.2" fill="#b9bcc0" /><rect x="0" y="216.9" width="10" height="1.2" fill="#b9bcc0" /><text x="22.5" y="222.5" font-size="9" fill="#b9bcc0" text-anchor="middle" font-weight="normal" >∞</text></svg>
<div style="left:896.1px;top:654px;width:20.5px;height:35px;background:linear-gradient(#4e4e4e 0%,#6e6e6e 6%,#cdcdcd 16%,#c0c0c0 30%,#8a8a8a 46%,#2e2e2e 49%,#2e2e2e 51%,#e0e0e0 56%,#c6c6c6 75%,#808080 93%,#454545 100%);border-radius:2px;box-shadow:0 1px 2px rgba(0,0,0,.6);"></div>
<div style="left:845.3px;top:820px;width:44px;height:12px;background:#484a4f;border:1px solid #585b61;border-radius:2px;"></div>
<div style="left:845.3px;top:820px;width:44px;height:12px;line-height:12px;font-size:8.5px;color:#888b91;text-align:center;white-space:nowrap;overflow:hidden;">RMS</div>
<div style="left:842.6px;top:837px;width:32.5px;height:15.9px;background:linear-gradient(#7c7c7c,#626262 45%,#505050 55%,#474747);border-radius:3px 0 0 0;box-shadow:inset 0 0 0 0.600px rgba(20,20,20,.55);"></div>
<div style="left:842.6px;top:837px;width:32.5px;height:15.9px;line-height:15.9px;font-size:12.5px;color:#202020;text-align:center;white-space:nowrap;overflow:hidden;font-weight:bold;">S</div>
<div style="left:875.1px;top:837px;width:32.5px;height:15.9px;background:linear-gradient(#7c7c7c,#626262 45%,#505050 55%,#474747);border-radius:0;box-shadow:inset 0 0 0 0.600px rgba(20,20,20,.55);"></div>
<div style="left:875.1px;top:837px;width:32.5px;height:15.9px;line-height:15.9px;font-size:12.5px;color:#202020;text-align:center;white-space:nowrap;overflow:hidden;font-weight:bold;">M</div>
<div style="left:842.6px;top:852.9px;width:32.5px;height:15.9px;background:linear-gradient(#7c7c7c,#626262 45%,#505050 55%,#474747);border-radius:0 0 0 3px;box-shadow:inset 0 0 0 0.600px rgba(20,20,20,.55);"></div>
<div style="left:842.6px;top:852.9px;width:32.5px;height:15.9px;line-height:15.9px;font-size:12.5px;color:#202020;text-align:center;white-space:nowrap;overflow:hidden;font-weight:bold;font-family:'Liberation Serif',serif;">i</div>
<div style="left:875.1px;top:852.9px;width:32.5px;height:15.9px;background:linear-gradient(#f4727a,#e23440 50%,#d8222e 60%,#e8505a);border-radius:0;box-shadow:inset 0 0 0 0.600px rgba(20,20,20,.55);"></div>
<div style="left:875.1px;top:852.9px;width:32.5px;height:15.9px;line-height:15.9px;font-size:12.5px;color:#2a0a0c;text-align:center;white-space:nowrap;overflow:hidden;font-weight:bold;">R</div>
<div style="left:907.6px;top:852.9px;width:32.5px;height:15.9px;background:linear-gradient(#7c7c7c,#626262 45%,#505050 55%,#474747);border-radius:0 0 3px 0;box-shadow:inset 0 0 0 0.600px rgba(20,20,20,.55);"></div>
<div style="left:907.6px;top:852.9px;width:32.5px;height:15.9px;line-height:15.9px;font-size:12.5px;color:#202020;text-align:center;white-space:nowrap;overflow:hidden;font-weight:bold;">W</div>
<div style="left:838.3px;top:871px;width:103.7px;height:21.5px;background:#3b4350;"></div>
<div style="left:838.3px;top:872.3px;width:103.7px;height:21.5px;line-height:21.5px;font-size:12px;color:#fff;text-align:center;white-space:nowrap;overflow:hidden;">OUTPUT 1</div>
<div style="left:838.8px;top:895px;width:103.2px;height:25.5px;background:#3de6f4;"></div>
<div style="left:838.8px;top:896.500px;width:103.2px;height:25px;font-size:11.500px;line-height:11.500px;color:#06303a;text-align:center;white-space:nowrap;overflow:hidden">CrX4_SSW10[2]<br>CrX4_SSW10 1</div>
<div style="left:946px;top:488px;width:15px;height:436px;background:#37261f;"></div>
<div style="left:946px;top:488px;width:1.5px;height:436px;background:#171a20;"></div>
<svg style="left:952px;top:493.5px;" width="9" height="10" viewBox="0 0 9 10"><path d="M0 0v10l9-5z" fill="#d7dbe0" stroke="none" stroke-width="1" /></svg>
<div style="left:954px;top:512px;width:7px;height:18px;background:#263549;border:1px solid #4a6480;border-right:none;"></div>
<div style="left:954px;top:572.5px;width:7px;height:242.5px;background:#14171c;"></div>
<svg style="left:954px;top:572.5px;" width="7" height="242.5" viewBox="0 0 7 242.5"><rect x="3" y="8.2" width="4" height="1.4" fill="#c9ccd0" /><rect x="3" y="27.56" width="4" height="1.4" fill="#c9ccd0" /><rect x="3" y="46.92" width="4" height="1.4" fill="#c9ccd0" /><rect x="3" y="66.28" width="4" height="1.4" fill="#c9ccd0" /><rect x="3" y="85.64" width="4" height="1.4" fill="#c9ccd0" /><rect x="3" y="105" width="4" height="1.4" fill="#c9ccd0" /><rect x="3" y="124.36" width="4" height="1.4" fill="#c9ccd0" /><rect x="3" y="143.72" width="4" height="1.4" fill="#c9ccd0" /><rect x="3" y="163.08" width="4" height="1.4" fill="#c9ccd0" /><rect x="3" y="182.44" width="4" height="1.4" fill="#c9ccd0" /><rect x="3" y="201.8" width="4" height="1.4" fill="#c9ccd0" /><rect x="3" y="221.16" width="4" height="1.4" fill="#c9ccd0" /></svg>
<div style="left:957px;top:807px;width:4px;height:6px;background:#2a5487;"></div>
<div style="left:954px;top:837px;width:7px;height:15.5px;background:linear-gradient(#767676,#484848);"></div>
<div style="left:954px;top:853px;width:7px;height:15.5px;background:linear-gradient(#767676,#484848);"></div>
<div style="left:949.5px;top:871px;width:11.5px;height:21.5px;background:#3b4350;"></div>
<div style="left:950px;top:895px;width:11px;height:25.5px;background:#fb9a30;"></div>
<div style="left:962.5px;top:488px;width:3.5px;height:444px;background:#4a525e;"></div>
<div style="left:155px;top:924px;width:807.5px;height:8px;background:#1d2128;"></div>
<div style="left:155px;top:924px;width:412.5px;height:8px;background:#515d6c;"></div>
<div style="left:155px;top:924px;width:18px;height:8px;background:#46505e;"></div>
<svg style="left:155px;top:924px;" width="18" height="8" viewBox="0 0 18 8"><path d="M10 1.200l-3.500 2.800 3.500 2.800" fill="none" stroke="#e0e4e8" stroke-width="1.4" /></svg>
<svg style="left:946px;top:924px;" width="16" height="8" viewBox="0 0 16 8"><path d="M6 1.200l3.500 2.800-3.500 2.800" fill="none" stroke="#e0e4e8" stroke-width="1.4" /></svg>
<div style="left:131px;top:934px;width:86px;height:21.5px;"><svg width="86" height="21.5" viewBox="0 0 86 21.5" style="left:0;top:0"><path d="M0 0h86 l-5 18.5 q-1 2 -3 2 h-64 q-2 0 -3 -2z" fill="#3a424e" stroke="#4a5360" stroke-width="1"/></svg></div>
<div class="jp" style="left:134px;top:934.5px;width:62px;height:18.5px;line-height:18.5px;font-size:10px;color:#fff;text-align:center;white-space:nowrap;overflow:hidden;font-weight:bold;letter-spacing:-0.3px;overflow:visible;">ミキサー2</div>
<div style="left:196px;top:938px;width:13px;height:13px;background:#323943;border:1px solid #5b6470;"></div>
<svg style="left:196px;top:938px;" width="13" height="13" viewBox="0 0 13 13"><path d="M3.500 3.500l6 6M9.500 3.500l-6 6" fill="none" stroke="#6c7580" stroke-width="1.6" /></svg>
<div style="left:975px;top:480.5px;width:724px;height:482.5px;background:#262b35;border:2px solid #8b99a8;border-radius:4px;box-shadow:inset 0 0 0 4px #444d59;"></div>
<div style="left:981px;top:511.5px;width:712px;height:1.5px;background:#353c48;"></div>
<div style="left:981px;top:538.5px;width:712px;height:1.5px;background:#353c48;"></div>
<div class="tb bb" style="left:989px;top:487px;width:24px;height:24px"><svg width="24" height="24" viewBox="0 0 24 24"><line x1="6.5" y1="5" x2="6.5" y2="19" stroke="currentColor" stroke-width="1.3" stroke-dasharray="1.5 1"/><line x1="10" y1="5" x2="10" y2="19" stroke="currentColor" stroke-width="1.3" stroke-dasharray="1.5 1"/><line x1="13.5" y1="5" x2="13.5" y2="19" stroke="currentColor" stroke-width="1.3" stroke-dasharray="1.5 1"/><line x1="17" y1="5" x2="17" y2="19" stroke="currentColor" stroke-width="1.3" stroke-dasharray="1.5 1"/></svg></div>
<div class="tb bl" style="left:1015px;top:487px;width:24px;height:24px"><svg width="24" height="24" viewBox="0 0 24 24"><line x1="6.5" y1="5" x2="6.5" y2="14" stroke="currentColor" stroke-width="1.3" stroke-dasharray="1.5 1"/><line x1="10" y1="5" x2="10" y2="14" stroke="currentColor" stroke-width="1.3" stroke-dasharray="1.5 1"/><line x1="13.5" y1="5" x2="13.5" y2="14" stroke="currentColor" stroke-width="1.3" stroke-dasharray="1.5 1"/><line x1="17" y1="5" x2="17" y2="14" stroke="currentColor" stroke-width="1.3" stroke-dasharray="1.5 1"/><path d="M6 16.500h8v-2l3 2.800-3 2.800v-2h-8z" fill="currentColor" stroke="none" stroke-width="1" /><line x1="18" y1="13.5" x2="18" y2="20" stroke="currentColor" stroke-width="1.3" /></svg></div>
<div class="tb bb" style="left:1049px;top:487px;width:24px;height:24px"><svg width="24" height="24" viewBox="0 0 24 24"><rect x="11.5" y="5.5" width="1.3" height="12.5" fill="currentColor" /><ellipse cx="9.8" cy="18" rx="2.2" ry="1.6" fill="currentColor" transform="rotate(-20 9.8 18)"/><rect x="12.5" y="5.5" width="2.2" height="1.2" fill="currentColor" /></svg></div>
<div class="tb bl" style="left:1075px;top:487px;width:24px;height:24px"><svg width="24" height="24" viewBox="0 0 24 24"><rect x="12" y="5.5" width="1.2" height="12.5" fill="currentColor" /><ellipse cx="10.3" cy="18" rx="2.2" ry="1.6" fill="currentColor" transform="rotate(-20 10.3 18)"/><path d="M13.200 5.5c2.200 0.800 3.200 2 2.400 4.300 0-1.500-1-2.200-2.400-2.500z" fill="currentColor" stroke="none" stroke-width="1" /></svg></div>
<div class="tb bl" style="left:1101px;top:487px;width:24px;height:24px"><svg width="24" height="24" viewBox="0 0 24 24"><rect x="12" y="5.5" width="1.2" height="12.5" fill="currentColor" /><ellipse cx="10.3" cy="18" rx="2.2" ry="1.6" fill="currentColor" transform="rotate(-20 10.3 18)"/><path d="M13.200 5.5c2.200 0.800 3.200 2 2.400 4.300 0-1.500-1-2.200-2.400-2.500z" fill="currentColor" stroke="none" stroke-width="1" /><path d="M13.200 7.8c2.200 0.800 3.200 2 2.400 4.300 0-1.500-1-2.200-2.400-2.500z" fill="currentColor" stroke="none" stroke-width="1" /></svg></div>
<div class="tb bl" style="left:1127px;top:487px;width:24px;height:24px"><svg width="24" height="24" viewBox="0 0 24 24"><rect x="12" y="5.5" width="1.2" height="12.5" fill="currentColor" /><ellipse cx="10.3" cy="18" rx="2.2" ry="1.6" fill="currentColor" transform="rotate(-20 10.3 18)"/><path d="M13.200 5.5c2.200 0.800 3.200 2 2.400 4.300 0-1.500-1-2.200-2.400-2.500z" fill="currentColor" stroke="none" stroke-width="1" /><path d="M13.200 7.8c2.200 0.800 3.200 2 2.400 4.300 0-1.500-1-2.200-2.400-2.500z" fill="currentColor" stroke="none" stroke-width="1" /><path d="M13.200 10.1c2.200 0.800 3.200 2 2.400 4.300 0-1.500-1-2.200-2.400-2.500z" fill="currentColor" stroke="none" stroke-width="1" /></svg></div>
<div class="tb bl" style="left:1153px;top:487px;width:24px;height:24px"><svg width="24" height="24" viewBox="0 0 24 24"><text x="12" y="13" font-size="11.5" fill="currentColor" text-anchor="middle" font-weight="bold" >3</text><path d="M5.500 19.500v-2.500h13v2.500" fill="none" stroke="currentColor" stroke-width="1.3" /></svg></div>
<div class="tb bl" style="left:1187px;top:487px;width:24px;height:24px"><svg width="24" height="24" viewBox="0 0 24 24"><path d="M6 7.500h9a3 3 0 0 1 0 6h-9M7 16.500h10" fill="none" stroke="currentColor" stroke-width="1.5" /><path d="M9 11l-3.500 2.500 3.500 2.500zM15 14l3.500 2.500-3.500 2.500z" fill="currentColor" stroke="none" stroke-width="1" /></svg></div>
<div class="tb bb" style="left:1213px;top:487px;width:24px;height:24px"><svg width="24" height="24" viewBox="0 0 24 24"><line x1="5.5" y1="5" x2="5.5" y2="19" stroke="currentColor" stroke-width="1.3" stroke-dasharray="1.5 1"/><line x1="18.5" y1="5" x2="18.5" y2="19" stroke="currentColor" stroke-width="1.3" stroke-dasharray="1.5 1"/><path d="M7 12l3-2.500v1.800h4v-1.800l3 2.500-3 2.500v-1.800h-4v1.800z" fill="currentColor" stroke="none" stroke-width="1" /></svg></div>
<div class="tb bl" style="left:989px;top:513.5px;width:24px;height:24px"><svg width="24" height="24" viewBox="0 0 24 24"><text x="7" y="13" font-size="11" fill="currentColor" text-anchor="middle" font-weight="bold" >*</text><ellipse cx="13.5" cy="17" rx="2.28" ry="1.9" fill="currentColor" transform="rotate(-20 13.5 17)"/><rect x="14.58" y="7" width="1.3" height="10" fill="currentColor" /><path d="M15.8 7.0 c2 1.5 3.5 3 2.5 6 c0 -2 -1 -3 -2.5 -3.5z" fill="currentColor" stroke="none" stroke-width="1" /></svg></div>
<div class="tb bd" style="left:1023px;top:513.5px;width:24px;height:24px"><svg width="24" height="24" viewBox="0 0 24 24"><path d="M6 6l5 11M10 6l5 11M14 6l4 9" fill="none" stroke="currentColor" stroke-width="1.4" /></svg></div>
<div class="tb bd" style="left:1049px;top:513.5px;width:24px;height:24px"><svg width="24" height="24" viewBox="0 0 24 24"><path d="M6 6l5 11M10 6l5 11M14 6l4 9" fill="none" stroke="currentColor" stroke-width="1.4" /></svg></div>
<div class="tb bd" style="left:1075px;top:513.5px;width:24px;height:24px"><svg width="24" height="24" viewBox="0 0 24 24"><path d="M6 6l5 11M10 6l5 11M14 6l4 9" fill="none" stroke="currentColor" stroke-width="1.4" /></svg></div>
<div class="tb bd" style="left:1109px;top:513.5px;width:24px;height:24px"><svg width="24" height="24" viewBox="0 0 24 24"><ellipse cx="8" cy="11" rx="1.8" ry="1.5" fill="currentColor" transform="rotate(-20 8 11)"/><rect x="8.6" y="5" width="1.3" height="6" fill="currentColor" /><ellipse cx="15" cy="11" rx="1.8" ry="1.5" fill="currentColor" transform="rotate(-20 15 11)"/><rect x="15.6" y="5" width="1.3" height="6" fill="currentColor" /><path d="M6 15c2 4 10 4 12 0" fill="none" stroke="currentColor" stroke-width="1.2" /></svg></div>
<div class="tb bd" style="left:1135px;top:513.5px;width:24px;height:24px"><svg width="24" height="24" viewBox="0 0 24 24"><ellipse cx="8" cy="11" rx="1.8" ry="1.5" fill="currentColor" transform="rotate(-20 8 11)"/><rect x="8.6" y="5" width="1.3" height="6" fill="currentColor" /><rect x="12" y="14.5" width="7" height="1.3" fill="currentColor" /><rect x="14.85" y="11.7" width="1.3" height="7" fill="currentColor" /></svg></div>
<div class="tb bd" style="left:1161px;top:513.5px;width:24px;height:24px"><svg width="24" height="24" viewBox="0 0 24 24"><ellipse cx="8" cy="11" rx="1.8" ry="1.5" fill="currentColor" transform="rotate(-20 8 11)"/><rect x="8.6" y="5" width="1.3" height="6" fill="currentColor" /><rect x="12" y="14.5" width="7" height="1.3" fill="currentColor" /></svg></div>
<div class="tb bd" style="left:1187px;top:513.5px;width:24px;height:24px"><svg width="24" height="24" viewBox="0 0 24 24"><rect x="6" y="8" width="3" height="1.2" fill="currentColor" /><rect x="6" y="11" width="3" height="1.2" fill="currentColor" /><rect x="6" y="14" width="3" height="1.2" fill="currentColor" /><rect x="6" y="17" width="3" height="1.2" fill="currentColor" /><rect x="9" y="5" width="1.2" height="13" fill="currentColor" /><path d="M15 5l3 4h-2.300v9h-1.400v-9h-2.300z" fill="currentColor" stroke="none" stroke-width="1" /></svg></div>
<div class="tb bd" style="left:1213px;top:513.5px;width:24px;height:24px"><svg width="24" height="24" viewBox="0 0 24 24"><rect x="6" y="8" width="3" height="1.2" fill="currentColor" /><rect x="6" y="11" width="3" height="1.2" fill="currentColor" /><rect x="6" y="14" width="3" height="1.2" fill="currentColor" /><rect x="6" y="17" width="3" height="1.2" fill="currentColor" /><rect x="9" y="5" width="1.2" height="13" fill="currentColor" /><path d="M15 19l3-4h-2.300v-9h-1.400v9h-2.300z" fill="currentColor" stroke="none" stroke-width="1" /></svg></div>
<div class="tb bd" style="left:1239px;top:513.5px;width:24px;height:24px"><svg width="24" height="24" viewBox="0 0 24 24"><ellipse cx="8" cy="13" rx="1.8" ry="1.5" fill="currentColor" transform="rotate(-20 8 13)"/><rect x="8.6" y="6" width="1.3" height="7" fill="currentColor" /><path d="M15.500 5l2.500 3.500h-1.800v7h1.800l-2.500 3.500-2.500-3.500h1.800v-7h-1.800z" fill="currentColor" stroke="none" stroke-width="1" /></svg></div>
<div class="tb bd" style="left:1265px;top:513.5px;width:24px;height:24px"><svg width="24" height="24" viewBox="0 0 24 24"><ellipse cx="8" cy="13" rx="1.8" ry="1.5" fill="currentColor" transform="rotate(-20 8 13)"/><rect x="8.6" y="6" width="1.3" height="7" fill="currentColor" /><path d="M15.500 5l2.500 3.500h-1.800v7h1.800l-2.500 3.500-2.500-3.500h1.800v-7h-1.800z" fill="currentColor" stroke="none" stroke-width="1" /></svg></div>
<div class="tb bl" style="left:1299px;top:513.5px;width:24px;height:24px"><svg width="24" height="24" viewBox="0 0 24 24"><path d="M12 4.500c-3.500 0-5.500 2.500-5.500 5.500 0 3.500 3.500 6 5.500 9.500 2-3.500 5.500-6 5.500-9.500 0-3-2-5.500-5.500-5.500z" fill="currentColor" stroke="none" stroke-width="1" /><circle cx="12" cy="10" r="2.2" fill="#cfcfcf" stroke="none" stroke-width="1" /></svg></div>
<div class="tb bb" style="left:1325px;top:513.5px;width:24px;height:24px"><svg width="24" height="24" viewBox="0 0 24 24"><line x1="6.5" y1="5" x2="6.5" y2="19" stroke="currentColor" stroke-width="1.4" /><path d="M9 11.300h6v-2.300l4 3-4 3v-2.300h-6z" fill="currentColor" stroke="none" stroke-width="1" /></svg></div>
<div class="tb bb" style="left:1351px;top:513.5px;width:24px;height:24px"><svg width="24" height="24" viewBox="0 0 24 24"><ellipse cx="7.5" cy="11" rx="1.68" ry="1.4" fill="currentColor" transform="rotate(-20 7.5 11)"/><rect x="7.98" y="5" width="1.3" height="6" fill="currentColor" /><path d="M12 11.500h2.500l3.500-3.500v9l-3.500-3.500h-2.500z" fill="currentColor" stroke="none" stroke-width="1" /><line x1="19" y1="7" x2="13" y2="18" stroke="currentColor" stroke-width="1.1" /></svg></div>
<div class="tb bd" style="left:1385px;top:513.5px;width:24px;height:24px"><svg width="24" height="24" viewBox="0 0 24 24"><text x="8.5" y="13" font-size="10.5" fill="currentColor" text-anchor="middle" font-weight="bold" style="font-family:'Liberation Serif',serif">i</text><ellipse cx="14" cy="17" rx="1.92" ry="1.6" fill="currentColor" transform="rotate(-20 14 17)"/><rect x="14.72" y="8" width="1.3" height="9" fill="currentColor" /><path d="M15.9 8.0 c2 1.5 3.5 3 2.5 6 c0 -2 -1 -3 -2.5 -3.5z" fill="currentColor" stroke="none" stroke-width="1" /></svg></div>
<div class="tb bd" style="left:1411px;top:513.5px;width:24px;height:24px"><svg width="24" height="24" viewBox="0 0 24 24"><text x="8.5" y="13" font-size="10.5" fill="currentColor" text-anchor="middle" font-weight="bold" style="font-family:'Liberation Serif',serif">i</text><text x="15" y="18.5" font-size="11" fill="currentColor" text-anchor="middle" font-weight="bold" style="font-family:'Liberation Serif',serif;font-style:italic">p</text></svg></div>
<div class="tb bl" style="left:1437px;top:513.5px;width:24px;height:24px"><svg width="24" height="24" viewBox="0 0 24 24"><path d="M5.500 5.500h13v13h-13z" fill="none" stroke="currentColor" stroke-width="1.5" /><ellipse cx="11" cy="15.5" rx="1.92" ry="1.6" fill="currentColor" transform="rotate(-20 11 15.5)"/><rect x="11.72" y="7.5" width="1.3" height="8" fill="currentColor" /><rect x="12.5" y="7.5" width="3" height="1.2" fill="currentColor" /></svg></div>
<div class="tb bb" style="left:989px;top:540.5px;width:24px;height:24px"><svg width="24" height="24" viewBox="0 0 24 24"><path d="M8.2 5.2 L8.2 16.9 L11.1 14.3 L13.1 18.9 L15.2 17.9 L13.1 13.5 L16.8 13.5Z" fill="currentColor" stroke="none" stroke-width="1" /></svg></div>
<div class="tb bl" style="left:1015px;top:540.5px;width:24px;height:24px"><svg width="24" height="24" viewBox="0 0 24 24"><path d="M5.500 5.500l2-1 9 9.500-2 2z" fill="currentColor" stroke="none" stroke-width="1" /><path d="M12.500 17l5-5 1 1-5 5z" fill="currentColor" stroke="none" stroke-width="1" /><path d="M16 16l3.500 3.500" fill="none" stroke="currentColor" stroke-width="1.8" /></svg></div>
<div class="tb bl" style="left:1049px;top:540.5px;width:24px;height:24px"><svg width="24" height="24" viewBox="0 0 24 24"><path d="M4.500 5.500h10v4" fill="none" stroke="currentColor" stroke-width="1.1" stroke-dasharray="2 1"/><path d="M4.500 5.500v5h5" fill="none" stroke="currentColor" stroke-width="1.1" stroke-dasharray="2 1"/><path d="M14.0 10.3 L14.0 17.9 L15.9 16.2 L17.2 19.2 L18.6 18.6 L17.2 15.7 L19.6 15.7Z" fill="currentColor" stroke="none" stroke-width="1" /></svg></div>
<div class="tb bl" style="left:1075px;top:540.5px;width:24px;height:24px"><svg width="24" height="24" viewBox="0 0 24 24"><ellipse cx="7.5" cy="14" rx="2.04" ry="1.7" fill="currentColor" transform="rotate(-20 7.5 14)"/><rect x="8.34" y="5" width="1.3" height="9" fill="currentColor" /><path d="M14.0 10.5 L14.0 18.1 L15.9 16.4 L17.2 19.4 L18.6 18.8 L17.2 15.9 L19.6 15.9Z" fill="currentColor" stroke="none" stroke-width="1" /></svg></div>
<div class="tb bl" style="left:1101px;top:540.5px;width:24px;height:24px"><svg width="24" height="24" viewBox="0 0 24 24"><path d="M16 4.500l3.500 3.500-9.500 9.500-3.500-3.500z" fill="none" stroke="currentColor" stroke-width="1.2" /><path d="M6 14.500l3.500 3.500-5 1.500z" fill="currentColor" stroke="none" stroke-width="1" /><line x1="8" y1="15.5" x2="17" y2="6.5" stroke="currentColor" stroke-width="0.8" /></svg></div>
<div class="tb bl" style="left:1127px;top:540.5px;width:24px;height:24px"><svg width="24" height="24" viewBox="0 0 24 24"><path d="M4.500 11l5.500-5.500 4 4-5.500 5.500z" fill="currentColor" stroke="none" stroke-width="1" /><path d="M5.500 11l2-2 3 3-2 2z" fill="#777" stroke="none" stroke-width="1" /><path d="M14.0 11.0 L14.0 18.6 L15.9 16.9 L17.2 19.9 L18.6 19.3 L17.2 16.4 L19.6 16.4Z" fill="currentColor" stroke="none" stroke-width="1" /></svg></div>
<div class="tb bl" style="left:1153px;top:540.5px;width:24px;height:24px"><svg width="24" height="24" viewBox="0 0 24 24"><path d="M4.500 9.500h2.500l3.500-3.500v10l-3.500-3.500h-2.500z" fill="currentColor" stroke="none" stroke-width="1" /><line x1="12.5" y1="5.5" x2="6" y2="17" stroke="currentColor" stroke-width="1.1" /><path d="M14.5 10.5 L14.5 18.1 L16.4 16.4 L17.7 19.4 L19.1 18.8 L17.7 15.9 L20.1 15.9Z" fill="currentColor" stroke="none" stroke-width="1" /></svg></div>
<div class="tb bl" style="left:1179px;top:540.5px;width:24px;height:24px"><svg width="24" height="24" viewBox="0 0 24 24"><rect x="5" y="5" width="12" height="1.3" fill="currentColor" /><rect x="5" y="5" width="1.5" height="6.5" fill="currentColor" /><rect x="7.4" y="5" width="1.5" height="6.5" fill="currentColor" /><rect x="9.8" y="5" width="1.5" height="6.5" fill="currentColor" /><rect x="12.2" y="5" width="1.5" height="6.5" fill="currentColor" /><rect x="14.6" y="5" width="1.5" height="6.5" fill="currentColor" /><rect x="17" y="5" width="1.5" height="6.5" fill="currentColor" /><path d="M5 11.500h9" fill="none" stroke="currentColor" stroke-width="1" /><path d="M14.0 11.0 L14.0 18.6 L15.9 16.9 L17.2 19.9 L18.6 19.3 L17.2 16.4 L19.6 16.4Z" fill="currentColor" stroke="none" stroke-width="1" /></svg></div>
<div class="tb bl" style="left:1214px;top:540.5px;width:24px;height:24px"><svg width="24" height="24" viewBox="0 0 24 24"><path d="M5 9.500L10.500 4.500V7.500H18V18.500H7V15.500H15V10.800H10.500V14.500Z" fill="currentColor" stroke="none" stroke-width="1" /></svg></div>
<div class="tb bd" style="left:1251px;top:540.5px;width:24px;height:24px"><svg width="24" height="24" viewBox="0 0 24 24"><path d="M19 9.500L13.500 4.500V7.500H6V18.500H17V15.500H9V10.800H13.500V14.500Z" fill="currentColor" stroke="none" stroke-width="1" /></svg></div>
<div class="tb bd" style="left:1296px;top:540.5px;width:24px;height:24px"><svg width="24" height="24" viewBox="0 0 24 24"><path d="M10 4l2.500 9M14 4l-2.500 9" fill="none" stroke="currentColor" stroke-width="1.6" /><circle cx="8.5" cy="16.5" r="2.3" fill="none" stroke="currentColor" stroke-width="1.4" /><circle cx="15.5" cy="16.5" r="2.3" fill="none" stroke="currentColor" stroke-width="1.4" /><path d="M12 12l-2.500 3M12 12l2.500 3" fill="none" stroke="currentColor" stroke-width="1.4" /></svg></div>
<div class="tb bd" style="left:1322px;top:540.5px;width:24px;height:24px"><svg width="24" height="24" viewBox="0 0 24 24"><path d="M6 5h5v2h-3v9h-2z" fill="currentColor" stroke="none" stroke-width="1" /><path d="M9.500 8h5l3 3v8h-8z" fill="currentColor" stroke="none" stroke-width="1" /></svg></div>
<div class="tb bd" style="left:1348px;top:540.5px;width:24px;height:24px"><svg width="24" height="24" viewBox="0 0 24 24"><path d="M6 9c0-5 12-5 12 0v1.500h-12z" fill="currentColor" stroke="none" stroke-width="1" /><rect x="8" y="10.5" width="2.5" height="8" fill="currentColor" /><rect x="13.5" y="10.5" width="2.5" height="8" fill="currentColor" /><rect x="8" y="17" width="8" height="1.5" fill="currentColor" /></svg></div>
<div class="tb bd" style="left:1374px;top:540.5px;width:24px;height:24px"><svg width="24" height="24" viewBox="0 0 24 24"><path d="M6 5.500h10v3h-7v7h-3z" fill="none" stroke="currentColor" stroke-width="1.2" /><rect x="10" y="10" width="8.5" height="8.5" fill="currentColor" /><rect x="6" y="12.5" width="5" height="6" fill="currentColor" /></svg></div>
<div class="tb bd" style="left:1400px;top:540.5px;width:24px;height:24px"><svg width="24" height="24" viewBox="0 0 24 24"><path d="M6 13l7-7 4.500 4.500-7 7z" fill="currentColor" stroke="none" stroke-width="1" /><path d="M7.500 13l2.500-2.500 3.500 3.500-2.500 2.500z" fill="#666" stroke="none" stroke-width="1" /><line x1="5" y1="19.5" x2="19" y2="19.5" stroke="currentColor" stroke-width="1.4" /></svg></div>
<div class="tb bl" style="left:1433px;top:540.5px;width:24px;height:24px"><svg width="24" height="24" viewBox="0 0 24 24"><circle cx="12" cy="12" r="6.5" fill="#222" stroke="none" stroke-width="1" /><ellipse cx="11" cy="14" rx="1.68" ry="1.4" fill="#ccc" transform="rotate(-20 11 14)"/><rect x="11.48" y="8" width="1.3" height="6" fill="#ccc" /><path d="M12.7 8.0 c2 1.5 3.5 3 2.5 6 c0 -2 -1 -3 -2.5 -3.5z" fill="#ccc" stroke="none" stroke-width="1" /></svg></div>
<div class="tb bl" style="left:1467px;top:540.5px;width:24px;height:24px"><svg width="24" height="24" viewBox="0 0 24 24"><path d="M11 5h8v8l-2.800-2.800-3.200 3.200-2.400-2.400 3.200-3.200z" fill="currentColor" stroke="none" stroke-width="1" /><path d="M13 19h-8v-8l2.800 2.800 3.200-3.200 2.400 2.400-3.200 3.200z" fill="currentColor" stroke="none" stroke-width="1" /></svg></div>
<div class="tb bl" style="left:1239px;top:540.5px;width:10px;height:24px"><svg width="10" height="24" viewBox="0 0 10 24"><path d="M2 9.500h6l-3 3.500z" fill="currentColor" stroke="none" stroke-width="1" /></svg></div>
<div class="tb bd" style="left:1276px;top:540.5px;width:10px;height:24px"><svg width="10" height="24" viewBox="0 0 10 24"><path d="M2 9.500h6l-3 3.500z" fill="currentColor" stroke="none" stroke-width="1" /></svg></div>
<div style="left:981px;top:566.5px;width:712px;height:2px;background:#15181e;"></div>
<div style="left:983px;top:573px;width:118px;height:362px;background:#262b35;"></div>
<div style="left:983px;top:573px;width:118px;height:12px;background:#0e1014;"></div>
<div style="left:983px;top:573px;width:55.5px;height:12px;background:#262b35;"></div>
<div style="left:983px;top:573px;width:55.5px;height:12px;line-height:12px;font-size:9.5px;color:#fff;text-align:center;white-space:nowrap;overflow:hidden;font-weight:bold;">Track</div>
<div style="left:1040px;top:574px;width:54px;height:11px;background:#555b65;"></div>
<div style="left:1040px;top:573.5px;width:54px;height:12px;line-height:12px;font-size:9.5px;color:#8d939c;text-align:center;white-space:nowrap;overflow:hidden;font-weight:bold;">Mixer</div>
<div style="left:983px;top:585px;width:118px;height:17px;background:#4d545f;"></div>
<div style="left:983px;top:585px;width:9px;height:16.3px;background:#a9c2c2;"></div>
<div style="left:992px;top:585px;width:30px;height:16.3px;background:#b6e4f3;"></div>
<div style="left:1023px;top:584.5px;width:78px;height:17px;line-height:17px;font-size:12px;color:#fff;text-align:left;white-space:nowrap;overflow:hidden;letter-spacing:-0.250px;">Marker</div>
<div style="left:983px;top:602px;width:118px;height:17px;background:#4d545f;"></div>
<div style="left:983px;top:602px;width:9px;height:16.3px;background:#a9c2c2;"></div>
<div style="left:992px;top:602px;width:30px;height:16.3px;background:#b6e4f3;"></div>
<div style="left:1023px;top:601.5px;width:78px;height:17px;line-height:17px;font-size:12px;color:#fff;text-align:left;white-space:nowrap;overflow:hidden;letter-spacing:-0.250px;">Tempo</div>
<div style="left:983px;top:619px;width:118px;height:17px;background:#4d545f;"></div>
<div style="left:983px;top:619px;width:9px;height:16.3px;background:#a9c2c2;"></div>
<div style="left:992px;top:619px;width:30px;height:16.3px;background:#b6e4f3;"></div>
<div style="left:1023px;top:618.5px;width:78px;height:17px;line-height:17px;font-size:12px;color:#fff;text-align:left;white-space:nowrap;overflow:hidden;letter-spacing:-0.250px;">Chord</div>
<div style="left:983px;top:636px;width:118px;height:17px;background:#4d545f;"></div>
<div style="left:983px;top:636px;width:9px;height:16.3px;background:#a9c2c2;"></div>
<div style="left:992px;top:636px;width:30px;height:16.3px;background:#b6e4f3;"></div>
<div style="left:1023px;top:635.5px;width:78px;height:17px;line-height:17px;font-size:12px;color:#fff;text-align:left;white-space:nowrap;overflow:hidden;letter-spacing:-0.250px;">Tone</div>
<div style="left:983px;top:653px;width:118px;height:17px;background:#4d545f;"></div>
<div style="left:983px;top:653px;width:9px;height:16.3px;background:#a9c2c2;"></div>
<div style="left:992px;top:653px;width:30px;height:16.3px;background:#b6e4f3;"></div>
<div style="left:1023px;top:652.5px;width:78px;height:17px;line-height:17px;font-size:12px;color:#fff;text-align:left;white-space:nowrap;overflow:hidden;letter-spacing:-0.250px;">Exclusive/RPN</div>
<div style="left:983px;top:670px;width:118px;height:17px;background:#4d545f;"></div>
<div style="left:983px;top:670px;width:9px;height:16.3px;background:#a9c2c2;"></div>
<div style="left:992px;top:670px;width:30px;height:16.3px;background:#b6e4f3;"></div>
<div style="left:1023px;top:669.5px;width:78px;height:17px;line-height:17px;font-size:12px;color:#fff;text-align:left;white-space:nowrap;overflow:hidden;letter-spacing:-0.250px;">ScoreMark</div>
<div style="left:983px;top:687px;width:118px;height:17px;background:#4d545f;"></div>
<div style="left:983px;top:687px;width:9px;height:16.3px;background:#a9c2c2;"></div>
<div style="left:992px;top:687px;width:30px;height:16.3px;background:#b6e4f3;"></div>
<div style="left:1023px;top:686.5px;width:78px;height:17px;line-height:17px;font-size:12px;color:#fff;text-align:left;white-space:nowrap;overflow:hidden;letter-spacing:-0.250px;">Lyric</div>
<div style="left:983px;top:704px;width:9px;height:17px;background:#3fe0f2;"></div>
<svg style="left:983px;top:704px;" width="42" height="17" viewBox="0 0 42 17"><circle cx="14.5" cy="8.5" r="4.1" fill="#d2d4d6" stroke="none" stroke-width="1" /><rect x="20.2" y="4.3" width="2.8" height="8.4" fill="#d2d4d6" /><rect x="23.9" y="4.3" width="2.8" height="8.4" fill="#d2d4d6" /><rect x="27.6" y="4.3" width="2.8" height="8.4" fill="#d2d4d6" /><path d="M31.600 4v9l7-4.500z" fill="#d2d4d6" stroke="none" stroke-width="1" /></svg>
<div style="left:1030px;top:703.5px;width:71px;height:17px;line-height:17px;font-size:12px;color:#fff;text-align:left;white-space:nowrap;overflow:hidden;letter-spacing:-0.350px;">1:SYNTH[Melo</div>
<div style="left:1021px;top:721px;width:80px;height:17px;background:#3f4651;"></div>
<div style="left:983px;top:721px;width:9px;height:17px;background:#4c9af0;"></div>
<svg style="left:983px;top:721px;" width="42" height="17" viewBox="0 0 42 17"><circle cx="14.5" cy="8.5" r="4.1" fill="#d2d4d6" stroke="none" stroke-width="1" /><rect x="20.2" y="4.3" width="2.8" height="8.4" fill="#d2d4d6" /><rect x="23.9" y="4.3" width="2.8" height="8.4" fill="#d2d4d6" /><rect x="27.6" y="4.3" width="2.8" height="8.4" fill="#d2d4d6" /><path d="M31.600 4v9l7-4.500z" fill="#d2d4d6" stroke="none" stroke-width="1" /></svg>
<div style="left:1030px;top:720.5px;width:71px;height:17px;line-height:17px;font-size:12px;color:#fff;text-align:left;white-space:nowrap;overflow:hidden;letter-spacing:-0.350px;">2:Syn bass(TAB</div>
<div style="left:983px;top:738px;width:9px;height:17px;background:#8a78f2;"></div>
<svg style="left:983px;top:738px;" width="42" height="17" viewBox="0 0 42 17"><circle cx="14.5" cy="8.5" r="4.1" fill="#d2d4d6" stroke="none" stroke-width="1" /><rect x="20.2" y="4.3" width="2.8" height="8.4" fill="#d2d4d6" /><rect x="23.9" y="4.3" width="2.8" height="8.4" fill="#d2d4d6" /><rect x="27.6" y="4.3" width="2.8" height="8.4" fill="#d2d4d6" /><path d="M31.600 4v9l7-4.500z" fill="#d2d4d6" stroke="none" stroke-width="1" /></svg>
<div style="left:1030px;top:737.5px;width:71px;height:17px;line-height:17px;font-size:12px;color:#fff;text-align:left;white-space:nowrap;overflow:hidden;letter-spacing:-0.350px;">3:LEAD[Ac1]</div>
<div style="left:983px;top:755px;width:9px;height:17px;background:#6c86ba;"></div>
<svg style="left:983px;top:755px;" width="42" height="17" viewBox="0 0 42 17"><circle cx="14.5" cy="8.5" r="4.1" fill="#d2d4d6" stroke="none" stroke-width="1" /><rect x="20.2" y="4.3" width="2.8" height="8.4" fill="#d2d4d6" /><rect x="23.9" y="4.3" width="2.8" height="8.4" fill="#d2d4d6" /><rect x="27.6" y="4.3" width="2.8" height="8.4" fill="#d2d4d6" /><path d="M31.600 4v9l7-4.500z" fill="#d2d4d6" stroke="none" stroke-width="1" /></svg>
<div style="left:1030px;top:754.5px;width:71px;height:17px;line-height:17px;font-size:12px;color:#fff;text-align:left;white-space:nowrap;overflow:hidden;letter-spacing:-0.350px;">4:E Piano[Ac2]</div>
<div style="left:983px;top:772px;width:9px;height:17px;background:#569c9c;"></div>
<svg style="left:983px;top:772px;" width="42" height="17" viewBox="0 0 42 17"><circle cx="14.5" cy="8.5" r="4.1" fill="#d2d4d6" stroke="none" stroke-width="1" /><rect x="20.2" y="4.3" width="2.8" height="8.4" fill="#d2d4d6" /><rect x="23.9" y="4.3" width="2.8" height="8.4" fill="#d2d4d6" /><rect x="27.6" y="4.3" width="2.8" height="8.4" fill="#d2d4d6" /><path d="M31.600 4v9l7-4.500z" fill="#d2d4d6" stroke="none" stroke-width="1" /></svg>
<div style="left:1030px;top:771.5px;width:71px;height:17px;line-height:17px;font-size:12px;color:#fff;text-align:left;white-space:nowrap;overflow:hidden;letter-spacing:-0.350px;">5:Piano[Obli1]</div>
<div style="left:983px;top:789px;width:9px;height:17px;background:#48a066;"></div>
<svg style="left:983px;top:789px;" width="42" height="17" viewBox="0 0 42 17"><circle cx="14.5" cy="8.5" r="4.1" fill="#d2d4d6" stroke="none" stroke-width="1" /><rect x="20.2" y="4.3" width="2.8" height="8.4" fill="#d2d4d6" /><rect x="23.9" y="4.3" width="2.8" height="8.4" fill="#d2d4d6" /><rect x="27.6" y="4.3" width="2.8" height="8.4" fill="#d2d4d6" /><path d="M31.600 4v9l7-4.500z" fill="#d2d4d6" stroke="none" stroke-width="1" /></svg>
<div style="left:1030px;top:788.5px;width:71px;height:17px;line-height:17px;font-size:12px;color:#fff;text-align:left;white-space:nowrap;overflow:hidden;letter-spacing:-0.350px;">6:SAX</div>
<div style="left:983px;top:806px;width:9px;height:17px;background:#82f08c;"></div>
<svg style="left:983px;top:806px;" width="42" height="17" viewBox="0 0 42 17"><circle cx="14.5" cy="8.5" r="4.1" fill="#d2d4d6" stroke="none" stroke-width="1" /><rect x="20.2" y="4.3" width="2.8" height="8.4" fill="#d2d4d6" /><rect x="23.9" y="4.3" width="2.8" height="8.4" fill="#d2d4d6" /><rect x="27.6" y="4.3" width="2.8" height="8.4" fill="#d2d4d6" /><path d="M31.600 4v9l7-4.500z" fill="#d2d4d6" stroke="none" stroke-width="1" /></svg>
<div style="left:1030px;top:805.5px;width:71px;height:17px;line-height:17px;font-size:12px;color:#fff;text-align:left;white-space:nowrap;overflow:hidden;letter-spacing:-0.350px;">7:Synth</div>
<div style="left:983px;top:823px;width:9px;height:17px;background:#1ebef2;"></div>
<svg style="left:983px;top:823px;" width="42" height="17" viewBox="0 0 42 17"><circle cx="14.5" cy="8.5" r="4.1" fill="#d2d4d6" stroke="none" stroke-width="1" /><rect x="20.2" y="4.3" width="2.8" height="8.4" fill="#d2d4d6" /><rect x="23.9" y="4.3" width="2.8" height="8.4" fill="#d2d4d6" /><rect x="27.6" y="4.3" width="2.8" height="8.4" fill="#d2d4d6" /><path d="M31.600 4v9l7-4.500z" fill="#d2d4d6" stroke="none" stroke-width="1" /></svg>
<div style="left:1030px;top:822.5px;width:71px;height:17px;line-height:17px;font-size:12px;color:#fff;text-align:left;white-space:nowrap;overflow:hidden;letter-spacing:-0.350px;">8:DRUM</div>
<div style="left:983px;top:840px;width:9px;height:17px;background:#12e08e;"></div>
<svg style="left:983px;top:840px;" width="42" height="17" viewBox="0 0 42 17"><circle cx="14.5" cy="8.5" r="4.1" fill="#d2d4d6" stroke="none" stroke-width="1" /><rect x="20.2" y="4.3" width="2.8" height="8.4" fill="#1fa44a" /><rect x="23.9" y="4.3" width="2.8" height="8.4" fill="#1fa44a" /><rect x="27.6" y="4.3" width="2.8" height="8.4" fill="#d2d4d6" /><path d="M31.600 4v9l7-4.500z" fill="#d2d4d6" stroke="none" stroke-width="1" /></svg>
<div style="left:1030px;top:839.5px;width:71px;height:17px;line-height:17px;font-size:12px;color:#fff;text-align:left;white-space:nowrap;overflow:hidden;letter-spacing:-0.350px;">9:Bass[Drum1]</div>
<div style="left:1101px;top:569px;width:4px;height:365px;background:#484d55;"></div>
<div style="left:1106px;top:569px;width:544px;height:21px;background:#262b35;"></div>
<div style="left:1227.5px;top:587.5px;width:184.5px;height:1.6px;background:#f0f2f4;"></div>
<div style="left:1446.5px;top:587.5px;width:184.5px;height:1.6px;background:#f0f2f4;"></div>
<div style="left:1227.1px;top:580px;width:1.4px;height:8px;background:#e8eaec;"></div>
<div style="left:1273px;top:583px;width:1.4px;height:5px;background:#e8eaec;"></div>
<div style="left:1318.8px;top:583px;width:1.4px;height:5px;background:#e8eaec;"></div>
<div style="left:1364.6px;top:583px;width:1.4px;height:5px;background:#e8eaec;"></div>
<div style="left:1446.1px;top:580px;width:1.4px;height:8px;background:#e8eaec;"></div>
<div style="left:1491.7px;top:583px;width:1.4px;height:5px;background:#e8eaec;"></div>
<div style="left:1537.3px;top:583px;width:1.4px;height:5px;background:#e8eaec;"></div>
<div style="left:1583px;top:583px;width:1.4px;height:5px;background:#e8eaec;"></div>
<div style="left:1222px;top:571px;width:18px;height:14px;line-height:14px;font-size:11.5px;color:#f2f2f2;text-align:center;white-space:nowrap;overflow:hidden;">2</div>
<div style="left:1440px;top:571px;width:18px;height:14px;line-height:14px;font-size:11.5px;color:#f2f2f2;text-align:center;white-space:nowrap;overflow:hidden;">3</div>
<div style="left:1106px;top:591px;width:544px;height:298.5px;background:#eff0ea;"></div>
<svg style="left:1106px;top:591px;" width="544" height="298.5" viewBox="0 0 544 298.5"><rect x="0" y="16.5" width="544" height="1" fill="#cfd0ca" /><rect x="0" y="33.5" width="544" height="1" fill="#cfd0ca" /><rect x="0" y="50.5" width="544" height="1" fill="#cfd0ca" /><rect x="121.3" y="0" width="1.1" height="298.5" fill="#aeb0ac" /><rect x="167.2" y="0" width="1.1" height="298.5" fill="#aeb0ac" /><rect x="213" y="0" width="1.1" height="298.5" fill="#aeb0ac" /><rect x="258.8" y="0" width="1.1" height="298.5" fill="#aeb0ac" /><rect x="340.3" y="0" width="1.1" height="298.5" fill="#aeb0ac" /><rect x="385.9" y="0" width="1.1" height="298.5" fill="#aeb0ac" /><rect x="431.5" y="0" width="1.1" height="298.5" fill="#aeb0ac" /><rect x="477.2" y="0" width="1.1" height="298.5" fill="#aeb0ac" /><rect x="29.5" y="62" width="514.5" height="1.2" fill="#111" /><rect x="29.5" y="71" width="514.5" height="1.2" fill="#111" /><rect x="29.5" y="80" width="514.5" height="1.2" fill="#111" /><rect x="29.5" y="89" width="514.5" height="1.2" fill="#111" /><rect x="29.5" y="98" width="514.5" height="1.2" fill="#111" /><rect x="29.5" y="128.5" width="514.5" height="1.2" fill="#111" /><rect x="29.5" y="142.5" width="514.5" height="1.2" fill="#111" /><rect x="29.5" y="156.5" width="514.5" height="1.2" fill="#111" /><rect x="29.5" y="170.5" width="514.5" height="1.2" fill="#111" /><rect x="28.9" y="62" width="1.3" height="109.7" fill="#111" /><rect x="313.8" y="62" width="1.3" height="109.5" fill="#111" /><rect x="531.9" y="62" width="1.3" height="109.5" fill="#111" /><path d="M2 62.500l9 0-9 7z" fill="#9a9a96" stroke="none" stroke-width="1" /><path d="M2 129l9 0-9 7z" fill="#9a9a96" stroke="none" stroke-width="1" /><path d="M35.8 71.0 C35.8 64.5 41.0 61.8 46.0 61.8 C52.5 61.8 56.0 66.5 56.0 73.0 C56.0 82.0 46.5 88.5 34.5 92.5 L34.2 91.6 C43.5 86.5 49.8 81.0 49.8 72.5 C49.8 66.8 47.8 63.6 44.8 63.6 C42.0 63.6 39.5 65.5 38.8 68.5 Z" fill="#111" stroke="none" stroke-width="1" /><circle cx="39.6" cy="71" r="3.3" fill="#111" stroke="none" stroke-width="1" /><circle cx="59" cy="67.5" r="1.8" fill="#111" stroke="none" stroke-width="1" /><circle cx="59" cy="76.5" r="1.8" fill="#111" stroke="none" stroke-width="1" /><text x="77.5" y="81" font-size="27" fill="#111" text-anchor="middle" font-weight="bold" style="font-family:'Liberation Serif',serif" stroke="#111" stroke-width="0.700">4</text><text x="77.5" y="99" font-size="27" fill="#111" text-anchor="middle" font-weight="bold" style="font-family:'Liberation Serif',serif" stroke="#111" stroke-width="0.700">4</text><ellipse cx="123.0" cy="98.0" rx="5.300" ry="3.200" fill="#111" transform="rotate(-25 123.0 98.0)"/><ellipse cx="123.0" cy="98.0" rx="4" ry="1.400" fill="#eff0ea" transform="rotate(-25 123.0 98.0)"/><rect x="127" y="67" width="1.1" height="30" fill="#111" /><ellipse cx="198.5" cy="98.0" rx="5.300" ry="3.200" fill="#111" transform="rotate(-25 198.5 98.0)"/><ellipse cx="198.5" cy="98.0" rx="4" ry="1.400" fill="#eff0ea" transform="rotate(-25 198.5 98.0)"/><rect x="202.5" y="67" width="1.1" height="30" fill="#111" /><ellipse cx="340.8" cy="93.7" rx="5.300" ry="3.200" fill="#111" transform="rotate(-25 340.8 93.7)"/><ellipse cx="340.8" cy="93.7" rx="4" ry="1.400" fill="#eff0ea" transform="rotate(-25 340.8 93.7)"/><rect x="344.8" y="63.7" width="1.1" height="29" fill="#111" /><ellipse cx="415.7" cy="88.4" rx="5.300" ry="3.200" fill="#111" transform="rotate(-25 415.7 88.4)"/><ellipse cx="415.7" cy="88.4" rx="4" ry="1.400" fill="#eff0ea" transform="rotate(-25 415.7 88.4)"/><rect x="419.7" y="57.3" width="1.1" height="30.1" fill="#111" /><rect x="185.2" y="88" width="1.1" height="22" fill="#111" /><rect x="188.7" y="87" width="1.1" height="22" fill="#111" /><path d="M183.5 95.3l8-2.300v2.800l-8 2.300zM183.5 101.8l8-2.300v2.800l-8 2.300z" fill="#111" stroke="none" stroke-width="1" /><rect x="403.5" y="75.4" width="1.1" height="17" fill="#111" /><path d="M404.5 85.9c3-3.500 7-1.500 4.500 2-1.300 1.800-3.300 3-4.500 3.800z" fill="none" stroke="#111" stroke-width="1.3" /><line x1="300.5" y1="75" x2="294" y2="98" stroke="#111" stroke-width="1.4" /><circle cx="294.5" cy="77" r="2.2" fill="#111" stroke="none" stroke-width="1" /><circle cx="292.2" cy="85.5" r="2.2" fill="#111" stroke="none" stroke-width="1" /><path d="M294.0 78.5q3 2 5.800-2M291.7 87.0q3 2 5.800-2" fill="none" stroke="#111" stroke-width="1" /><line x1="300.5" y1="141" x2="294" y2="164" stroke="#111" stroke-width="1.4" /><circle cx="294.5" cy="143" r="2.2" fill="#111" stroke="none" stroke-width="1" /><circle cx="292.2" cy="151.5" r="2.2" fill="#111" stroke="none" stroke-width="1" /><path d="M294.0 144.5q3 2 5.800-2M291.7 153.0q3 2 5.800-2" fill="none" stroke="#111" stroke-width="1" /><line x1="518.5" y1="75" x2="512" y2="98" stroke="#111" stroke-width="1.4" /><circle cx="512.5" cy="77" r="2.2" fill="#111" stroke="none" stroke-width="1" /><circle cx="510.2" cy="85.5" r="2.2" fill="#111" stroke="none" stroke-width="1" /><path d="M512.0 78.5q3 2 5.800-2M509.7 87.0q3 2 5.800-2" fill="none" stroke="#111" stroke-width="1" /><line x1="518.5" y1="141" x2="512" y2="164" stroke="#111" stroke-width="1.4" /><circle cx="512.5" cy="143" r="2.2" fill="#111" stroke="none" stroke-width="1" /><circle cx="510.2" cy="151.5" r="2.2" fill="#111" stroke="none" stroke-width="1" /><path d="M512.0 144.5q3 2 5.800-2M509.7 153.0q3 2 5.800-2" fill="none" stroke="#111" stroke-width="1" /><text x="46" y="140.8" font-size="14.5" fill="#111" text-anchor="middle" font-weight="normal" style="font-family:'Liberation Serif',serif">T</text><text x="46" y="154.8" font-size="14.5" fill="#111" text-anchor="middle" font-weight="normal" style="font-family:'Liberation Serif',serif">A</text><text x="46" y="168.8" font-size="14.5" fill="#111" text-anchor="middle" font-weight="normal" style="font-family:'Liberation Serif',serif">B</text><rect x="121.9" y="132" width="1.2" height="31" fill="#111" /><rect x="116.8" y="163.0" width="11.500" height="14.500" fill="#eff0ea" stroke="#111" stroke-width="1.100"/><text x="122.5" y="175" font-size="12.5" fill="#111" text-anchor="middle" font-weight="bold" style="font-family:'Liberation Serif',serif;font-style:italic">3</text><rect x="197.9" y="132" width="1.2" height="31" fill="#111" /><rect x="192.8" y="163.0" width="11.500" height="14.500" fill="#eff0ea" stroke="#111" stroke-width="1.100"/><text x="198.5" y="175" font-size="12.5" fill="#111" text-anchor="middle" font-weight="bold" style="font-family:'Liberation Serif',serif;font-style:italic">4</text><rect x="339.9" y="132" width="1.2" height="31" fill="#111" /><rect x="334.8" y="163.0" width="11.500" height="14.500" fill="#eff0ea" stroke="#111" stroke-width="1.100"/><text x="340.5" y="175" font-size="12.5" fill="#111" text-anchor="middle" font-weight="bold" style="font-family:'Liberation Serif',serif;font-style:italic">5</text><rect x="415.9" y="132" width="1.2" height="31" fill="#111" /><rect x="410.8" y="163.0" width="11.500" height="14.500" fill="#eff0ea" stroke="#111" stroke-width="1.100"/><text x="416.5" y="175" font-size="12.5" fill="#111" text-anchor="middle" font-weight="bold" style="font-family:'Liberation Serif',serif;font-style:italic">6</text></svg>
<div style="left:1108px;top:591.5px;width:80px;height:17px;line-height:17px;font-size:12px;color:#1a1a1a;text-align:left;white-space:nowrap;overflow:hidden;">Marker</div>
<div style="left:1108px;top:608.5px;width:80px;height:17px;line-height:17px;font-size:12px;color:#1a1a1a;text-align:left;white-space:nowrap;overflow:hidden;">Tempo</div>
<div style="left:1108px;top:625.5px;width:80px;height:17px;line-height:17px;font-size:12px;color:#1a1a1a;text-align:left;white-space:nowrap;overflow:hidden;">Chord</div>
<svg style="left:1325px;top:569.5px;" width="14" height="12" viewBox="0 0 14 12"><path d="M2 0.500h8.600l-4.300 10.800z" fill="#217fc6" stroke="none" stroke-width="1" /></svg>
<div style="left:1330.7px;top:579px;width:1.5px;height:63px;background:#2222b8;"></div>
<div style="left:1650px;top:569px;width:16.5px;height:320.5px;background:#1c2027;"></div>
<div style="left:1650px;top:569px;width:16.5px;height:16px;background:#414a57;"></div>
<svg style="left:1650px;top:569px;" width="16.5" height="16" viewBox="0 0 16.5 16"><path d="M4.8 10.0l3.500-4 3.500 4" fill="none" stroke="#d5dae0" stroke-width="1.7" /></svg>
<div style="left:1650px;top:788.5px;width:16.5px;height:16.5px;background:#6f7d8c;"></div>
<div style="left:1650px;top:838.5px;width:16.5px;height:17px;background:#262b35;"></div>
<svg style="left:1650px;top:838.5px;" width="16.5" height="17" viewBox="0 0 16.5 17"><path d="M4.8 6.5l3.500 4 3.500-4" fill="none" stroke="#d5dae0" stroke-width="1.7" /></svg>
<div style="left:1650.5px;top:856.5px;width:16px;height:16px;background:#6b7583;border:1px solid #8893a0;"></div>
<svg style="left:1650.5px;top:856.5px;" width="16" height="16" viewBox="0 0 16 16"><rect x="4" y="7.2" width="8" height="1.6" fill="#1c2027" /></svg>
<div style="left:1650.5px;top:873.5px;width:16px;height:16px;background:#6b7583;border:1px solid #8893a0;"></div>
<svg style="left:1650.5px;top:873.5px;" width="16" height="16" viewBox="0 0 16 16"><rect x="4" y="7.2" width="8" height="1.6" fill="#1c2027" /><rect x="7.2" y="4" width="1.6" height="8" fill="#1c2027" /></svg>
<div style="left:1106px;top:889.5px;width:562px;height:16.5px;background:#292d35;"></div>
<div style="left:1106px;top:889.5px;width:17px;height:16.5px;background:#3a414d;"></div>
<svg style="left:1106px;top:889.5px;" width="17" height="16.5" viewBox="0 0 17 16.5"><path d="M10.5 4.8l-4 3.500 4 3.500" fill="none" stroke="#d5dae0" stroke-width="1.7" /></svg>
<div style="left:1124.5px;top:889.5px;width:17.5px;height:16.5px;background:#6f7d8c;"></div>
<div style="left:1598px;top:889.5px;width:17px;height:16.5px;background:#3a414d;"></div>
<svg style="left:1598px;top:889.5px;" width="17" height="16.5" viewBox="0 0 17 16.5"><path d="M6.5 4.8l4 3.500-4 3.500" fill="none" stroke="#d5dae0" stroke-width="1.7" /></svg>
<div style="left:1616px;top:890px;width:16px;height:16px;background:#6b7583;border:1px solid #8893a0;"></div>
<svg style="left:1616px;top:890px;" width="16" height="16" viewBox="0 0 16 16"><rect x="4" y="7.2" width="8" height="1.6" fill="#1c2027" /></svg>
<div style="left:1633px;top:890px;width:16px;height:16px;background:#6b7583;border:1px solid #8893a0;"></div>
<svg style="left:1633px;top:890px;" width="16" height="16" viewBox="0 0 16 16"><rect x="4" y="7.2" width="8" height="1.6" fill="#1c2027" /><rect x="7.2" y="4" width="1.6" height="8" fill="#1c2027" /></svg>
<svg style="left:1653px;top:892.5px;" width="12" height="12" viewBox="0 0 12 12"><rect x="8" y="2" width="1.6" height="1.6" fill="#aab2bc" /><rect x="5" y="5" width="1.6" height="1.6" fill="#aab2bc" /><rect x="8" y="5" width="1.6" height="1.6" fill="#aab2bc" /><rect x="2" y="8" width="1.6" height="1.6" fill="#aab2bc" /><rect x="5" y="8" width="1.6" height="1.6" fill="#aab2bc" /><rect x="8" y="8" width="1.6" height="1.6" fill="#aab2bc" /></svg>
<div style="left:1106px;top:906px;width:562px;height:2px;background:#3a3d42;"></div>
<div style="left:1108px;top:912px;width:26px;height:19px;background:#262b35;border:1px solid #15171b;box-shadow:0 0 0 1px #50555d;"></div>
<svg style="left:1108px;top:912px;" width="26" height="19" viewBox="0 0 26 19"><path d="M4.500 4.500h9v9h-9z" fill="none" stroke="#d0d4d8" stroke-width="1" stroke-dasharray="1.500 1"/><path d="M16 5v10l2.300-2 1.700 3.500 1.500-0.700-1.700-3.300h3z" fill="#f0f0f0" stroke="none" stroke-width="1" /></svg>
<div style="left:1135px;top:912px;width:30px;height:19px;background:#2a5588;border:1px solid #15171b;box-shadow:0 0 0 1px #50555d;"></div>
<svg style="left:1135px;top:912px;" width="30" height="19" viewBox="0 0 30 19"><path d="M3.500 12C5 2.500 8.500 2.500 10.500 9.500S14.500 16.500 16.500 9.500S21 2.500 23 9.500S25.500 15 26.500 14" fill="none" stroke="#dfe7f0" stroke-width="1.2" /></svg>
<div style="left:1167px;top:912px;width:10px;height:19px;background:#262b35;border:1px solid #15171b;box-shadow:0 0 0 1px #50555d;"></div>
<svg style="left:1167px;top:912px;" width="10" height="19" viewBox="0 0 10 19"><path d="M1.500 5h7l-3.500 4z" fill="#e0e4e8" stroke="none" stroke-width="1" /></svg>
<div style="left:1180px;top:912px;width:142px;height:19px;background:#262b35;border:1px solid #15171b;box-shadow:0 0 0 1px #50555d;"></div>
<div style="left:1190px;top:912px;width:112px;height:19px;line-height:19px;font-size:12.5px;color:#e6e9ec;text-align:left;white-space:nowrap;overflow:hidden;font-weight:bold;">Strip Chart</div>
<svg style="left:1298px;top:912px;" width="20" height="19" viewBox="0 0 20 19"><path d="M3 5.500h12l-6 6.500z" fill="#e0e4e8" stroke="none" stroke-width="1" /></svg>
<div style="left:1324px;top:912px;width:56px;height:19px;background:#262b35;border:1px solid #15171b;box-shadow:0 0 0 1px #50555d;"></div>
<div style="left:1329px;top:912px;width:60px;height:19px;line-height:19px;font-size:12.5px;color:#e6e9ec;text-align:left;white-space:nowrap;overflow:hidden;font-weight:bold;">Interval</div>
<div style="left:1382px;top:913px;width:49px;height:17px;background:#fff;border:1px solid #9aa0a8;"></div>
<div style="left:1382px;top:913px;width:31px;height:17px;line-height:17px;font-size:11.5px;color:#111;text-align:right;white-space:nowrap;overflow:hidden;">30</div>
<svg style="left:1415px;top:913px;" width="15" height="17" viewBox="0 0 15 17"><path d="M3.500 7l4-4 4 4zM3.500 10l4 4 4-4z" fill="#333" stroke="none" stroke-width="1" /><path d="M1 1h13v15h-13z" fill="none" stroke="#bbb" stroke-width="0.8" /></svg>
<div style="left:1434px;top:912px;width:107px;height:19px;background:#262b35;border:1px solid #15171b;box-shadow:0 0 0 1px #50555d;"></div>
<div style="left:1439px;top:912px;width:60px;height:19px;line-height:19px;font-size:12.5px;color:#e6e9ec;text-align:left;white-space:nowrap;overflow:hidden;font-weight:bold;">Track&nbsp; :</div>
<div style="left:1434px;top:912px;width:99px;height:19px;line-height:19px;font-size:12.5px;color:#e6e9ec;text-align:right;white-space:nowrap;overflow:hidden;font-weight:bold;">2</div>
<div style="left:1543.5px;top:912px;width:26px;height:19px;background:#2a5588;border:1px solid #15171b;box-shadow:0 0 0 1px #50555d;"></div>
<svg style="left:1543.5px;top:912px;" width="26" height="19" viewBox="0 0 26 19"><path d="M4 15v-3l8-6h9v9z" fill="#e0e3e6" stroke="none" stroke-width="1" /></svg>
<div style="left:1571.5px;top:912px;width:26px;height:19px;background:#262b35;border:1px solid #15171b;box-shadow:0 0 0 1px #50555d;"></div>
<svg style="left:1571.5px;top:912px;" width="26" height="19" viewBox="0 0 26 19"><path d="M4 13h5l6-6h6" fill="none" stroke="#f0f2f4" stroke-width="1.6" /><rect x="3" y="11.5" width="3" height="3" fill="#f0f2f4" /><rect x="19" y="5.5" width="3" height="3" fill="#f0f2f4" /></svg>
<div style="left:1599.5px;top:912px;width:26px;height:19px;background:#262b35;border:1px solid #15171b;box-shadow:0 0 0 1px #50555d;"></div>
<svg style="left:1599.5px;top:912px;" width="26" height="19" viewBox="0 0 26 19"><path d="M3 16l5-11h1l3 10.500h10" fill="none" stroke="#e0e3e6" stroke-width="1.2" /></svg>
<div style="left:1627.5px;top:912px;width:26px;height:19px;background:#2a5588;border:1px solid #15171b;box-shadow:0 0 0 1px #50555d;"></div>
<svg style="left:1627.5px;top:912px;" width="26" height="19" viewBox="0 0 26 19"><path d="M3 16c4 0 4-11 8-11h11" fill="none" stroke="#e0e3e6" stroke-width="1.2" /></svg>
<div style="left:1655.5px;top:912px;width:12.5px;height:19px;background:#262b35;border:1px solid #15171b;box-shadow:0 0 0 1px #50555d;"></div>
<svg style="left:1655.5px;top:912px;" width="12.5" height="19" viewBox="0 0 12.5 19"><path d="M6 4v11" fill="none" stroke="#e0e3e6" stroke-width="1.4" /><path d="M9 9.500l4-3v2.200h8v1.600h-8v2.200z" fill="#e0e3e6" stroke="none" stroke-width="1" /></svg>
<div style="left:1668px;top:569px;width:2px;height:365px;background:#4a4d52;"></div>
<div style="left:1670px;top:569px;width:24px;height:365px;background:#262b35;"></div>
<svg style="left:1672px;top:571px;" width="20" height="16" viewBox="0 0 20 16"><path d="M8 2l-6 5.500 6 5.500M16 2l-6 5.500 6 5.500" fill="none" stroke="#eef0f2" stroke-width="1.5" /></svg>
<div style="left:983px;top:934px;width:86px;height:21.5px;"><svg width="86" height="21.5" viewBox="0 0 86 21.5" style="left:0;top:0"><path d="M0 0h86 l-5 18.5 q-1 2 -3 2 h-64 q-2 0 -3 -2z" fill="#3a424e" stroke="#4a5360" stroke-width="1"/></svg></div>
<div class="jp" style="left:986px;top:934.5px;width:62px;height:18.5px;line-height:18.5px;font-size:10px;color:#fff;text-align:center;white-space:nowrap;overflow:hidden;font-weight:bold;letter-spacing:-0.3px;overflow:visible;">スコア</div>
<div style="left:1048px;top:938px;width:13px;height:13px;background:#323943;border:1px solid #5b6470;"></div>
<svg style="left:1048px;top:938px;" width="13" height="13" viewBox="0 0 13 13"><path d="M3.500 3.500l6 6M9.500 3.500l-6 6" fill="none" stroke="#6c7580" stroke-width="1.6" /></svg>
<div style="left:0px;top:963px;width:1920px;height:56px;background:#454d58;"></div>
<div style="left:0px;top:1019px;width:1920px;height:17px;background:#2a2e36;"></div>
<div style="left:514px;top:970px;width:128px;height:40px;background:#252a33;border:1px solid #15181d;border-radius:3px;box-shadow:0 0 0 1px #4e5763;"></div>
<svg style="left:518px;top:974px;" width="12" height="18" viewBox="0 0 12 18"><rect x="2" y="1" width="1.8" height="16" fill="#9aa4b0" /><rect x="5.5" y="1" width="1.8" height="16" fill="#9aa4b0" /><rect x="9" y="5" width="1.5" height="1.5" fill="#9aa4b0" /><rect x="9" y="11" width="1.5" height="1.5" fill="#9aa4b0" /></svg>
<div style="left:530px;top:972px;width:106px;height:22px;line-height:22px;font-size:17.5px;color:#fff;text-align:right;white-space:nowrap;overflow:hidden;letter-spacing:1.500px;">2.&nbsp; 3.120</div>
<div style="left:530px;top:993px;width:98px;height:17px;line-height:17px;font-size:13.5px;color:#fff;text-align:right;white-space:nowrap;overflow:hidden;font-weight:bold;letter-spacing:0.600px;">00:00:03:22</div>
<div style="left:648px;top:971px;width:119.5px;height:24.5px;background:#888;border-radius:3px;"></div>
<div style="left:648px;top:971px;width:39.5px;height:24.5px;background:linear-gradient(#e6e4e2,#cfcdcb 50%,#b8b6b4);border-radius:3px 0 0 3px;"></div>
<div style="left:687.5px;top:971px;width:40px;height:24.5px;background:linear-gradient(#a8727e,#9a6270 50%,#8e5866);"></div>
<div style="left:727.5px;top:971px;width:40px;height:24.5px;background:linear-gradient(#e6e4e2,#cfcdcb 50%,#b8b6b4);border-radius:0 3px 3px 0;"></div>
<svg style="left:648px;top:971px;" width="120" height="24.5" viewBox="0 0 120 24.5"><rect x="11" y="7.5" width="2" height="10" fill="#111" /><path d="M21 7.500v10l-7.500-5zM29 7.500v10l-7.500-5z" fill="#111" stroke="none" stroke-width="1" /><circle cx="59.5" cy="12.3" r="5" fill="#2a1418" stroke="none" stroke-width="1" /><path d="M95 7l9 5.300-9 5.300z" fill="#111" stroke="none" stroke-width="1" /></svg>
<div style="left:648px;top:1000px;width:154px;height:10px;background:#252a33;border:1px solid #15181d;border-radius:2px;box-shadow:0 0 0 1px #4e5763;"></div>
<svg style="left:648px;top:1000px;" width="154" height="10" viewBox="0 0 154 10"><path d="M3 5l3-2v4zM6.500 2.500h1v5h-1z" fill="#9aa4b0" stroke="none" stroke-width="1" /><rect x="11.5" y="1.5" width="7" height="7" fill="#f0f0f0" /><path d="M151 5l-3-2v4zM146.500 2.500h1v5h-1zM144.500 2.500h1v5h-1z" fill="#9aa4b0" stroke="none" stroke-width="1" /></svg>
<div style="left:774px;top:971px;width:27.5px;height:24.5px;background:linear-gradient(#92928e,#7e7e7a);border-radius:3px;"></div>
<svg style="left:774px;top:971px;" width="27.5" height="24.5" viewBox="0 0 27.5 24.5"><rect x="8" y="6.5" width="3" height="1.2" fill="#6a6a66" /><rect x="12.5" y="6.5" width="8" height="1.2" fill="#6a6a66" /><rect x="8" y="9.7" width="3" height="1.2" fill="#6a6a66" /><rect x="12.5" y="9.7" width="8" height="1.2" fill="#6a6a66" /><rect x="8" y="12.9" width="3" height="1.2" fill="#6a6a66" /><rect x="12.5" y="12.9" width="8" height="1.2" fill="#6a6a66" /><rect x="8" y="16.1" width="3" height="1.2" fill="#6a6a66" /><rect x="12.5" y="16.1" width="8" height="1.2" fill="#6a6a66" /></svg>
<div style="left:807px;top:971px;width:66.5px;height:24.5px;background:#252a33;border:1px solid #15181d;border-radius:3px;box-shadow:0 0 0 1px #4e5763;"></div>
<div style="left:810px;top:972px;width:50px;height:22px;line-height:22px;font-size:14.5px;color:#fff;text-align:left;white-space:nowrap;overflow:hidden;letter-spacing:0.200px;">100.00</div>
<div style="left:861.5px;top:981px;width:3.5px;height:3.5px;background:#d8dce0;"></div>
<div style="left:807px;top:1000px;width:66.5px;height:10px;background:#252a33;border:1px solid #15181d;border-radius:3px;box-shadow:0 0 0 1px #4e5763;"></div>
<div style="left:819px;top:1001.5px;width:7px;height:7px;background:#f0f0f0;"></div>
<div style="left:879.5px;top:970px;width:21.5px;height:40px;background:#252a33;border:1px solid #15181d;border-radius:3px;box-shadow:0 0 0 1px #4e5763;"></div>
<svg style="left:879.5px;top:970px;" width="21.5" height="40" viewBox="0 0 21.5 40"><path d="M8.500 6h4.500l-2.250-3zM8.500 33.500h4.500l-2.250 3z" fill="#9aa4b0" stroke="none" stroke-width="1" /><rect x="8" y="7.5" width="5.5" height="0.8" fill="#9aa4b0" /><rect x="8" y="31.5" width="5.5" height="0.8" fill="#9aa4b0" /></svg>
<div style="left:879.5px;top:980px;width:21.5px;height:20px;line-height:20px;font-size:13px;color:#fff;text-align:center;white-space:nowrap;overflow:hidden;">0</div>
<div style="left:907.5px;top:970px;width:75.5px;height:40px;background:#252a33;border:1px solid #15181d;border-radius:3px;box-shadow:0 0 0 1px #4e5763;"></div>
<div style="left:914px;top:972px;width:50px;height:18px;line-height:18px;font-size:10px;color:#5f6873;text-align:left;white-space:nowrap;overflow:hidden;font-weight:bold;">Pre-roll</div>
<div style="left:914px;top:991px;width:50px;height:18px;line-height:18px;font-size:10px;color:#5f6873;text-align:left;white-space:nowrap;overflow:hidden;font-weight:bold;">Post-roll</div>
<div style="left:957.5px;top:971px;width:1px;height:38px;background:#2d323b;"></div>
<div style="left:960px;top:971px;width:19.5px;height:19px;line-height:19px;font-size:12.5px;color:#fff;text-align:right;white-space:nowrap;overflow:hidden;">0</div>
<div style="left:960px;top:990px;width:19.5px;height:19px;line-height:19px;font-size:12.5px;color:#fff;text-align:right;white-space:nowrap;overflow:hidden;">0</div>
<div style="left:988.5px;top:970px;width:156.5px;height:40px;background:#252a33;border:1px solid #15181d;border-radius:3px;box-shadow:0 0 0 1px #4e5763;"></div>
<div style="left:992px;top:972px;width:22px;height:18px;line-height:18px;font-size:10px;color:#5f6873;text-align:left;white-space:nowrap;overflow:hidden;font-weight:bold;">Key</div>
<div style="left:1016px;top:972px;width:56px;height:18px;line-height:18px;font-size:10px;color:#5f6873;text-align:left;white-space:nowrap;overflow:hidden;font-weight:bold;">Punch In</div>
<div style="left:1016px;top:991px;width:56px;height:18px;line-height:18px;font-size:10px;color:#5f6873;text-align:left;white-space:nowrap;overflow:hidden;font-weight:bold;">Punch Out</div>
<div style="left:1069px;top:971px;width:1px;height:38px;background:#2d323b;"></div>
<div style="left:1072px;top:971px;width:48px;height:19px;line-height:19px;font-size:12.5px;color:#fff;text-align:right;white-space:nowrap;overflow:hidden;letter-spacing:0px;">2. 1.&nbsp; 0</div>
<div style="left:1072px;top:990px;width:48px;height:19px;line-height:19px;font-size:12.5px;color:#fff;text-align:right;white-space:nowrap;overflow:hidden;letter-spacing:0px;">2. 1.&nbsp; 0</div>
<svg style="left:1127px;top:977px;" width="10" height="9" viewBox="0 0 10 9"><rect x="1" y="0.5" width="7" height="1" fill="#5f6873" /><rect x="2" y="2.8" width="5" height="1" fill="#5f6873" /><rect x="3" y="5" width="3" height="1" fill="#5f6873" /><rect x="4" y="7" width="1" height="1.5" fill="#5f6873" /></svg>
<svg style="left:1127px;top:996px;" width="10" height="9" viewBox="0 0 10 9"><rect x="1" y="0.5" width="7" height="1" fill="#5f6873" /><rect x="2" y="2.8" width="5" height="1" fill="#5f6873" /><rect x="3" y="5" width="3" height="1" fill="#5f6873" /><rect x="4" y="7" width="1" height="1.5" fill="#5f6873" /></svg>
<div style="left:1151px;top:971px;width:224px;height:18.5px;background:#6a6a6a;border-radius:3px;"></div>
<div style="left:1151px;top:971px;width:27.3px;height:18.5px;background:linear-gradient(#f4dc7c,#e2c04c 50%,#cfa72e);border-radius:3px 0 0 3px;"></div>
<div style="left:1179px;top:971px;width:27.3px;height:18.5px;background:linear-gradient(#f4dc7c,#e2c04c 50%,#cfa72e);border-radius:0;"></div>
<div style="left:1207px;top:971px;width:27.3px;height:18.5px;background:linear-gradient(#f4dc7c,#e2c04c 50%,#cfa72e);border-radius:0;"></div>
<div style="left:1235px;top:971px;width:27.3px;height:18.5px;background:linear-gradient(#f4dc7c,#e2c04c 50%,#cfa72e);border-radius:0;"></div>
<div style="left:1263px;top:971px;width:27.3px;height:18.5px;background:linear-gradient(#e4e4e4,#c4c4c4 50%,#a8a8a8);border-radius:0;"></div>
<div style="left:1291px;top:971px;width:27.3px;height:18.5px;background:linear-gradient(#e4e4e4,#c4c4c4 50%,#a8a8a8);border-radius:0;"></div>
<div style="left:1319px;top:971px;width:27.3px;height:18.5px;background:linear-gradient(#f4dc7c,#e2c04c 50%,#cfa72e);border-radius:0;"></div>
<div style="left:1347px;top:971px;width:27.3px;height:18.5px;background:linear-gradient(#e4e4e4,#c4c4c4 50%,#a8a8a8);border-radius:0 3px 3px 0;"></div>
<svg style="left:1151px;top:971px;" width="224" height="18.5" viewBox="0 0 224 18.5"><text x="13.6" y="8.3" font-size="5.5" fill="#1a1a1a" text-anchor="middle" font-weight="bold" >AUTO</text><text x="13.6" y="14.8" font-size="5.5" fill="#1a1a1a" text-anchor="middle" font-weight="bold" >STOP</text><rect x="32" y="4.5" width="1.5" height="10" fill="#1a1a1a" /><rect x="50" y="4.5" width="1.5" height="10" fill="#1a1a1a" /><path d="M34 8.700h12v-2.200l4 3-4 3v-2.200h-12z" fill="#1a1a1a" stroke="none" stroke-width="1" /><path d="M66 6h9a3 3 0 0 1 3 3v3a3 3 0 0 1-3 3h-11" fill="none" stroke="#1a1a1a" stroke-width="1.6" /><path d="M66 2.500v7l-5.500-3.500z" fill="#1a1a1a" stroke="none" stroke-width="1" /><path d="M93.500 15.500l4-11 4 11z" fill="none" stroke="#1a1a1a" stroke-width="1.5" /><line x1="97.5" y1="13" x2="103.5" y2="4" stroke="#1a1a1a" stroke-width="1.2" /><text x="125.6" y="8.3" font-size="5.8" fill="#1a1a1a" text-anchor="middle" font-weight="bold" >MTC</text><text x="125.6" y="15" font-size="5.8" fill="#1a1a1a" text-anchor="middle" font-weight="bold" >OFF</text><path d="M146 8v7h9" fill="none" stroke="#1a1a1a" stroke-width="1.2" stroke-dasharray="1.500 1"/><path d="M148 4.500h12v10.500h-3v-7.500h-9z" fill="#1a1a1a" stroke="none" stroke-width="1" /><rect x="173" y="4.5" width="14" height="10" fill="#1a1a1a" /><rect x="176.8" y="6" width="1.2" height="7" fill="#e2c04c" /><rect x="181.8" y="6" width="1.2" height="7" fill="#e2c04c" /><path d="M201 6h3c4 0 4 7 8 7h3M201 9.500h14M201 13h3c4 0 4-7 8-7h3" fill="none" stroke="#1a1a1a" stroke-width="1.5" /></svg>
<div style="left:1151px;top:993.5px;width:223.5px;height:15.5px;background:#252a33;border:1px solid #15181d;border-radius:3px;box-shadow:0 0 0 1px #4e5763;"></div>
<svg style="left:1153px;top:995px;" width="10" height="12" viewBox="0 0 10 12"><rect x="1.5" y="2" width="7" height="1" fill="#b8bec6" /><rect x="1.5" y="4.3" width="7" height="1" fill="#b8bec6" /><rect x="1.5" y="6.6" width="7" height="1" fill="#b8bec6" /><rect x="1.5" y="8.9" width="7" height="1" fill="#b8bec6" /></svg>
<div style="left:1165.5px;top:993.5px;width:60px;height:15.5px;line-height:15.5px;font-size:11.5px;color:#fff;text-align:left;white-space:nowrap;overflow:hidden;">cap</div>
<div style="left:1385px;top:970.5px;width:13.5px;height:13.5px;background:#2a303a;border:1px solid #5f6976;"></div>
<svg style="left:1385px;top:970.5px;" width="13.5" height="13.5" viewBox="0 0 13.5 13.5"><path d="M3 3l7.500 7.500M10.500 3l-7.500 7.500" fill="none" stroke="#5f6976" stroke-width="1.3" /></svg>
<div style="left:1383px;top:994.5px;width:15.5px;height:14.5px;background:#2a303a;border:1px solid #15181d;"></div>
<svg style="left:1383px;top:994.5px;" width="15.5" height="14.5" viewBox="0 0 15.5 14.5"><path d="M8 2h5.500v5.500l-1.800-1.800-2.200 2.200-1.900-1.900 2.200-2.200zM7.500 12.500h-5.500v-5.500l1.800 1.800 2.200-2.200 1.900 1.900-2.200 2.200z" fill="#c8ced6" stroke="none" stroke-width="1" /></svg>
<div class="jp" style="left:8px;top:1019px;width:80px;height:17px;line-height:17px;font-size:11.5px;color:#f0f0f0;text-align:left;white-space:nowrap;overflow:hidden;">レディ</div>
<div style="left:1402px;top:1019px;width:1.5px;height:17px;background:#4a515c;"></div>
<div style="left:1471.5px;top:1019px;width:1.5px;height:17px;background:#4a515c;"></div>
<div style="left:1541px;top:1019px;width:1.5px;height:17px;background:#4a515c;"></div>
<div style="left:1667.5px;top:1019px;width:1.5px;height:17px;background:#4a515c;"></div>
<div style="left:1794px;top:1019px;width:1.5px;height:17px;background:#4a515c;"></div>
<div style="left:1478px;top:1019px;width:60px;height:17px;line-height:17px;font-size:11px;color:#f0f0f0;text-align:left;white-space:nowrap;overflow:hidden;">GUITAR</div>
<div style="left:1550px;top:1019px;width:120px;height:17px;line-height:17px;font-size:11px;color:#f0f0f0;text-align:left;white-space:nowrap;overflow:hidden;letter-spacing:0.400px;">Tempo.&nbsp;&nbsp;&nbsp; 2. 2.&nbsp; 0</div>
<div style="left:1616px;top:1034px;width:48px;height:2px;background:#6a717c;"></div>
<div style="left:1914px;top:1030px;width:4px;height:4px;background:#6a717c;"></div>
</div></body></html>
